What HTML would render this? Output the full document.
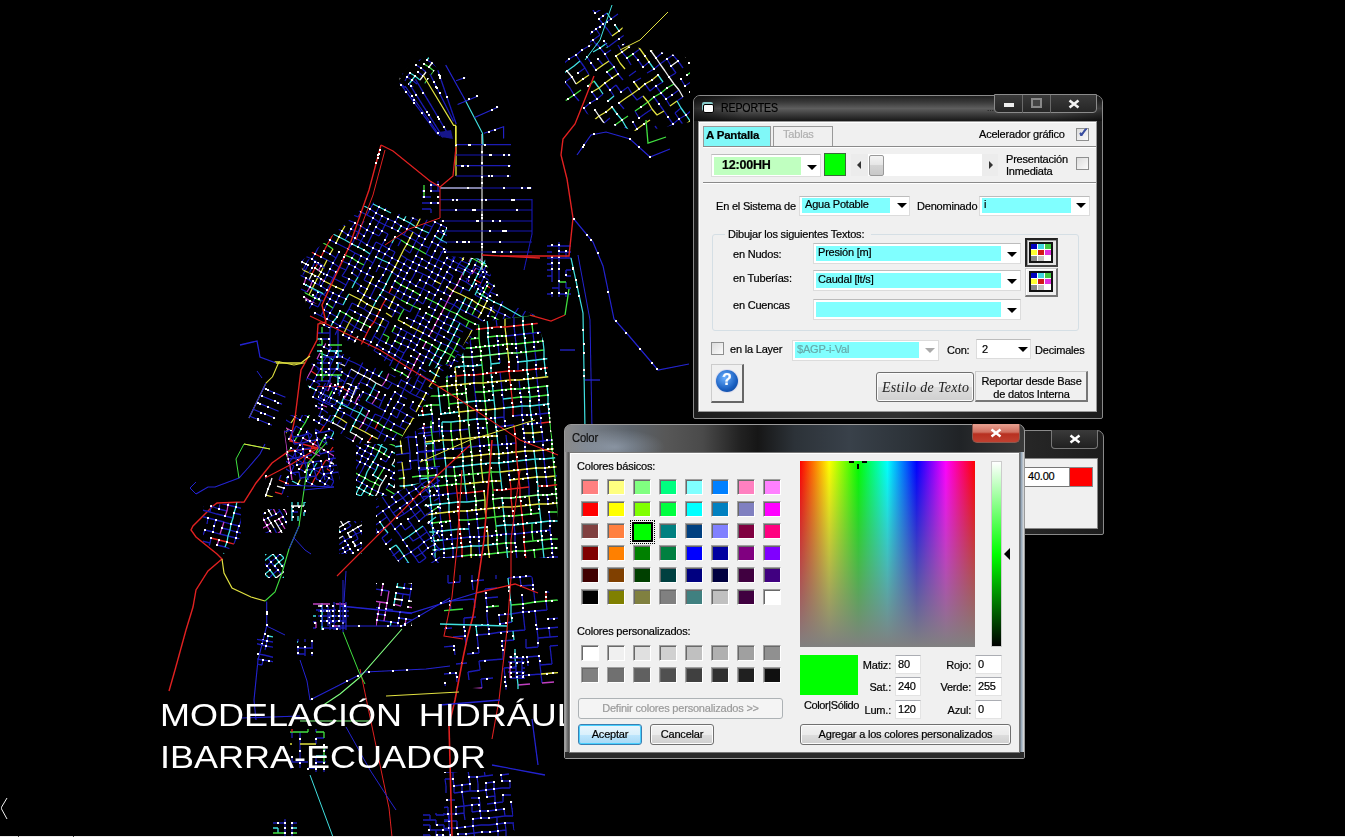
<!DOCTYPE html>
<html><head><meta charset="utf-8">
<style>
*{margin:0;padding:0;box-sizing:border-box}
html,body{width:1345px;height:837px;overflow:hidden;background:#000}
body{position:relative;font-family:"Liberation Sans",sans-serif;font-size:11px;color:#000}
.a{position:absolute}
.t{position:absolute;white-space:nowrap;line-height:1;letter-spacing:-0.2px;-webkit-text-stroke:0.2px currentColor}
#map{position:absolute;left:0;top:0}
.title{position:absolute;left:160px;color:#fff;font-size:32px;white-space:nowrap;line-height:1;transform-origin:0 0;transform:scaleX(1.125)}
/* windows */
.frame{position:absolute;border:1px solid #8a8a8a;border-radius:7px 7px 2px 2px;background:linear-gradient(#202020,#1a1a1a)}
.client{position:absolute;background:#f0f0f0;border:1px solid #999;box-shadow:inset 1px 1px 0 #fff}
.combo{position:absolute;background:#fff;border:1px solid #dcdcdc;border-top-color:#bcbcbc}
.cfill{position:absolute;left:2px;top:2px;bottom:2px;background:#80ffff}
.arr{position:absolute;width:0;height:0;border-left:5px solid transparent;border-right:5px solid transparent;border-top:5px solid #000}
.chk{position:absolute;width:13px;height:13px;border:1px solid #8e8f8f;background:linear-gradient(135deg,#dcdcdc,#fbfbfb)}
.btn{position:absolute;border:1px solid #707070;border-radius:2px;background:linear-gradient(#f2f2f2 0%,#ebebeb 50%,#dddddd 51%,#cfcfcf 100%);box-shadow:inset 0 0 0 1px #fcfcfc}
.sw{position:absolute;width:18px;height:16px;border:1px solid;border-color:#a0a0a0 #fff #fff #a0a0a0;box-shadow:inset 1px 1px 0 #696969}
.inp{position:absolute;background:#fff;border:1px solid #e3e3e3;border-top-color:#abadb3}
</style></head><body>
<svg id="map" width="1345" height="837" viewBox="0 0 1345 837" ><defs><filter id="bl" x="0" y="0" width="1" height="1"><feGaussianBlur stdDeviation="0.7"/></filter><clipPath id="c1"><polygon points="301.0,261.0 325.0,242.0 370.0,201.0 404.0,216.0 447.0,223.0 447.0,256.0 485.0,259.0 495.0,314.0 478.0,323.0 452.0,362.0 404.0,380.0 370.0,347.0 339.0,338.0 320.0,323.0 306.0,304.0"/></clipPath><clipPath id="c2"><polygon points="447.0,256.0 485.0,259.0 500.0,300.0 535.0,315.0 480.0,322.0 456.0,366.0 440.0,372.0 452.0,362.0 478.0,323.0 495.0,314.0"/></clipPath><clipPath id="c3"><polygon points="480.0,322.0 535.0,315.0 547.0,352.0 551.0,430.0 557.0,470.0 558.0,558.0 434.0,558.0 418.0,470.0 418.0,413.0 443.0,380.0 456.0,366.0"/></clipPath><clipPath id="c4"><polygon points="320.0,340.0 345.0,355.0 404.0,380.0 452.0,362.0 443.0,371.0 418.0,413.0 400.0,440.0 356.0,444.0 320.0,420.0 306.0,380.0"/></clipPath><clipPath id="c5"><polygon points="356.0,444.0 395.0,444.0 395.0,496.0 356.0,496.0"/></clipPath><clipPath id="c6"><polygon points="376.0,499.0 440.0,476.0 440.0,563.0 400.0,563.0 376.0,540.0"/></clipPath><clipPath id="c7"><polygon points="395.0,444.0 440.0,415.0 440.0,476.0 400.0,490.0"/></clipPath><clipPath id="c8"><polygon points="444.0,575.0 530.0,575.0 558.0,600.0 558.0,687.0 500.0,690.0 444.0,686.0"/></clipPath><clipPath id="c9"><polygon points="444.0,772.0 510.0,772.0 515.0,837.0 444.0,837.0"/></clipPath><clipPath id="c10"><polygon points="422.0,181.0 440.0,181.0 440.0,213.0 422.0,213.0"/></clipPath><clipPath id="c11"><polygon points="565.0,52.0 600.0,42.0 640.0,48.0 690.0,58.0 690.0,122.0 640.0,132.0 600.0,122.0 565.0,100.0"/></clipPath><clipPath id="c12"><polygon points="590.0,10.0 620.0,10.0 625.0,45.0 590.0,50.0"/></clipPath><clipPath id="c13"><polygon points="547.0,242.0 571.0,242.0 571.0,297.0 547.0,297.0"/></clipPath><clipPath id="c14"><polygon points="301.0,258.0 325.0,262.0 323.0,305.0 300.0,300.0"/></clipPath><clipPath id="c15"><polygon points="317.0,327.0 342.0,327.0 342.0,387.0 317.0,387.0"/></clipPath><clipPath id="c16"><polygon points="286.0,415.0 334.0,415.0 334.0,486.0 286.0,486.0"/></clipPath><clipPath id="c17"><polygon points="376.0,583.0 412.0,583.0 412.0,626.0 376.0,626.0"/></clipPath><clipPath id="c18"><polygon points="313.0,603.0 346.0,603.0 346.0,630.0 313.0,630.0"/></clipPath><clipPath id="c19"><polygon points="297.0,639.0 313.0,639.0 313.0,656.0 297.0,656.0"/></clipPath><clipPath id="c20"><polygon points="290.0,729.0 326.0,729.0 326.0,772.0 290.0,772.0"/></clipPath><clipPath id="c21"><polygon points="508.0,656.0 525.0,656.0 525.0,679.0 508.0,679.0"/></clipPath><clipPath id="c22"><polygon points="203.0,506.0 241.0,502.0 241.0,537.0 224.0,554.0 203.0,542.0"/></clipPath><clipPath id="c23"><polygon points="263.0,509.0 287.0,509.0 287.0,533.0 263.0,533.0"/></clipPath><clipPath id="c24"><polygon points="265.0,475.0 289.0,475.0 289.0,497.0 265.0,497.0"/></clipPath><clipPath id="c25"><polygon points="291.0,502.0 306.0,502.0 306.0,521.0 291.0,521.0"/></clipPath><clipPath id="c26"><polygon points="265.0,554.0 284.0,554.0 284.0,578.0 265.0,578.0"/></clipPath><clipPath id="c27"><polygon points="318.0,602.0 349.0,602.0 349.0,630.0 318.0,630.0"/></clipPath><clipPath id="c28"><polygon points="339.0,521.0 362.0,521.0 362.0,554.0 339.0,554.0"/></clipPath><clipPath id="c29"><polygon points="284.0,430.0 330.0,430.0 340.0,480.0 290.0,480.0"/></clipPath><clipPath id="c30"><polygon points="318.0,383.0 360.0,383.0 360.0,409.0 318.0,409.0"/></clipPath><clipPath id="c31"><polygon points="257.0,635.0 273.0,635.0 273.0,666.0 257.0,666.0"/></clipPath><clipPath id="c32"><polygon points="273.0,819.0 297.0,819.0 297.0,837.0 273.0,837.0"/></clipPath><clipPath id="c33"><polygon points="423.0,813.0 450.0,813.0 450.0,837.0 423.0,837.0"/></clipPath><clipPath id="c34"><polygon points="399.7,76.8 411.5,63.7 427.3,55.8 436.5,67.6 423.4,86.0 399.7,88.6"/></clipPath></defs><g filter="url(#bl)"><g clip-path="url(#c1)" stroke-width="1.3" fill="none"><path stroke="#1a1ab4" d="M338 89L345 93M345 93L351 96M351 96L357 99M357 99L363 103M363 103L369 106M375 109L382 112M382 112L388 116M388 116L394 119M400 122L406 126M406 126L413 129M413 129L419 132M419 132L425 135M425 135L431 139M431 139L437 142M437 142L443 145M443 145L450 149M450 149L456 152M579 218L586 221M586 221L592 224M592 224L598 228M342 99L348 102M348 102L354 105M354 105L360 108M360 108L366 112M366 112L372 115M490 177L496 181M496 181L502 184M502 184L508 187M515 191L521 194M521 194L527 197M539 204L545 207M545 207L552 210M552 210L558 214M558 214L564 217M576 223L583 227M583 227L589 230M589 230L595 233M345 108L351 111M555 219L561 223M561 223L567 226M342 113L348 117M348 117L354 120M354 120L360 123M360 123L366 126M373 130L379 133M385 136L391 140M397 143L403 146M403 146L410 149M410 149L416 153M416 153L422 156M422 156L428 159M428 159L434 163M434 163L440 166M440 166L447 169M453 172L459 176M459 176L465 179M471 182L478 186M478 186L484 189M484 189L490 192M490 192L496 195M496 195L502 199M502 199L508 202M508 202L515 205M515 205L521 209M527 212L533 215M533 215L539 218M539 218L546 222M546 222L552 225M552 225L558 228M558 228L564 232M564 232L570 235M570 235L576 238M576 238L583 241M583 241L589 245M339 119L345 122M345 122L351 126M369 135L376 139M376 139L382 142M382 142L388 145M394 149L400 152M400 152L407 155M407 155L413 158M413 158L419 162M419 162L425 165M425 165L431 168M431 168L437 172M437 172L444 175M444 175L450 178M450 178L456 181M456 181L462 185M462 185L468 188M468 188L475 191M475 191L481 195M481 195L487 198M499 204L505 208M512 211L518 214M524 218L530 221M530 221L536 224M543 227L549 231M549 231L555 234M555 234L561 237M561 237L567 241M567 241L573 244M573 244L580 247M348 131L354 135M354 135L360 138M360 138L366 141M366 141L373 144M379 148L385 151M385 151L391 154M391 154L397 158M397 158L403 161M410 164L416 167M416 167L422 171M422 171L428 174M428 174L434 177M434 177L441 181M441 181L447 184M453 187L459 190M459 190L465 194M465 194L471 197M478 200L484 204M484 204L490 207M490 207L496 210M496 210L502 213M509 217L515 220M515 220L521 223M345 137L351 140M351 140L357 144M357 144L363 147M370 150L376 153M376 153L382 157M382 157L388 160M388 160L394 163M394 163L400 167M400 167L407 170M407 170L413 173M413 173L419 177M425 180L431 183M431 183L438 186M444 190L450 193M450 193L456 196M456 196L462 200M468 203L475 206M487 213L493 216M493 216L499 219M536 239L543 242M549 246L555 249M555 249L561 252M561 252L567 255M573 259L580 262M317 130L323 133M323 133L329 136M397 172L404 176M422 186L428 189M428 189L434 192M434 192L441 195M441 195L447 199M447 199L453 202M453 202L459 205M459 205L465 209M465 209L472 212M472 212L478 215M484 218L490 222M490 222L496 225M496 225L502 228M509 232L515 235M515 235L521 238M527 241L533 245M533 245L540 248M540 248L546 251M546 251L552 255M552 255L558 258M558 258L564 261M564 261L570 264M570 264L577 268M314 135L320 139M320 139L326 142M326 142L333 145M333 145L339 149M339 149L345 152M345 152L351 155M351 155L357 158M376 168L382 172M388 175L394 178M394 178L401 181M401 181L407 185M407 185L413 188M413 188L419 191M512 241L518 244M518 244L524 247M524 247L530 250M530 250L536 254M536 254L543 257M543 257L549 260M549 260L555 264M555 264L561 267M567 270L574 273M373 174L379 177M385 181L391 184M391 184L397 187M397 187L404 190M404 190L410 194M410 194L416 197M416 197L422 200M428 204L435 207M435 207L441 210M441 210L447 213M447 213L453 217M453 217L459 220M459 220L465 223M465 223L472 227M472 227L478 230M478 230L484 233M484 233L490 236M490 236L496 240M496 240L503 243M503 243L509 246M509 246L515 250M515 250L521 253M521 253L527 256M527 256L533 259M533 259L540 263M540 263L546 266M518 259L524 262M524 262L530 265M537 268L543 272M543 272L549 275M549 275L555 278M555 278L561 282M561 282L567 285M305 153L311 156M311 156L317 159M317 159L323 162M323 162L330 166M336 169L342 172M342 172L348 176M348 176L354 179M354 179L360 182M360 182L367 185M367 185L373 189M373 189L379 192M379 192L385 195M385 195L391 199M391 199L398 202M398 202L404 205M410 208L416 212M416 212L422 215M422 215L428 218M428 218L435 222M435 222L441 225M441 225L447 228M447 228L453 231M453 231L459 235M459 235L466 238M466 238L472 241M472 241L478 245M478 245L484 248M484 248L490 251M490 251L496 254M496 254L503 258M503 258L509 261M509 261L515 264M515 264L521 268M527 271L534 274M534 274L540 277M540 277L546 281M546 281L552 284M552 284L558 287M558 287L564 291M370 195L376 198M376 198L382 201M382 201L388 204M388 204L394 208M394 208L401 211M401 211L407 214M407 214L413 218M413 218L419 221M425 224L432 227M438 231L444 234M444 234L450 237M456 241L462 244M462 244L469 247M469 247L475 250M475 250L481 254M481 254L487 257M500 264L506 267M506 267L512 270M512 270L518 273M518 273L524 277M524 277L530 280M530 280L537 283M537 283L543 287M543 287L549 290M555 293L561 296M552 299L558 302M370 209L376 213M376 213L382 216M382 216L388 219M388 219L395 222M395 222L401 226M401 226L407 229M407 229L413 232M413 232L419 236M419 236L425 239M432 242L438 245M438 245L444 249M444 249L450 252M456 255L463 259M475 265L481 268M481 268L487 272M487 272L493 275M500 278L506 282M512 285L518 288M518 288L524 291M524 291L531 295M531 295L537 298M537 298L543 301M543 301L549 305M549 305L555 308M293 176L299 179M299 179L305 182M305 182L311 185M311 185L317 189M317 189L324 192M324 192L330 195M330 195L336 199M336 199L342 202M342 202L348 205M354 208L361 212M361 212L367 215M367 215L373 218M373 218L379 222M379 222L385 225M385 225L392 228M392 228L398 231M398 231L404 235M404 235L410 238M410 238L416 241M416 241L422 245M422 245L429 248M447 258L453 261M453 261L459 264M459 264L466 268M466 268L472 271M472 271L478 274M478 274L484 277M484 277L490 281M290 181L296 185M296 185L302 188M302 188L308 191M308 191L314 194M320 198L327 201M327 201L333 204M339 208L345 211M345 211L351 214M351 214L358 217M376 227L382 231M382 231L388 234M395 237L401 240M426 254L432 257M432 257L438 260M438 260L444 263M444 263L450 267M450 267L456 270M456 270L463 273M500 293L506 296M506 296L512 300M524 306L531 309M287 187L293 190M293 190L299 194M299 194L305 197M305 197L311 200M317 203L324 207M324 207L330 210M330 210L336 213M342 217L348 220M348 220L355 223M355 223L361 226M361 226L367 230M367 230L373 233M373 233L379 236M404 249L410 253M416 256L422 259M422 259L429 263M429 263L435 266M435 266L441 269M447 272L453 276M460 279L466 282M466 282L472 286M478 289L484 292M484 292L490 296M490 296L497 299M497 299L503 302M503 302L509 305M509 305L515 309M515 309L521 312M521 312L528 315M534 319L540 322M540 322L546 325M283 193L290 196M290 196L296 199M296 199L302 203M302 203L308 206M308 206L314 209M321 213L327 216M327 216L333 219M333 219L339 222M339 222L345 226M351 229L358 232M358 232L364 236M376 242L382 245M382 245L389 249M389 249L395 252M401 255L407 259M407 259L413 262M413 262L419 265M419 265L426 268M426 268L432 272M432 272L438 275M438 275L444 278M444 278L450 282M450 282L457 285M457 285L463 288M463 288L469 291M475 295L481 298M481 298L487 301M494 305L500 308M500 308L506 311M506 311L512 314M512 314L518 318M518 318L525 321M525 321L531 324M280 199L287 202M287 202L293 205M293 205L299 208M305 212L311 215M311 215L317 218M324 222L330 225M330 225L336 228M336 228L342 231M342 231L348 235M348 235L355 238M355 238L361 241M361 241L367 245M367 245L373 248M373 248L379 251M379 251L385 254M385 254L392 258M392 258L398 261M398 261L404 264M404 264L410 268M410 268L416 271M416 271L423 274M423 274L429 277M429 277L435 281M389 263L395 267M395 267L401 270M401 270L407 273M420 280L426 283M426 283L432 286M432 286L438 290M438 290L444 293M444 293L450 296M457 300L463 303M463 303L469 306M469 306L475 309M475 309L481 313M488 316L494 319M494 319L500 323M500 323L506 326M274 210L280 213M287 217L293 220M293 220L299 223M299 223L305 226M311 230L318 233M318 233L324 236M324 236L330 240M330 240L336 243M336 243L342 246M342 246L348 249M348 249L355 253M355 253L361 256M361 256L367 259M367 259L373 263M379 266L386 269M386 269L392 272M392 272L398 276M398 276L404 279M404 279L410 282M410 282L416 286M416 286L423 289M423 289L429 292M429 292L435 295M441 299L447 302M447 302L454 305M454 305L460 309M460 309L466 312M466 312L472 315M472 315L478 318M478 318L484 322M497 328L503 332M503 332L509 335M515 338L522 341M522 341L528 345M528 345L534 348M302 232L308 235M488 331L494 334M494 334L500 337M500 337L506 341M506 341L512 344M512 344L518 347M518 347L525 350M525 350L531 354M268 221L274 225M274 225L281 228M281 228L287 231M299 238L305 241M305 241L311 244M311 244L318 248M324 251L330 254M330 254L336 258M342 261L349 264M349 264L355 267M355 267L361 271M361 271L367 274M367 274L373 277M379 281L386 284M392 287L398 290M398 290L404 294M404 294L410 297M410 297L417 300M417 300L423 304M429 307L435 310M441 314L447 317M447 317L454 320M454 320L460 323M460 323L466 327M466 327L472 330M472 330L478 333M478 333L485 337M497 343L503 346M509 350L515 353M515 353L522 356M321 257L327 260M327 260L333 263M333 263L339 267M339 267L346 270M352 273L358 277M364 280L370 283M370 283L376 286M376 286L383 290M383 290L389 293M389 293L395 296M395 296L401 300M438 319L444 323M444 323L451 326M451 326L457 329M457 329L463 332M469 336L475 339M475 339L481 342M481 342L488 346M494 349L500 352M500 352L506 355M506 355L512 359M512 359L519 362M519 362L525 365M262 233L268 236M268 236L274 240M274 240L281 243M281 243L287 246M287 246L293 249M293 249L299 253M305 256L312 259M312 259L318 263M318 263L324 266M330 269L336 272M342 276L349 279M349 279L355 282M355 282L361 286M361 286L367 289M380 295L386 299M386 299L392 302M392 302L398 305M398 305L404 309M404 309L410 312M417 315L423 318M423 318L429 322M435 325L441 328M441 328L448 332M448 332L454 335M454 335L460 338M472 345L478 348M478 348L485 351M485 351L491 355M491 355L497 358M503 361L509 364M509 364L516 368M516 368L522 371M321 272L327 275M327 275L333 278M333 278L339 281M339 281L346 285M358 291L364 295M364 295L370 298M370 298L376 301M383 304L389 308M389 308L395 311M395 311L401 314M407 318L414 321M414 321L420 324M420 324L426 327M426 327L432 331M432 331L438 334M438 334L444 337M444 337L451 341M451 341L457 344M457 344L463 347M463 347L469 350M475 354L482 357M482 357L488 360M494 364L500 367M506 370L512 373M512 373L519 377M423 333L429 336M429 336L435 340M435 340L441 343M441 343L448 346M448 346L454 350M454 350L460 353M460 353L466 356M253 250L259 253M259 253L265 257M265 257L271 260M284 267L290 270M290 270L296 273M296 273L302 276M309 280L315 283M315 283L321 286M321 286L327 290M327 290L333 293M333 293L339 296M339 296L346 299M352 303L358 306M358 306L364 309M364 309L370 313M370 313L377 316M377 316L383 319M383 319L389 322M395 326L401 329M401 329L407 332M407 332L414 336M414 336L420 339M250 256L256 259M256 259L262 262M262 262L268 266M275 269L281 272M281 272L287 276M287 276L293 279M293 279L299 282M299 282L306 285M306 285L312 289M312 289L318 292M318 292L324 295M324 295L330 299M330 299L336 302M336 302L343 305M349 309L355 312M355 312L361 315M361 315L367 318M367 318L374 322M374 322L380 325M380 325L386 328M392 332L398 335M398 335L404 338M404 338L411 341M411 341L417 345M423 348L429 351M429 351L435 355M435 355L441 358M448 361L454 364M460 368L466 371M472 374L479 378M479 378L485 381M485 381L491 384M491 384L497 387M497 387L503 391M401 344L408 347M408 347L414 350M414 350L420 354M420 354L426 357M426 357L432 360M432 360L438 364M438 364L445 367M244 267L250 271M256 274L262 277M269 281L275 284M281 287L287 290M287 290L293 294M299 297L306 300M306 300L312 304M312 304L318 307M324 310L330 313M330 313L337 317M343 320L349 323M349 323L355 327M355 327L361 330M361 330L367 333M374 336L380 340M380 340L386 343M386 343L392 346M392 346L398 350M398 350L404 353M411 356L417 359M417 359L423 363M435 369L442 373M442 373L448 376M448 376L454 379M454 379L460 382M460 382L466 386M472 389L479 392M479 392L485 396M485 396L491 399M491 399L497 402M497 402L503 405M253 280L259 283M259 283L265 286M265 286L272 290M278 293L284 296M284 296L290 299M290 299L296 303M296 303L303 306M303 306L309 309M315 313L321 316M321 316L327 319M327 319L333 322M333 322L340 326M340 326L346 329M346 329L352 332M364 339L371 342M377 345L383 349M383 349L389 352M389 352L395 355M395 355L401 359M401 359L408 362M408 362L414 365M420 368L426 372M426 372L432 375M439 378L445 382M445 382L451 385M451 385L457 388M457 388L463 391M324 325L330 328M343 335L349 338M349 338L355 341M367 348L374 351M374 351L380 354M380 354L386 358M386 358L392 361M405 368L411 371M423 377L429 381M247 291L253 294M253 294L259 298M266 301L272 304M272 304L278 308M278 308L284 311M284 311L290 314M290 314L296 317M346 344L352 347M352 347L358 350M414 380L420 383M420 383L426 386M426 386L432 390M432 390L439 393M439 393L445 396M238 294L244 297M250 300L256 304M262 307L269 310M275 313L281 317M281 317L287 320M287 320L293 323M300 327L306 330M312 333L318 336M324 340L330 343M337 346L343 350M343 350L349 353M349 353L355 356M355 356L361 359M368 363L374 366M374 366L380 369M380 369L386 373M386 373L392 376M398 379L405 382M405 382L411 386M411 386L417 389M417 389L423 392M423 392L429 396M436 399L442 402M442 402L448 405M448 405L454 409M454 409L460 412M460 412L466 415M473 419L479 422M479 422L485 425M485 425L491 428M278 322L284 326M284 326L290 329M290 329L297 332M297 332L303 336M303 336L309 339M315 342L321 345M321 345L327 349M334 352L340 355M340 355L346 359M346 359L352 362M358 365L365 368M365 368L371 372M371 372L377 375M383 378L389 382M389 382L395 385M395 385L402 388M402 388L408 391M408 391L414 395M420 398L426 401M432 405L439 408M445 411L451 414M451 414L457 418M457 418L463 421M463 421L470 424M476 428L482 431M232 305L238 308M238 308L244 312M244 312L250 315M250 315L256 318M256 318L263 322M269 325L275 328M275 328L281 331M281 331L287 335M293 338L300 341M300 341L306 345M306 345L312 348M312 348L318 351M318 351L324 354M324 354L331 358M331 358L337 361M337 361L343 364M355 371L361 374M368 377L374 381M374 381L380 384M222 308L229 311M229 311L235 314M235 314L241 317M241 317L247 321M247 321L253 324M253 324L260 327M260 327L266 331M272 334L278 337M284 340L290 344M290 344L297 347M309 354L315 357M315 357L321 360M321 360L328 363M328 363L334 367M334 367L340 370M340 370L346 373M346 373L352 377M352 377L358 380M358 380L365 383M365 383L371 386M371 386L377 390M377 390L383 393M389 396L395 400M395 400L402 403M402 403L408 406M408 406L414 409M420 413L426 416M426 416L433 419M433 419L439 423M439 423L445 426M445 426L451 429M451 429L457 432M457 432L463 436M463 436L470 439M470 439L476 442M476 442L482 446M275 343L281 346M281 346L287 349M287 349L294 353M294 353L300 356M312 363L318 366M318 366L324 369M337 376L343 379M368 392L374 395M380 399L386 402M386 402L392 405M392 405L399 409M399 409L405 412M411 415L417 418M417 418L423 422M423 422L430 425M436 428L442 432M442 432L448 435M454 438L460 441M460 441L467 445M467 445L473 448M216 319L223 322M235 329L241 332M241 332L247 335M247 335L253 339M253 339L260 342M260 342L266 345M266 345L272 349M278 352L284 355M284 355L290 358M297 362L303 365M309 368L315 372M321 375L328 378M328 378L334 381M340 385L346 388M346 388L352 391M352 391L358 395M358 395L365 398M365 398L371 401M371 401L377 404M377 404L383 408M389 411L396 414M396 414L402 418M402 418L408 421M408 421L414 424M414 424L420 428M426 431L433 434M433 434L439 437M439 437L445 441M445 441L451 444M451 444L457 447M464 451L470 454M470 454L476 457M216 334L223 337M229 340L235 344M235 344L241 347M247 350L253 354M253 354L260 357M260 357L266 360M266 360L272 363M284 370L291 373M291 373L297 377M297 377L303 380M303 380L309 383M309 383L315 386M315 386L321 390M321 390L328 393M328 393L334 396M334 396L340 400M346 403L352 406M352 406L359 409M359 409L365 413M371 416L377 419M383 423L389 426M389 426L396 429M396 429L402 432M402 432L408 436M408 436L414 439M414 439L420 442M427 446L433 449M433 449L439 452M439 452L445 455M445 455L451 459M451 459L457 462M457 462L464 465M464 465L470 469M207 336L213 340M226 346L232 349M232 349L238 353M244 356L250 359M250 359L257 363M257 363L263 366M281 376L288 379M288 379L294 382M294 382L300 386M300 386L306 389M306 389L312 392M318 395L325 399M325 399L331 402M331 402L337 405M343 409L349 412M349 412L356 415M356 415L362 418M362 418L368 422M368 422L374 425M374 425L380 428M380 428L386 432M405 441L411 445M411 445L417 448M417 448L423 451M423 451L430 455M204 342L210 345M210 345L216 349M216 349L223 352M223 352L229 355M229 355L235 358M235 358L241 362M247 365L254 368M260 372L266 375M272 378L278 381M284 385L291 388M291 388L297 391M303 395L309 398M309 398L315 401M315 401L322 404M322 404L328 408M328 408L334 411M334 411L340 414M340 414L346 418M346 418L352 421M352 421L359 424M359 424L365 427M371 431L377 434M377 434L383 437M383 437L390 441M390 441L396 444M402 447L408 450M408 450L414 454M414 454L420 457M427 460L433 464M433 464L439 467M439 467L445 470M445 470L451 473M458 477L464 480M312 407L319 410M319 410L325 413M325 413L331 417M331 417L337 420M337 420L343 423M343 423L349 427M349 427L356 430M356 430L362 433M362 433L368 436M368 436L374 440M374 440L380 443M386 446L393 450M393 450L399 453M399 453L405 456M405 456L411 459M411 459L417 463M417 463L424 466M424 466L430 469M436 473L442 476M442 476L448 479M454 482L461 486M198 353L204 357M204 357L210 360M217 363L223 367M223 367L229 370M235 373L241 376M241 376L247 380M247 380L254 383M254 383L260 386M260 386L266 390M266 390L272 393M272 393L278 396M278 396L285 399M285 399L291 403M297 406L303 409M303 409L309 413M309 413L315 416M328 423L334 426M340 429L346 432M353 436L359 439M359 439L365 442M365 442L371 446M371 446L377 449M377 449L383 452M383 452L390 455M390 455L396 459M396 459L402 462M402 462L408 465M408 465L414 469M414 469L421 472M421 472L427 475M427 475L433 478M433 478L439 482M439 482L445 485M445 485L451 488M338 89L335 95M335 95L332 101M332 101L329 107M329 107L326 112M326 112L323 118M320 124L317 130M314 135L311 141M305 153L302 158M302 158L299 164M299 164L296 170M296 170L293 176M293 176L290 181M290 181L287 187M287 187L283 193M271 216L268 221M268 221L265 227M265 227L262 233M262 233L259 239M256 244L253 250M253 250L250 256M250 256L247 262M247 262L244 267M244 267L241 273M241 273L238 279M238 279L235 285M235 285L232 290M232 290L229 296M229 296L225 302M225 302L222 308M222 308L219 313M219 313L216 319M216 319L213 325M213 325L210 331M207 336L204 342M204 342L201 348M345 93L342 99M342 99L338 104M338 104L335 110M335 110L332 116M332 116L329 121M329 121L326 127M326 127L323 133M323 133L320 139M320 139L317 144M317 144L314 150M314 150L311 156M311 156L308 162M308 162L305 167M305 167L302 173M302 173L299 179M299 179L296 185M296 185L293 190M293 190L290 196M290 196L287 202M280 213L277 219M277 219L274 225M274 225L271 231M271 231L268 236M268 236L265 242M262 248L259 253M259 253L256 259M256 259L253 265M253 265L250 271M250 271L247 276M235 299L232 305M226 317L223 322M219 328L216 334M216 334L213 340M213 340L210 345M207 351L204 357M351 96L348 102M348 102L345 108M345 108L342 113M342 113L339 119M339 119L335 125M335 125L332 130M332 130L329 136M329 136L326 142M326 142L323 148M320 153L317 159M317 159L314 165M314 165L311 171M311 171L308 176M308 176L305 182M305 182L302 188M299 194L296 199M296 199L293 205M293 205L290 211M290 211L287 217M284 222L281 228M281 228L278 234M278 234L274 240M271 245L268 251M268 251L265 257M265 257L262 262M262 262L259 268M259 268L256 274M256 274L253 280M253 280L250 285M250 285L247 291M247 291L244 297M244 297L241 303M241 303L238 308M238 308L235 314M235 314L232 320M232 320L229 326M229 326L226 331M226 331L223 337M220 343L216 349M213 354L210 360M281 243L278 249M278 249L275 254M275 254L271 260M271 260L268 266M268 266L265 272M265 272L262 277M262 277L259 283M259 283L256 289M256 289L253 294M253 294L250 300M250 300L247 306M247 306L244 312M244 312L241 317M241 317L238 323M235 329L232 335M229 340L226 346M363 103L360 108M360 108L357 114M357 114L354 120M354 120L351 126M351 126L348 131M336 154L333 160M333 160L330 166M235 344L232 349M232 349L229 355M229 355L226 361M284 267L281 272M281 272L278 278M278 278L275 284M275 284L272 290M272 290L269 295M269 295L266 301M266 301L262 307M262 307L259 313M253 339L250 345M250 345L247 350M247 350L244 356M244 356L241 362M241 362L238 367M238 367L235 373M382 112L379 118M379 118L376 124M376 124L373 130M373 130L369 135M369 135L366 141M366 141L363 147M363 147L360 153M360 153L357 158M357 158L354 164M354 164L351 170M345 181L342 187M339 193L336 199M333 204L330 210M330 210L327 216M327 216L324 222M324 222L321 227M321 227L318 233M318 233L315 239M308 250L305 256M305 256L302 262M302 262L299 267M299 267L296 273M293 279L290 285M290 285L287 290M287 290L284 296M284 296L281 302M281 302L278 308M278 308L275 313M275 313L272 319M272 319L269 325M266 331L263 336M263 336L260 342M260 342L257 348M257 348L253 354M253 354L250 359M250 359L247 365M247 365L244 371M244 371L241 376M348 190L345 196M345 196L342 202M342 202L339 208M339 208L336 213M336 213L333 219M333 219L330 225M330 225L327 231M327 231L324 236M324 236L321 242M321 242L318 248M318 248L315 254M315 254L312 259M308 265L305 271M305 271L302 276M302 276L299 282M299 282L296 288M296 288L293 294M293 294L290 299M290 299L287 305M287 305L284 311M284 311L281 317M281 317L278 322M278 322L275 328M275 328L272 334M272 334L269 340M269 340L266 345M266 345L263 351M263 351L260 357M260 357L257 363M257 363L254 368M254 368L251 374M251 374L247 380M394 119L391 125M388 131L385 136M385 136L382 142M382 142L379 148M379 148L376 153M376 153L373 159M370 165L367 171M367 171L364 176M354 194L351 199M348 205L345 211M339 222L336 228M281 331L278 337M278 337L275 343M272 349L269 354M269 354L266 360M266 360L263 366M263 366L260 372M260 372L257 377M400 122L397 128M397 128L394 134M394 134L391 140M391 140L388 145M388 145L385 151M385 151L382 157M382 157L379 163M379 163L376 168M299 312L296 317M296 317L293 323M290 329L287 335M287 335L284 340M284 340L281 346M281 346L278 352M278 352L275 358M275 358L272 363M272 363L269 369M269 369L266 375M263 381L260 386M406 126L403 131M403 131L400 137M400 137L397 143M397 143L394 149M394 149L391 154M391 154L388 160M388 160L385 166M385 166L382 172M382 172L379 177M376 183L373 189M373 189L370 195M367 200L364 206M361 212L358 217M355 223L351 229M351 229L348 235M348 235L345 240M339 252L336 258M336 258L333 263M333 263L330 269M330 269L327 275M327 275L324 281M324 281L321 286M318 292L315 298M315 298L312 304M312 304L309 309M309 309L306 315M306 315L303 321M303 321L300 327M297 332L293 338M293 338L290 344M290 344L287 349M287 349L284 355M284 355L281 361M281 361L278 367M278 367L275 372M272 378L269 384M269 384L266 390M410 135L406 140M406 140L403 146M403 146L400 152M400 152L397 158M397 158L394 163M391 169L388 175M388 175L385 181M382 186L379 192M376 198L373 204M373 204L370 209M370 209L367 215M364 221L361 226M361 226L358 232M358 232L355 238M355 238L352 244M352 244L348 249M345 255L342 261M342 261L339 267M339 267L336 272M336 272L333 278M333 278L330 284M330 284L327 290M327 290L324 295M321 301L318 307M315 313L312 318M309 324L306 330M306 330L303 336M300 341L297 347M297 347L294 353M294 353L290 358M410 149L407 155M407 155L403 161M403 161L400 167M400 167L397 172M397 172L394 178M394 178L391 184M391 184L388 190M382 201L379 207M379 207L376 213M376 213L373 218M373 218L370 224M370 224L367 230M367 230L364 236M364 236L361 241M361 241L358 247M355 253L352 258M352 258L349 264M349 264L346 270M346 270L342 276M333 293L330 299M330 299L327 304M327 304L324 310M324 310L321 316M318 322L315 327M425 135L422 141M410 164L407 170M407 170L404 176M404 176L401 181M401 181L397 187M397 187L394 193M394 193L391 199M391 199L388 204M388 204L385 210M382 216L379 222M379 222L376 227M376 227L373 233M373 233L370 239M370 239L367 245M361 256L358 262M358 262L355 267M355 267L352 273M349 279L346 285M346 285L343 290M343 290L339 296M339 296L336 302M336 302L333 308M333 308L330 313M330 313L327 319M324 325L321 331M321 331L318 336M318 336L315 342M315 342L312 348M309 354L306 359M306 359L303 365M294 382L291 388M291 388L288 394M288 394L285 399M431 139L428 145M428 145L425 150M422 156L419 162M419 162L416 167M416 167L413 173M413 173L410 179M410 179L407 185M407 185L404 190M401 196L398 202M398 202L394 208M388 219L385 225M385 225L382 231M382 231L379 236M376 242L373 248M373 248L370 254M370 254L367 259M367 259L364 265M364 265L361 271M361 271L358 277M297 391L294 397M294 397L291 403M428 159L425 165M419 177L416 182M416 182L413 188M407 199L404 205M404 205L401 211M401 211L398 217M398 217L395 222M395 222L392 228M388 234L385 240M385 240L382 245M382 245L379 251M379 251L376 257M376 257L373 263M373 263L370 268M370 268L367 274M367 274L364 280M361 286L358 291M352 303L349 309M349 309L346 314M346 314L343 320M343 320L340 326M340 326L337 331M337 331L334 337M327 349L324 354M324 354L321 360M321 360L318 366M318 366L315 372M315 372L312 377M312 377L309 383M309 383L306 389M306 389L303 395M303 395L300 400M300 400L297 406M443 145L440 151M440 151L437 157M437 157L434 163M434 163L431 168M431 168L428 174M392 243L389 249M389 249L385 254M385 254L382 260M382 260L379 266M379 266L376 272M321 375L318 381M318 381L315 386M315 386L312 392M312 392L309 398M309 398L306 404M306 404L303 409M450 149L447 154M444 160L440 166M440 166L437 172M437 172L434 177M434 177L431 183M422 200L419 206M419 206L416 212M416 212L413 218M413 218L410 223M410 223L407 229M407 229L404 235M401 240L398 246M395 252L392 258M392 258L389 263M389 263L386 269M386 269L383 275M383 275L379 281M379 281L376 286M376 286L373 292M373 292L370 298M367 304L364 309M361 315L358 321M358 321L355 327M355 327L352 332M352 332L349 338M349 338L346 344M343 350L340 355M340 355L337 361M334 367L331 372M331 372L328 378M325 384L321 390M321 390L318 395M318 395L315 401M315 401L312 407M312 407L309 413M444 175L441 181M441 181L438 186M438 186L434 192M434 192L431 198M431 198L428 204M325 399L322 404M322 404L319 410M456 167L453 172M453 172L450 178M450 178L447 184M444 190L441 195M441 195L438 201M438 201L435 207M435 207L431 213M431 213L428 218M428 218L425 224M425 224L422 230M422 230L419 236M419 236L416 241M416 241L413 247M413 247L410 253M407 259L404 264M404 264L401 270M401 270L398 276M398 276L395 281M395 281L392 287M468 158L465 164M462 170L459 176M459 176L456 181M456 181L453 187M441 210L438 216M435 222L432 227M432 227L429 233M429 233L425 239M425 239L422 245M422 245L419 250M419 250L416 256M416 256L413 262M413 262L410 268M410 268L407 273M407 273L404 279M404 279L401 285M401 285L398 290M398 290L395 296M377 331L374 336M374 336L371 342M371 342L367 348M364 354L361 359M358 365L355 371M355 371L352 377M352 377L349 382M349 382L346 388M346 388L343 394M337 405L334 411M459 190L456 196M453 202L450 208M450 208L447 213M447 213L444 219M441 225L438 231M438 231L435 236M435 236L432 242M432 242L429 248M429 248L426 254M422 259L419 265M419 265L416 271M416 271L413 277M413 277L410 282M410 282L407 288M407 288L404 294M404 294L401 300M398 305L395 311M395 311L392 317M389 322L386 328M386 328L383 334M383 334L380 340M380 340L377 345M377 345L374 351M374 351L371 357M371 357L368 363M368 363L365 368M365 368L361 374M358 380L355 386M355 386L352 391M352 391L349 397M349 397L346 403M346 403L343 409M343 409L340 414M441 240L438 245M438 245L435 251M435 251L432 257M432 257L429 263M429 263L426 268M423 274L420 280M420 280L416 286M413 291L410 297M410 297L407 303M355 400L352 406M352 406L349 412M346 418L343 423M343 423L340 429M487 168L484 174M481 180L478 186M478 186L475 191M462 214L459 220M459 220L456 226M456 226L453 231M453 231L450 237M450 237L447 243M444 249L441 254M441 254L438 260M438 260L435 266M435 266L432 272M432 272L429 277M429 277L426 283M426 283L423 289M423 289L420 295M420 295L417 300M417 300L413 306M413 306L410 312M401 329L398 335M398 335L395 341M395 341L392 346M392 346L389 352M389 352L386 358M386 358L383 363M383 363L380 369M374 381L371 386M371 386L368 392M368 392L365 398M362 404L359 409M359 409L356 415M356 415L352 421M352 421L349 427M349 427L346 432M490 177L487 183M487 183L484 189M484 189L481 195M481 195L478 200M478 200L475 206M475 206L472 212M468 218L465 223M462 229L459 235M459 235L456 241M456 241L453 246M453 246L450 252M450 252L447 258M447 258L444 263M444 263L441 269M441 269L438 275M438 275L435 281M435 281L432 286M429 292L426 298M426 298L423 304M420 309L417 315M417 315L414 321M414 321L411 327M407 332L404 338M404 338L401 344M401 344L398 350M398 350L395 355M395 355L392 361M392 361L389 367M389 367L386 373M386 373L383 378M383 378L380 384M380 384L377 390M377 390L374 395M374 395L371 401M371 401L368 407M368 407L365 413M365 413L362 418M362 418L359 424M359 424L356 430M499 175L496 181M496 181L493 186M493 186L490 192M490 192L487 198M487 198L484 204M484 204L481 209M481 209L478 215M478 215L475 221M475 221L472 227M469 232L466 238M466 238L462 244M462 244L459 250M459 250L456 255M456 255L453 261M453 261L450 267M450 267L447 272M447 272L444 278M444 278L441 284M441 284L438 290M438 290L435 295M435 295L432 301M432 301L429 307M426 313L423 318M423 318L420 324M420 324L417 330M417 330L414 336M414 336L411 341M411 341L408 347M408 347L404 353M404 353L401 359M401 359L398 364M398 364L395 370M395 370L392 376M392 376L389 382M389 382L386 387M386 387L383 393M380 399L377 404M377 404L374 410M374 410L371 416M502 184L499 190M499 190L496 195M496 195L493 201M493 201L490 207M490 207L487 213M487 213L484 218M484 218L481 224M481 224L478 230M478 230L475 236M469 247L466 253M466 253L463 259M463 259L459 264M459 264L456 270M453 276L450 282M450 282L447 287M447 287L444 293M441 299L438 304M438 304L435 310M435 310L432 316M432 316L429 322M429 322L426 327M426 327L423 333M423 333L420 339M420 339L417 345M417 345L414 350M408 362L405 368M402 373L398 379M398 379L395 385M392 391L389 396M389 396L386 402M383 408L380 414M377 419L374 425M374 425L371 431M371 431L368 436M368 436L365 442M405 382L402 388M402 388L399 394M399 394L395 400M395 400L392 405M392 405L389 411M386 417L383 423M380 428L377 434M374 440L371 446M484 248L481 254M481 254L478 259M478 259L475 265M475 265L472 271M472 271L469 277M469 277L466 282M463 288L460 294M457 300L454 305M454 305L450 311M450 311L447 317M447 317L444 323M444 323L441 328M441 328L438 334M438 334L435 340M432 345L429 351M429 351L426 357M426 357L423 363M423 363L420 368M420 368L417 374M417 374L414 380M414 380L411 386M530 191L527 197M527 197L524 203M521 209L518 214M518 214L515 220M512 226L509 232M506 237L503 243M503 243L499 249M496 254L493 260M493 260L490 266M487 272L484 277M484 277L481 283M481 283L478 289M536 195L533 200M533 200L530 206M527 212L524 218M524 218L521 223M518 229L515 235M536 209L533 215M530 221L527 227M527 227L524 232M524 232L521 238M518 244L515 250M515 250L512 255M512 255L509 261M509 261L506 267M506 267L503 273M497 284L494 290M429 410L426 416M426 416L423 422M423 422L420 428M420 428L417 433M417 433L414 439M414 439L411 445M408 450L405 456M405 456L402 462M545 207L542 213M542 213L539 218M539 218L536 224M536 224L533 230M533 230L530 236M527 241L524 247M524 247L521 253M521 253L518 259M518 259L515 264M515 264L512 270M512 270L509 276M509 276L506 282M503 287L500 293M494 305L491 310M491 310L488 316M484 322L481 327M481 327L478 333M478 333L475 339M475 339L472 345M472 345L469 350M469 350L466 356M466 356L463 362M451 385L448 391M448 391L445 396M442 402L439 408M439 408L436 414M436 414L433 419M433 419L430 425M430 425L426 431M423 437L420 442M420 442L417 448M417 448L414 454M414 454L411 459M411 459L408 465M555 205L552 210M552 210L549 216M549 216L546 222M546 222L543 227M543 227L539 233M536 239L533 245M533 245L530 250M530 250L527 256M527 256L524 262M524 262L521 268M518 273L515 279M512 285L509 291M509 291L506 296M506 296L503 302M503 302L500 308M482 357L479 363M479 363L475 368M472 374L469 380M469 380L466 386M463 391L460 397M460 397L457 403M457 403L454 409M454 409L451 414M451 414L448 420M445 426L442 432M442 432L439 437M439 437L436 443M436 443L433 449M433 449L430 455M427 460L424 466M424 466L421 472M512 314L509 320M509 320L506 326M506 326L503 332M503 332L500 337M500 337L497 343M494 349L491 355M491 355L488 360M488 360L485 366M485 366L482 372M482 372L479 378M479 378L476 383M476 383L472 389M472 389L469 395M469 395L466 400M466 400L463 406M463 406L460 412M460 412L457 418M451 429L448 435M448 435L445 441M442 446L439 452M439 452L436 458M430 469L427 475M570 220L567 226M567 226L564 232M512 329L509 335M509 335L506 341M485 381L482 387M482 387L479 392M479 392L476 398M476 398L473 404M470 409L466 415M466 415L463 421M463 421L460 427M460 427L457 432M457 432L454 438M454 438L451 444M451 444L448 450M445 455L442 461M442 461L439 467M436 473L433 478M491 384L488 390M488 390L485 396M485 396L482 401M482 401L479 407M479 407L476 413M476 413L473 419M473 419L470 424M470 424L467 430M463 436L460 441M457 447L454 453M451 459L448 464M448 464L445 470M586 221L583 227M583 227L580 232M576 238L573 244M573 244L570 250M564 261L561 267M561 267L558 273M555 278L552 284M552 284L549 290M549 290L546 296M546 296L543 301M543 301L540 307M537 313L534 319M534 319L531 324M531 324L528 330M528 330L525 336M515 353L512 359M512 359L509 364M509 364L506 370M506 370L503 376M503 376L500 382M497 387L494 393M491 399L488 405M488 405L485 410M485 410L482 416M482 416L479 422M479 422L476 428M476 428L473 433M473 433L470 439M470 439L467 445M467 445L464 451M464 451L461 456M461 456L457 462M457 462L454 468M454 468L451 473M451 473L448 479M448 479L445 485M592 224L589 230M589 230L586 236M586 236L583 241M583 241L580 247M580 247L577 253M577 253L573 259M573 259L570 264M570 264L567 270M567 270L564 276M564 276L561 282M561 282L558 287M558 287L555 293M555 293L552 299M552 299L549 305M549 305L546 310M546 310L543 316M540 322L537 328M534 333L531 339M531 339L528 345M528 345L525 350M525 350L522 356M522 356L519 362M519 362L516 368M516 368L512 373M512 373L509 379M509 379L506 385M506 385L503 391M503 391L500 396M500 396L497 402M494 408L491 414M491 414L488 419M488 419L485 425M482 431L479 437M479 437L476 442M470 454L467 460M467 460L464 465M461 471L458 477M454 482L451 488M467 474L464 480M464 480L461 486M461 486L458 492"/><path stroke="#40e0e0" d="M456 152L462 155M462 155L468 158M468 158L474 162M474 162L481 165M481 165L487 168M487 168L493 172M499 175L505 178M505 178L511 182M329 121L335 125M342 128L348 131M533 230L539 233M539 233L546 236M546 236L552 240M564 246L570 250M570 250L577 253M577 253L583 256M499 219L506 223M506 223L512 226M512 226L518 229M524 232L530 236M530 236L536 239M329 136L336 140M336 140L342 143M342 143L348 146M354 149L360 153M360 153L366 156M373 159L379 163M379 163L385 166M385 166L391 169M391 169L397 172M317 144L323 148M336 154L342 158M342 158L348 161M348 161L354 164M360 167L367 171M367 171L373 174M308 162L314 165M314 165L320 168M320 168L326 172M326 172L333 175M333 175L339 178M339 178L345 181M351 185L357 188M357 188L364 191M364 191L370 195M299 164L305 167M311 171L317 174M317 174L323 177M323 177L330 181M330 181L336 184M336 184L342 187M342 187L348 190M348 190L354 194M354 194L361 197M361 197L367 200M373 204L379 207M379 207L385 210M385 210L391 213M398 217L404 220M404 220L410 223M410 223L416 227M416 227L422 230M422 230L429 233M435 236L441 240M441 240L447 243M447 243L453 246M453 246L459 250M459 250L466 253M466 253L472 256M472 256L478 259M478 259L484 263M484 263L490 266M490 266L497 269M497 269L503 273M503 273L509 276M509 276L515 279M515 279L521 282M521 282L527 286M527 286L534 289M534 289L540 292M540 292L546 296M314 180L320 183M327 186L333 190M333 190L339 193M339 193L345 196M345 196L351 199M351 199L357 203M357 203L364 206M364 206L370 209M490 281L497 284M497 284L503 287M521 297L527 300M540 307L546 310M277 204L284 208M284 208L290 211M296 214L302 217M302 217L308 221M314 224L321 227M321 227L327 231M333 234L339 237M339 237L345 240M345 240L352 244M352 244L358 247M358 247L364 250M364 250L370 254M376 257L382 260M382 260L389 263M485 366L491 369M491 369L497 373M503 376L509 379M509 379L516 382M235 285L241 288M241 288L247 291M296 317L303 321M309 324L315 327M315 327L321 331M321 331L327 334M327 334L334 337M340 340L346 344M445 396L451 400M451 400L457 403M463 406L470 409M470 409L476 413M476 413L482 416M482 416L488 419M229 296L235 299M235 299L241 303M241 303L247 306M247 306L253 309M253 309L259 313M259 313L266 316M272 319L278 322M417 404L423 407M423 407L429 410M429 410L436 414M436 414L442 417M448 420L454 423M460 427L467 430M473 433L479 437M479 437L485 440M343 379L349 382M349 382L355 386M355 386L362 389M362 389L368 392M448 450L454 453M454 453L461 456M461 456L467 460M467 460L473 463M283 193L280 199M280 199L277 204M274 210L271 216M226 346L223 352M223 352L220 358M220 358L217 363M372 115L369 121M369 121L366 126M366 126L363 132M363 132L360 138M360 138L357 144M357 144L354 149M354 149L351 155M351 155L348 161M345 167L342 172M342 172L339 178M339 178L336 184M336 184L333 190M330 195L327 201M327 201L324 207M324 207L321 213M321 213L317 218M317 218L314 224M314 224L311 230M311 230L308 235M263 322L260 327M260 327L256 333M256 333L253 339M388 116L385 122M385 122L382 127M382 127L379 133M379 133L376 139M376 139L373 144M373 144L370 150M370 150L366 156M366 156L363 162M360 167L357 173M357 173L354 179M354 179L351 185M302 291L299 297M299 297L296 303M293 308L290 314M290 314L287 320M287 320L284 326M284 326L281 331M373 174L370 180M370 180L367 185M413 158L410 164M358 277L355 282M355 282L352 288M349 294L346 299M346 299L343 305M340 311L337 317M337 317L333 322M333 322L330 328M327 334L324 340M324 340L321 345M318 351L315 357M315 357L312 363M312 363L309 368M309 368L306 374M306 374L303 380M303 380L300 386M428 174L425 180M425 180L422 186M422 186L419 191M419 191L416 197M413 203L410 208M410 208L407 214M407 214L404 220M401 226L398 231M395 237L392 243M392 272L389 278M389 278L386 284M386 284L383 290M383 290L380 295M380 295L376 301M376 301L373 307M380 325L377 331M481 165L477 171M477 171L474 177M474 177L471 182M468 188L465 194M465 194L462 200M462 200L459 205M459 205L456 211M456 211L453 217M450 222L447 228M447 228L444 234M444 234L441 240M411 386L408 391M408 391L405 397M405 397L402 403M396 414L393 420M393 420L389 426M389 426L386 432M383 437L380 443M524 188L521 194M518 200L515 205M515 205L512 211M509 217L506 223M506 223L502 228M502 228L499 234M496 240L493 245M490 251L487 257M487 257L484 263M484 263L481 268M481 268L478 274M478 274L475 280M475 280L472 286M472 286L469 291M466 297L463 303M463 303L460 309M460 309L457 314M457 314L454 320M454 320L451 326M451 326L448 332M441 343L438 349M438 349L435 355M435 355L432 360M432 360L429 366M478 289L475 295M472 300L469 306M469 306L466 312M460 323L457 329M457 329L454 335M454 335L451 341M451 341L448 346M448 346L445 352M445 352L441 358M441 358L438 364M438 364L435 369M435 369L432 375M432 375L429 381M429 381L426 386M423 392L420 398M420 398L417 404M417 404L414 409M411 415L408 421M408 421L405 427M405 427L402 432M402 432L399 438M396 444L393 450M393 450L390 455M417 418L414 424M414 424L411 430M411 430L408 436M408 436L405 441M405 441L402 447M402 447L399 453M399 453L396 459M558 214L555 219M552 225L549 231M549 231L546 236M543 242L540 248M540 248L536 254M533 259L530 265M530 265L527 271M527 271L524 277M524 277L521 282M521 282L518 288M515 294L512 300M509 305L506 311M567 211L564 217M564 217L561 223M561 223L558 228M555 234L552 240M552 240L549 246M549 246L546 251M543 257L540 263M540 263L537 268M537 268L534 274M534 274L530 280M530 280L527 286M527 286L524 291M524 291L521 297M521 297L518 303"/><path stroke="#40e040" d="M511 182L518 185M518 185L524 188M524 188L530 191M549 201L555 205M567 211L573 214M573 214L579 218M320 124L326 127M332 130L339 134M339 134L345 137M546 266L552 269M552 269L558 273M558 273L564 276M564 276L571 279M314 150L320 153M320 153L326 157M326 157L333 160M333 160L339 163M339 163L345 167M345 167L351 170M351 170L357 173M357 173L364 176M370 180L376 183M376 183L382 186M382 186L388 190M388 190L394 193M394 193L401 196M401 196L407 199M413 203L419 206M419 206L425 209M425 209L431 213M431 213L438 216M438 216L444 219M444 219L450 222M450 222L456 226M456 226L462 229M475 236L481 239M487 242L493 245M493 245L499 249M499 249L506 252M506 252L512 255M512 255L518 259M401 240L407 244M407 244L413 247M413 247L419 250M419 250L426 254M271 216L277 219M277 219L284 222M284 222L290 226M290 226L296 229M308 235L315 239M315 239L321 242M321 242L327 245M327 245L333 249M345 255L352 258M352 258L358 262M358 262L364 265M395 281L401 285M401 285L407 288M407 288L413 291M413 291L420 295M426 298L432 301M432 301L438 304M438 304L444 308M444 308L450 311M450 311L457 314M457 314L463 318M463 318L469 321M469 321L475 324M475 324L481 327M481 327L488 331M401 300L407 303M407 303L413 306M413 306L420 309M426 313L432 316M432 316L438 319M466 356L472 359M472 359L479 363M479 363L485 366M420 339L426 342M426 342L432 345M432 345L438 349M438 349L445 352M445 352L451 355M451 355L457 359M457 359L463 362M463 362L469 365M469 365L475 368M475 368L482 372M488 375L494 378M494 378L500 382M500 382L506 385M506 385L513 388M247 262L253 265M259 268L265 272M265 272L272 275M272 275L278 278M278 278L284 281M284 281L290 285M302 291L309 295M309 295L315 298M315 298L321 301M327 304L333 308M340 311L346 314M346 314L352 318M352 318L358 321M358 321L364 324M364 324L370 327M383 334L389 337M395 341L401 344M445 367L451 370M451 370L457 373M457 373L463 377M469 380L476 383M476 383L482 387M488 390L494 393M494 393L500 396M241 273L247 276M247 276L253 280M469 395L476 398M476 398L482 401M482 401L488 405M488 405L494 408M494 408L500 411M244 282L250 285M250 285L256 289M256 289L262 292M262 292L269 295M269 295L275 299M275 299L281 302M281 302L287 305M287 305L293 308M293 308L299 312M299 312L306 315M429 381L435 384M358 350L364 354M364 354L371 357M371 357L377 360M383 363L389 367M389 367L395 370M395 370L402 373M402 373L408 377M219 313L226 317M226 317L232 320M232 320L238 323M238 323L244 326M256 333L263 336M263 336L269 340M269 340L275 343M380 414L386 417M386 417L393 420M399 423L405 427M405 427L411 430M411 430L417 433M417 433L423 437M423 437L430 440M430 440L436 443M436 443L442 446M442 446L448 450M340 400L346 403M201 348L207 351M213 354L220 358M220 358L226 361M238 367L244 371M244 371L251 374M269 384L275 387M275 387L281 390M288 394L294 397M294 397L300 400M300 400L306 404M306 404L312 407M354 105L351 111M348 117L345 122M345 122L342 128M342 128L339 134M339 134L336 140M336 140L333 145M329 151L326 157M326 157L323 162M323 162L320 168M320 168L317 174M317 174L314 180M314 180L311 185M311 185L308 191M308 191L305 197M302 203L299 208M299 208L296 214M296 214L293 220M293 220L290 226M290 226L287 231M287 231L284 237M284 237L281 243M351 185L348 190M300 386L297 391M447 184L444 190M337 420L334 426M404 309L401 314M401 314L398 320M395 326L392 332M389 337L386 343M377 360L374 366M374 366L371 372M371 372L368 377M365 383L362 389M362 389L358 395M358 395L355 400M475 191L471 197M471 197L468 203M468 203L465 209M465 209L462 214M518 185L515 191M515 191L512 196M512 196L508 202M505 208L502 213M499 219L496 225M496 225L493 231M493 231L490 236M490 236L487 242M487 242L484 248M515 235L512 241M512 241L509 246M509 246L506 252M503 258L500 264M500 264L497 269M497 269L493 275M493 275L490 281M490 281L487 286M487 286L484 292M484 292L481 298M481 298L478 304M478 304L475 309M475 309L472 315M469 321L466 327M460 338L457 344M457 344L454 350M454 350L451 355M451 355L448 361M448 361L445 367M445 367L442 373M442 373L439 378M439 378L435 384M435 384L432 390M429 396L426 401M420 413L417 418M500 308L497 314M497 314L494 319M494 319L491 325M491 325L488 331M488 331L485 337M485 337L481 342M478 348L475 354M475 354L472 359M472 359L469 365M469 365L466 371M466 371L463 377M463 377L460 382M460 382L457 388M457 388L454 394M454 394L451 400M451 400L448 405M448 405L445 411M445 411L442 417M442 417L439 423M439 423L436 428M436 428L433 434M433 434L430 440M430 440L427 446M427 446L423 451M423 451L420 457M420 457L417 463M417 463L414 469M564 232L561 237M561 237L558 243M558 243L555 249M555 249L552 255M552 255L549 260M549 260L546 266M546 266L543 272M543 272L540 277M537 283L534 289M534 289L531 295M531 295L527 300M521 312L518 318M518 318L515 323M515 323L512 329"/><path stroke="#e0e040" d="M372 115L379 118M379 118L385 122M385 122L391 125M397 128L403 131M403 131L410 135M357 158L363 162M370 165L376 168M308 147L314 150M531 309L537 313M537 313L543 316M435 281L441 284M447 287L453 291M453 291L460 294M460 294L466 297M466 297L472 300M472 300L478 304M478 304L484 307M484 307L491 310M491 310L497 314M497 314L503 317M503 317L509 320M509 320L515 323M515 323L521 327M521 327L528 330M528 330L534 333M534 333L540 337M506 326L512 329M512 329L518 332M518 332L525 336M525 336L531 339M531 339L537 342M262 248L268 251M275 254L281 258M281 258L287 261M287 261L293 264M293 264L299 267M299 267L305 271M305 271L312 274M312 274L318 277M318 277L324 281M324 281L330 284M330 284L336 287M336 287L343 290M349 294L355 297M355 297L361 300M361 300L367 304M367 304L373 307M373 307L380 310M386 313L392 317M398 320L404 323M404 323L411 327M411 327L417 330M417 330L423 333M306 315L312 318M312 318L318 322M318 322L324 325M435 384L442 387M442 387L448 391M454 394L460 397M460 397L466 400M466 400L473 404M473 404L479 407M479 407L485 410M485 410L491 414M491 414L497 417M399 394L405 397M405 397L411 400M411 400L417 404M219 328L226 331M232 335L238 338M238 338L244 341M244 341L250 345M263 351L269 354M275 358L281 361M281 361L287 364M287 364L294 368M306 374L312 377M312 377L318 381M318 381L325 384M325 384L331 387M331 387L337 391M337 391L343 394M343 394L349 397M349 397L355 400M355 400L362 404M362 404L368 407M368 407L374 410M374 410L380 414M326 172L323 177M323 177L320 183M320 183L317 189M317 189L314 194M314 194L311 200M311 200L308 206M308 206L305 212M305 212L302 217M302 217L299 223M293 235L290 240M287 246L284 252M275 269L272 275M272 275L269 281M262 292L259 298M259 298L256 304M256 304L253 309M253 309L250 315M247 321L244 326M244 326L241 332M241 332L238 338M238 338L235 344M369 106L366 112M366 112L363 117M363 117L360 123M360 123L357 129M357 129L354 135M354 135L351 140M345 152L342 158M342 158L339 163M339 163L336 169M336 169L333 175M333 175L330 181M330 181L327 186M324 192L320 198M320 198L317 203M317 203L314 209M314 209L311 215M311 215L308 221M308 221L305 226M305 226L302 232M302 232L299 238M299 238L296 244M296 244L293 249M293 249L290 255M287 261L284 267M256 318L253 324M253 324L250 330M247 335L244 341M244 341L241 347M241 347L238 353M238 353L235 358M232 364L229 370M308 235L305 241M305 241L302 247M302 247L299 253M299 253L296 258M296 258L293 264M290 270L287 276M287 276L284 281M281 287L278 293M278 293L275 299M275 299L272 304M272 304L269 310M269 310L266 316M367 185L364 191M364 191L361 197M361 197L357 203M357 203L354 208M354 208L351 214M351 214L348 220M345 226L342 231M342 231L339 237M339 237L336 243M333 249L330 254M327 260L324 266M324 266L321 272M321 272L318 277M318 277L315 283M315 283L312 289M312 289L309 295M306 300L303 306M303 306L299 312M437 142L434 148M434 148L431 154M431 154L428 159M373 277L370 283M370 283L367 289M367 289L364 295M364 295L361 300M361 300L358 306M352 318L349 323M349 323L346 329M346 329L343 335M340 340L337 346M337 346L334 352M334 352L331 358M331 358L328 363M328 363L324 369M428 204L425 209M422 215L419 221M419 221L416 227M413 232L410 238M410 238L407 244M407 244L404 249M404 249L401 255M401 255L398 261M398 261L395 267M395 267L392 272M395 296L392 302M392 302L389 308M383 319L380 325M371 416L368 422M362 433L359 439M426 372L423 377M423 377L420 383M420 383L417 389M417 389L414 395M414 395L411 400M411 400L408 406M405 412L402 418M402 418L399 423M399 423L396 429M396 429L393 435M393 435L390 441M390 441L386 446M386 446L383 452M487 301L484 307M484 307L481 313M481 313L478 318M472 330L469 336M469 336L466 341M466 341L463 347M463 347L460 353M460 353L457 359M457 359L454 364M451 370L448 376M448 376L445 382M445 382L442 387M439 393L436 399M432 405L429 410M506 311L503 317M503 317L500 323M500 323L497 328M494 334L491 340M491 340L488 346M485 351L482 357M506 341L503 346M503 346L500 352M500 352L497 358M592 239L589 245M589 245L586 250M580 262L577 268M577 268L574 273M574 273L571 279M571 279L567 285M567 285L564 291M561 296L558 302M558 302L555 308M555 308L552 314M552 314L549 319M546 325L543 331M543 331L540 337M537 342L534 348M534 348L531 354M531 354L528 360M528 360L525 365M525 365L522 371M522 371L519 377M513 388L509 394M509 394L506 400M506 400L503 405M503 405L500 411M497 417L494 423M494 423L491 428M491 428L488 434M488 434L485 440M485 440L482 446M482 446L479 451M479 451L476 457M476 457L473 463M473 463L470 469M470 469L467 474"/><path stroke="#c040c0" d="M416 138L422 141M422 141L428 145M428 145L434 148M434 148L440 151M440 151L447 154M447 154L453 158M484 174L490 177M351 111L357 114M357 114L363 117M376 124L382 127M382 127L388 131M388 131L394 134M394 134L400 137M406 140L413 144M413 144L419 147M419 147L425 150M425 150L431 154M431 154L437 157M437 157L444 160M444 160L450 163M450 163L456 167M456 167L462 170M462 170L468 173M468 173L474 177M474 177L481 180M481 180L487 183M487 183L493 186M499 190L505 193M505 193L512 196M512 196L518 200M518 200L524 203M524 203L530 206M530 206L536 209M536 209L542 213M542 213L549 216M549 216L555 219M543 316L549 319M431 183L428 189M428 189L425 195M425 195L422 200M474 162L471 168M465 179L462 185M462 185L459 190M380 369L377 375M508 187L505 193M505 193L502 199M502 199L499 204M499 204L496 210M496 210L493 216M493 216L490 222M490 222L487 227M487 227L484 233M484 233L481 239M481 239L478 245M478 245L475 250M472 256L469 262M466 268L463 273M463 273L460 279M460 279L457 285M457 285L453 291M453 291L450 296M450 296L447 302M447 302L444 308M444 308L441 314M441 314L438 319M438 319L435 325M435 325L432 331M432 331L429 336M426 342L423 348M420 354L417 359M417 359L414 365M414 365L411 371M411 371L408 377M408 377L405 382"/><path stroke="#f0f0f0" d="M567 226L573 229M580 232L586 236M586 236L592 239M259 239L265 242M271 245L278 249M278 249L284 252M284 252L290 255M290 255L296 258M302 262L308 265M315 268L321 272M232 290L238 294M430 455L436 458M436 458L442 461M442 461L448 464M448 464L454 468M312 274L309 280M315 327L312 333M312 333L309 339M306 345L303 350M300 356L297 362M297 362L294 368M294 368L291 373M291 373L288 379M284 385L281 390M281 390L278 396M373 307L370 313M370 313L367 318M367 318L364 324M364 324L361 330M358 336L355 341M355 341L352 347M352 347L349 353M349 353L346 359M346 359L343 364M343 364L340 370M340 370L337 376M328 393L325 399"/><path stroke="#e02020" d="M425 195L431 198M438 201L444 204M444 204L450 208M462 214L468 218M468 218L475 221M475 221L481 224M481 224L487 227M487 227L493 231M493 231L499 234M499 234L506 237M506 237L512 241M302 173L308 176M308 176L314 180M475 280L481 283M487 286L494 290M494 290L500 293M265 227L271 231M271 231L278 234M278 234L284 237M284 237L290 240M296 244L302 247M302 247L308 250M308 250L315 254M315 254L321 257M364 176L360 182M357 188L354 194M336 228L333 234M333 234L330 240M330 240L327 245M327 245L324 251M324 251L321 257M318 263L315 268M315 268L312 274M290 358L287 364M287 364L284 370M284 370L281 376M278 381L275 387M275 387L272 393M453 158L450 163M450 163L447 169M447 169L444 175M392 287L389 293M386 299L383 304M383 304L380 310M380 310L377 316M377 316L374 322M374 322L370 327M370 327L367 333M367 333L364 339M364 339L361 345M361 345L358 350M358 350L355 356M355 356L352 362M352 362L349 368M349 368L346 373M346 373L343 379M340 385L337 391M337 391L334 396M334 396L331 402M331 402L328 408M328 408L325 413M579 218L576 223M576 223L573 229M573 229L570 235M570 235L567 241M567 241L564 246M564 246L561 252M561 252L558 258M558 258L555 264M552 269L549 275M549 275L546 281M546 281L543 287M543 287L540 292M540 292L537 298M534 304L531 309M525 321L521 327M521 327L518 332M518 332L515 338M515 338L512 344M512 344L509 350M509 350L506 355M506 355L503 361M503 361L500 367M500 367L497 373M497 373L494 378M494 378L491 384"/><path fill="#ffffff" d="M434 221h2v2h-2zM440 224h2v2h-2zM446 227h2v2h-2zM412 217h2v2h-2zM443 233h2v2h-2zM378 206h2v2h-2zM384 209h2v2h-2zM403 219h2v2h-2zM415 226h2v2h-2zM434 235h2v2h-2zM381 215h2v2h-2zM394 221h2v2h-2zM406 228h2v2h-2zM418 235h2v2h-2zM431 241h2v2h-2zM443 248h2v2h-2zM474 264h2v2h-2zM372 217h2v2h-2zM391 227h2v2h-2zM397 230h2v2h-2zM409 237h2v2h-2zM421 244h2v2h-2zM452 260h2v2h-2zM471 270h2v2h-2zM477 273h2v2h-2zM483 276h2v2h-2zM381 230h2v2h-2zM394 236h2v2h-2zM412 246h2v2h-2zM431 256h2v2h-2zM443 262h2v2h-2zM455 269h2v2h-2zM474 279h2v2h-2zM366 229h2v2h-2zM421 258h2v2h-2zM428 262h2v2h-2zM459 278h2v2h-2zM483 291h2v2h-2zM489 295h2v2h-2zM350 228h2v2h-2zM388 248h2v2h-2zM418 264h2v2h-2zM425 267h2v2h-2zM431 271h2v2h-2zM443 277h2v2h-2zM480 297h2v2h-2zM354 237h2v2h-2zM366 244h2v2h-2zM384 253h2v2h-2zM391 257h2v2h-2zM403 263h2v2h-2zM409 267h2v2h-2zM415 270h2v2h-2zM428 276h2v2h-2zM446 286h2v2h-2zM471 299h2v2h-2zM477 303h2v2h-2zM483 306h2v2h-2zM490 309h2v2h-2zM351 243h2v2h-2zM357 246h2v2h-2zM363 249h2v2h-2zM375 256h2v2h-2zM388 262h2v2h-2zM394 266h2v2h-2zM419 279h2v2h-2zM425 282h2v2h-2zM437 289h2v2h-2zM443 292h2v2h-2zM456 299h2v2h-2zM462 302h2v2h-2zM468 305h2v2h-2zM474 308h2v2h-2zM487 315h2v2h-2zM329 239h2v2h-2zM335 242h2v2h-2zM347 248h2v2h-2zM366 258h2v2h-2zM378 265h2v2h-2zM385 268h2v2h-2zM391 271h2v2h-2zM397 275h2v2h-2zM403 278h2v2h-2zM409 281h2v2h-2zM415 285h2v2h-2zM440 298h2v2h-2zM465 311h2v2h-2zM344 254h2v2h-2zM351 257h2v2h-2zM357 261h2v2h-2zM394 280h2v2h-2zM400 284h2v2h-2zM406 287h2v2h-2zM412 290h2v2h-2zM437 303h2v2h-2zM443 307h2v2h-2zM474 323h2v2h-2zM323 250h2v2h-2zM329 253h2v2h-2zM341 260h2v2h-2zM360 270h2v2h-2zM366 273h2v2h-2zM391 286h2v2h-2zM409 296h2v2h-2zM416 299h2v2h-2zM428 306h2v2h-2zM440 313h2v2h-2zM446 316h2v2h-2zM453 319h2v2h-2zM314 253h2v2h-2zM320 256h2v2h-2zM351 272h2v2h-2zM369 282h2v2h-2zM382 289h2v2h-2zM406 302h2v2h-2zM437 318h2v2h-2zM443 322h2v2h-2zM450 325h2v2h-2zM311 258h2v2h-2zM317 262h2v2h-2zM329 268h2v2h-2zM348 278h2v2h-2zM360 285h2v2h-2zM379 294h2v2h-2zM385 298h2v2h-2zM397 304h2v2h-2zM422 317h2v2h-2zM447 331h2v2h-2zM453 334h2v2h-2zM314 267h2v2h-2zM326 274h2v2h-2zM357 290h2v2h-2zM363 294h2v2h-2zM369 297h2v2h-2zM388 307h2v2h-2zM394 310h2v2h-2zM406 317h2v2h-2zM443 336h2v2h-2zM311 273h2v2h-2zM317 276h2v2h-2zM335 286h2v2h-2zM360 299h2v2h-2zM403 322h2v2h-2zM410 326h2v2h-2zM422 332h2v2h-2zM428 335h2v2h-2zM434 339h2v2h-2zM447 345h2v2h-2zM320 285h2v2h-2zM326 289h2v2h-2zM338 295h2v2h-2zM357 305h2v2h-2zM369 312h2v2h-2zM376 315h2v2h-2zM382 318h2v2h-2zM394 325h2v2h-2zM400 328h2v2h-2zM413 335h2v2h-2zM419 338h2v2h-2zM425 341h2v2h-2zM437 348h2v2h-2zM444 351h2v2h-2zM305 284h2v2h-2zM335 301h2v2h-2zM354 311h2v2h-2zM360 314h2v2h-2zM366 317h2v2h-2zM379 324h2v2h-2zM403 337h2v2h-2zM410 340h2v2h-2zM422 347h2v2h-2zM314 297h2v2h-2zM326 303h2v2h-2zM345 313h2v2h-2zM357 320h2v2h-2zM400 343h2v2h-2zM407 346h2v2h-2zM413 349h2v2h-2zM425 356h2v2h-2zM431 359h2v2h-2zM437 363h2v2h-2zM323 309h2v2h-2zM360 329h2v2h-2zM385 342h2v2h-2zM410 355h2v2h-2zM416 358h2v2h-2zM314 312h2v2h-2zM326 318h2v2h-2zM339 325h2v2h-2zM382 348h2v2h-2zM388 351h2v2h-2zM394 354h2v2h-2zM407 361h2v2h-2zM419 367h2v2h-2zM323 324h2v2h-2zM342 334h2v2h-2zM348 337h2v2h-2zM379 353h2v2h-2zM404 367h2v2h-2zM394 369h2v2h-2zM301 261h2v2h-2zM307 264h2v2h-2zM329 239h2v2h-2zM323 250h2v2h-2zM317 262h2v2h-2zM314 267h2v2h-2zM311 273h2v2h-2zM341 230h2v2h-2zM338 236h2v2h-2zM320 271h2v2h-2zM317 276h2v2h-2zM314 282h2v2h-2zM305 299h2v2h-2zM360 211h2v2h-2zM354 222h2v2h-2zM347 234h2v2h-2zM338 251h2v2h-2zM332 262h2v2h-2zM323 280h2v2h-2zM317 291h2v2h-2zM311 303h2v2h-2zM369 208h2v2h-2zM360 225h2v2h-2zM335 271h2v2h-2zM326 289h2v2h-2zM314 312h2v2h-2zM378 206h2v2h-2zM375 212h2v2h-2zM369 223h2v2h-2zM363 235h2v2h-2zM351 257h2v2h-2zM348 263h2v2h-2zM332 292h2v2h-2zM329 298h2v2h-2zM326 303h2v2h-2zM323 309h2v2h-2zM375 226h2v2h-2zM372 232h2v2h-2zM360 255h2v2h-2zM357 261h2v2h-2zM354 266h2v2h-2zM342 289h2v2h-2zM335 301h2v2h-2zM329 312h2v2h-2zM387 218h2v2h-2zM381 230h2v2h-2zM372 247h2v2h-2zM360 270h2v2h-2zM345 298h2v2h-2zM339 310h2v2h-2zM336 316h2v2h-2zM332 321h2v2h-2zM397 216h2v2h-2zM384 239h2v2h-2zM378 250h2v2h-2zM375 256h2v2h-2zM369 267h2v2h-2zM366 273h2v2h-2zM339 325h2v2h-2zM400 225h2v2h-2zM394 236h2v2h-2zM388 248h2v2h-2zM384 253h2v2h-2zM372 276h2v2h-2zM366 288h2v2h-2zM351 317h2v2h-2zM388 262h2v2h-2zM385 268h2v2h-2zM382 274h2v2h-2zM378 280h2v2h-2zM375 285h2v2h-2zM366 303h2v2h-2zM360 314h2v2h-2zM357 320h2v2h-2zM351 331h2v2h-2zM409 237h2v2h-2zM406 243h2v2h-2zM397 260h2v2h-2zM385 283h2v2h-2zM379 294h2v2h-2zM375 300h2v2h-2zM363 323h2v2h-2zM354 340h2v2h-2zM421 229h2v2h-2zM412 246h2v2h-2zM403 263h2v2h-2zM400 269h2v2h-2zM397 275h2v2h-2zM391 286h2v2h-2zM385 298h2v2h-2zM379 309h2v2h-2zM369 326h2v2h-2zM363 338h2v2h-2zM434 221h2v2h-2zM424 238h2v2h-2zM415 255h2v2h-2zM412 261h2v2h-2zM406 272h2v2h-2zM403 278h2v2h-2zM397 290h2v2h-2zM391 301h2v2h-2zM379 324h2v2h-2zM376 330h2v2h-2zM370 341h2v2h-2zM440 224h2v2h-2zM437 230h2v2h-2zM431 241h2v2h-2zM418 264h2v2h-2zM409 281h2v2h-2zM406 287h2v2h-2zM403 293h2v2h-2zM394 310h2v2h-2zM376 344h2v2h-2zM443 233h2v2h-2zM437 244h2v2h-2zM434 250h2v2h-2zM428 262h2v2h-2zM419 279h2v2h-2zM409 296h2v2h-2zM394 325h2v2h-2zM443 248h2v2h-2zM434 265h2v2h-2zM428 276h2v2h-2zM425 282h2v2h-2zM419 294h2v2h-2zM397 334h2v2h-2zM394 340h2v2h-2zM391 345h2v2h-2zM446 257h2v2h-2zM443 262h2v2h-2zM440 268h2v2h-2zM437 274h2v2h-2zM434 280h2v2h-2zM428 291h2v2h-2zM425 297h2v2h-2zM419 308h2v2h-2zM413 320h2v2h-2zM403 337h2v2h-2zM400 343h2v2h-2zM394 354h2v2h-2zM449 266h2v2h-2zM446 271h2v2h-2zM434 294h2v2h-2zM425 312h2v2h-2zM422 317h2v2h-2zM419 323h2v2h-2zM410 340h2v2h-2zM407 346h2v2h-2zM394 369h2v2h-2zM462 258h2v2h-2zM449 281h2v2h-2zM437 303h2v2h-2zM434 309h2v2h-2zM431 315h2v2h-2zM428 321h2v2h-2zM425 326h2v2h-2zM422 332h2v2h-2zM416 344h2v2h-2zM407 361h2v2h-2zM401 372h2v2h-2zM456 284h2v2h-2zM452 290h2v2h-2zM449 295h2v2h-2zM443 307h2v2h-2zM440 313h2v2h-2zM437 318h2v2h-2zM434 324h2v2h-2zM431 330h2v2h-2zM419 353h2v2h-2zM413 364h2v2h-2zM407 376h2v2h-2zM471 270h2v2h-2zM468 276h2v2h-2zM462 287h2v2h-2zM456 299h2v2h-2zM440 327h2v2h-2zM431 344h2v2h-2zM428 350h2v2h-2zM422 362h2v2h-2zM477 273h2v2h-2zM474 279h2v2h-2zM471 285h2v2h-2zM462 302h2v2h-2zM456 313h2v2h-2zM453 319h2v2h-2zM440 342h2v2h-2zM434 354h2v2h-2zM486 271h2v2h-2zM477 288h2v2h-2zM471 299h2v2h-2zM468 305h2v2h-2zM456 328h2v2h-2zM453 334h2v2h-2zM447 345h2v2h-2zM440 357h2v2h-2zM437 363h2v2h-2zM486 285h2v2h-2zM483 291h2v2h-2zM480 297h2v2h-2zM477 303h2v2h-2zM474 308h2v2h-2zM456 343h2v2h-2zM447 360h2v2h-2zM486 300h2v2h-2zM483 306h2v2h-2zM480 312h2v2h-2zM490 309h2v2h-2z"/></g><g clip-path="url(#c2)" stroke-width="1.3" fill="none"><path stroke="#1a1ab4" d="M453 192L460 196M460 196L467 200M467 200L474 204M474 204L481 207M488 211L495 215M502 219L509 222M509 222L516 226M516 226L523 230M523 230L530 234M530 234L537 237M537 237L544 241M544 241L551 245M551 245L558 249M558 249L566 252M573 256L580 260M580 260L587 264M587 264L594 267M594 267L601 271M601 271L608 275M449 199L456 202M456 202L463 206M463 206L470 210M470 210L477 214M485 217L492 221M492 221L499 225M499 225L506 229M506 229L513 232M513 232L520 236M541 247L548 251M548 251L555 255M555 255L562 259M562 259L569 262M576 266L583 270M583 270L591 274M591 274L598 277M446 205L453 208M453 208L460 212M467 216L474 220M474 220L481 223M481 223L488 227M502 235L510 239M517 242L524 246M524 246L531 250M531 250L538 254M538 254L545 257M545 257L552 261M566 269L573 272M573 272L580 276M443 211L450 215M450 215L457 218M464 222L471 226M471 226L478 230M499 241L506 245M506 245L513 248M513 248L520 252M520 252L527 256M527 256L534 260M534 260L542 263M542 263L549 267M549 267L556 271M563 275L570 278M570 278L577 282M584 286L591 290M591 290L598 294M439 217L446 221M446 221L454 225M454 225L461 228M468 232L475 236M475 236L482 240M482 240L489 243M489 243L496 247M496 247L503 251M503 251L510 255M524 262L531 266M538 270L545 273M545 273L552 277M552 277L559 281M559 281L567 285M567 285L574 288M581 292L588 296M489 259L496 263M496 263L503 267M503 267L511 271M511 271L518 274M525 278L532 282M532 282L539 286M539 286L546 290M546 290L553 293M553 293L560 297M560 297L567 301M567 301L574 305M574 305L581 308M430 236L437 239M437 239L444 243M444 243L451 247M433 246L440 249M447 253L454 257M462 261L469 264M476 268L483 272M483 272L490 276M504 283L511 287M518 291L525 294M525 294L532 298M532 298L539 302M539 302L546 306M553 309L560 313M568 317L575 321M575 321L582 324M430 252L437 255M437 255L444 259M444 259L451 263M458 267L465 270M465 270L472 274M487 282L494 286M494 286L501 289M501 289L508 293M557 319L564 323M564 323L571 327M571 327L578 331M441 265L448 269M448 269L455 273M455 273L462 277M462 277L469 280M476 284L483 288M490 292L497 295M497 295L504 299M504 299L511 303M519 307L526 310M526 310L533 314M533 314L540 318M547 322L554 326M568 333L575 337M416 260L423 264M423 264L431 268M431 268L438 272M438 272L445 275M445 275L452 279M452 279L459 283M413 267L420 270M420 270L427 274M434 278L441 282M448 285L455 289M470 297L477 300M477 300L484 304M484 304L491 308M491 308L498 312M498 312L505 315M505 315L512 319M512 319L519 323M519 323L526 327M526 327L533 330M533 330L540 334M540 334L547 338M547 338L554 342M554 342L561 345M561 345L568 349M428 290L435 294M435 294L442 298M442 298L449 301M449 301L456 305M463 309L470 313M470 313L477 316M477 316L484 320M491 324L498 328M498 328L505 331M505 331L512 335M512 335L520 339M520 339L527 343M527 343L534 346M541 350L548 354M548 354L555 358M555 358L562 361M460 315L467 319M467 319L474 323M474 323L481 326M481 326L488 330M488 330L495 334M495 334L502 338M502 338L509 341M509 341L516 345M516 345L523 349M523 349L530 353M530 353L537 356M537 356L544 360M544 360L552 364M552 364L559 368M411 305L418 309M418 309L425 312M425 312L432 316M432 316L439 320M439 320L446 324M446 324L453 327M453 327L460 331M467 335L474 339M474 339L481 342M488 346L496 350M496 350L503 354M503 354L510 358M517 361L524 365M524 365L531 369M531 369L538 373M538 373L545 376M545 376L552 380M393 304L400 307M400 307L407 311M407 311L415 315M422 319L429 322M429 322L436 326M436 326L443 330M457 337L464 341M464 341L471 345M478 349L485 352M485 352L492 356M492 356L499 360M506 364L513 367M513 367L521 371M521 371L528 375M528 375L535 379M390 310L397 314M397 314L404 317M404 317L411 321M411 321L418 325M425 329L432 332M432 332L440 336M440 336L447 340M447 340L454 344M454 344L461 347M461 347L468 351M468 351L475 355M475 355L482 359M482 359L489 362M503 370L510 374M510 374L517 377M524 381L531 385M531 385L538 389M387 316L394 320M394 320L401 323M408 327L415 331M415 331L422 335M422 335L429 338M429 338L436 342M436 342L443 346M443 346L450 350M457 354L464 357M464 357L472 361M472 361L479 365M479 365L486 369M486 369L493 372M493 372L500 376M500 376L507 380M507 380L514 384M514 384L521 387M521 387L528 391M535 395L542 399M384 322L391 326M391 326L398 330M405 333L412 337M412 337L419 341M419 341L426 345M426 345L433 348M433 348L440 352M447 356L454 360M454 360L461 363M475 371L482 375M482 375L489 378M489 378L497 382M497 382L504 386M504 386L511 390M511 390L518 393M518 393L525 397M525 397L532 401M532 401L539 405M380 328L387 332M387 332L394 336M394 336L401 340M401 340L408 343M408 343L416 347M416 347L423 351M374 341L381 344M381 344L388 348M388 348L395 352M395 352L402 356M402 356L409 359M416 363L423 367M423 367L430 371M430 371L437 374M444 378L451 382M451 382L458 386M465 389L473 393M473 393L480 397M480 397L487 401M501 408L508 412M508 412L515 416M515 416L522 420M522 420L529 423M370 347L377 351M399 362L406 366M413 369L420 373M420 373L427 377M427 377L434 381M434 381L441 384M448 388L455 392M455 392L462 396M469 399L476 403M476 403L483 407M483 407L490 411M490 411L498 414M505 418L512 422M512 422L519 426M519 426L526 429M388 364L395 368M395 368L402 372M402 372L409 376M409 376L417 379M417 379L424 383M424 383L431 387M431 387L438 391M438 391L445 394M445 394L452 398M452 398L459 402M459 402L466 406M466 406L473 409M473 409L480 413M480 413L487 417M494 421L501 424M501 424L508 428M508 428L515 432M515 432L522 436M453 192L449 199M446 205L443 211M443 211L439 217M439 217L436 223M436 223L433 229M433 229L430 236M430 236L426 242M426 242L423 248M416 260L413 267M410 273L407 279M407 279L403 285M403 285L400 291M397 297L393 304M393 304L390 310M390 310L387 316M384 322L380 328M380 328L377 334M377 334L374 341M374 341L370 347M370 347L367 353M404 301L400 307M400 307L397 314M397 314L394 320M391 326L387 332M387 332L384 338M384 338L381 344M377 351L374 357M467 200L463 206M463 206L460 212M460 212L457 218M450 231L447 237M447 237L444 243M440 249L437 255M434 262L431 268M431 268L427 274M421 286L417 293M417 293L414 299M404 317L401 323M401 323L398 330M398 330L394 336M391 342L388 348M388 348L384 354M384 354L381 361M470 210L467 216M467 216L464 222M464 222L461 228M481 207L477 214M477 214L474 220M474 220L471 226M468 232L464 238M464 238L461 244M461 244L458 251M458 251L454 257M454 257L451 263M451 263L448 269M445 275L441 282M438 288L435 294M435 294L431 300M431 300L428 306M428 306L425 312M425 312L422 319M418 325L415 331M415 331L412 337M412 337L408 343M408 343L405 350M405 350L402 356M402 356L399 362M399 362L395 368M455 273L452 279M452 279L448 285M448 285L445 291M445 291L442 298M442 298L439 304M439 304L435 310M435 310L432 316M432 316L429 322M416 347L412 353M409 359L406 366M406 366L402 372M492 221L488 227M488 227L485 233M482 240L478 246M455 289L452 295M452 295L449 301M449 301L446 308M446 308L442 314M439 320L436 326M436 326L432 332M429 338L426 345M426 345L423 351M419 357L416 363M413 369L409 376M502 219L499 225M499 225L495 231M489 243L486 250M453 311L449 318M449 318L446 324M446 324L443 330M443 330L440 336M440 336L436 342M436 342L433 348M433 348L430 355M430 355L426 361M426 361L423 367M423 367L420 373M420 373L417 379M509 222L506 229M506 229L502 235M502 235L499 241M499 241L496 247M496 247L493 253M493 253L489 259M486 266L483 272M483 272L479 278M476 284L473 290M500 257L496 263M496 263L493 269M493 269L490 276M487 282L483 288M483 288L480 294M480 294L477 300M477 300L473 306M473 306L470 313M470 313L467 319M467 319L464 325M464 325L460 331M457 337L454 344M450 350L447 356M447 356L444 362M444 362L441 368M434 381L431 387M494 286L490 292M490 292L487 298M484 304L480 310M480 310L477 316M477 316L474 323M474 323L471 329M471 329L467 335M467 335L464 341M464 341L461 347M457 354L454 360M454 360L451 366M451 366L448 372M448 372L444 378M444 378L441 384M530 234L527 240M527 240L524 246M524 246L520 252M520 252L517 258M511 271L507 277M488 314L484 320M484 320L481 326M481 326L478 333M478 333L474 339M474 339L471 345M471 345L468 351M468 351L464 357M464 357L461 363M461 363L458 370M458 370L455 376M455 376L451 382M451 382L448 388M448 388L445 394M537 237L534 244M534 244L531 250M531 250L527 256M527 256L524 262M524 262L521 268M514 281L511 287M511 287L508 293M508 293L504 299M504 299L501 305M501 305L498 312M498 312L495 318M495 318L491 324M491 324L488 330M488 330L485 336M485 336L481 342M481 342L478 349M478 349L475 355M472 361L468 367M465 373L462 380M462 380L458 386M455 392L452 398M544 241L541 247M541 247L538 254M538 254L534 260M534 260L531 266M531 266L528 272M528 272L525 278M525 278L521 284M521 284L518 291M518 291L515 297M515 297L511 303M505 315L502 322M502 322L498 328M498 328L495 334M495 334L492 340M492 340L488 346M488 346L485 352M485 352L482 359M482 359L479 365M479 365L475 371M475 371L472 377M472 377L469 383M469 383L465 389M465 389L462 396M462 396L459 402M548 251L545 257M542 263L538 270M535 276L532 282M532 282L528 288M528 288L525 294M525 294L522 301M519 307L515 313M515 313L512 319M512 319L509 325M509 325L505 331M502 338L499 344M499 344L496 350M496 350L492 356M489 362L486 369M486 369L482 375M482 375L479 381M479 381L476 387M476 387L473 393M473 393L469 399M469 399L466 406M558 249L555 255M555 255L552 261M549 267L545 273M542 280L539 286M535 292L532 298M532 298L529 304M529 304L526 310M526 310L522 317M522 317L519 323M512 335L509 341M509 341L506 348M506 348L503 354M503 354L499 360M499 360L496 366M496 366L493 372M493 372L489 378M489 378L486 385M486 385L483 391M483 391L480 397M566 252L562 259M556 271L552 277M549 283L546 290M546 290L543 296M543 296L539 302M539 302L536 308M536 308L533 314M533 314L529 320M526 327L523 333M520 339L516 345M516 345L513 351M513 351L510 358M510 358L506 364M506 364L503 370M503 370L500 376M500 376L497 382M497 382L493 388M493 388L490 395M487 401L483 407M483 407L480 413M573 256L569 262M569 262L566 269M566 269L563 275M559 281L556 287M497 398L494 405M494 405L490 411M490 411L487 417M527 359L524 365M524 365L521 371M517 377L514 384M514 384L511 390M504 402L501 408M501 408L498 414M498 414L494 421M587 264L583 270M583 270L580 276M580 276L577 282M574 288L570 295M570 295L567 301M567 301L564 307M564 307L560 313M560 313L557 319M557 319L554 326M554 326L551 332M551 332L547 338M547 338L544 344M541 350L537 356M537 356L534 363M534 363L531 369M531 369L528 375M524 381L521 387M521 387L518 393M518 393L514 400M514 400L511 406M511 406L508 412M508 412L505 418M505 418L501 424M594 267L591 274M591 274L587 280M587 280L584 286M584 286L581 292M581 292L577 298M577 298L574 305M574 305L571 311M571 311L568 317M568 317L564 323M561 329L558 335M558 335L554 342M551 348L548 354M544 360L541 366M535 379L531 385M531 385L528 391M528 391L525 397M525 397L521 403M521 403L518 410M515 416L512 422M601 271L598 277M598 277L594 284M591 290L588 296M584 302L581 308M581 308L578 314M575 321L571 327M571 327L568 333M568 333L565 339M565 339L561 345M558 352L555 358M555 358L552 364M552 364L548 370M545 376L542 382M538 389L535 395M535 395L532 401M532 401L529 407M522 420L519 426M519 426L515 432M608 275L605 281M601 287L598 294M591 306L588 312M585 318L582 324M582 324L578 331M578 331L575 337M575 337L572 343M568 349L565 355M565 355L562 361M562 361L559 368M559 368L555 374M555 374L552 380M552 380L549 386M542 399L539 405M539 405L536 411M532 417L529 423M529 423L526 429"/><path stroke="#40e0e0" d="M580 276L587 280M587 280L594 284M594 284L601 287M466 287L473 290M473 290L480 294M480 294L487 298M487 298L494 302M494 302L501 305M501 305L508 309M508 309L515 313M515 313L522 317M522 317L529 320M544 328L551 332M558 335L565 339M407 295L414 299M414 299L421 302M435 310L442 314M442 314L449 318M456 321L464 325M478 333L485 336M492 340L499 344M499 344L506 348M520 355L527 359M527 359L534 363M548 370L555 374M397 297L404 301M461 228L457 235M454 241L451 247M444 259L441 265M441 265L438 272M438 272L434 278M431 284L428 290M428 290L424 296M424 296L421 302M421 302L418 309M415 315L411 321M411 321L408 327M405 333L401 340M398 346L395 352M392 358L388 364M472 258L469 264M469 264L465 270M465 270L462 277M462 277L459 283M459 283L455 289M473 290L470 297M470 297L466 303M466 303L463 309M456 321L453 327M453 327L450 334M447 340L443 346M443 346L440 352M437 358L433 365M433 365L430 371M430 371L427 377M427 377L424 383M516 226L513 232M513 232L510 239M510 239L506 245M506 245L503 251M503 251L500 257M507 277L504 283M504 283L501 289M556 287L553 293M553 293L550 299M546 306L543 312M540 318L536 324M536 324L533 330M530 337L527 343M527 343L523 349M523 349L520 355M520 355L517 361M517 361L513 367M510 374L507 380M504 386L500 392"/><path stroke="#c040c0" d="M436 223L443 227M443 227L450 231M464 238L471 242M471 242L478 246M486 250L493 253M493 253L500 257M507 261L514 265M521 268L528 272M535 276L542 280M542 280L549 283M549 283L556 287M563 291L570 295M570 295L577 298M584 302L591 306M433 229L440 233M440 233L447 237M447 237L454 241M454 241L461 244M461 244L468 248M468 248L475 252M475 252L482 256M482 256L489 259M535 379L542 382M542 382L549 386M367 353L374 357M374 357L381 361M381 361L388 364M486 250L482 256M482 256L479 262M476 268L472 274M469 280L466 287M463 293L459 299M459 299L456 305M456 305L453 311"/><path stroke="#40e040" d="M451 247L458 251M465 254L472 258M472 258L479 262M479 262L486 266M486 266L493 269M507 277L514 281M514 281L521 284M521 284L528 288M528 288L535 292M535 292L543 296M543 296L550 299M550 299L557 303M564 307L571 311M571 311L578 314M578 314L585 318M522 301L529 304M536 308L543 312M543 312L550 316M550 316L557 319M410 273L417 276M417 276L424 280M424 280L431 284M431 284L438 288M438 288L445 291M445 291L452 295M452 295L459 299M459 299L466 303M466 303L473 306M473 306L480 310M488 314L495 318M495 318L502 322M502 322L509 325M509 325L516 329M523 333L530 337M530 337L537 340M537 340L544 344M551 348L558 352M407 279L414 283M414 283L421 286M421 286L428 290M403 285L410 289M410 289L417 293M424 296L431 300M431 300L439 304M439 304L446 308M446 308L453 311M453 311L460 315M507 261L503 267M503 267L500 273M497 279L494 286M580 260L576 266M576 266L573 272M573 272L570 278M570 278L567 285M567 285L563 291M563 291L560 297M560 297L557 303M557 303L553 309M553 309L550 316M550 316L547 322M547 322L544 328M544 328L540 334M540 334L537 340M537 340L534 346M530 353L527 359M548 354L544 360"/><path stroke="#e02020" d="M423 351L430 355M430 355L437 358M437 358L444 362M444 362L451 366M458 370L465 373M479 381L486 385M486 385L493 388M493 388L500 392M500 392L507 396M507 396L514 400M514 400L521 403M521 403L529 407M529 407L536 411M460 196L456 202M456 202L453 208M453 208L450 215M450 215L446 221M446 221L443 227M443 227L440 233M437 239L433 246M433 246L430 252M430 252L427 258M420 270L417 276M417 276L414 283M407 295L404 301"/><path stroke="#e0e040" d="M377 334L384 338M384 338L391 342M391 342L398 346M398 346L405 350M405 350L412 353M412 353L419 357M419 357L426 361M426 361L433 365M433 365L441 368M455 376L462 380M462 380L469 383M469 383L476 387M483 391L490 395M490 395L497 398M497 398L504 402M511 406L518 410M485 217L481 223M481 223L478 230M478 230L475 236M475 236L471 242M471 242L468 248M468 248L465 254M465 254L462 261M478 246L475 252M475 252L472 258"/><path fill="#ffffff" d="M471 257h2v2h-2zM485 265h2v2h-2zM464 269h2v2h-2zM486 281h2v2h-2zM493 285h2v2h-2zM475 283h2v2h-2zM496 294h2v2h-2zM479 293h2v2h-2zM486 297h2v2h-2zM493 301h2v2h-2zM500 304h2v2h-2zM490 307h2v2h-2zM504 314h2v2h-2zM494 317h2v2h-2zM468 263h2v2h-2zM485 265h2v2h-2zM482 271h2v2h-2zM475 283h2v2h-2zM482 287h2v2h-2zM479 293h2v2h-2zM493 285h2v2h-2zM453 359h2v2h-2zM450 365h2v2h-2zM483 319h2v2h-2zM504 314h2v2h-2z"/></g><g clip-path="url(#c3)" stroke-width="1.3" fill="none"><path stroke="#1a1ab4" d="M510 272L519 271M519 271L528 270M528 270L537 270M537 270L546 269M546 269L555 268M555 268L564 267M564 267L573 266M573 266L581 266M581 266L590 265M590 265L599 264M599 264L608 263M608 263L617 263M617 263L626 262M626 262L635 261M313 298L322 297M322 297L331 297M331 297L340 296M340 296L349 295M349 295L358 294M358 294L367 293M367 293L376 293M376 293L385 292M394 291L403 290M412 290L421 289M430 288L439 287M439 287L448 286M448 286L457 286M457 286L466 285M466 285L475 284M475 284L484 283M484 283L493 283M493 283L502 282M502 282L511 281M511 281L519 280M519 280L528 279M528 279L537 279M537 279L546 278M546 278L555 277M555 277L564 276M564 276L573 275M573 275L582 275M582 275L591 274M591 274L600 273M600 273L609 272M609 272L618 272M627 271L636 270M314 307L323 306M315 316L324 315M324 315L333 315M333 315L342 314M342 314L351 313M360 312L369 311M369 311L378 311M378 311L387 310M405 308L413 308M413 308L422 307M422 307L431 306M431 306L440 305M440 305L449 304M449 304L458 304M593 292L602 291M602 291L611 290M611 290L620 289M567 303L576 302M585 302L594 301M594 301L603 300M603 300L612 299M316 334L325 333M325 333L334 332M334 332L343 332M343 332L352 331M352 331L361 330M361 330L370 329M370 329L379 329M379 329L388 328M388 328L397 327M433 324L442 323M442 323L451 322M451 322L460 322M506 336L515 335M515 335L524 334M524 334L533 333M533 333L542 332M614 326L623 325M623 325L632 325M364 357L373 356M373 356L382 355M382 355L390 355M321 388L330 387M330 387L339 386M348 386L357 385M357 385L366 384M366 384L375 383M375 383L384 382M384 382L393 382M393 382L402 381M402 381L411 380M411 380L420 379M420 379L429 378M429 378L438 378M438 378L447 377M447 377L456 376M486 419L495 418M495 418L504 417M513 416L522 415M522 415L531 415M531 415L540 414M540 414L549 413M549 413L558 412M558 412L567 412M567 412L576 411M576 411L585 410M585 410L594 409M603 408L612 408M612 408L621 407M621 407L630 406M630 406L639 405M639 405L648 404M326 442L335 441M335 441L344 440M353 439L362 439M362 439L371 438M371 438L380 437M380 437L389 436M389 436L398 435M398 435L407 435M407 435L415 434M415 434L424 433M424 433L433 432M433 432L442 431M442 431L451 431M451 431L460 430M460 430L469 429M478 428L487 428M496 427L505 426M505 426L514 425M523 424L532 424M532 424L541 423M327 460L336 459M336 459L345 458M345 458L354 457M354 457L363 456M363 456L372 456M372 456L381 455M381 455L390 454M390 454L399 453M399 453L408 453M408 453L417 452M417 452L426 451M426 451L435 450M435 450L444 449M444 449L453 449M453 449L462 448M462 448L471 447M471 447L480 446M480 446L489 445M489 445L498 445M498 445L507 444M507 444L516 443M525 442L534 442M534 442L543 441M543 441L552 440M552 440L561 439M561 439L569 438M569 438L578 438M578 438L587 437M587 437L596 436M596 436L605 435M614 434L623 434M623 434L632 433M632 433L641 432M641 432L650 431M400 462L409 461M409 461L418 461M418 461L427 460M427 460L436 459M436 459L445 458M419 470L428 469M428 469L437 468M446 467L454 467M428 478L437 477M555 476L564 475M564 475L573 474M573 474L582 473M582 473L591 473M591 473L600 472M600 472L608 471M608 471L617 470M626 470L635 469M340 504L349 503M349 503L358 502M358 502L367 501M367 501L376 500M376 500L385 500M385 500L394 499M403 498L412 497M412 497L421 497M421 497L430 496M430 496L439 495M439 495L448 494M448 494L457 493M583 491L592 491M592 491L601 490M601 490L610 489M610 489L619 488M619 488L628 487M628 487L637 487M637 487L646 486M333 522L342 522M334 531L343 531M343 531L352 530M352 530L361 529M361 529L370 528M370 528L379 527M379 527L387 527M387 527L396 526M396 526L405 525M405 525L414 524M414 524L423 523M423 523L432 523M443 540L452 539M452 539L461 538M461 538L470 537M470 537L479 537M479 537L488 536M488 536L497 535M497 535L506 534M506 534L515 534M515 534L524 533M524 533L532 532M532 532L541 531M541 531L550 530M559 530L568 529M568 529L577 528M577 528L586 527M336 558L345 557M354 557L363 556M363 556L372 555M337 567L346 566M346 566L355 566M382 563L391 562M391 562L400 562M400 562L409 561M409 561L418 560M426 559L435 559M435 559L444 558M444 558L453 557M453 557L462 556M356 575L364 574M364 574L373 573M373 573L382 572M391 571L400 571M400 571L409 570M409 570L418 569M418 569L427 568M427 568L436 568M436 568L445 567M445 567L454 566M454 566L463 565M463 565L472 564M481 564L490 563M490 563L499 562M499 562L508 561M508 561L517 560M517 560L526 560M526 560L535 559M535 559L544 558M544 558L553 557M553 557L562 557M562 557L571 556M571 556L580 555M580 555L589 554M589 554L598 553M598 553L607 553M607 553L616 552M616 552L625 551M625 551L633 550M633 550L642 549M642 549L651 549M651 549L660 548M527 569L536 568M536 568L545 567M545 567L554 566M554 566L563 565M563 565L571 565M571 565L580 564M580 564L589 563M589 563L598 562M598 562L607 562M607 562L616 561M616 561L625 560M625 560L634 559M634 559L643 558M643 558L652 558M652 558L661 557M510 579L518 578M518 578L527 578M527 578L536 577M536 577L545 576M545 576L554 575M554 575L563 574M563 574L572 574M572 574L581 573M581 573L590 572M340 603L349 602M358 601L367 601M367 601L376 600M430 595L439 594M439 594L448 594M448 594L457 593M457 593L465 592M465 592L474 591M483 590L492 590M492 590L501 589M501 589L510 588M510 588L519 587M519 587L528 587M528 587L537 586M537 586L546 585M546 585L555 584M565 592L574 592M583 591L592 590M592 590L601 589M601 589L610 588M610 588L619 588M619 588L628 587M628 587L637 586M637 586L646 585M646 585L655 585M655 585L664 584M331 396L332 405M332 405L332 414M330 288L331 297M331 297L332 306M332 306L333 315M333 315L334 324M334 324L334 332M334 332L335 341M348 494L349 503M349 503L350 512M350 512L351 521M351 521L352 530M352 530L352 539M352 539L353 548M354 557L355 566M356 575L356 584M356 584L357 593M357 593L358 601M358 601L359 610M352 430L353 439M353 439L354 448M354 448L354 457M354 457L355 466M355 466L356 475M356 475L357 484M376 500L377 509M377 509L378 518M380 338L381 347M381 347L382 355M397 426L398 435M398 435L398 444M398 444L399 453M399 453L400 462M400 462L401 471M401 471L401 480M401 480L402 489M402 489L403 498M397 327L398 336M398 336L399 345M399 345L399 354M399 354L400 363M400 363L401 372M401 372L402 381M402 381L403 390M403 390L403 399M403 399L404 408M404 408L405 417M405 417L406 426M406 426L407 435M407 435L407 444M407 444L408 453M414 515L414 524M414 524L415 533M415 533L416 542M416 542L417 551M417 551L418 560M418 560L418 569M418 569L419 578M419 578L420 587M420 587L421 596M421 596L421 605M402 281L403 290M403 290L404 299M404 299L405 308M405 308L405 317M405 317L406 326M406 326L407 335M408 344L408 353M408 353L409 362M420 280L421 289M421 289L422 298M422 298L422 307M422 307L423 316M432 414L433 423M433 423L433 432M434 441L435 450M435 450L436 459M437 468L437 477M437 477L438 486M438 486L439 495M439 495L440 504M440 504L440 513M440 513L441 522M441 522L442 531M442 531L443 540M443 540L444 549M444 549L444 558M444 558L445 567M445 567L446 576M446 576L447 585M447 585L448 594M448 594L448 603M436 360L437 369M450 521L451 530M451 530L452 539M452 539L453 548M453 548L453 557M453 557L454 566M454 566L455 575M455 575L456 584M456 584L457 593M465 583L465 592M465 592L466 601M466 493L467 502M467 511L468 520M468 520L469 529M469 529L470 537M470 537L471 546M476 510L477 519M477 519L478 528M478 528L479 537M479 537L479 546M479 546L480 555M480 555L481 564M481 564L482 573M482 573L483 582M483 582L483 590M483 590L484 599M465 276L466 285M466 294L467 303M467 303L468 312M468 312L469 321M470 330L470 339M470 339L471 348M471 348L472 357M472 357L473 366M473 366L474 375M474 375L474 383M474 383L475 392M475 392L476 401M476 401L477 410M477 410L477 419M477 419L478 428M478 428L479 437M479 437L480 446M480 446L481 455M483 274L484 283M484 283L484 292M484 292L485 301M485 301L486 310M492 274L493 283M493 283L493 291M493 291L494 300M494 300L495 309M495 309L496 318M496 318L497 327M497 336L498 345M498 345L499 354M499 354L500 363M500 372L501 381M501 381L502 390M502 390L503 399M503 399L504 408M504 408L504 417M504 417L505 426M506 435L507 444M507 444L508 453M508 453L508 462M508 462L509 471M509 471L510 480M513 516L514 525M514 525L515 534M515 534L515 543M515 543L516 551M516 551L517 560M517 560L518 569M518 569L518 578M512 299L513 308M513 308L514 317M514 317L514 326M514 326L515 335M515 335L516 344M516 344L517 353M517 353L518 362M518 362L518 371M519 380L520 389M520 389L521 397M521 397L522 406M522 406L522 415M522 415L523 424M523 424L524 433M524 433L525 442M525 442L525 451M525 451L526 460M526 460L527 469M527 469L528 478M528 478L529 487M529 487L529 496M533 333L534 342M534 342L535 351M535 351L536 360M536 360L536 369M536 369L537 378M537 378L538 387M538 387L539 396M539 396L539 405M539 405L540 414M540 414L541 423M541 423L542 432M542 432L543 441M543 441L543 450M543 450L544 459M544 459L545 468M545 468L546 477M546 477L547 486M547 495L548 504M549 512L550 521M550 521L550 530M550 530L551 539M551 539L552 548M552 548L553 557M553 557L554 566M554 566L554 575M554 575L555 584M555 584L556 593M546 278L547 287M547 287L548 296M548 296L549 305M549 305L550 314M564 484L565 493M565 493L566 502M566 502L567 511M567 511L568 520M568 520L568 529M568 529L569 538M555 268L555 277M555 277L556 286M556 286L557 295M558 304L558 313M572 465L573 474M573 474L573 483M573 483L574 492M574 492L575 501M575 501L576 510M576 510L577 519M577 519L577 528M577 528L578 537M578 537L579 546M579 546L580 555M580 555L580 564M580 564L581 573M581 573L582 582M582 582L583 591M564 267L564 276M564 276L565 285M565 285L566 294M568 321L569 330M569 330L570 339M570 339L571 348M571 357L572 366M572 366L573 375M573 375L574 384M574 384L575 393M575 393L575 402M575 402L576 411M576 411L577 420M577 420L578 429M578 438L579 447M579 447L580 456M580 456L581 465M581 465L582 473M582 473L582 482M582 482L583 491M583 491L584 500M584 500L585 509M585 509L586 518M586 518L586 527M586 527L587 536M587 536L588 545M588 545L589 554M589 563L590 572M590 572L591 581M591 581L592 590M581 266L582 275M583 284L584 293M599 264L600 273M601 282L602 291M607 354L608 363M608 363L609 372M609 372L610 381M610 381L610 390M610 390L611 399M612 408L613 417M613 417L614 426M614 426L614 434M616 452L617 461M617 461L617 470M617 470L618 479M618 479L619 488M619 488L620 497M620 497L621 506M621 506L621 515M621 515L622 524M622 524L623 533M623 533L624 542M635 460L635 469M635 469L636 478M636 478L637 487M637 487L638 496M638 496L639 505M639 505L639 514M639 514L640 523M640 523L641 532M641 532L642 541M642 541L642 549M642 549L643 558M643 558L644 567M644 567L645 576M645 576L646 585M626 262L627 271M627 271L628 280M628 280L629 289M629 289L629 298M629 298L630 307M630 307L631 316M631 316L632 325M632 325L633 334M633 334L633 342M633 342L634 351M634 351L635 360M635 360L636 369M636 369L636 378M636 378L637 387M637 387L638 396M638 396L639 405M639 405L640 414M640 414L640 423M640 423L641 432M641 432L642 441M642 441L643 450M643 450L644 459M644 459L644 468M644 468L645 477M645 477L646 486M646 486L647 495M647 495L647 504M647 504L648 513M656 494L656 503M656 503L657 512"/><path stroke="#40e040" d="M312 289L321 288M321 288L330 288M330 288L339 287M348 286L357 285M357 285L366 285M366 285L375 284M375 284L384 283M384 283L393 282M393 282L402 281M411 281L420 280M420 280L429 279M429 279L438 278M438 278L447 277M447 277L456 277M456 277L465 276M465 276L474 275M474 275L483 274M483 274L492 274M492 274L501 273M501 273L510 272M387 310L396 309M316 325L325 324M325 324L334 324M334 324L343 323M343 323L351 322M351 322L360 321M360 321L369 320M369 320L378 320M378 320L387 319M387 319L396 318M396 318L405 317M405 317L414 316M414 316L423 316M432 315L441 314M397 327L406 326M406 326L415 325M415 325L424 325M424 325L433 324M460 322L469 321M469 321L478 320M487 319L496 318M496 318L505 318M505 318L514 317M514 317L523 316M523 316L532 315M532 315L541 314M541 314L550 314M550 314L558 313M558 313L567 312M567 312L576 311M372 347L381 347M381 347L390 346M390 346L399 345M399 345L408 344M417 343L426 343M426 343L435 342M435 342L444 341M444 341L452 340M452 340L461 339M461 339L470 339M470 339L479 338M488 337L497 336M497 336L506 336M408 353L417 352M417 352L426 352M426 352L435 351M435 351L444 350M444 350L453 349M453 349L462 348M462 348L471 348M471 348L480 347M480 347L489 346M489 346L498 345M498 345L507 344M507 344L516 344M516 344L525 343M525 343L534 342M534 342L543 341M543 341L552 341M552 341L561 340M561 340L570 339M570 339L579 338M579 338L588 337M588 337L597 337M597 337L606 336M606 336L615 335M615 335L624 334M624 334L633 334M633 334L642 333M517 353L526 352M526 352L535 351M535 351L544 350M553 350L562 349M562 349L571 348M571 348L580 347M580 347L589 346M589 346L597 346M597 346L606 345M606 345L615 344M615 344L624 343M624 343L633 342M589 355L598 355M598 355L607 354M607 354L616 353M616 353L625 352M625 352L634 351M634 351L643 351M323 406L332 405M332 405L341 404M341 404L350 403M350 403L359 403M368 402L376 401M376 401L385 400M385 400L394 400M394 400L403 399M403 399L412 398M412 398L421 397M421 397L430 396M430 396L439 396M439 396L448 395M448 395L457 394M457 394L466 393M475 392L484 392M484 392L493 391M493 391L502 390M502 390L511 389M511 389L520 389M520 389L529 388M529 388L538 387M538 387L547 386M547 386L556 385M556 385L565 385M574 384L583 383M592 382L601 381M601 381L610 381M610 381L619 380M619 380L628 379M628 379L636 378M422 406L431 405M431 405L440 405M449 404L458 403M512 398L521 397M521 397L530 397M530 397L539 396M539 396L548 395M557 394L566 394M566 394L575 393M575 393L583 392M583 392L592 391M592 391L601 390M601 390L610 390M610 390L619 389M628 388L637 387M637 387L646 387M329 478L338 477M338 477L347 476M347 476L356 475M356 475L365 474M365 474L374 474M374 474L383 473M383 473L392 472M392 472L401 471M401 471L410 470M410 470L419 470M437 477L446 476M446 476L455 476M455 476L464 475M464 475L473 474M473 474L482 473M482 473L491 472M491 472L500 472M331 495L340 495M340 495L348 494M348 494L357 493M357 493L366 492M366 492L375 492M375 492L384 491M393 490L402 489M402 489L411 488M411 488L420 488M420 488L429 487M429 487L438 486M438 486L447 485M447 485L456 484M456 484L465 484M564 484L573 483M573 483L582 482M582 482L591 482M591 482L600 481M600 481L609 480M609 480L618 479M618 479L627 479M627 479L636 478M636 478L645 477M645 477L654 476M332 513L341 513M341 513L350 512M359 511L368 510M368 510L377 509M377 509L386 509M386 509L395 508M574 492L583 491M602 499L611 498M611 498L620 497M629 496L638 496M638 496L647 495M647 495L656 494M432 523L441 522M441 522L450 521M459 520L468 520M468 520L477 519M477 519L486 518M486 518L495 517M495 517L504 516M504 516L513 516M513 516L522 515M522 515L531 514M531 514L540 513M549 512L558 512M558 512L567 511M567 511L576 510M576 510L585 509M497 544L506 543M506 543L515 543M524 542L533 541M533 541L542 540M542 540L551 539M551 539L560 539M569 538L578 537M578 537L587 536M587 536L596 535M596 535L605 535M605 535L614 534M614 534L623 533M623 533L632 532M632 532L641 532M641 532L650 531M650 531L659 530M462 556L471 555M471 555L480 555M480 555L489 554M489 554L498 553M498 553L507 552M507 552L516 551M516 551L525 551M525 551L534 550M534 550L543 549M543 549L552 548M552 548L561 548M561 548L570 547M570 547L579 546M588 545L597 544M597 544L606 544M606 544L615 543M615 543L624 542M624 542L633 541M633 541L642 541M642 541L651 540M651 540L660 539M338 576L347 575M347 575L356 575M347 584L356 584M356 584L365 583M365 583L374 582M383 581L392 580M392 580L401 580M376 600L385 599M385 599L394 598M412 597L421 596M421 596L430 595M511 597L520 596M520 596L529 596M538 595L547 594M547 594L556 593M556 593L565 592M312 289L313 298M313 298L314 307M314 307L315 316M335 341L336 350M336 350L337 359M337 359L337 368M337 368L338 377M338 377L339 386M348 286L349 295M349 295L350 304M350 304L351 313M351 313L351 322M351 322L352 331M352 331L353 340M353 340L354 349M355 358L355 367M356 376L357 385M357 385L358 394M358 394L359 403M359 412L360 421M360 421L361 430M361 430L362 439M362 447L363 456M363 456L364 465M364 465L365 474M365 474L366 483M366 483L366 492M366 492L367 501M367 501L368 510M368 510L369 519M369 519L370 528M370 528L370 537M370 537L371 546M371 546L372 555M372 555L373 564M373 564L373 573M364 366L365 375M365 375L366 384M366 384L367 393M367 293L368 302M368 302L369 311M369 311L369 320M369 320L370 329M370 329L371 338M403 498L404 507M404 507L405 516M405 525L406 534M406 534L407 543M407 543L408 552M409 561L409 570M409 570L410 579M393 282L394 291M394 291L395 300M395 300L396 309M396 309L396 318M396 318L397 327M408 453L409 461M409 461L410 470M410 470L410 479M411 488L412 497M412 497L413 506M413 506L414 515M409 362L410 371M410 371L411 380M412 389L412 398M412 398L413 407M414 416L415 425M415 425L415 434M415 434L416 443M416 443L417 452M417 452L418 461M418 461L419 470M419 479L420 488M420 488L421 497M421 497L422 506M422 506L423 515M423 515L423 523M424 532L425 541M425 541L426 550M426 550L426 559M426 559L427 568M427 568L428 577M428 577L429 586M429 586L430 595M430 595L430 604M429 279L430 288M430 288L431 297M431 297L431 306M431 306L432 315M432 315L433 324M433 324L434 333M434 333L435 342M435 342L435 351M439 287L440 296M440 296L440 305M440 305L441 314M442 323L443 332M443 332L444 341M444 341L444 350M444 350L445 359M445 359L446 368M446 368L447 377M447 377L447 386M447 386L448 395M448 395L449 404M449 404L450 413M451 422L451 431M451 431L452 440M452 440L453 449M454 467L455 476M455 476L456 484M474 275L475 284M475 284L475 293M475 293L476 302M476 302L477 311M477 311L478 320M478 320L479 329M479 329L479 338M479 338L480 347M480 347L481 356M481 356L482 365M482 365L483 374M483 374L483 383M483 383L484 392M484 392L485 401M485 401L486 410M486 410L486 419M486 419L487 428M487 428L488 436M488 436L489 445M489 445L490 454M490 454L490 463M490 463L491 472M491 472L492 481M492 481L493 490M493 490L493 499M493 499L494 508M494 508L495 517M495 517L496 526M496 526L497 535M497 535L497 544M497 544L498 553M499 562L500 571M500 571L501 580M501 580L501 589M501 589L502 598M530 505L531 514M532 523L532 532M532 532L533 541M534 550L535 559M535 559L536 568M536 568L536 577M536 577L537 586M537 586L538 595M532 324L533 333M549 413L550 422M550 422L551 431M551 431L552 440M552 440L552 449M552 449L553 458M553 458L554 467M554 467L555 476M555 476L555 485M555 485L556 494M556 494L557 503M557 503L558 512M558 512L559 521M559 521L559 530M559 530L560 539M560 539L561 548M561 548L562 557M562 557L563 565M563 565L563 574M563 574L564 583M564 583L565 592M550 314L550 323M551 332L552 341M552 341L553 350M553 350L553 358M555 376L556 385M556 385L557 394M557 403L558 412M558 412L559 421M559 421L560 430M560 430L561 439M561 439L561 448M561 448L562 457M562 457L563 466M563 466L564 475M564 475L564 484M586 419L587 428M587 428L587 437M587 437L588 446M589 455L590 464M590 464L591 473M591 473L591 482M591 482L592 491M593 500L594 509M594 509L594 518M594 518L595 526M595 526L596 535M596 535L597 544M597 544L598 553M598 553L598 562M598 562L599 571M628 379L628 388M628 388L629 397M629 397L630 406M630 406L631 415M631 415L631 424M631 424L632 433M632 433L633 442M634 451L635 460M648 513L649 522M649 522L650 531M650 531L651 540M651 540L651 549M651 549L652 558M652 558L653 567M653 567L654 576M654 576L655 585"/><path stroke="#40e0e0" d="M323 306L332 306M332 306L341 305M341 305L350 304M350 304L359 303M359 303L368 302M377 302L386 301M386 301L395 300M395 300L404 299M404 299L413 299M413 299L422 298M422 298L431 297M440 296L449 295M449 295L458 295M458 295L466 294M466 294L475 293M475 293L484 292M484 292L493 291M493 291L502 291M502 291L511 290M511 290L520 289M520 289L529 288M538 288L547 287M547 287L556 286M556 286L565 285M565 285L574 284M574 284L583 284M583 284L592 283M592 283L601 282M601 282L610 281M610 281L619 280M619 280L628 280M628 280L637 279M629 289L638 288M441 314L450 313M450 313L459 313M459 313L468 312M468 312L477 311M477 311L486 310M486 310L495 309M504 309L513 308M513 308L522 307M522 307L531 306M531 306L540 305M540 305L549 305M549 305L558 304M558 304L567 303M612 299L620 298M620 298L629 298M317 343L326 342M326 342L335 341M344 341L353 340M353 340L362 339M362 339L371 338M371 338L380 338M380 338L389 337M389 337L398 336M398 336L407 335M407 335L416 334M416 334L425 334M425 334L434 333M434 333L443 332M443 332L452 331M452 331L461 330M318 352L327 351M327 351L336 350M336 350L345 350M345 350L354 349M354 349L363 348M319 361L328 360M328 360L337 359M337 359L346 359M346 359L355 358M355 358L364 357M329 378L338 377M338 377L347 377M347 377L356 376M356 376L365 375M365 375L374 374M374 374L383 373M383 373L392 373M392 373L401 372M401 372L410 371M410 371L419 370M419 370L428 369M428 369L437 369M437 369L446 368M446 368L455 367M455 367L464 366M464 366L473 366M473 366L482 365M491 364L500 363M518 362L527 361M527 361L536 360M536 360L544 359M544 359L553 358M553 358L562 358M323 415L332 414M341 413L350 412M350 412L359 412M359 412L368 411M368 411L377 410M377 410L386 409M386 409L395 408M458 403L467 402M467 402L476 401M476 401L485 401M485 401L494 400M503 399L512 398M324 424L333 423M333 423L342 422M342 422L351 421M351 421L360 421M360 421L369 420M369 420L378 419M378 419L387 418M396 417L405 417M405 417L414 416M414 416L423 415M423 415L432 414M441 414L450 413M450 413L459 412M504 408L513 407M513 407L522 406M522 406L530 406M530 406L539 405M539 405L548 404M548 404L557 403M557 403L566 403M575 402L584 401M584 401L593 400M593 400L602 399M611 399L620 398M620 398L629 397M629 397L638 396M638 396L647 395M325 433L334 432M334 432L343 431M343 431L352 430M352 430L361 430M361 430L370 429M370 429L379 428M379 428L388 427M388 427L397 426M397 426L406 426M406 426L415 425M442 422L451 422M451 422L460 421M460 421L468 420M468 420L477 419M477 419L486 419M577 420L586 419M586 419L595 418M595 418L604 417M604 417L613 417M337 468L346 467M346 467L355 466M355 466L364 465M364 465L373 465M373 465L382 464M382 464L391 463M391 463L400 462M642 441L651 440M454 467L463 466M463 466L472 465M472 465L481 464M481 464L490 463M490 463L499 463M499 463L508 462M508 462L517 461M517 461L526 460M526 460L535 459M535 459L544 459M544 459L553 458M553 458L562 457M562 457L571 456M571 456L580 456M580 456L589 455M589 455L598 454M607 453L616 452M616 452L625 452M625 452L634 451M634 451L643 450M643 450L652 449M330 486L339 486M339 486L348 485M348 485L357 484M366 483L375 483M375 483L384 482M384 482L393 481M393 481L401 480M401 480L410 479M410 479L419 479M419 479L428 478M404 507L413 506M413 506L422 506M422 506L431 505M431 505L440 504M440 504L449 503M449 503L458 502M458 502L467 502M467 502L476 501M585 509L594 509M594 509L603 508M603 508L612 507M612 507L621 506M621 506L630 505M630 505L639 505M647 504L656 503M334 540L343 539M343 539L352 539M352 539L361 538M361 538L370 537M370 537L379 536M379 536L388 536M406 534L415 533M415 533L424 532M424 532L433 532M433 532L442 531M442 531L451 530M451 530L460 529M460 529L469 529M478 528L487 527M496 526L505 525M505 525L514 525M514 525L523 524M523 524L532 523M532 523L541 522M541 522L550 521M550 521L559 521M559 521L568 520M568 520L577 519M577 519L586 518M594 518L603 517M603 517L612 516M612 516L621 515M621 515L630 514M630 514L639 514M639 514L648 513M648 513L657 512M353 548L362 547M371 546L380 545M380 545L389 545M389 545L398 544M398 544L407 543M407 543L416 542M416 542L425 541M425 541L434 541M434 541L443 540M586 527L595 526M595 526L604 526M604 526L613 525M613 525L622 524M622 524L631 523M631 523L640 523M640 523L649 522M649 522L658 521M381 554L390 554M390 554L399 553M399 553L408 552M408 552L417 551M417 551L426 550M426 550L435 550M435 550L444 549M444 549L453 548M453 548L462 547M462 547L471 546M471 546L479 546M479 546L488 545M488 545L497 544M555 584L564 583M564 583L573 583M573 583L582 582M582 582L591 581M591 581L600 580M600 580L609 580M609 580L618 579M618 579L627 578M627 578L636 577M636 577L645 576M645 576L654 576M654 576L663 575M350 611L359 610M377 609L386 608M386 608L395 607M395 607L403 607M403 607L412 606M412 606L421 605M421 605L430 604M430 604L439 603M439 603L448 603M448 603L457 602M457 602L466 601M466 601L475 600M475 600L484 599M484 599L493 599M493 599L502 598M502 598L511 597M315 316L316 325M316 325L316 334M316 334L317 343M318 352L319 361M319 361L320 370M320 370L320 379M320 379L321 388M321 388L322 397M322 397L323 406M323 406L323 415M323 415L324 424M324 424L325 433M325 433L326 442M326 442L327 451M327 451L327 460M327 460L328 469M328 469L329 478M329 478L330 486M330 486L331 495M331 495L331 504M331 504L332 513M332 513L333 522M333 522L334 531M334 531L334 540M334 540L335 549M335 549L336 558M336 558L337 567M337 567L338 576M338 576L338 585M338 585L339 594M339 594L340 603M340 603L341 612M321 288L322 297M322 297L323 306M323 306L324 315M324 315L325 324M325 333L326 342M326 342L327 351M328 360L329 369M329 369L329 378M329 378L330 387M330 387L331 396M339 386L340 395M340 395L341 404M341 404L341 413M341 413L342 422M342 422L343 431M343 431L344 440M344 440L345 449M345 449L345 458M345 458L346 467M346 467L347 476M347 476L348 485M357 484L357 493M373 573L374 582M374 582L375 591M375 591L376 600M376 600L377 609M378 518L379 527M379 527L379 536M379 536L380 545M380 545L381 554M381 554L382 563M382 563L382 572M382 572L383 581M383 581L384 590M384 590L385 599M385 599L386 608M372 347L373 356M373 356L373 365M373 365L374 374M374 374L375 383M375 383L376 392M376 392L376 401M376 401L377 410M377 410L378 419M378 419L379 428M379 428L380 437M380 437L380 446M380 446L381 455M381 455L382 464M382 464L383 473M383 473L384 482M384 482L384 491M384 491L385 500M385 500L386 509M386 509L387 518M387 518L387 527M387 527L388 536M390 554L391 562M391 562L391 571M391 571L392 580M392 580L393 589M393 589L394 598M394 598L395 607M382 355L382 364M382 364L383 373M383 373L384 382M384 382L385 391M385 391L385 400M385 400L386 409M386 409L387 418M387 418L388 427M388 427L389 436M389 436L389 445M389 445L390 454M390 454L391 463M392 472L393 481M393 490L394 499M394 499L395 508M395 508L396 517M396 517L396 526M396 526L397 535M397 535L398 544M398 544L399 553M399 553L400 562M400 562L400 571M400 571L401 580M401 580L402 589M402 589L403 598M403 598L403 607M384 283L385 292M385 292L386 301M386 301L387 310M387 310L387 319M387 319L388 328M388 328L389 337M389 337L390 346M390 346L390 355M390 355L391 364M391 364L392 373M392 373L393 382M393 382L394 391M394 391L394 400M394 400L395 408M395 408L396 417M396 417L397 426M410 579L411 588M411 588L412 597M412 597L412 606M411 281L412 290M412 290L413 299M413 299L413 308M413 308L414 316M414 316L415 325M415 325L416 334M416 334L417 343M417 343L417 352M417 352L418 361M418 361L419 370M419 370L420 379M420 379L421 388M428 478L429 487M429 487L430 496M430 496L431 505M431 505L432 514M432 514L432 523M432 523L433 532M433 532L434 541M434 541L435 550M435 550L435 559M435 559L436 568M436 568L437 576M437 576L438 585M438 585L439 594M439 594L439 603M437 369L438 378M438 378L438 387M438 387L439 396M439 396L440 405M440 405L441 414M442 422L442 431M442 431L443 440M443 440L444 449M444 449L445 458M445 458L446 467M446 467L446 476M446 476L447 485M448 494L449 503M449 503L449 512M462 448L463 457M463 457L463 466M463 466L464 475M464 475L465 484M465 484L466 493M458 304L459 313M459 313L460 322M460 322L461 330M461 330L461 339M461 339L462 348M462 348L463 357M463 357L464 366M464 366L465 375M465 375L465 384M486 310L487 319M487 319L488 328M488 328L488 337M488 337L489 346M489 346L490 355M490 355L491 364M491 364L491 373M491 373L492 382M492 382L493 391M493 391L494 400M494 400L495 409M495 409L495 418M495 418L496 427M496 427L497 436M497 436L498 445M498 445L499 454M499 454L499 463M499 463L500 472M500 472L501 481M501 481L502 490M502 498L503 507M503 507L504 516M504 516L505 525M505 525L506 534M506 534L506 543M506 543L507 552M507 552L508 561M508 561L509 570M509 570L510 579M510 588L511 597M518 578L519 587M519 587L520 596M528 587L529 596M519 271L519 280M519 280L520 289M520 289L521 298M522 307L523 316M523 316L523 325M523 325L524 334M524 334L525 343M525 343L526 352M526 352L527 361M527 361L527 370M527 370L528 379M528 379L529 388M529 388L530 397M530 397L530 406M530 406L531 415M531 415L532 424M532 424L533 433M533 433L534 442M534 451L535 459M535 459L536 468M536 468L537 477M537 477L538 486M538 486L538 495M538 495L539 504M539 504L540 513M540 513L541 522M541 522L541 531M541 531L542 540M542 540L543 549M543 549L544 558M544 558L545 567M545 567L545 576M545 576L546 585M546 585L547 594M537 279L538 288M538 288L539 297M539 297L540 305M540 305L541 314M541 314L541 323M541 323L542 332M542 332L543 341M543 341L544 350M544 350L544 359M544 359L545 368M545 368L546 377M547 386L548 395M548 395L548 404M548 404L549 413M569 538L570 547M570 547L571 556M571 556L571 565M571 565L572 574M572 574L573 583M573 583L574 592M558 313L559 322M559 322L560 331M560 331L561 340M624 542L625 551M625 551L625 560M625 560L626 569M626 569L627 578M627 578L628 587M617 263L618 272M618 272L619 280M619 280L620 289M620 289L620 298M620 298L621 307M621 307L622 316M622 316L623 325M623 325L624 334M624 334L624 343M624 343L625 352M625 352L626 361M626 361L627 370"/><path stroke="#80ff80" d="M458 304L467 303M467 303L476 302M476 302L485 301M485 301L494 300M494 300L503 300M503 300L512 299M521 298L530 297M530 297L539 297M539 297L548 296M548 296L557 295M557 295L566 294M566 294L575 293M575 293L584 293M584 293L593 292M390 355L399 354M399 354L408 353M320 370L329 369M329 369L337 368M337 368L346 368M346 368L355 367M355 367L364 366M364 366L373 365M373 365L382 364M382 364L391 364M400 363L409 362M418 361L427 361M427 361L436 360M436 360L445 359M445 359L454 358M454 358L463 357M463 357L472 357M472 357L481 356M481 356L490 355M490 355L499 354M499 354L508 353M508 353L517 353M635 469L644 468M644 468L653 467M331 504L340 504M476 501L485 500M493 499L502 498M502 498L511 498M511 498L520 497M520 497L529 496M529 496L538 495M538 495L547 495M547 495L556 494M556 494L565 493M565 493L574 492M401 580L410 579M419 578L428 577M428 577L437 576M437 576L446 576M446 576L455 575M455 575L464 574M464 574L473 573M473 573L482 573M482 573L491 572M491 572L500 571M500 571L509 570M509 570L518 569M518 569L527 569M447 585L456 584M456 584L465 583M465 583L474 582M474 582L483 582M483 582L492 581M492 581L501 580M501 580L510 579M332 414L333 423M333 423L334 432M334 432L335 441M335 441L336 450M336 450L336 459M336 459L337 468M337 468L338 477M338 477L339 486M339 486L340 495M340 495L340 504M340 504L341 513M341 513L342 522M357 285L358 294M358 294L359 303M360 312L360 321M361 330L362 339M362 339L363 348M363 348L364 357M423 316L424 325M424 325L425 334M425 334L426 343M426 343L426 352M426 352L427 361M427 361L428 369M428 369L429 378M429 378L429 387M429 387L430 396M431 405L432 414M447 277L448 286M448 286L449 295M456 277L457 286M457 286L458 295M458 295L458 304M465 384L466 393M466 393L467 402M467 402L468 411M468 411L468 420M468 420L469 429M469 429L470 438M470 438L471 447M471 447L472 456M472 456L472 465M472 465L473 474M473 474L474 483M474 483L475 492M475 492L476 501M476 501L476 510M528 270L528 279M528 279L529 288M529 288L530 297M530 297L531 306M531 306L532 315M537 270L537 279M591 373L592 382M592 382L592 391M594 409L595 418M595 418L596 427M596 427L596 436M597 445L598 454M598 454L599 463M599 463L600 472M600 472L600 481M600 481L601 490M601 490L602 499M602 499L603 508M603 508L603 517M603 517L604 526M604 526L605 535M605 535L606 544M606 544L607 553M607 553L607 562M607 562L608 571M608 571L609 580M609 580L610 588M609 272L610 281M610 281L611 290M611 290L612 299M612 299L612 308M612 308L613 317M613 317L614 326M614 326L615 335M615 335L615 344M615 344L616 353M616 353L617 362M617 362L618 371M618 371L619 380M619 380L619 389M619 389L620 398M620 398L621 407M621 407L622 416M622 416L622 425"/><path stroke="#e0e040" d="M629 298L638 297M576 311L585 311M594 310L603 309M603 309L612 308M612 308L621 307M621 307L630 307M630 307L639 306M363 348L372 347M562 358L571 357M571 357L580 356M580 356L589 355M322 397L331 396M331 396L340 395M340 395L349 394M349 394L358 394M358 394L367 393M376 392L385 391M385 391L394 391M394 391L403 390M403 390L412 389M412 389L421 388M438 387L447 386M447 386L456 385M456 385L465 384M465 384L474 383M474 383L483 383M483 383L492 382M492 382L501 381M501 381L510 380M510 380L519 380M519 380L528 379M528 379L537 378M537 378L546 377M546 377L555 376M555 376L564 376M564 376L573 375M573 375L582 374M582 374L591 373M591 373L600 373M600 373L609 372M609 372L618 371M618 371L627 370M627 370L636 369M636 369L645 369M395 408L404 408M404 408L413 407M413 407L422 406M459 412L468 411M468 411L477 410M477 410L486 410M486 410L495 409M495 409L504 408M613 417L622 416M622 416L631 415M640 414L649 413M327 451L336 450M336 450L345 449M345 449L354 448M354 448L362 447M362 447L371 447M371 447L380 446M380 446L389 445M389 445L398 444M398 444L407 444M407 444L416 443M425 442L434 441M434 441L443 440M443 440L452 440M452 440L461 439M461 439L470 438M470 438L479 437M479 437L488 436M488 436L497 436M524 433L533 433M533 433L542 432M551 431L560 430M560 430L569 429M569 429L578 429M578 429L587 428M587 428L596 427M596 427L605 426M605 426L614 426M614 426L622 425M622 425L631 424M631 424L640 423M640 423L649 422M445 458L454 458M454 458L463 457M463 457L472 456M472 456L481 455M481 455L490 454M490 454L499 454M499 454L508 453M508 453L516 452M516 452L525 451M525 451L534 451M534 451L543 450M543 450L552 449M552 449L561 448M561 448L570 447M570 447L579 447M579 447L588 446M588 446L597 445M597 445L606 444M606 444L615 443M615 443L624 443M624 443L633 442M633 442L642 441M500 472L509 471M509 471L518 470M518 470L527 469M527 469L536 468M536 468L545 468M545 468L554 467M554 467L563 466M572 465L581 465M581 465L590 464M590 464L599 463M599 463L608 462M608 462L617 461M617 461L626 461M626 461L635 460M635 460L644 459M644 459L653 458M465 484L474 483M474 483L483 482M483 482L492 481M492 481L501 481M510 480L519 479M519 479L528 478M528 478L537 477M537 477L546 477M546 477L555 476M351 521L360 520M369 519L378 518M378 518L387 518M387 518L396 517M405 516L414 515M414 515L423 515M423 515L432 514M432 514L440 513M440 513L449 512M449 512L458 511M458 511L467 511M467 511L476 510M476 510L485 509M485 509L494 508M494 508L503 507M503 507L512 507M512 507L521 506M521 506L530 505M530 505L539 504M539 504L548 504M548 504L557 503M557 503L566 502M566 502L575 501M575 501L584 500M584 500L593 500M593 500L602 499M339 594L348 593M348 593L357 593M357 593L366 592M375 591L384 590M384 590L393 589M393 589L402 589M402 589L411 588M411 588L420 587M429 586L438 585M438 585L447 585M339 287L340 296M340 296L341 305M341 305L342 314M342 314L343 323M343 323L343 332M343 332L344 341M344 341L345 350M345 350L346 359M346 368L347 377M347 377L348 386M348 386L349 394M349 394L350 403M350 403L350 412M350 412L351 421M351 421L352 430M367 393L368 402M368 402L368 411M368 411L369 420M369 420L370 429M370 429L371 438M371 438L371 447M371 447L372 456M372 456L373 465M374 474L375 483M375 483L375 492M375 492L376 500M375 284L376 293M376 293L377 302M377 302L378 311M378 311L378 320M378 320L379 329M379 329L380 338M424 433L425 442M425 442L426 451M426 451L427 460M427 460L428 469M428 469L428 478M449 295L449 304M449 304L450 313M450 313L451 322M451 322L452 331M452 331L452 340M452 340L453 349M453 349L454 358M454 358L455 367M455 367L456 376M456 376L456 385M456 385L457 394M457 394L458 403M458 403L459 412M459 412L460 421M460 421L460 430M460 430L461 439M461 439L462 448M471 546L471 555M471 555L472 564M472 564L473 573M473 573L474 582M474 582L474 591M474 591L475 600M481 455L481 464M481 464L482 473M482 473L483 482M484 491L485 500M485 500L485 509M485 509L486 518M487 527L488 536M488 536L488 545M488 545L489 554M489 554L490 563M501 273L502 282M502 282L502 291M502 291L503 300M503 300L504 309M504 309L505 318M505 318L505 327M505 327L506 336M506 336L507 344M507 344L508 353M508 353L509 362M510 272L511 281M511 281L511 290M529 496L530 505M561 340L562 349M562 349L562 358M562 358L563 367M563 367L564 376M564 376L565 385M565 385L566 394M566 394L566 403M566 403L567 412M567 412L568 420M569 429L569 438M569 438L570 447M570 447L571 456M571 456L572 465M575 293L576 302M576 302L576 311M576 311L577 320M577 320L578 329M578 329L579 338M579 338L580 347M580 347L580 356M580 356L581 365M581 365L582 374M582 374L583 383M583 383L583 392M583 392L584 401M584 401L585 410M585 410L586 419M599 571L600 580M600 580L601 589M584 293L585 302M585 302L585 311M585 311L586 319M586 319L587 328M587 328L588 337M588 337L589 346M589 346L589 355M589 355L590 364M590 265L591 274M591 274L592 283M592 283L593 292M593 292L594 301M594 301L594 310M594 310L595 319M596 328L597 337M597 346L598 355M598 355L599 364M599 364L600 373M600 373L601 381M601 390L602 399M603 408L604 417M604 417L605 426M605 426L605 435M606 444L607 453M607 453L608 462M608 462L608 471M608 471L609 480M609 480L610 489M610 489L611 498M611 498L612 507M612 507L612 516M612 516L613 525M613 525L614 534M614 534L615 543M615 543L616 552M616 552L616 561M616 561L617 570M617 570L618 579M618 579L619 588M622 425L623 434M623 434L624 443M625 452L626 461M626 461L626 470M626 470L627 479M627 479L628 487M629 496L630 505M630 505L630 514M630 514L631 523M631 523L632 532M632 532L633 541M633 541L633 550M633 550L634 559M635 568L636 577M627 370L628 379M657 512L658 521M658 521L659 530M659 530L660 539M660 539L660 548M660 548L661 557M661 557L662 566M662 566L663 575M663 575L664 584"/><path stroke="#e02020" d="M461 330L470 330M470 330L479 329M479 329L488 328M488 328L497 327M497 327L505 327M505 327L514 326M514 326L523 325M523 325L532 324M532 324L541 323M541 323L550 323M550 323L559 322M559 322L568 321M568 321L577 320M577 320L586 319M586 319L595 319M595 319L604 318M604 318L613 317M613 317L622 316M622 316L631 316M542 332L551 332M551 332L560 331M560 331L569 330M569 330L578 329M578 329L587 328M596 328L605 327M605 327L614 326M456 376L465 375M465 375L474 375M474 375L483 374M483 374L491 373M491 373L500 372M500 372L509 371M509 371L518 371M518 371L527 370M527 370L536 369M536 369L545 368M545 368L554 367M563 367L572 366M572 366L581 365M581 365L590 364M599 364L608 363M608 363L617 362M626 361L635 360M635 360L644 360M541 423L550 422M550 422L559 421M559 421L568 420M328 469L337 468M457 493L466 493M466 493L475 492M475 492L484 491M493 490L502 490M502 490L511 489M511 489L520 488M520 488L529 487M538 486L547 486M547 486L555 485M555 485L564 484M355 566L364 565M364 565L373 564M373 564L382 563M590 572L599 571M599 571L608 571M608 571L617 570M617 570L626 569M626 569L635 568M635 568L644 567M644 567L653 567M653 567L662 566M342 522L343 531M343 531L343 539M344 548L345 557M345 557L346 566M346 566L347 575M347 575L347 584M347 584L348 593M348 593L349 602M349 602L350 611M357 493L358 502M358 502L359 511M359 511L360 520M360 520L361 529M361 529L361 538M361 538L362 547M362 547L363 556M363 556L364 565M364 565L364 574M364 574L365 583M365 583L366 592M366 592L367 601M367 601L368 610M421 388L421 397M421 397L422 406M422 406L423 415M424 424L424 433M447 485L448 494M449 512L450 521M456 484L457 493M457 493L458 502M458 502L458 511M458 511L459 520M459 520L460 529M460 529L461 538M461 538L462 547M462 547L462 556M462 556L463 565M464 574L465 583M490 563L491 572M491 572L492 581M492 581L492 590M492 590L493 599M510 480L511 489M511 489L511 498M511 498L512 507M512 507L513 516M509 362L509 371M509 371L510 380M510 380L511 389M511 389L512 398M512 398L513 407M513 407L513 416M514 425L515 434M515 434L516 443M516 443L516 452M516 452L517 461M517 461L518 470M518 470L519 479M519 479L520 488M520 488L520 497M520 497L521 506M521 506L522 515M522 515L523 524M523 524L524 533M524 533L524 542M524 542L525 551M525 551L526 560M526 560L527 569M527 569L527 578M527 578L528 587M573 266L573 275M573 275L574 284M574 284L575 293M602 291L603 300M603 300L603 309M603 309L604 318M604 318L605 327M605 327L606 336M606 336L606 345M606 345L607 354M636 270L637 279M637 279L638 288M638 288L638 297M639 306L640 315M640 315L641 324M641 324L642 333M642 333L642 342M642 342L643 351M643 351L644 360M644 360L645 369M645 369L645 378M645 378L646 387M646 387L647 395M648 404L649 413M649 413L649 422M649 422L650 431M650 431L651 440M651 440L652 449M652 449L653 458M653 458L653 467M653 467L654 476M654 476L655 485M655 485L656 494"/><path fill="#ffffff" d="M487 327h2v2h-2zM491 327h2v2h-2zM500 326h2v2h-2zM513 325h2v2h-2zM531 323h2v2h-2zM474 337h2v2h-2zM487 336h2v2h-2zM501 335h2v2h-2zM514 334h2v2h-2zM537 332h2v2h-2zM470 347h2v2h-2zM475 346h2v2h-2zM484 345h2v2h-2zM493 345h2v2h-2zM497 344h2v2h-2zM502 344h2v2h-2zM506 343h2v2h-2zM511 343h2v2h-2zM524 342h2v2h-2zM537 341h2v2h-2zM462 356h2v2h-2zM471 356h2v2h-2zM498 353h2v2h-2zM511 352h2v2h-2zM520 351h2v2h-2zM525 351h2v2h-2zM458 366h2v2h-2zM467 365h2v2h-2zM476 364h2v2h-2zM450 375h2v2h-2zM464 374h2v2h-2zM468 374h2v2h-2zM473 374h2v2h-2zM482 373h2v2h-2zM486 372h2v2h-2zM495 372h2v2h-2zM513 370h2v2h-2zM522 369h2v2h-2zM526 369h2v2h-2zM535 368h2v2h-2zM540 368h2v2h-2zM544 367h2v2h-2zM446 385h2v2h-2zM451 384h2v2h-2zM460 384h2v2h-2zM469 383h2v2h-2zM473 382h2v2h-2zM487 381h2v2h-2zM491 381h2v2h-2zM496 381h2v2h-2zM505 380h2v2h-2zM514 379h2v2h-2zM523 378h2v2h-2zM532 377h2v2h-2zM438 395h2v2h-2zM443 394h2v2h-2zM447 394h2v2h-2zM456 393h2v2h-2zM461 393h2v2h-2zM483 391h2v2h-2zM488 390h2v2h-2zM505 389h2v2h-2zM510 388h2v2h-2zM514 388h2v2h-2zM523 387h2v2h-2zM537 386h2v2h-2zM546 385h2v2h-2zM426 405h2v2h-2zM430 404h2v2h-2zM457 402h2v2h-2zM466 401h2v2h-2zM475 400h2v2h-2zM479 400h2v2h-2zM484 400h2v2h-2zM488 399h2v2h-2zM520 396h2v2h-2zM538 395h2v2h-2zM417 414h2v2h-2zM422 414h2v2h-2zM440 413h2v2h-2zM444 412h2v2h-2zM449 412h2v2h-2zM453 411h2v2h-2zM480 409h2v2h-2zM485 409h2v2h-2zM494 408h2v2h-2zM529 405h2v2h-2zM543 404h2v2h-2zM459 420h2v2h-2zM463 420h2v2h-2zM490 417h2v2h-2zM494 417h2v2h-2zM512 415h2v2h-2zM526 414h2v2h-2zM535 413h2v2h-2zM441 430h2v2h-2zM450 430h2v2h-2zM482 427h2v2h-2zM495 426h2v2h-2zM504 425h2v2h-2zM527 423h2v2h-2zM531 423h2v2h-2zM536 422h2v2h-2zM549 421h2v2h-2zM438 440h2v2h-2zM451 439h2v2h-2zM456 438h2v2h-2zM474 437h2v2h-2zM478 436h2v2h-2zM483 436h2v2h-2zM487 436h2v2h-2zM491 435h2v2h-2zM523 432h2v2h-2zM532 432h2v2h-2zM550 430h2v2h-2zM425 450h2v2h-2zM443 448h2v2h-2zM447 448h2v2h-2zM452 448h2v2h-2zM479 445h2v2h-2zM483 445h2v2h-2zM488 444h2v2h-2zM501 443h2v2h-2zM506 443h2v2h-2zM510 443h2v2h-2zM528 441h2v2h-2zM533 441h2v2h-2zM546 439h2v2h-2zM551 439h2v2h-2zM421 459h2v2h-2zM444 457h2v2h-2zM453 457h2v2h-2zM462 456h2v2h-2zM471 455h2v2h-2zM480 454h2v2h-2zM489 453h2v2h-2zM493 453h2v2h-2zM498 453h2v2h-2zM502 452h2v2h-2zM511 451h2v2h-2zM524 450h2v2h-2zM547 448h2v2h-2zM551 448h2v2h-2zM431 467h2v2h-2zM462 465h2v2h-2zM480 463h2v2h-2zM485 463h2v2h-2zM489 462h2v2h-2zM498 462h2v2h-2zM503 461h2v2h-2zM507 461h2v2h-2zM512 460h2v2h-2zM525 459h2v2h-2zM539 458h2v2h-2zM543 458h2v2h-2zM441 476h2v2h-2zM445 475h2v2h-2zM454 475h2v2h-2zM459 474h2v2h-2zM468 473h2v2h-2zM477 473h2v2h-2zM513 469h2v2h-2zM526 468h2v2h-2zM548 466h2v2h-2zM553 466h2v2h-2zM424 486h2v2h-2zM428 486h2v2h-2zM433 485h2v2h-2zM437 485h2v2h-2zM446 484h2v2h-2zM451 484h2v2h-2zM469 482h2v2h-2zM482 481h2v2h-2zM486 481h2v2h-2zM491 480h2v2h-2zM495 480h2v2h-2zM513 478h2v2h-2zM522 478h2v2h-2zM527 477h2v2h-2zM536 476h2v2h-2zM545 476h2v2h-2zM429 495h2v2h-2zM433 494h2v2h-2zM442 494h2v2h-2zM447 493h2v2h-2zM460 492h2v2h-2zM465 492h2v2h-2zM496 489h2v2h-2zM501 489h2v2h-2zM505 488h2v2h-2zM541 485h2v2h-2zM546 485h2v2h-2zM425 504h2v2h-2zM430 504h2v2h-2zM439 503h2v2h-2zM457 501h2v2h-2zM475 500h2v2h-2zM492 498h2v2h-2zM515 496h2v2h-2zM524 496h2v2h-2zM537 494h2v2h-2zM542 494h2v2h-2zM546 494h2v2h-2zM551 493h2v2h-2zM431 513h2v2h-2zM435 512h2v2h-2zM448 511h2v2h-2zM453 511h2v2h-2zM457 510h2v2h-2zM466 510h2v2h-2zM471 509h2v2h-2zM475 509h2v2h-2zM480 508h2v2h-2zM484 508h2v2h-2zM493 507h2v2h-2zM498 507h2v2h-2zM525 504h2v2h-2zM529 504h2v2h-2zM547 503h2v2h-2zM552 502h2v2h-2zM556 502h2v2h-2zM427 522h2v2h-2zM431 522h2v2h-2zM440 521h2v2h-2zM445 521h2v2h-2zM458 519h2v2h-2zM476 518h2v2h-2zM503 515h2v2h-2zM508 515h2v2h-2zM521 514h2v2h-2zM530 513h2v2h-2zM548 511h2v2h-2zM437 530h2v2h-2zM441 530h2v2h-2zM459 528h2v2h-2zM463 528h2v2h-2zM504 524h2v2h-2zM513 524h2v2h-2zM517 523h2v2h-2zM526 522h2v2h-2zM535 522h2v2h-2zM549 520h2v2h-2zM553 520h2v2h-2zM433 540h2v2h-2zM437 539h2v2h-2zM446 538h2v2h-2zM460 537h2v2h-2zM469 536h2v2h-2zM473 536h2v2h-2zM491 535h2v2h-2zM496 534h2v2h-2zM500 534h2v2h-2zM505 533h2v2h-2zM523 532h2v2h-2zM536 531h2v2h-2zM540 530h2v2h-2zM545 530h2v2h-2zM443 548h2v2h-2zM461 546h2v2h-2zM470 545h2v2h-2zM492 543h2v2h-2zM496 543h2v2h-2zM505 542h2v2h-2zM510 542h2v2h-2zM537 540h2v2h-2zM541 539h2v2h-2zM550 538h2v2h-2zM443 557h2v2h-2zM452 556h2v2h-2zM461 555h2v2h-2zM470 554h2v2h-2zM475 554h2v2h-2zM484 553h2v2h-2zM497 552h2v2h-2zM511 551h2v2h-2zM515 550h2v2h-2zM524 550h2v2h-2zM533 549h2v2h-2zM551 547h2v2h-2zM555 547h2v2h-2zM547 557h2v2h-2zM421 410h2v2h-2zM423 423h2v2h-2zM423 432h2v2h-2zM424 437h2v2h-2zM424 441h2v2h-2zM425 445h2v2h-2zM426 463h2v2h-2zM427 468h2v2h-2zM427 472h2v2h-2zM428 481h2v2h-2zM429 490h2v2h-2zM429 495h2v2h-2zM430 504h2v2h-2zM431 513h2v2h-2zM431 522h2v2h-2zM432 535h2v2h-2zM433 544h2v2h-2zM434 549h2v2h-2zM430 404h2v2h-2zM430 409h2v2h-2zM431 413h2v2h-2zM432 422h2v2h-2zM433 440h2v2h-2zM438 494h2v2h-2zM439 507h2v2h-2zM440 521h2v2h-2zM441 525h2v2h-2zM441 530h2v2h-2zM441 534h2v2h-2zM443 552h2v2h-2zM443 557h2v2h-2zM441 426h2v2h-2zM442 435h2v2h-2zM443 448h2v2h-2zM444 457h2v2h-2zM445 475h2v2h-2zM446 480h2v2h-2zM447 493h2v2h-2zM447 498h2v2h-2zM448 502h2v2h-2zM448 511h2v2h-2zM449 520h2v2h-2zM450 534h2v2h-2zM451 543h2v2h-2zM452 547h2v2h-2zM452 556h2v2h-2zM446 380h2v2h-2zM446 385h2v2h-2zM448 407h2v2h-2zM450 430h2v2h-2zM451 439h2v2h-2zM453 466h2v2h-2zM455 479h2v2h-2zM455 483h2v2h-2zM457 501h2v2h-2zM457 506h2v2h-2zM459 528h2v2h-2zM459 533h2v2h-2zM460 542h2v2h-2zM454 371h2v2h-2zM455 380h2v2h-2zM455 384h2v2h-2zM456 389h2v2h-2zM456 393h2v2h-2zM457 398h2v2h-2zM457 406h2v2h-2zM458 415h2v2h-2zM459 429h2v2h-2zM461 451h2v2h-2zM462 456h2v2h-2zM462 460h2v2h-2zM465 492h2v2h-2zM466 510h2v2h-2zM468 523h2v2h-2zM469 536h2v2h-2zM469 541h2v2h-2zM470 545h2v2h-2zM470 554h2v2h-2zM462 361h2v2h-2zM463 370h2v2h-2zM464 374h2v2h-2zM465 388h2v2h-2zM465 392h2v2h-2zM467 410h2v2h-2zM468 424h2v2h-2zM470 451h2v2h-2zM471 455h2v2h-2zM471 459h2v2h-2zM471 464h2v2h-2zM473 486h2v2h-2zM474 491h2v2h-2zM474 495h2v2h-2zM475 504h2v2h-2zM476 513h2v2h-2zM476 518h2v2h-2zM477 527h2v2h-2zM478 536h2v2h-2zM478 540h2v2h-2zM479 554h2v2h-2zM471 351h2v2h-2zM471 356h2v2h-2zM472 365h2v2h-2zM472 369h2v2h-2zM475 405h2v2h-2zM476 409h2v2h-2zM476 418h2v2h-2zM477 423h2v2h-2zM477 427h2v2h-2zM478 432h2v2h-2zM479 445h2v2h-2zM479 450h2v2h-2zM480 454h2v2h-2zM480 459h2v2h-2zM483 490h2v2h-2zM484 508h2v2h-2zM486 526h2v2h-2zM486 530h2v2h-2zM488 553h2v2h-2zM478 328h2v2h-2zM479 346h2v2h-2zM480 350h2v2h-2zM480 355h2v2h-2zM480 359h2v2h-2zM483 386h2v2h-2zM483 391h2v2h-2zM485 409h2v2h-2zM485 413h2v2h-2zM485 418h2v2h-2zM486 422h2v2h-2zM487 436h2v2h-2zM488 449h2v2h-2zM489 453h2v2h-2zM489 462h2v2h-2zM490 467h2v2h-2zM492 494h2v2h-2zM492 498h2v2h-2zM495 530h2v2h-2zM496 539h2v2h-2zM496 543h2v2h-2zM487 332h2v2h-2zM488 345h2v2h-2zM490 367h2v2h-2zM491 376h2v2h-2zM492 385h2v2h-2zM492 394h2v2h-2zM494 408h2v2h-2zM496 430h2v2h-2zM496 435h2v2h-2zM498 453h2v2h-2zM498 457h2v2h-2zM498 462h2v2h-2zM501 497h2v2h-2zM502 502h2v2h-2zM503 520h2v2h-2zM505 533h2v2h-2zM505 542h2v2h-2zM506 547h2v2h-2zM496 335h2v2h-2zM497 340h2v2h-2zM498 358h2v2h-2zM501 389h2v2h-2zM501 394h2v2h-2zM503 407h2v2h-2zM504 420h2v2h-2zM506 447h2v2h-2zM507 452h2v2h-2zM508 474h2v2h-2zM509 479h2v2h-2zM510 497h2v2h-2zM512 510h2v2h-2zM512 515h2v2h-2zM513 524h2v2h-2zM514 533h2v2h-2zM514 542h2v2h-2zM515 546h2v2h-2zM515 550h2v2h-2zM505 335h2v2h-2zM506 348h2v2h-2zM508 361h2v2h-2zM508 366h2v2h-2zM508 370h2v2h-2zM510 384h2v2h-2zM510 388h2v2h-2zM511 402h2v2h-2zM512 406h2v2h-2zM514 433h2v2h-2zM516 456h2v2h-2zM517 469h2v2h-2zM519 496h2v2h-2zM520 500h2v2h-2zM522 523h2v2h-2zM523 532h2v2h-2zM523 536h2v2h-2zM523 541h2v2h-2zM524 554h2v2h-2zM513 325h2v2h-2zM514 334h2v2h-2zM515 343h2v2h-2zM515 347h2v2h-2zM516 356h2v2h-2zM517 361h2v2h-2zM519 392h2v2h-2zM520 401h2v2h-2zM521 414h2v2h-2zM522 419h2v2h-2zM522 428h2v2h-2zM523 432h2v2h-2zM523 437h2v2h-2zM524 441h2v2h-2zM524 446h2v2h-2zM525 455h2v2h-2zM526 468h2v2h-2zM526 473h2v2h-2zM529 504h2v2h-2zM530 509h2v2h-2zM531 531h2v2h-2zM522 320h2v2h-2zM522 324h2v2h-2zM523 333h2v2h-2zM524 337h2v2h-2zM527 373h2v2h-2zM527 378h2v2h-2zM528 387h2v2h-2zM528 391h2v2h-2zM529 400h2v2h-2zM530 414h2v2h-2zM531 418h2v2h-2zM531 423h2v2h-2zM532 432h2v2h-2zM532 436h2v2h-2zM533 450h2v2h-2zM535 467h2v2h-2zM536 481h2v2h-2zM537 490h2v2h-2zM538 499h2v2h-2zM538 508h2v2h-2zM540 521h2v2h-2zM540 530h2v2h-2zM541 535h2v2h-2zM541 539h2v2h-2zM533 341h2v2h-2zM533 346h2v2h-2zM535 364h2v2h-2zM535 368h2v2h-2zM537 390h2v2h-2zM538 395h2v2h-2zM538 399h2v2h-2zM540 417h2v2h-2zM540 426h2v2h-2zM541 431h2v2h-2zM542 444h2v2h-2zM542 449h2v2h-2zM543 458h2v2h-2zM544 467h2v2h-2zM544 471h2v2h-2zM547 498h2v2h-2zM549 520h2v2h-2zM549 525h2v2h-2zM550 534h2v2h-2zM550 538h2v2h-2zM551 543h2v2h-2zM551 552h2v2h-2zM552 556h2v2h-2zM542 340h2v2h-2zM543 358h2v2h-2zM545 372h2v2h-2zM547 394h2v2h-2zM547 403h2v2h-2zM548 408h2v2h-2zM548 412h2v2h-2zM549 417h2v2h-2zM551 439h2v2h-2zM551 443h2v2h-2zM551 448h2v2h-2zM552 452h2v2h-2zM553 461h2v2h-2zM553 466h2v2h-2zM554 479h2v2h-2zM555 488h2v2h-2zM555 493h2v2h-2zM556 497h2v2h-2zM556 502h2v2h-2z"/></g><g clip-path="url(#c4)" stroke-width="1.3" fill="none"><path stroke="#1a1ab4" d="M336 250L342 253M342 253L348 257M354 260L360 263M360 263L366 266M366 266L373 270M373 270L379 273M379 273L385 276M385 276L391 280M391 280L397 283M397 283L404 286M404 286L410 289M410 289L416 293M422 296L428 299M428 299L434 303M434 303L441 306M465 319L472 322M338 259L345 263M345 263L351 266M351 266L357 269M357 269L363 273M363 273L369 276M369 276L376 279M376 279L382 282M388 286L394 289M394 289L400 292M400 292L406 296M406 296L413 299M413 299L419 302M419 302L425 305M425 305L431 309M431 309L437 312M444 315L450 319M456 322L462 325M462 325L468 328M468 328L474 332M474 332L481 335M481 335L487 338M487 338L493 342M493 342L499 345M505 348L512 351M512 351L518 355M329 262L335 266M335 266L341 269M341 269L348 272M348 272L354 276M360 279L366 282M366 282L372 285M372 285L378 289M385 292L391 295M326 269L332 272M332 272L338 275M338 275L344 278M350 282L357 285M357 285L363 288M363 288L369 292M375 295L381 298M394 305L400 308M400 308L406 311M412 315L418 318M425 321L431 324M437 328L443 331M443 331L449 334M449 334L456 338M456 338L462 341M462 341L468 344M474 347L480 351M480 351L486 354M493 357L499 361M499 361L505 364M329 278L335 281M335 281L341 285M341 285L347 288M347 288L353 291M353 291L360 294M366 298L372 301M372 301L378 304M384 308L390 311M390 311L397 314M397 314L403 317M403 317L409 321M409 321L415 324M415 324L421 327M421 327L428 331M428 331L434 334M434 334L440 337M440 337L446 340M452 344L458 347M458 347L465 350M465 350L471 354M471 354L477 357M477 357L483 360M483 360L489 363M489 363L495 367M495 367L502 370M319 281L325 284M325 284L332 287M332 287L338 291M338 291L344 294M344 294L350 297M350 297L356 301M356 301L362 304M362 304L369 307M369 307L375 310M375 310L381 314M381 314L387 317M393 320L400 324M412 330L418 333M418 333L424 337M430 340L437 343M437 343L443 347M443 347L449 350M449 350L455 353M316 287L322 290M322 290L328 294M328 294L334 297M334 297L341 300M341 300L347 304M347 304L353 307M353 307L359 310M359 310L365 313M365 313L371 317M371 317L378 320M378 320L384 323M384 323L390 327M390 327L396 330M396 330L402 333M402 333L409 336M415 340L421 343M421 343L427 346M427 346L433 350M433 350L439 353M439 353L446 356M446 356L452 359M452 359L458 363M458 363L464 366M477 373L483 376M483 376L489 379M489 379L495 382M495 382L501 386M313 293L319 297M368 323L374 326M374 326L381 329M381 329L387 333M387 333L393 336M393 336L399 339M399 339L405 343M405 343L411 346M411 346L418 349M418 349L424 352M430 356L436 359M442 362L449 366M449 366L455 369M455 369L461 372M461 372L467 375M467 375L473 379M473 379L479 382M479 382L486 385M486 385L492 389M315 303L322 306M328 309L334 313M334 313L340 316M340 316L346 319M346 319L353 322M353 322L359 326M359 326L365 329M365 329L371 332M371 332L377 336M377 336L383 339M390 342L396 345M414 355L421 359M427 362L433 365M433 365L439 368M439 368L445 372M458 378L464 382M476 388L482 391M482 391L489 395M306 306L312 309M312 309L318 312M343 325L349 329M473 394L479 398M479 398L485 401M485 401L491 404M303 312L309 315M309 315L315 318M315 318L321 322M321 322L327 325M334 328L340 332M340 332L346 335M352 338L358 341M358 341L365 345M365 345L371 348M371 348L377 351M377 351L383 355M383 355L389 358M389 358L395 361M395 361L402 364M402 364L408 368M414 371L420 374M420 374L426 378M426 378L433 381M299 318L306 321M312 325L318 328M318 328L324 331M324 331L330 334M337 338L343 341M386 364L392 367M392 367L398 371M398 371L405 374M417 380L423 384M429 387L435 390M435 390L442 394M442 394L448 397M448 397L454 400M460 403L466 407M309 331L315 334M315 334L321 337M321 337L327 341M339 347L346 350M346 350L352 354M352 354L358 357M358 357L364 360M364 360L370 364M370 364L376 367M389 373L395 377M401 380L407 383M407 383L414 387M414 387L420 390M420 390L426 393M426 393L432 396M432 396L438 400M438 400L444 403M451 406L457 410M463 413L469 416M469 416L475 419M475 419L482 423M299 334L305 337M305 337L311 340M311 340L318 343M318 343L324 347M324 347L330 350M330 350L336 353M336 353L342 357M342 357L348 360M348 360L355 363M355 363L361 366M361 366L367 370M367 370L373 373M373 373L379 376M379 376L386 380M386 380L392 383M392 383L398 386M398 386L404 389M404 389L410 393M410 393L416 396M416 396L423 399M423 399L429 403M429 403L435 406M435 406L441 409M441 409L447 413M447 413L454 416M454 416L460 419M460 419L466 422M466 422L472 426M472 426L478 429M290 337L296 340M296 340L302 343M308 346L314 350M382 386L388 389M395 392L401 396M401 396L407 399M419 406L426 409M426 409L432 412M432 412L438 415M438 415L444 419M444 419L450 422M450 422L456 425M456 425L463 429M463 429L469 432M286 343L292 346M292 346L299 349M299 349L305 353M317 359L323 362M336 369L342 372M342 372L348 376M348 376L354 379M360 382L367 385M367 385L373 389M373 389L379 392M398 402L404 405M410 408L416 412M422 415L428 418M428 418L435 422M441 425L447 428M447 428L453 431M453 431L459 435M459 435L466 438M466 438L472 441M283 349L289 352M289 352L295 355M295 355L302 359M302 359L308 362M308 362L314 365M314 365L320 369M320 369L326 372M326 372L332 375M332 375L339 378M339 378L345 382M351 385L357 388M363 392L370 395M370 395L376 398M376 398L382 401M394 408L400 411M400 411L407 415M407 415L413 418M425 424L431 428M438 431L444 434M444 434L450 438M450 438L456 441M456 441L462 444M462 444L468 447M286 358L292 362M292 362L298 365M348 391L354 395M366 401L372 404M372 404L379 408M379 408L385 411M391 414L397 418M403 421L410 424M416 427L422 431M434 437L440 441M440 441L447 444M453 447L459 450M459 450L465 454M276 361L283 365M283 365L289 368M295 371L301 374M301 374L307 378M307 378L314 381M314 381L320 384M351 401L357 404M357 404L363 407M363 407L369 411M375 414L382 417M382 417L388 420M388 420L394 424M394 424L400 427M400 427L406 430M412 434L419 437M419 437L425 440M431 443L437 447M437 447L443 450M443 450L449 453M449 453L456 457M456 457L462 460M270 374L276 377M288 383L295 387M295 387L301 390M301 390L307 393M313 397L319 400M319 400L325 403M325 403L332 406M332 406L338 410M338 410L344 413M344 413L350 416M350 416L356 420M356 420L363 423M363 423L369 426M369 426L375 429M375 429L381 433M381 433L387 436M387 436L393 439M393 439L400 443M400 443L406 446M412 449L418 452M424 456L431 459M431 459L437 462M437 462L443 466M443 466L449 469M449 469L455 472M267 380L273 383M279 386L285 390M285 390L291 393M304 400L310 403M310 403L316 406M316 406L322 409M322 409L328 413M263 386L269 389M260 392L266 395M266 395L272 399M272 399L279 402M285 405L291 409M291 409L297 412M297 412L303 415M303 415L309 418M309 418L316 422M316 422L322 425M322 425L328 428M328 428L334 432M334 432L340 435M340 435L347 438M347 438L353 441M359 445L365 448M384 458L390 461M390 461L396 464M408 471L415 474M294 418L300 421M300 421L306 425M306 425L312 428M312 428L319 431M319 431L325 434M337 441L343 444M343 444L349 448M349 448L356 451M356 451L362 454M362 454L368 457M260 408L266 411M266 411L272 414M278 418L284 421M284 421L291 424M297 428L303 431M303 431L309 434M315 437L321 441M321 441L328 444M328 444L334 447M334 447L340 451M340 451L346 454M358 460L365 464M365 464L371 467M371 467L377 470M377 470L383 474M383 474L389 477M389 477L396 480M396 480L402 483M402 483L408 487M408 487L414 490M414 490L420 493M420 493L426 497M426 497L433 500M433 500L439 503M250 411L256 414M256 414L263 417M263 417L269 421M269 421L275 424M281 427L287 430M287 430L293 434M300 437L306 440M306 440L312 444M312 444L318 447M318 447L324 450M324 450L330 453M337 457L343 460M405 493L411 496M417 499L423 503M423 503L429 506M429 506L436 509M315 453L321 456M321 456L327 460M244 423L250 426M250 426L256 430M256 430L262 433M262 433L268 436M268 436L274 439M274 439L281 443M281 443L287 446M287 446L293 449M293 449L299 453M299 453L305 456M305 456L312 459M312 459L318 462M318 462L324 466M324 466L330 469M330 469L336 472M336 472L342 476M361 485L367 489M367 489L373 492M373 492L380 495M380 495L386 499M392 502L398 505M404 508L410 512M417 515L423 518M423 518L429 522M345 485L352 488M352 488L358 492M370 498L376 502M382 505L389 508M389 508L395 511M401 515L407 518M407 518L413 521M420 525L426 528M237 435L243 439M243 439L249 442M249 442L256 445M256 445L262 449M268 452L274 455M274 455L280 458M280 458L286 462M286 462L293 465M336 250L332 256M326 269L322 275M322 275L319 281M319 281L316 287M316 287L313 293M306 306L303 312M303 312L299 318M299 318L296 324M296 324L293 330M293 330L290 337M283 349L280 355M280 355L276 361M276 361L273 367M273 367L270 374M270 374L267 380M267 380L263 386M260 392L257 398M257 398L253 405M253 405L250 411M250 411L247 417M240 429L237 435M342 253L338 259M338 259L335 266M332 272L329 278M306 321L302 327M302 327L299 334M299 334L296 340M296 340L292 346M292 346L289 352M289 352L286 358M286 358L283 365M283 365L279 371M279 371L276 377M276 377L273 383M253 420L250 426M250 426L246 433M246 433L243 439M348 257L345 263M341 269L338 275M338 275L335 281M335 281L332 287M332 287L328 294M328 294L325 300M325 300L322 306M322 306L318 312M318 312L315 318M315 318L312 325M312 325L309 331M309 331L305 337M305 337L302 343M299 349L295 355M295 355L292 362M292 362L289 368M289 368L286 374M286 374L282 380M282 380L279 386M279 386L276 393M276 393L272 399M272 399L269 405M266 411L263 417M263 417L259 423M259 423L256 430M256 430L253 436M253 436L249 442M341 285L338 291M338 291L334 297M331 303L328 309M328 309L325 315M321 322L318 328M318 328L315 334M308 346L305 353M305 353L302 359M302 359L298 365M295 371L292 377M292 377L288 383M288 383L285 390M282 396L279 402M279 402L275 408M363 273L360 279M360 279L357 285M357 285L353 291M350 297L347 304M347 304L343 310M343 310L340 316M337 322L334 328M334 328L330 334M307 378L304 384M304 384L301 390M301 390L297 396M297 396L294 402M373 270L369 276M369 276L366 282M366 282L363 288M360 294L356 301M356 301L353 307M353 307L350 313M350 313L346 319M346 319L343 325M340 332L337 338M333 344L330 350M330 350L327 356M327 356L323 362M323 362L320 369M320 369L317 375M317 375L314 381M314 381L310 387M310 387L307 393M307 393L304 400M304 400L300 406M300 406L297 412M297 412L294 418M294 418L291 424M291 424L287 430M284 437L281 443M281 443L277 449M277 449L274 455M379 273L376 279M372 285L369 292M369 292L366 298M366 298L362 304M362 304L359 310M356 316L353 322M353 322L349 329M349 329L346 335M346 335L343 341M343 341L339 347M339 347L336 353M336 353L333 360M333 360L330 366M326 372L323 378M320 384L316 390M316 390L313 397M310 403L307 409M307 409L303 415M303 415L300 421M300 421L297 428M297 428L293 434M293 434L290 440M290 440L287 446M287 446L284 452M284 452L280 458M385 276L382 282M382 282L378 289M378 289L375 295M375 295L372 301M372 301L369 307M369 307L365 313M365 313L362 320M362 320L359 326M359 326L355 332M352 338L349 344M349 344L346 350M346 350L342 357M339 363L336 369M336 369L332 375M332 375L329 381M329 381L326 388M326 388L323 394M323 394L319 400M316 406L313 412M313 412L309 418M309 418L306 425M381 298L378 304M378 304L375 310M375 310L371 317M368 323L365 329M355 348L352 354M352 354L348 360M348 360L345 366M342 372L339 378M335 385L332 391M329 397L325 403M322 409L319 416M319 416L316 422M316 422L312 428M309 434L306 440M306 440L302 446M394 289L391 295M391 295L388 301M388 301L384 308M384 308L381 314M381 314L378 320M374 326L371 332M368 338L365 345M365 345L361 351M361 351L358 357M351 369L348 376M348 376L345 382M345 382L342 388M342 388L338 394M315 437L312 444M312 444L309 450M305 456L302 462M302 462L299 468M404 286L400 292M394 305L390 311M390 311L387 317M384 323L381 329M381 329L377 336M377 336L374 342M374 342L371 348M371 348L367 354M367 354L364 360M364 360L361 366M361 366L358 373M358 373L354 379M354 379L351 385M351 385L348 391M348 391L344 397M410 289L406 296M406 296L403 302M403 302L400 308M400 308L397 314M397 314L393 320M393 320L390 327M390 327L387 333M387 333L383 339M383 339L380 345M380 345L377 351M377 351L374 357M374 357L370 364M367 370L364 376M364 376L360 382M360 382L357 388M357 388L354 395M351 401L347 407M344 413L341 419M341 419L337 425M334 432L331 438M331 438L328 444M328 444L324 450M321 456L318 462M318 462L314 469M386 348L383 355M383 355L380 361M380 361L376 367M376 367L373 373M373 373L370 379M370 379L367 385M363 392L360 398M357 404L353 410M353 410L350 416M347 423L344 429M344 429L340 435M337 441L334 447M330 453L327 460M327 460L324 466M324 466L321 472M416 308L412 315M412 315L409 321M409 321L406 327M406 327L402 333M402 333L399 339M330 469L327 475M327 475L324 481M434 303L431 309M431 309L428 315M428 315L425 321M425 321L421 327M421 327L418 333M418 333L415 340M415 340L411 346M411 346L408 352M408 352L405 358M405 358L402 364M402 364L398 371M398 371L395 377M392 383L388 389M385 395L382 401M382 401L379 408M375 414L372 420M372 420L369 426M369 426L365 432M362 439L359 445M356 451L352 457M352 457L349 463M349 463L346 469M342 476L339 482M339 482L336 488M441 306L437 312M434 318L431 324M431 324L428 331M421 343L418 349M418 349L414 355M414 355L411 361M411 361L408 368M408 368L405 374M405 374L401 380M401 380L398 386M395 392L391 399M391 399L388 405M388 405L385 411M385 411L382 417M382 417L378 423M447 309L444 315M444 315L440 322M440 322L437 328M437 328L434 334M434 334L430 340M430 340L427 346M427 346L424 352M421 359L417 365M417 365L414 371M414 371L411 377M411 377L407 383M407 383L404 389M404 389L401 396M401 396L398 402M398 402L394 408M394 408L391 414M391 414L388 420M388 420L384 427M384 427L381 433M381 433L378 439M368 457L365 464M365 464L361 470M358 476L355 482M355 482L352 488M453 312L450 319M450 319L446 325M440 337L437 343M437 343L433 350M427 362L423 368M420 374L417 380M417 380L414 387M414 387L410 393M404 405L400 411M400 411L397 418M394 424L391 430M387 436L384 442M384 442L381 448M381 448L377 455M377 455L374 461M374 461L371 467M368 473L364 479M361 485L358 492M358 492L354 498M453 328L449 334M446 340L443 347M436 359L433 365M433 365L430 371M426 378L423 384M423 384L420 390M420 390L416 396M413 402L410 408M407 415L403 421M403 421L400 427M397 433L393 439M393 439L390 446M390 446L387 452M387 452L384 458M384 458L380 464M380 464L377 470M377 470L374 476M374 476L370 483M370 483L367 489M367 489L364 495M364 495L361 501M370 498L367 504M472 322L468 328M468 328L465 335M455 353L452 359M452 359L449 366M449 366L445 372M445 372L442 378M435 390L432 396M429 403L426 409M422 415L419 421M419 421L416 427M416 427L412 434M409 440L406 446M406 446L403 452M403 452L399 458M396 464L393 471M389 477L386 483M383 489L380 495M380 495L376 502M376 502L373 508M478 326L474 332M471 338L468 344M468 344L465 350M461 356L458 363M455 369L451 375M451 375L448 381M448 381L445 387M442 394L438 400M438 400L435 406M435 406L432 412M432 412L428 418M425 424L422 431M419 437L415 443M415 443L412 449M412 449L409 455M409 455L405 462M405 462L402 468M402 468L399 474M399 474L396 480M396 480L392 486M392 486L389 492M389 492L386 499M386 499L382 505M481 335L477 341M474 347L471 354M471 354L467 360M467 360L464 366M458 378L454 384M454 384L451 391M451 391L448 397M438 415L435 422M435 422L431 428M431 428L428 434M428 434L425 440M425 440L421 446M418 452L415 459M415 459L412 465M408 471L405 477M405 477L402 483M398 490L395 496M395 496L392 502M389 508L385 514M487 338L484 345M484 345L480 351M480 351L477 357M474 363L470 369M470 369L467 375M464 382L461 388M461 388L457 394M457 394L454 400M454 400L451 406M447 413L444 419M444 419L441 425M441 425L438 431M438 431L434 437M434 437L431 443M483 360L480 366M477 373L473 379M470 385L467 391M463 397L460 403M460 403L457 410M457 410L454 416M454 416L450 422M450 422L447 428M447 428L444 434M444 434L440 441M440 441L437 447M437 447L434 453M434 453L431 459M431 459L427 465M424 471L421 478M421 478L417 484M417 484L414 490M414 490L411 496M411 496L408 502M408 502L404 508M401 515L398 521M502 339L499 345M489 363L486 370M486 370L483 376M483 376L479 382M479 382L476 388M476 388L473 394M473 394L470 401M470 401L466 407M466 407L463 413M456 425L453 431M453 431L450 438M450 438L447 444M447 444L443 450M440 456L437 462M437 462L433 469M509 342L505 348M505 348L502 354M502 354L499 361M499 361L495 367M495 367L492 373M492 373L489 379M489 379L486 385M486 385L482 391M482 391L479 398M479 398L476 404M476 404L472 410M472 410L469 416M466 422L463 429M463 429L459 435M456 441L453 447M453 447L449 453M449 453L446 459M440 472L436 478M436 478L433 484M433 484L430 490M430 490L426 497M508 358L505 364M505 364L502 370M498 376L495 382M426 512L423 518M423 518L420 525M420 525L416 531M521 349L518 355M518 355L514 361M514 361L511 367M498 392L495 398M491 404L488 410M488 410L485 417M485 417L482 423M482 423L478 429M478 429L475 435M475 435L472 441M472 441L468 447M468 447L465 454M465 454L462 460M462 460L459 466M459 466L455 472M455 472L452 478M452 478L449 485M449 485L445 491M442 497L439 503M439 503L436 509M432 515L429 522M429 522L426 528"/><path stroke="#40e040" d="M472 322L478 326M478 326L484 329M484 329L490 332M490 332L496 335M502 339L509 342M515 345L521 349M355 332L362 335M362 335L368 338M433 381L439 384M439 384L445 387M445 387L451 391M457 394L463 397M463 397L470 401M482 407L488 410M293 330L299 334M372 420L378 423M378 423L384 427M384 427L391 430M391 430L397 433M397 433L403 436M403 436L409 440M409 440L415 443M415 443L421 446M421 446L428 450M428 450L434 453M434 453L440 456M440 456L446 459M418 468L424 471M430 475L436 478M436 478L443 481M443 481L449 485M257 398L263 402M263 402L269 405M269 405L275 408M275 408L281 411M281 411L288 415M288 415L294 418M309 450L315 453M246 433L253 436M259 439L265 442M265 442L271 446M271 446L277 449M277 449L284 452M284 452L290 456M296 459L302 462M308 465L314 469M314 469L321 472M321 472L327 475M327 475L333 479M333 479L339 482M339 482L345 485M329 278L325 284M319 297L315 303M315 303L312 309M312 309L309 315M309 315L306 321M332 391L329 397M416 293L413 299M413 299L409 305M406 311L403 317M403 317L400 324M400 324L396 330M390 342L386 348M431 443L428 450M424 456L421 462M421 462L418 468M415 474L411 480M408 487L405 493M401 499L398 505M398 505L395 511M395 511L392 518M436 494L433 500M433 500L429 506M429 506L426 512"/><path stroke="#e0e040" d="M391 295L397 299M397 299L403 302M403 302L409 305M416 308L422 312M428 315L434 318M440 322L446 325M446 325L453 328M453 328L459 331M459 331L465 335M465 335L471 338M471 338L477 341M477 341L484 345M319 297L325 300M325 300L331 303M331 303L337 306M337 306L343 310M343 310L350 313M350 313L356 316M362 320L368 323M413 418L419 421M419 421L425 424M335 416L341 419M341 419L347 423M353 426L359 429M359 429L365 432M365 432L372 436M372 436L378 439M384 442L390 446M390 446L396 449M396 449L403 452M403 452L409 455M415 459L421 462M421 462L427 465M427 465L433 469M446 475L452 478M415 474L421 478M427 481L433 484M433 484L439 487M439 487L445 491M291 424L297 428M355 467L361 470M368 473L374 476M386 483L392 486M398 490L405 493M272 414L269 421M269 421L265 427M265 427L262 433M262 433L259 439M259 439L256 445M306 425L303 431M300 437L296 443M296 443L293 449M293 449L290 456M428 299L425 305M425 305L422 312M422 312L418 318M418 318L415 324M415 324L412 330M412 330L409 336M465 319L462 325M462 325L459 331M452 344L449 350M449 350L446 356M442 362L439 368M439 368L436 375M436 375L433 381M433 381L429 387M426 393L423 399M423 399L419 406M419 406L416 412M413 418L410 424M410 424L406 430M406 430L403 436M403 436L400 443M400 443L396 449M396 449L393 455M393 455L390 461M387 467L383 474M383 474L380 480M373 492L370 498"/><path stroke="#40e0e0" d="M484 345L490 348M496 351L502 354M502 354L508 358M368 338L374 342M380 345L386 348M386 348L393 352M393 352L399 355M399 355L405 358M405 358L411 361M411 361L417 365M417 365L423 368M430 371L436 375M436 375L442 378M442 378L448 381M448 381L454 384M454 384L461 388M461 388L467 391M343 341L349 344M349 344L355 348M355 348L361 351M361 351L367 354M367 354L374 357M374 357L380 361M320 353L327 356M327 356L333 360M273 367L279 371M279 371L286 374M286 374L292 377M292 377L298 381M298 381L304 384M304 384L310 387M310 387L316 390M323 394L329 397M329 397L335 400M335 400L341 404M341 404L347 407M347 407L353 410M353 410L360 413M360 413L366 417M366 417L372 420M446 459L452 463M452 463L459 466M368 457L374 461M374 461L380 464M399 474L405 477M405 477L411 480M417 484L424 487M424 487L430 490M430 490L436 494M436 494L442 497M273 383L269 389M266 395L263 402M263 402L260 408M260 408L256 414M256 414L253 420M360 263L357 269M357 269L354 276M347 288L344 294M344 294L341 300M341 300L337 306M337 306L334 313M331 319L327 325M327 325L324 331M324 331L321 337M321 337L318 343M314 350L311 356M311 356L308 362M308 362L304 368M301 374L298 381M298 381L295 387M291 393L288 399M288 399L285 405M285 405L281 411M281 411L278 418M278 418L275 424M275 424L272 430M268 436L265 442M265 442L262 449M294 402L291 409M291 409L288 415M288 415L284 421M284 421L281 427M281 427L278 433M278 433L274 439M271 446L268 452M388 286L385 292M344 397L341 404M341 404L338 410M338 410L335 416M335 416L331 422M325 434L321 441M318 447L315 453M315 453L312 459M312 459L308 465M308 465L305 472M399 339L396 345M396 345L393 352M389 358L386 364M386 364L383 370M383 370L379 376M376 383L373 389M373 389L370 395M370 395L366 401M363 407L360 413M360 413L356 420M356 420L353 426M353 426L350 432M347 438L343 444M343 444L340 451M340 451L337 457M337 457L333 463M333 463L330 469M496 335L493 342M493 342L490 348M433 469L430 475M430 475L427 481M427 481L424 487M424 487L420 493M420 493L417 499M410 512L407 518M407 518L404 524M495 382L492 389M492 389L489 395M489 395L485 401M485 401L482 407M482 407L479 413M479 413L475 419M472 426L469 432M466 438L462 444M459 450L456 457M456 457L452 463M452 463L449 469M449 469L446 475M446 475L443 481M443 481L439 487"/><path stroke="#e02020" d="M461 356L467 360M467 360L474 363M474 363L480 366M480 366L486 370M498 376L505 379M298 365L304 368M311 371L317 375M335 385L342 388M342 388L348 391M354 260L351 266M351 266L348 272M348 272L344 278M344 278L341 285M378 423L375 429M372 436L368 442M368 442L365 448M362 454L358 460M352 473L349 479M349 479L345 485M345 485L342 491M420 509L417 515M417 515L413 521M413 521L410 527"/><path stroke="#f0f0f0" d="M339 363L345 366M351 369L358 373M358 373L364 376M364 376L370 379M370 379L376 383M376 383L382 386M269 389L276 393M276 393L282 396M288 399L294 402M294 402L300 406M300 406L307 409M307 409L313 412M319 416L325 419M325 419L331 422M331 422L337 425M337 425L344 429M350 432L356 435M356 435L362 439M368 442L375 445M375 445L381 448M381 448L387 452M387 452L393 455M393 455L399 458M405 462L412 465M412 465L418 468M247 417L253 420M253 420L259 423M259 423L265 427M265 427L272 430M272 430L278 433M290 440L296 443"/><path stroke="#c040c0" d="M349 463L355 467M327 460L333 463M333 463L340 466M346 469L352 473M352 473L358 476M358 476L364 479M364 479L370 483M370 483L377 486M377 486L383 489M383 489L389 492M389 492L395 496M395 496L401 499M401 499L408 502M414 506L420 509M420 509L426 512M426 512L432 515M293 465L299 468M299 468L305 472M305 472L311 475M311 475L317 478M317 478L324 481M324 481L330 485M330 485L336 488M336 488L342 491M367 504L373 508M373 508L379 511M379 511L385 514M385 514L392 518M398 521L404 524M330 334L327 341M327 341L324 347M320 353L317 359M314 365L311 371M311 371L307 378M409 336L405 343M405 343L402 349M402 349L399 355M399 355L395 361M395 361L392 367M392 367L389 373M389 373L386 380M386 380L382 386M379 392L376 398M376 398L372 404M369 411L366 417M366 417L363 423M363 423L359 429M356 435L353 441M353 441L349 448M349 448L346 454M346 454L343 460M343 460L340 466M340 466L336 472M336 472L333 479"/><path fill="#ffffff" d="M438 367h2v2h-2zM429 370h2v2h-2zM435 374h2v2h-2zM419 373h2v2h-2zM432 380h2v2h-2zM406 382h2v2h-2zM425 392h2v2h-2zM323 346h2v2h-2zM329 349h2v2h-2zM335 352h2v2h-2zM341 356h2v2h-2zM366 369h2v2h-2zM378 375h2v2h-2zM385 379h2v2h-2zM397 385h2v2h-2zM422 398h2v2h-2zM326 355h2v2h-2zM338 362h2v2h-2zM357 372h2v2h-2zM363 375h2v2h-2zM369 378h2v2h-2zM394 391h2v2h-2zM400 395h2v2h-2zM418 405h2v2h-2zM341 371h2v2h-2zM366 384h2v2h-2zM313 364h2v2h-2zM331 374h2v2h-2zM338 377h2v2h-2zM362 391h2v2h-2zM369 394h2v2h-2zM375 397h2v2h-2zM393 407h2v2h-2zM406 414h2v2h-2zM341 387h2v2h-2zM347 390h2v2h-2zM350 400h2v2h-2zM356 403h2v2h-2zM393 423h2v2h-2zM309 386h2v2h-2zM328 396h2v2h-2zM371 419h2v2h-2zM377 422h2v2h-2zM383 426h2v2h-2zM390 429h2v2h-2zM312 396h2v2h-2zM331 405h2v2h-2zM343 412h2v2h-2zM355 419h2v2h-2zM362 422h2v2h-2zM392 438h2v2h-2zM315 405h2v2h-2zM321 408h2v2h-2zM334 415h2v2h-2zM352 425h2v2h-2zM324 418h2v2h-2zM355 434h2v2h-2zM313 364h2v2h-2zM326 355h2v2h-2zM316 374h2v2h-2zM313 380h2v2h-2zM325 371h2v2h-2zM315 389h2v2h-2zM338 362h2v2h-2zM335 368h2v2h-2zM328 380h2v2h-2zM322 393h2v2h-2zM341 371h2v2h-2zM334 384h2v2h-2zM318 415h2v2h-2zM347 375h2v2h-2zM357 372h2v2h-2zM347 390h2v2h-2zM343 396h2v2h-2zM337 409h2v2h-2zM366 369h2v2h-2zM363 375h2v2h-2zM356 387h2v2h-2zM350 400h2v2h-2zM343 412h2v2h-2zM372 372h2v2h-2zM369 378h2v2h-2zM356 403h2v2h-2zM343 428h2v2h-2zM369 394h2v2h-2zM355 419h2v2h-2zM385 379h2v2h-2zM378 391h2v2h-2zM375 397h2v2h-2zM368 410h2v2h-2zM362 422h2v2h-2zM352 440h2v2h-2zM384 394h2v2h-2zM361 438h2v2h-2zM390 398h2v2h-2zM387 404h2v2h-2zM384 410h2v2h-2zM377 422h2v2h-2zM371 435h2v2h-2zM367 441h2v2h-2zM400 395h2v2h-2zM397 401h2v2h-2zM390 413h2v2h-2zM413 386h2v2h-2zM403 404h2v2h-2zM393 423h2v2h-2zM386 435h2v2h-2zM412 401h2v2h-2zM406 414h2v2h-2zM402 420h2v2h-2zM392 438h2v2h-2zM438 367h2v2h-2zM432 380h2v2h-2zM425 392h2v2h-2zM418 405h2v2h-2zM409 423h2v2h-2z"/></g><g clip-path="url(#c5)" stroke-width="1.3" fill="none"><path stroke="#1a1ab4" d="M352 437L357 440M357 440L363 443M363 443L368 446M355 445L360 448M360 448L365 451M365 451L371 454M371 454L376 457M381 459L386 462M336 442L341 445M341 445L347 448M347 448L352 451M352 451L357 453M357 453L362 456M362 456L368 459M373 462L378 465M378 465L384 468M384 468L389 470M389 470L394 473M394 473L400 476M400 476L405 479M405 479L410 482M410 482L415 484M415 484L421 487M338 450L344 453M344 453L349 456M354 459L360 462M360 462L365 464M365 464L370 467M370 467L376 470M391 478L397 481M397 481L402 484M407 487L413 490M413 490L418 493M325 463L330 466M330 466L335 469M341 472L346 475M356 480L362 483M362 483L367 486M367 486L372 489M372 489L378 492M378 492L383 494M383 494L388 497M388 497L394 500M394 500L399 503M404 506L409 508M348 496L353 499M353 499L359 502M359 502L364 505M364 505L369 507M374 510L380 513M380 513L385 516M385 516L390 519M396 522L401 524M311 490L316 493M316 493L321 495M321 495L326 498M326 498L332 501M332 501L337 504M337 504L342 507M342 507L348 510M348 510L353 512M353 512L358 515M358 515L364 518M364 518L369 521M369 521L374 524M374 524L379 526M379 526L385 529M385 529L390 532M390 532L395 535M350 429L347 434M347 434L344 440M341 445L338 450M336 456L333 461M333 461L330 466M330 466L327 471M327 471L324 477M324 477L322 482M319 487L316 493M363 416L361 421M361 421L358 427M358 427L355 432M355 432L352 437M352 437L349 443M349 443L347 448M347 448L344 453M344 453L341 458M341 458L338 464M335 469L332 474M332 474L330 480M369 419L366 424M366 424L363 429M363 429L360 435M355 445L352 451M349 456L346 461M346 461L343 467M341 472L338 477M335 482L332 488M377 416L374 422M374 422L371 427M371 427L368 432M368 432L366 438M366 438L363 443M360 448L357 453M357 453L354 459M354 459L351 464M349 469L346 475M346 475L343 480M343 480L340 485M340 485L337 491M337 491L335 496M335 496L332 501M377 430L374 435M374 435L371 440M371 440L368 446M368 446L365 451M365 451L362 456M362 456L360 462M360 462L357 467M357 467L354 472M354 472L351 477M387 422L385 427M379 438L376 443M376 443L373 448M373 448L371 454M371 454L368 459M368 459L365 464M365 464L362 470M362 470L359 475M359 475L356 480M354 486L351 491M351 491L348 496M348 496L345 501M345 501L342 507M356 494L353 499M353 499L350 504M392 452L389 457M389 457L386 462M400 463L397 468M397 468L394 473M394 473L391 478M389 484L386 489M377 518L374 524M425 442L422 447M422 447L419 452M419 452L416 458M416 458L413 463M413 463L410 468M410 468L408 473M408 473L405 479M405 479L402 484M385 516L382 521M382 521L379 526M427 450L424 455M424 455L421 460M421 460L419 466M419 466L416 471M416 471L413 476M410 482L407 487M402 497L399 503M399 503L396 508M396 508L393 513M390 519L388 524M388 524L385 529M435 447L432 453M432 453L429 458M429 458L427 463M424 469L421 474M421 474L418 479M418 479L415 484M415 484L413 490M410 495L407 500M407 500L404 506M401 511L398 516M398 516L396 522M396 522L393 527M393 527L390 532"/><path stroke="#40e040" d="M361 408L366 411M366 411L372 414M372 414L377 416M382 419L387 422M387 422L393 425M393 425L398 428M398 428L403 430M403 430L409 433M409 433L414 436M419 439L425 442M425 442L430 445M353 424L358 427M363 429L368 432M368 432L374 435M374 435L379 438M379 438L384 441M384 441L390 444M390 444L395 446M395 446L400 449M424 469L429 471M368 446L373 448M373 448L379 451M379 451L384 454M384 454L389 457M395 460L400 463M410 468L416 471M416 471L421 474M421 474L426 477M339 437L344 440M344 440L349 443M349 443L355 445M333 447L338 450M349 469L354 472M354 472L359 475M359 475L365 478M365 478L370 481M370 481L375 483M375 483L380 486M386 489L391 492M391 492L396 495M396 495L402 497M402 497L407 500M407 500L412 503M316 479L322 482M327 485L332 488M332 488L337 491M337 491L343 493M343 493L348 496M327 458L325 463M325 463L322 469M322 469L319 474M319 474L316 479M316 479L313 485M361 408L358 413M358 413L355 418M355 418L353 424M398 428L395 433M395 433L392 438M384 468L381 473M381 473L378 478M378 478L375 483M375 483L372 489M372 489L370 494M370 494L367 499M367 499L364 505M364 505L361 510M361 510L358 515"/><path stroke="#f0f0f0" d="M353 410L358 413M358 413L363 416M363 416L369 419M369 419L374 422M374 422L379 424M390 430L395 433M395 433L401 436M401 436L406 439M411 441L416 444M416 444L422 447M422 447L427 450M427 450L432 453M350 416L355 418M355 418L361 421M361 421L366 424M366 424L371 427M371 427L377 430M387 435L392 438M392 438L398 441M403 444L408 447M414 449L419 452M424 455L429 458M429 458L435 461M356 405L353 410M353 410L350 416M350 416L347 421M347 421L344 426M344 426L342 432M342 432L339 437M339 437L336 442M336 442L333 447M333 447L330 453M330 453L327 458M353 424L350 429M330 480L327 485M327 485L324 490M382 419L379 424M409 433L406 439M406 439L403 444M403 444L400 449M400 449L397 454M397 454L395 460M395 460L392 465M386 476L383 481M383 481L380 486M380 486L378 492M378 492L375 497M366 513L364 518M397 481L394 487M388 497L385 502M385 502L383 508M383 508L380 513M380 513L377 518"/><path stroke="#40e0e0" d="M400 449L405 452M405 452L411 455M411 455L416 458M416 458L421 460M344 426L350 429M350 429L355 432M355 432L360 435M360 435L366 438M366 438L371 440M371 440L376 443M376 443L381 446M381 446L387 449M392 452L397 454M403 457L408 460M408 460L413 463M342 432L347 434M347 434L352 437M392 465L397 468M397 468L402 471M402 471L408 473M408 473L413 476M413 476L418 479M418 479L424 482M330 453L336 456M336 456L341 458M346 461L351 464M373 475L378 478M378 478L383 481M389 484L394 487M394 487L399 489M399 489L404 492M404 492L410 495M410 495L415 498M327 458L333 461M333 461L338 464M338 464L343 467M343 467L349 469M327 471L332 474M338 477L343 480M343 480L348 483M348 483L354 486M354 486L359 488M359 488L364 491M364 491L370 494M370 494L375 497M375 497L380 500M380 500L385 502M385 502L391 505M396 508L401 511M401 511L407 514M319 474L324 477M335 482L340 485M340 485L346 488M346 488L351 491M351 491L356 494M356 494L361 496M361 496L367 499M367 499L372 502M372 502L377 505M377 505L383 508M388 511L393 513M393 513L398 516M398 516L404 519M313 485L319 487M324 490L329 493M329 493L335 496M335 496L340 499M340 499L345 501M345 501L350 504M350 504L356 507M356 507L361 510M361 510L366 513M366 513L372 516M377 518L382 521M382 521L388 524M388 524L393 527M393 527L398 530M332 488L329 493M329 493L326 498M348 483L346 488M346 488L343 493M340 499L337 504M393 425L390 430M390 430L387 435M387 435L384 441M384 441L381 446M381 446L379 451M379 451L376 457M376 457L373 462M373 462L370 467M370 467L367 472M367 472L365 478M365 478L362 483M362 483L359 488M359 488L356 494M387 449L384 454M378 465L376 470M376 470L373 475M367 486L364 491M364 491L361 496M361 496L359 502M359 502L356 507M356 507L353 512M403 430L401 436M401 436L398 441M398 441L395 446M414 436L411 441M411 441L408 447M408 447L405 452M383 494L380 500M380 500L377 505M374 510L372 516M372 516L369 521M419 439L416 444M416 444L414 449M414 449L411 455M411 455L408 460M408 460L405 465M402 471L400 476M400 476L397 481M399 489L396 495M396 495L394 500M394 500L391 505M388 511L385 516M440 450L438 455M438 455L435 461M435 461L432 466M426 477L424 482M424 482L421 487M421 487L418 493M418 493L415 498M415 498L412 503M407 514L404 519M404 519L401 524"/><path fill="#ffffff" d="M391 451h2v2h-2zM367 445h2v2h-2zM372 447h2v2h-2zM378 450h2v2h-2zM383 453h2v2h-2zM359 447h2v2h-2zM364 450h2v2h-2zM370 453h2v2h-2zM380 458h2v2h-2zM356 452h2v2h-2zM361 455h2v2h-2zM372 461h2v2h-2zM383 467h2v2h-2zM388 469h2v2h-2zM393 472h2v2h-2zM359 461h2v2h-2zM364 463h2v2h-2zM390 477h2v2h-2zM372 474h2v2h-2zM377 477h2v2h-2zM393 486h2v2h-2zM364 477h2v2h-2zM355 479h2v2h-2zM361 482h2v2h-2zM366 485h2v2h-2zM377 491h2v2h-2zM382 493h2v2h-2zM358 487h2v2h-2zM363 490h2v2h-2zM355 493h2v2h-2zM356 452h2v2h-2zM364 450h2v2h-2zM361 455h2v2h-2zM359 461h2v2h-2zM372 447h2v2h-2zM370 453h2v2h-2zM367 458h2v2h-2zM364 463h2v2h-2zM358 474h2v2h-2zM378 450h2v2h-2zM369 466h2v2h-2zM364 477h2v2h-2zM361 482h2v2h-2zM358 487h2v2h-2zM355 493h2v2h-2zM377 464h2v2h-2zM366 485h2v2h-2zM391 451h2v2h-2zM388 456h2v2h-2zM377 477h2v2h-2zM374 482h2v2h-2zM371 488h2v2h-2zM369 493h2v2h-2zM394 459h2v2h-2zM385 475h2v2h-2zM393 472h2v2h-2zM388 483h2v2h-2zM382 493h2v2h-2z"/></g><g clip-path="url(#c6)" stroke-width="1.3" fill="none"><path stroke="#1a1ab4" d="M322 494L329 490M329 490L335 485M335 485L342 481M342 481L348 476M348 476L355 471M355 471L361 467M368 462L374 458M374 458L381 453M381 453L388 448M388 448L394 444M394 444L401 439M401 439L407 435M407 435L414 430M326 500L333 495M333 495L339 491M339 491L346 486M346 486L352 482M352 482L359 477M365 472L372 468M372 468L378 463M378 463L385 459M385 459L392 454M392 454L398 450M398 450L405 445M418 436L424 431M424 431L431 427M356 487L363 483M363 483L369 478M369 478L376 474M376 474L382 469M382 469L389 464M389 464L396 460M396 460L402 455M402 455L409 451M422 442L428 437M327 516L334 511M334 511L341 507M341 507L347 502M347 502L354 498M354 498L360 493M360 493L367 489M367 489L373 484M373 484L380 479M380 479L386 475M386 475L393 470M393 470L400 466M400 466L406 461M406 461L413 456M413 456L419 452M419 452L426 447M426 447L432 443M432 443L439 438M423 458L430 453M430 453L436 448M436 448L443 444M342 523L349 518M349 518L355 514M362 509L368 505M375 500L381 495M381 495L388 491M388 491L394 486M394 486L401 482M401 482L408 477M408 477L414 472M414 472L421 468M421 468L427 463M434 459L440 454M440 454L447 450M333 538L340 533M340 533L346 529M353 524L359 520M372 510L379 506M392 497L398 492M398 492L405 487M405 487L412 483M412 483L418 478M425 474L431 469M438 464L444 460M444 460L451 455M337 544L344 539M344 539L350 534M363 525L370 521M370 521L376 516M376 516L383 511M383 511L389 507M389 507L396 502M396 502L403 498M403 498L409 493M409 493L416 489M416 489L422 484M422 484L429 479M429 479L435 475M435 475L442 470M448 466L455 461M341 549L348 545M348 545L354 540M354 540L361 536M361 536L367 531M367 531L374 526M374 526L380 522M380 522L387 517M393 513L400 508M400 508L407 503M407 503L413 499M420 494L426 490M426 490L433 485M433 485L439 481M439 481L446 476M446 476L452 471M452 471L459 467M365 541L371 537M371 537L378 532M378 532L384 528M384 528L391 523M397 518L404 514M404 514L411 509M411 509L417 505M417 505L424 500M424 500L430 495M437 491L443 486M443 486L450 482M456 477L463 472M349 561L356 556M356 556L362 552M362 552L369 547M382 538L388 533M395 529L401 524M408 520L415 515M415 515L421 510M434 501L441 497M441 497L447 492M454 487L460 483M460 483L467 478M353 567L360 562M366 557L373 553M373 553L379 548M386 544L392 539M405 530L412 525M419 521L425 516M425 516L432 511M368 573L374 569M374 569L381 564M387 560L394 555M394 555L400 550M413 541L420 537M420 537L427 532M440 523L446 518M453 514L459 509M459 509L466 505M466 505L472 500M472 500L479 495M385 570L391 565M391 565L398 561M398 561L404 556M404 556L411 552M411 552L418 547M418 547L424 542M424 542L431 538M431 538L437 533M437 533L444 529M444 529L450 524M450 524L457 519M457 519L463 515M463 515L470 510M476 506L483 501M369 589L376 585M376 585L382 580M382 580L389 576M389 576L395 571M395 571L402 567M402 567L408 562M415 557L422 553M422 553L428 548M428 548L435 544M441 539L448 534M454 530L461 525M461 525L467 521M467 521L474 516M474 516L481 511M481 511L487 507M373 595L380 591M380 591L386 586M386 586L393 581M399 577L406 572M406 572L412 568M412 568L419 563M419 563L426 558M432 554L439 549M439 549L445 545M445 545L452 540M452 540L458 536M458 536L465 531M465 531L471 526M471 526L478 522M485 517L491 513M403 583L410 578M416 573L423 569M423 569L430 564M430 564L436 560M436 560L443 555M443 555L449 550M449 550L456 546M456 546L462 541M462 541L469 537M469 537L475 532M475 532L482 528M482 528L489 523M489 523L495 518M381 607L388 602M388 602L394 597M394 597L401 593M401 593L407 588M414 584L420 579M427 575L434 570M434 570L440 565M440 565L447 561M447 561L453 556M453 556L460 552M460 552L466 547M466 547L473 542M479 538L486 533M486 533L493 529M493 529L499 524M385 612L392 608M392 608L398 603M411 594L418 589M418 589L424 585M424 585L431 580M431 580L438 576M438 576L444 571M444 571L451 567M451 567L457 562M457 562L464 557M464 557L470 553M470 553L477 548M477 548L483 544M497 534L503 530M402 609L409 604M409 604L415 600M415 600L422 595M422 595L428 591M428 591L435 586M448 577L455 572M455 572L461 568M461 568L468 563M468 563L474 558M474 558L481 554M481 554L487 549M487 549L494 545M494 545L501 540M501 540L507 536M349 561L353 567M353 567L357 572M357 572L361 578M361 578L365 584M365 584L369 589M377 601L381 607M315 499L319 505M319 505L323 510M323 510L327 516M327 516L331 522M331 522L335 528M335 528L340 533M340 533L344 539M348 545L352 550M352 550L356 556M356 556L360 562M360 562L364 568M364 568L368 573M368 573L372 579M372 579L376 585M376 585L380 591M388 602L392 608M392 608L396 614M326 500L330 506M330 506L334 511M334 511L338 517M338 517L342 523M346 529L350 534M350 534L354 540M354 540L358 546M358 546L362 552M366 557L370 563M370 563L374 569M374 569L378 575M378 575L382 580M386 586L390 592M390 592L394 597M394 597L398 603M329 490L333 495M333 495L337 501M337 501L341 507M341 507L345 513M353 524L357 530M361 536L365 541M365 541L369 547M369 547L373 553M377 558L381 564M381 564L385 570M385 570L389 576M397 587L401 593M405 599L409 604M339 491L343 497M343 497L347 502M347 502L351 508M351 508L355 514M355 514L359 520M359 520L363 525M363 525L367 531M379 548L383 554M387 560L391 565M399 577L403 583M403 583L407 588M346 486L350 492M354 498L358 503M358 503L362 509M362 509L366 515M366 515L370 521M370 521L374 526M374 526L378 532M382 538L386 544M390 549L394 555M394 555L398 561M398 561L402 567M410 578L414 584M418 589L422 595M348 476L352 482M356 487L360 493M360 493L364 499M364 499L368 505M363 483L367 489M367 489L371 494M371 494L375 500M383 511L387 517M387 517L391 523M391 523L395 529M395 529L399 534M399 534L403 540M403 540L407 546M407 546L411 552M411 552L415 557M415 557L419 563M419 563L423 569M423 569L427 575M431 580L435 586M361 467L365 472M365 472L369 478M369 478L373 484M373 484L377 490M377 490L381 495M381 495L385 501M385 501L389 507M389 507L393 513M393 513L397 518M401 524L405 530M409 536L413 541M418 547L422 553M422 553L426 558M430 564L434 570M438 576L442 581M368 462L372 468M372 468L376 474M380 479L384 485M384 485L388 491M392 497L396 502M400 508L404 514M408 520L412 525M412 525L416 531M416 531L420 537M420 537L424 542M424 542L428 548M432 554L436 560M436 560L440 565M444 571L448 577M378 463L382 469M382 469L386 475M386 475L390 481M394 486L398 492M398 492L403 498M403 498L407 503M407 503L411 509M411 509L415 515M415 515L419 521M423 526L427 532M427 532L431 538M431 538L435 544M435 544L439 549M439 549L443 555M451 567L455 572M385 459L389 464M389 464L393 470M401 482L405 487M405 487L409 493M409 493L413 499M413 499L417 505M417 505L421 510M421 510L425 516M429 522L433 528M433 528L437 533M437 533L441 539M441 539L445 545M449 550L453 556M453 556L457 562M457 562L461 568M388 448L392 454M396 460L400 466M400 466L404 471M404 471L408 477M412 483L416 489M416 489L420 494M420 494L424 500M428 506L432 511M440 523L444 529M444 529L448 534M452 540L456 546M460 552L464 557M464 557L468 563M394 444L398 450M402 455L406 461M406 461L410 467M410 467L414 472M414 472L418 478M418 478L422 484M422 484L426 490M426 490L430 495M438 507L442 513M450 524L454 530M454 530L458 536M458 536L462 541M462 541L466 547M470 553L474 558M401 439L405 445M409 451L413 456M421 468L425 474M429 479L433 485M433 485L437 491M437 491L441 497M445 502L449 508M449 508L453 514M457 519L461 525M461 525L465 531M469 537L473 542M473 542L477 548M407 435L411 440M411 440L415 446M415 446L419 452M419 452L423 458M423 458L427 463M427 463L431 469M431 469L435 475M435 475L439 481M443 486L447 492M447 492L451 498M451 498L455 503M455 503L459 509M459 509L463 515M463 515L467 521M467 521L471 526M471 526L475 532M475 532L479 538M479 538L483 544M483 544L487 549M414 430L418 436M418 436L422 442M422 442L426 447M426 447L430 453M430 453L434 459M434 459L438 464M438 464L442 470M442 470L446 476M450 482L454 487M454 487L458 493M462 499L466 505M466 505L470 510M470 510L474 516M482 528L486 533M486 533L490 539M490 539L494 545M420 425L424 431M424 431L428 437M428 437L432 443M432 443L436 448M436 448L440 454M444 460L448 466M452 471L456 477M456 477L460 483M460 483L464 489M464 489L468 494M472 500L476 506M481 511L485 517M485 517L489 523M497 534L501 540M427 421L431 427M431 427L435 432M435 432L439 438M443 444L447 450M447 450L451 455M455 461L459 467M459 467L463 472M463 472L467 478M467 478L471 484M471 484L475 490"/><path stroke="#40e0e0" d="M317 515L323 510M323 510L330 506M337 501L343 497M343 497L350 492M350 492L356 487M357 572L364 568M364 568L370 563M370 563L377 558M390 549L396 545M403 540L409 536M409 536L416 531M416 531L423 526M429 522L436 517M442 513L449 508M449 508L455 503M455 503L462 499M468 494L475 490M309 503L313 509M313 509L317 515M321 521L325 526M329 532L333 538M333 538L337 544M337 544L341 549M341 549L345 555M345 555L349 561M368 505L372 510M380 522L384 528M384 528L388 533M396 545L400 550M400 550L404 556M404 556L408 562M408 562L412 568M412 568L416 573M420 579L424 585M424 585L428 591"/><path stroke="#e02020" d="M325 526L331 522M338 517L345 513M345 513L351 508M351 508L358 503M358 503L364 499M364 499L371 494M371 494L377 490M384 485L390 481M390 481L397 476M397 476L404 471M417 462L423 458M345 555L352 550M352 550L358 546M358 546L365 541M475 490L479 495M479 495L483 501M483 501L487 507M487 507L491 513M491 513L495 518M495 518L499 524M499 524L503 530"/><path stroke="#40e040" d="M432 511L438 507M438 507L445 502M445 502L451 498M451 498L458 493M458 493L464 489M407 588L411 594"/><path stroke="#c040c0" d="M396 614L402 609"/><path fill="#ffffff" d="M375 515h2v2h-2zM382 510h2v2h-2zM388 506h2v2h-2zM395 501h2v2h-2zM415 488h2v2h-2zM379 521h2v2h-2zM399 507h2v2h-2zM406 502h2v2h-2zM419 493h2v2h-2zM377 531h2v2h-2zM396 517h2v2h-2zM410 508h2v2h-2zM416 504h2v2h-2zM436 490h2v2h-2zM394 528h2v2h-2zM407 518h2v2h-2zM385 543h2v2h-2zM418 520h2v2h-2zM431 510h2v2h-2zM437 506h2v2h-2zM415 530h2v2h-2zM428 521h2v2h-2zM403 555h2v2h-2zM410 551h2v2h-2zM430 537h2v2h-2zM436 532h2v2h-2zM427 547h2v2h-2zM431 553h2v2h-2zM435 559h2v2h-2zM389 548h2v2h-2zM397 560h2v2h-2zM383 527h2v2h-2zM382 510h2v2h-2zM402 539h2v2h-2zM406 545h2v2h-2zM400 523h2v2h-2zM391 496h2v2h-2zM407 518h2v2h-2zM423 541h2v2h-2zM431 553h2v2h-2zM435 559h2v2h-2zM397 491h2v2h-2zM406 502h2v2h-2zM410 508h2v2h-2zM434 543h2v2h-2zM408 492h2v2h-2zM412 498h2v2h-2zM428 521h2v2h-2zM432 527h2v2h-2zM436 532h2v2h-2zM419 493h2v2h-2zM427 505h2v2h-2zM439 522h2v2h-2zM436 490h2v2h-2z"/></g><g clip-path="url(#c7)" stroke-width="1.3" fill="none"><path stroke="#1a1ab4" d="M349 402L357 402M373 400L381 400M389 399L397 398M397 398L405 397M413 397L421 396M421 396L429 395M429 395L437 395M437 395L444 394M444 394L452 393M452 393L460 393M460 393L468 392M468 392L476 391M358 410L365 409M365 409L373 408M373 408L381 407M381 407L389 407M389 407L397 406M405 405L413 405M421 404L429 403M445 402L453 401M350 418L358 418M366 417L374 416M382 415L390 415M406 413L414 413M359 426L367 425M367 425L375 424M383 423L391 423M391 423L399 422M407 421L415 421M415 421L423 420M423 420L431 419M439 419L447 418M447 418L455 417M455 417L463 416M463 416L470 416M470 416L478 415M352 434L360 433M368 433L376 432M376 432L384 431M384 431L391 431M391 431L399 430M399 430L407 429M407 429L415 429M415 429L423 428M423 428L431 427M439 426L447 426M455 425L463 424M471 424L479 423M360 441L368 441M376 440L384 439M392 439L400 438M400 438L408 437M408 437L416 437M424 436L432 435M440 434L448 434M448 434L456 433M456 433L464 432M464 432L472 432M472 432L480 431M353 450L361 449M362 457L370 457M370 457L378 456M378 456L386 455M386 455L394 455M394 455L402 454M402 454L410 453M418 452L425 452M425 452L433 451M433 451L441 450M441 450L449 450M449 450L457 449M473 448L481 447M354 466L362 465M362 465L370 465M378 464L386 463M386 463L394 463M394 463L402 462M410 461L418 460M426 460L434 459M442 458L450 458M450 458L458 457M458 457L466 456M466 456L474 456M474 456L482 455M355 474L363 473M363 473L371 473M371 473L379 472M379 472L387 471M387 471L395 471M395 471L403 470M403 470L411 469M419 468L427 468M427 468L435 467M435 467L443 466M443 466L451 466M451 466L459 465M459 465L467 464M467 464L475 464M428 484L436 483M444 482L452 482M452 482L460 481M460 481L468 480M468 480L476 479M476 479L484 479M365 497L373 497M373 497L381 496M381 496L389 495M397 494L405 494M405 494L413 493M413 493L421 492M421 492L429 492M429 492L437 491M437 491L445 490M445 490L453 490M453 490L461 489M461 489L469 488M358 506L366 505M366 505L374 505M382 504L390 503M390 503L398 502M414 501L422 500M422 500L430 500M430 500L438 499M446 498L454 498M454 498L462 497M470 496L477 495M477 495L485 495M375 512L383 512M391 511L398 510M398 510L406 510M406 510L414 509M414 509L422 508M422 508L430 508M430 508L438 507M438 507L446 506M446 506L454 505M462 505L470 504M470 504L478 503M478 503L486 503M359 522L367 521M367 521L375 520M399 518L407 518M407 518L415 517M423 516L431 516M356 394L357 402M358 410L358 418M358 418L359 426M359 426L360 433M360 433L360 441M360 441L361 449M361 449L362 457M363 473L364 481M365 489L365 497M365 497L366 505M366 505L367 513M367 513L367 521M365 401L365 409M366 417L367 425M368 433L368 441M370 457L370 465M370 465L371 473M371 473L372 481M372 481L372 489M373 497L374 505M374 505L375 512M372 392L373 400M373 400L373 408M381 496L382 504M382 504L383 512M383 512L383 520M380 392L381 400M381 400L381 407M381 407L382 415M383 423L384 431M385 447L386 455M386 455L386 463M386 463L387 471M387 471L388 479M388 479L388 487M388 487L389 495M389 495L390 503M404 389L405 397M406 413L407 421M407 421L407 429M407 429L408 437M408 437L409 445M409 445L410 453M410 453L410 461M410 461L411 469M412 485L413 493M413 493L414 501M414 501L414 509M414 509L415 517M412 389L413 397M413 405L414 413M414 413L415 421M415 429L416 437M416 437L417 445M417 445L418 452M418 452L418 460M418 460L419 468M419 468L420 476M420 476L420 484M421 492L422 500M422 500L422 508M421 396L421 404M422 412L423 420M423 420L423 428M423 428L424 436M424 436L425 444M425 444L425 452M425 452L426 460M437 395L437 403M437 403L438 411M439 419L439 426M439 426L440 434M440 434L441 442M441 442L441 450M441 450L442 458M442 458L443 466M443 466L444 474M445 490L446 498M446 506L447 514M444 394L445 402M446 410L447 418M447 426L448 434M449 442L449 450M449 450L450 458M450 458L451 466M451 466L451 474M451 474L452 482M453 490L454 498M454 505L455 513M452 385L452 393M452 393L453 401M454 409L455 417M455 425L456 433M456 433L457 441M457 449L458 457M458 457L459 465M459 465L459 473M461 489L462 497M462 497L462 505M462 505L463 513M468 384L468 392M470 408L470 416M470 416L471 424M471 424L472 432M472 432L473 440M473 440L473 448M473 448L474 456M474 456L475 464M475 464L475 472M475 472L476 479M476 479L477 487M477 487L477 495M477 495L478 503M478 503L479 511M478 407L478 415M479 423L480 431M480 431L481 439M481 447L482 455M483 463L483 471M484 479L485 487M485 487L485 495M485 495L486 503M486 503L487 511"/><path stroke="#e02020" d="M348 394L356 394M356 394L364 393M389 399L389 407M389 407L390 415M390 415L391 423M391 423L391 431M391 431L392 439M392 439L393 447M394 455L394 463M394 463L395 471M395 471L396 479M396 479L396 486M396 486L397 494M397 494L398 502M398 502L398 510M398 510L399 518M438 507L439 515M467 464L467 472M468 480L469 488M469 488L470 496"/><path stroke="#40e040" d="M364 393L372 392M388 391L396 390M396 390L404 389M404 389L412 389M428 387L436 387M452 385L460 385M460 385L468 384M364 481L372 481M380 480L388 479M388 479L396 479M396 479L404 478M412 477L420 476M420 476L428 476M428 476L436 475M444 474L451 474M467 472L475 472M475 472L483 471M372 489L373 497M426 460L427 468M427 468L428 476M428 476L428 484M428 387L429 395M429 395L429 403M429 403L430 411M430 411L431 419M431 419L431 427M431 427L432 435M432 435L433 443M433 443L433 451M433 451L434 459M434 459L435 467M436 475L436 483M436 483L437 491M437 491L438 499M438 499L438 507"/><path stroke="#c040c0" d="M453 401L461 400M469 400L477 399"/><path stroke="#40e0e0" d="M422 412L430 411M430 411L438 411M438 411L446 410M446 410L454 409M454 409L462 408M462 408L470 408M361 449L369 449M369 449L377 448M377 448L385 447M385 447L393 447M393 447L401 446M425 444L433 443M465 440L473 440M356 482L364 481M372 489L380 488M380 488L388 487M388 487L396 486M396 486L404 486M404 486L412 485M412 485L420 484M420 484L428 484M357 498L358 506M358 506L359 514M373 408L374 416M374 416L375 424M376 432L376 440M376 440L377 448M377 448L378 456M378 456L378 464M379 472L380 480M380 488L381 496"/><path stroke="#e0e040" d="M439 515L447 514M447 514L455 513M463 513L471 512M471 512L479 511M479 511L487 511M348 394L349 402M350 410L350 418M350 418L351 426M351 426L352 434M352 434L352 442M352 442L353 450M354 466L355 474M355 474L356 482M356 482L357 490M357 490L357 498M397 398L397 406M397 406L398 414M398 414L399 422M399 422L399 430M399 430L400 438M400 438L401 446M401 446L402 454M402 462L403 470M403 470L404 478M404 478L404 486M404 486L405 494M405 494L406 502M460 393L461 400M463 424L464 432M464 432L465 440M465 440L465 448M465 448L466 456M466 456L467 464"/><path fill="#ffffff" d="M438 418h2v2h-2zM422 427h2v2h-2zM438 425h2v2h-2zM423 435h2v2h-2zM432 450h2v2h-2zM425 459h2v2h-2zM403 485h2v2h-2zM411 484h2v2h-2zM400 445h2v2h-2zM403 477h2v2h-2zM403 485h2v2h-2zM409 460h2v2h-2zM415 436h2v2h-2zM416 444h2v2h-2zM416 452h2v2h-2zM418 467h2v2h-2zM419 475h2v2h-2zM422 427h2v2h-2zM423 435h2v2h-2zM426 467h2v2h-2zM430 426h2v2h-2zM432 442h2v2h-2zM432 450h2v2h-2zM435 474h2v2h-2zM438 418h2v2h-2z"/></g><g clip-path="url(#c8)" stroke-width="1.3" fill="none"><path stroke="#1a1ab4" d="M457 537L468 536M480 535L492 534M504 533L516 532M516 532L528 531M540 530L552 529M552 529L564 528M564 528L576 527M576 527L588 526M588 526L600 524M386 552L398 551M398 551L409 550M421 549L433 548M433 548L445 547M445 547L457 546M457 546L469 545M505 542L517 541M529 540L541 539M553 538L565 537M565 537L577 536M577 536L589 534M386 561L398 560M410 559L422 558M434 557L446 556M446 556L458 555M458 555L470 554M482 553L494 552M518 550L530 549M530 549L542 548M554 547L566 546M590 543L602 542M387 570L399 569M399 569L411 568M435 566L447 565M447 565L459 564M471 563L483 562M495 561L507 560M507 560L519 559M531 558L543 557M543 557L554 556M578 553L590 552M388 579L400 578M400 578L412 577M412 577L424 576M436 575L448 574M448 574L460 573M484 571L496 570M496 570L507 569M507 569L519 568M519 568L531 567M567 563L579 562M401 587L413 586M413 586L425 585M448 583L460 582M472 581L484 580M508 578L520 577M520 577L532 576M532 576L544 575M556 573L568 572M568 572L580 571M592 570L604 569M389 597L401 596M413 595L425 594M485 589L497 588M521 586L533 585M593 579L605 578M414 604L426 603M450 601L462 600M462 600L474 599M486 598L498 597M546 592L558 591M570 590L582 589M593 588L605 587M392 624L404 623M416 622L428 621M464 618L476 617M499 615L511 614M511 614L523 612M523 612L535 611M535 611L547 610M559 609L571 608M571 608L583 607M595 606L607 605M405 632L417 631M428 630L440 629M440 629L452 628M476 626L488 625M500 624L512 622M548 619L560 618M560 618L572 617M453 637L465 636M477 635L489 634M489 634L501 632M501 632L513 631M513 631L525 630M537 629L549 628M549 628L561 627M561 627L573 626M585 625L597 624M597 624L609 623M394 651L406 650M418 649L430 648M442 647L454 646M502 641L514 640M538 638L550 637M550 637L562 636M585 634L597 633M597 633L609 632M395 660L407 659M407 659L419 658M419 658L431 657M467 654L479 653M526 648L538 647M550 646L562 645M562 645L574 644M574 644L586 643M396 669L408 668M408 668L420 667M456 664L467 663M479 661L491 660M491 660L503 659M527 657L539 656M563 654L575 653M599 651L611 650M397 678L409 677M420 676L432 675M432 675L444 674M444 674L456 673M468 672L480 670M504 668L516 667M540 665L552 664M564 663L576 662M576 662L588 661M588 661L600 660M397 687L409 686M409 686L421 685M421 685L433 684M481 679L493 678M517 676L529 675M529 675L541 674M459 699L471 698M471 698L483 697M506 695L518 694M530 693L542 692M542 692L554 691M554 691L566 690M566 690L578 689M590 688L602 687M602 687L614 686M400 714L412 713M412 713L424 712M424 712L436 711M459 708L471 707M471 707L483 706M507 704L519 703M519 703L531 702M531 702L543 701M555 700L567 699M603 696L615 695M400 723L412 722M436 719L448 718M448 718L460 717M460 717L472 716M496 714L508 713M508 713L520 712M520 712L532 711M532 711L544 710M556 709L568 708M568 708L580 707M604 705L616 704M413 731L425 729M461 726L473 725M485 724L497 723M497 723L509 722M545 719L557 718M581 716L593 715M593 715L604 714M414 739L426 738M426 738L438 737M462 735L474 734M486 733L498 732M498 732L510 731M510 731L522 730M545 728L557 727M557 727L569 726M569 726L581 725M581 725L593 724M397 542L398 551M398 560L399 569M400 578L401 587M401 596L402 605M403 614L404 623M405 641L406 650M409 686L410 695M410 695L411 704M411 704L412 713M412 713L412 722M412 722L413 731M409 541L409 550M409 550L410 559M410 559L411 568M411 568L412 577M413 586L413 595M413 595L414 604M414 604L415 613M419 658L420 667M420 676L421 685M424 712L424 721M425 729L426 738M421 540L421 549M421 549L422 558M422 558L423 567M423 567L424 576M425 585L425 594M428 621L428 630M432 666L432 675M433 548L434 557M440 620L440 629M445 683L446 692M446 692L447 700M447 700L448 709M448 709L448 718M446 556L447 565M448 574L448 583M450 601L451 610M454 646L455 655M456 673L457 682M458 555L459 564M460 573L460 582M464 618L464 627M464 627L465 636M465 636L466 645M468 672L469 680M470 689L471 698M471 698L471 707M471 707L472 716M472 716L473 725M473 725L474 734M468 536L469 545M469 545L470 554M470 554L471 563M472 572L472 581M472 581L473 590M474 599L475 608M477 635L478 644M478 644L479 653M479 661L480 670M481 679L482 688M483 697L483 706M485 724L486 733M482 553L483 562M485 589L486 598M486 598L487 607M487 607L487 616M487 616L488 625M488 625L489 634M492 534L493 543M495 561L496 570M496 570L496 579M499 615L500 624M502 641L503 650M503 650L503 659M504 668L505 677M505 677L506 686M506 686L506 695M508 713L509 722M516 532L517 541M517 541L518 550M520 577L521 586M522 595L523 604M523 604L523 612M523 612L524 621M524 621L525 630M526 639L526 648M527 657L528 666M528 531L529 540M529 540L530 549M530 549L531 558M531 558L531 567M531 567L532 576M532 576L533 585M533 585L534 593M534 593L535 602M535 611L536 620M536 620L537 629M537 629L538 638M538 638L538 647M539 656L540 665M540 665L541 674M541 674L542 683M542 692L543 701M543 701L544 710M544 710L545 719M545 719L545 728M546 601L547 610M549 628L550 637M550 646L551 655M551 655L552 664M555 700L556 709M557 718L557 727M552 529L553 538M553 538L554 547M554 556L555 565M555 565L556 573M558 591L558 600M560 618L561 627M561 627L562 636M562 636L562 645M564 663L565 672M567 699L568 708M569 717L569 726M565 537L566 546M566 546L566 554M572 617L573 626M573 626L574 635M577 671L577 680M577 680L578 689M579 698L580 707M581 716L581 725M590 543L590 552M590 552L591 561M591 561L592 570M593 579L593 588M594 597L595 606M596 615L597 624M597 633L598 642M600 660L601 669M601 669L601 678M601 678L602 687M602 687L603 696M604 705L604 714M602 542L602 551M603 560L604 569M604 569L605 578"/><path stroke="#40e040" d="M403 614L415 613M415 613L427 612M427 612L439 611M439 611L451 610M451 610L463 609M487 607L499 606M511 605L523 604M523 604L535 602M535 602L546 601M546 601L558 600M570 599L582 598M582 598L594 597M385 543L386 552M389 588L389 597M392 624L393 633M394 651L395 660M396 669L397 678M400 723L401 732"/><path stroke="#e0e040" d="M541 674L553 673M553 673L565 672M565 672L577 671M589 670L601 669M601 669L613 668M578 553L579 562M580 571L581 580M582 598L583 607"/><path stroke="#c040c0" d="M422 694L434 693M434 693L446 692M458 690L470 689M470 689L482 688M518 685L530 684M542 683L554 682M565 681L577 680M577 680L589 679M589 679L601 678M601 678L613 677"/><path stroke="#40e0e0" d="M476 626L477 635M504 533L505 542M505 542L506 551M508 578L509 587M509 587L510 596M510 596L511 605M511 605L511 614M511 614L512 622M513 631L514 640M515 649L515 658M515 658L516 667M517 676L518 685M518 685L518 694M520 712L521 721M585 625L585 634M585 634L586 643M587 652L588 661M589 670L589 679M590 688L591 697"/><path stroke="#e02020" d="M540 530L541 539M541 539L542 548M543 557L543 566M544 575L545 583M546 592L546 601M609 623L609 632M609 632L610 641M611 650L612 659M613 668L613 677M613 677L614 686"/><path fill="#ffffff" d="M453 581h2v2h-2zM477 579h2v2h-2zM513 576h2v2h-2zM519 576h2v2h-2zM525 575h2v2h-2zM520 585h2v2h-2zM449 600h2v2h-2zM545 591h2v2h-2zM486 606h2v2h-2zM492 605h2v2h-2zM534 601h2v2h-2zM551 600h2v2h-2zM504 613h2v2h-2zM528 611h2v2h-2zM534 610h2v2h-2zM445 627h2v2h-2zM475 625h2v2h-2zM481 624h2v2h-2zM499 623h2v2h-2zM505 622h2v2h-2zM547 618h2v2h-2zM553 618h2v2h-2zM476 634h2v2h-2zM488 633h2v2h-2zM500 632h2v2h-2zM506 631h2v2h-2zM536 628h2v2h-2zM501 640h2v2h-2zM472 652h2v2h-2zM461 662h2v2h-2zM484 660h2v2h-2zM526 656h2v2h-2zM449 672h2v2h-2zM509 667h2v2h-2zM486 678h2v2h-2zM522 675h2v2h-2zM528 674h2v2h-2zM546 673h2v2h-2zM552 672h2v2h-2zM444 682h2v2h-2zM449 604h2v2h-2zM453 645h2v2h-2zM453 649h2v2h-2zM455 672h2v2h-2zM456 676h2v2h-2zM463 626h2v2h-2zM464 630h2v2h-2zM464 635h2v2h-2zM471 580h2v2h-2zM476 634h2v2h-2zM477 647h2v2h-2zM485 592h2v2h-2zM485 597h2v2h-2zM486 606h2v2h-2zM486 610h2v2h-2zM487 624h2v2h-2zM488 628h2v2h-2zM498 614h2v2h-2zM501 645h2v2h-2zM502 649h2v2h-2zM504 676h2v2h-2zM504 681h2v2h-2zM505 685h2v2h-2zM508 586h2v2h-2zM508 590h2v2h-2zM509 599h2v2h-2zM511 617h2v2h-2zM512 635h2v2h-2zM514 653h2v2h-2zM514 657h2v2h-2zM521 594h2v2h-2zM522 603h2v2h-2zM522 607h2v2h-2zM522 611h2v2h-2zM526 656h2v2h-2zM527 661h2v2h-2zM532 584h2v2h-2zM532 588h2v2h-2zM534 610h2v2h-2zM535 624h2v2h-2zM537 642h2v2h-2zM538 655h2v2h-2zM539 660h2v2h-2zM545 596h2v2h-2zM545 600h2v2h-2zM548 627h2v2h-2z"/></g><g clip-path="url(#c9)" stroke-width="1.3" fill="none"><path stroke="#1a1ab4" d="M410 747L418 747M418 747L426 746M426 746L434 745M434 745L442 745M450 744L458 743M466 742L474 742M482 741L490 740M522 738L530 737M411 754L419 754M435 752L443 752M443 752L451 751M451 751L459 750M475 749L483 748M483 748L491 747M491 747L499 747M506 746L514 745M514 745L522 745M522 745L530 744M530 744L538 743M411 761L419 761M419 761L427 760M427 760L435 759M435 759L443 758M443 758L451 758M451 758L459 757M467 756L475 756M483 755L491 754M499 754L507 753M515 752L523 752M523 752L531 751M412 768L420 768M428 767L436 766M436 766L444 765M444 765L452 765M452 765L460 764M460 764L468 763M468 763L476 763M484 762L492 761M492 761L500 761M516 759L524 758M413 775L421 775M429 774L437 773M445 772L453 772M453 772L461 771M461 771L468 770M468 770L476 770M500 768L508 767M508 767L516 766M421 781L429 781M445 779L453 779M469 777L477 777M477 777L485 776M485 776L493 775M501 775L509 774M414 789L422 788M422 788L430 788M454 786L462 785M462 785L470 784M486 783L494 782M502 781L510 781M518 780L525 779M525 779L533 779M415 796L422 795M454 793L462 792M462 792L470 791M470 791L478 791M478 791L486 790M486 790L494 789M494 789L502 788M502 788L510 788M518 787L526 786M423 802L431 802M447 800L455 800M471 798L479 798M487 797L495 796M503 795L511 795M519 794L527 793M527 793L535 793M535 793L543 792M416 810L424 809M424 809L432 809M440 808L448 807M456 807L464 806M464 806L472 805M472 805L480 804M487 804L495 803M495 803L503 802M511 802L519 801M519 801L527 800M527 800L535 800M416 817L424 816M424 816L432 816M440 815L448 814M448 814L456 814M456 814L464 813M472 812L480 811M480 811L488 811M488 811L496 810M496 810L504 809M512 809L520 808M520 808L528 807M536 807L544 806M417 824L425 823M425 823L433 823M433 823L441 822M441 822L449 821M449 821L457 821M473 819L481 818M481 818L489 818M489 818L497 817M497 817L505 816M505 816L513 816M521 815L529 814M537 814L544 813M418 831L426 830M426 830L434 830M441 829L449 828M449 828L457 828M457 828L465 827M465 827L473 826M473 826L481 825M481 825L489 825M489 825L497 824M497 824L505 823M505 823L513 823M513 823L521 822M529 821L537 821M418 838L426 837M426 837L434 837M434 837L442 836M458 834L466 834M466 834L474 833M474 833L482 832M482 832L490 832M490 832L498 831M498 831L506 830M514 830L522 829M522 829L530 828M530 828L538 828M538 828L546 827M419 845L427 844M427 844L435 844M451 842L459 841M459 841L467 841M467 841L475 840M475 840L483 839M483 839L491 839M491 839L498 838M498 838L506 837M506 837L514 837M514 837L522 836M419 852L427 851M443 850L451 849M459 848L467 848M467 848L475 847M475 847L483 846M491 846L499 845M507 844L515 844M515 844L523 843M539 841L547 841M420 859L428 858M428 858L436 857M436 857L444 857M452 856L460 855M460 855L468 855M476 854L484 853M484 853L492 853M492 853L500 852M500 852L508 851M508 851L516 851M421 866L429 865M429 865L437 864M437 864L445 864M445 864L453 863M453 863L460 862M476 861L484 860M484 860L492 860M500 859L508 858M508 858L516 857M516 857L524 857M540 855L548 855M429 872L437 871M445 871L453 870M453 870L461 869M477 868L485 867M493 867L501 866M517 864L525 864M541 862L549 862M410 747L411 754M411 754L411 761M411 761L412 768M412 768L413 775M414 789L415 796M415 796L415 803M417 824L418 831M418 831L418 838M418 838L419 845M420 859L421 866M421 866L421 873M418 747L419 754M419 754L419 761M419 761L420 768M421 781L422 788M424 809L424 816M424 816L425 823M427 844L427 851M427 851L428 858M428 858L429 865M427 753L427 760M427 760L428 767M428 767L429 774M429 774L429 781M429 781L430 788M430 788L430 795M430 795L431 802M431 802L432 809M432 816L433 823M433 823L434 830M434 830L434 837M434 837L435 844M436 857L437 864M437 864L437 871M434 745L435 752M435 752L435 759M436 766L437 773M437 773L437 780M438 787L438 794M438 794L439 801M439 801L440 808M440 808L440 815M441 822L441 829M442 836L443 843M443 752L443 758M445 779L446 786M446 786L446 793M448 807L448 814M448 814L449 821M449 821L449 828M449 828L450 835M450 835L451 842M451 842L451 849M451 849L452 856M452 856L453 863M453 863L453 870M451 751L451 758M452 765L453 772M453 772L453 779M453 779L454 786M454 786L454 793M456 807L456 814M457 821L457 828M458 834L459 841M459 841L459 848M459 848L460 855M458 743L459 750M459 750L459 757M459 757L460 764M460 764L461 771M462 785L462 792M462 792L463 799M463 799L464 806M464 806L464 813M464 813L465 820M466 834L467 841M467 841L467 848M468 862L469 869M467 756L468 763M468 770L469 777M469 777L470 784M470 784L470 791M472 805L472 812M473 819L473 826M473 826L474 833M474 833L475 840M475 847L476 854M476 854L476 861M476 861L477 868M474 742L475 749M477 777L478 784M478 784L478 791M479 798L480 804M480 804L480 811M480 811L481 818M483 846L484 853M484 853L484 860M482 741L483 748M483 748L483 755M483 755L484 762M484 762L484 769M484 769L485 776M486 783L486 790M486 790L487 797M491 846L492 853M492 860L493 867M490 740L491 747M491 747L491 754M491 754L492 761M492 761L492 768M494 782L494 789M494 789L495 796M495 796L495 803M495 803L496 810M497 817L497 824M497 824L498 831M498 831L498 838M498 838L499 845M499 845L500 852M498 740L499 747M501 775L502 781M503 795L503 802M504 809L505 816M505 823L506 830M506 830L506 837M507 844L508 851M506 739L506 746M506 746L507 753M507 753L508 760M510 781L510 788M511 802L512 809M512 809L513 816M513 823L514 830M514 837L515 844M515 844L516 851M516 857L517 864M514 738L514 745M515 752L516 759M516 759L516 766M516 766L517 773M517 773L518 780M518 780L518 787M518 787L519 794M519 794L519 801M519 801L520 808M520 808L521 815M521 822L522 829M522 829L522 836M522 836L523 843M523 843L524 850M524 850L524 857M531 842L532 849M532 856L533 863M532 758L532 765M533 772L533 779M533 779L534 786M535 793L535 800M536 807L537 814M537 821L538 828M539 841L540 848M540 848L540 855M538 743L539 750M539 750L540 757M540 764L541 771M541 771L541 778M542 785L543 792M543 792L543 799M544 806L544 813M546 827L546 834M546 834L547 841M547 841L548 848"/><path stroke="#40e040" d="M522 738L522 745M522 745L523 752M524 765L525 772M525 779L526 786M526 786L527 793M527 793L527 800M527 800L528 807"/><path fill="#ffffff" d="M444 771h2v2h-2zM468 776h2v2h-2zM476 776h2v2h-2zM500 774h2v2h-2zM461 784h2v2h-2zM485 782h2v2h-2zM501 780h2v2h-2zM477 790h2v2h-2zM485 789h2v2h-2zM493 788h2v2h-2zM446 799h2v2h-2zM486 796h2v2h-2zM502 794h2v2h-2zM455 806h2v2h-2zM471 804h2v2h-2zM494 802h2v2h-2zM510 801h2v2h-2zM455 813h2v2h-2zM479 810h2v2h-2zM487 810h2v2h-2zM495 809h2v2h-2zM448 820h2v2h-2zM480 817h2v2h-2zM488 817h2v2h-2zM448 827h2v2h-2zM456 827h2v2h-2zM464 826h2v2h-2zM472 825h2v2h-2zM504 822h2v2h-2zM457 833h2v2h-2zM465 833h2v2h-2zM481 831h2v2h-2zM489 831h2v2h-2zM497 830h2v2h-2zM513 836h2v2h-2zM447 813h2v2h-2zM448 820h2v2h-2zM448 827h2v2h-2zM449 834h2v2h-2zM452 778h2v2h-2zM453 785h2v2h-2zM455 806h2v2h-2zM457 833h2v2h-2zM461 784h2v2h-2zM461 791h2v2h-2zM468 776h2v2h-2zM469 783h2v2h-2zM472 818h2v2h-2zM472 825h2v2h-2zM478 797h2v2h-2zM478 804h2v2h-2zM493 781h2v2h-2zM496 823h2v2h-2zM503 808h2v2h-2zM509 780h2v2h-2zM510 801h2v2h-2z"/></g><g clip-path="url(#c10)" stroke-width="1.3" fill="none"><path stroke="#1a1ab4" d="M396 167L403 167M417 167L424 167M424 167L431 167M431 167L438 167M459 167L466 167M396 173L403 173M417 173L424 173M424 173L431 173M438 173L445 173M459 173L466 173M396 185L403 185M403 185L410 185M410 185L417 185M431 185L438 185M445 185L452 185M459 185L466 185M396 191L403 191M403 191L410 191M410 191L417 191M417 191L424 191M431 191L438 191M438 191L445 191M417 197L424 197M424 197L431 197M438 197L445 197M452 197L459 197M396 203L403 203M403 203L410 203M417 203L424 203M424 203L431 203M431 203L438 203M438 203L445 203M445 203L452 203M403 209L410 209M417 209L424 209M424 209L431 209M445 209L452 209M452 209L459 209M396 215L403 215M403 215L410 215M410 215L417 215M424 215L431 215M431 215L438 215M438 215L445 215M445 215L452 215M452 215L459 215M396 221L403 221M403 221L410 221M410 221L417 221M417 221L424 221M431 221L438 221M438 221L445 221M445 221L452 221M452 221L459 221M396 173L396 179M396 179L396 185M396 197L396 203M396 203L396 209M396 209L396 215M396 221L396 227M403 167L403 173M403 173L403 179M403 179L403 185M403 185L403 191M403 191L403 197M403 197L403 203M403 203L403 209M410 167L410 173M410 173L410 179M410 179L410 185M410 197L410 203M410 209L410 215M410 215L410 221M410 221L410 227M417 185L417 191M417 197L417 203M417 203L417 209M417 221L417 227M431 167L431 173M431 179L431 185M431 185L431 191M431 209L431 215M431 215L431 221M438 167L438 173M438 179L438 185M438 185L438 191M438 221L438 227M445 173L445 179M445 179L445 185M445 191L445 197M445 197L445 203M445 203L445 209M445 215L445 221M452 167L452 173M452 191L452 197M452 197L452 203M452 203L452 209M452 209L452 215M452 215L452 221M452 221L452 227M459 173L459 179M459 197L459 203M459 209L459 215M459 215L459 221M466 179L466 185M466 215L466 221M466 221L466 227"/><path stroke="#40e0e0" d="M403 179L410 179M417 179L424 179M424 179L431 179M431 179L438 179M438 179L445 179M452 179L459 179M459 179L466 179"/><path stroke="#40e040" d="M396 227L403 227M403 227L410 227M410 227L417 227M417 227L424 227M424 227L431 227M445 227L452 227M452 227L459 227M424 167L424 173M424 185L424 191M424 191L424 197M424 221L424 227"/><path stroke="#e0e040" d="M403 209L403 215"/><path fill="#ffffff" d="M430 190h2v2h-2zM423 196h2v2h-2zM437 196h2v2h-2zM430 202h2v2h-2zM437 202h2v2h-2zM423 190h2v2h-2zM430 184h2v2h-2zM437 184h2v2h-2z"/></g><g clip-path="url(#c11)" stroke-width="1.3" fill="none"><path stroke="#1a1ab4" d="M494 63L500 59M500 59L507 54M507 54L513 50M505 65L511 61M531 47L538 42M544 38L551 33M551 33L557 29M557 29L564 24M570 20L577 15M603 -3L610 -8M610 -8L616 -13M616 -13L623 -17M623 -17L629 -22M629 -22L636 -26M643 -31L649 -36M621 -6L627 -11M627 -11L634 -15M634 -15L641 -20M647 -24L654 -29M654 -29L660 -34M532 76L538 71M551 62L558 58M591 35L597 30M597 30L604 25M604 25L610 21M610 21L617 16M617 16L624 12M624 12L630 7M630 7L637 2M656 -11L663 -16M663 -16L669 -20M543 78L550 73M556 69L563 64M563 64L569 59M569 59L576 55M576 55L582 50M582 50L589 46M589 46L595 41M602 37L608 32M615 27L622 23M622 23L628 18M628 18L635 14M635 14L641 9M648 4L654 -0M667 -9L674 -14M559 86L565 82M565 82L572 77M578 73L585 68M605 54L611 50M637 31L644 27M650 22L657 18M657 18L664 13M677 4L683 -1M629 47L635 42M635 42L642 38M642 38L648 33M655 29L662 24M662 24L668 19M668 19L675 15M675 15L681 10M681 10L688 6M633 54L640 49M647 44L653 40M660 35L666 31M666 31L673 26M673 26L679 21M551 131L557 126M570 117L577 113M584 108L590 103M590 103L597 99M597 99L603 94M610 90L616 85M629 76L636 71M643 67L649 62M656 58L662 53M662 53L669 48M682 39L688 35M695 30L702 25M621 92L628 87M634 82L641 78M647 73L654 69M654 69L660 64M660 64L667 59M667 59L673 55M680 50L686 46M686 46L693 41M700 37L706 32M558 155L565 151M565 151L571 146M571 146L578 141M584 137L591 132M597 128L604 123M604 123L610 118M637 100L643 96M650 91L656 86M656 86L663 82M669 77L676 73M620 132L626 127M639 118L646 113M646 113L652 109M666 99L672 95M672 95L679 90M685 86L692 81M698 77L705 72M705 72L711 67M718 63L724 58M677 101L683 97M690 92L696 88M703 83L709 78M709 78L716 74M723 69L729 65M622 149L629 145M629 145L635 140M635 140L642 135M642 135L648 131M675 113L681 108M701 94L707 90M707 90L714 85M727 76L734 71M581 188L588 183M607 170L614 165M614 165L620 160M627 156L633 151M633 151L640 147M653 137L660 133M666 128L673 124M673 124L679 119M679 119L686 115M686 115L692 110M692 110L699 105M705 101L712 96M712 96L719 92M725 87L732 82M586 194L592 190M605 181L612 176M638 158L645 153M677 130L684 126M601 203L608 198M614 194L621 189M628 185L634 180M634 180L641 175M641 175L647 171M647 171L654 166M654 166L660 162M660 162L667 157M667 157L673 153M693 139L700 134M713 125L719 120M732 111L739 107M745 102L752 97M606 210L612 205M612 205L619 200M619 200L626 196M632 191L639 187M652 177L658 173M691 150L698 145M711 136L717 132M730 122L737 118M737 118L744 113M744 113L750 109M520 45L525 52M533 36L538 42M551 62L556 69M565 82L570 88M570 88L574 95M574 95L579 101M584 108L588 115M597 128L602 134M611 147L616 154M616 154L620 160M620 160L625 167M625 167L629 174M629 174L634 180M634 180L639 187M639 187L643 193M592 92L597 99M615 125L620 132M620 132L624 138M624 138L629 145M557 29L562 35M576 55L580 61M580 61L585 68M585 68L589 75M559 18L564 24M564 24L569 31M573 37L578 44M587 57L591 63M591 63L596 70M605 83L610 90M610 90L614 96M619 103L624 109M633 122L637 129M647 142L651 149M651 149L656 155M665 168L669 175M580 33L584 39M598 59L603 65M607 72L612 78M616 85L621 92M635 111L639 118M648 131L653 137M662 151L667 157M667 157L671 164M582 21L586 28M591 35L595 41M595 41L600 48M600 48L605 54M605 54L609 61M609 61L614 67M614 67L618 74M618 74L623 80M628 87L632 94M632 94L637 100M655 126L660 133M660 133L664 139M586 -1L590 6M590 6L595 12M608 32L613 39M618 45L622 52M622 52L627 58M627 58L631 65M645 84L650 91M654 97L659 104M659 104L664 111M664 111L668 117M668 117L673 124M673 124L677 130M677 130L682 137M682 137L686 143M597 1L601 8M610 21L615 27M620 34L624 40M624 40L629 47M633 54L638 60M638 60L643 67M656 86L661 93M661 93L666 99M666 99L670 106M675 113L679 119M679 119L684 126M684 126L688 132M599 -10L603 -3M603 -3L608 3M608 3L612 10M612 10L617 16M631 36L635 42M605 -15L610 -8M610 -8L614 -1M614 -1L619 5M624 12L628 18M628 18L633 25M633 25L637 31M621 -6L626 0M639 20L644 27M658 46L662 53M667 59L671 66M671 66L676 73M681 79L685 86M690 92L694 99M669 48L673 55M673 55L678 61M678 61L683 68M696 88L701 94M701 94L705 101M705 101L710 107M719 120L724 127M724 127L728 134M726 116L730 122M631 -33L636 -26M641 -20L645 -13M645 -13L650 -7M650 -7L654 -0M659 6L664 13M673 26L677 33M677 33L682 39M682 39L686 46M686 46L691 52M691 52L696 59M700 65L705 72M714 85L719 92M719 92L723 98M728 105L732 111M737 118L742 124M643 -31L647 -24M647 -24L652 -18M666 2L670 8M675 15L679 21M679 21L684 28M684 28L688 35M688 35L693 41M693 41L698 48M698 48L702 54M702 54L707 61M707 61L711 67M725 87L730 94M730 94L734 100M734 100L739 107M695 30L700 37M704 43L709 50M713 56L718 63M718 63L723 69M736 89L741 96M745 102L750 109M750 109L755 115"/><path stroke="#40e0e0" d="M513 50L520 45M527 40L533 36M546 27L553 22M553 22L559 18M559 18L566 13M579 4L586 -1M618 -24L625 -28M638 -38L645 -42M645 -42L651 -47M516 67L523 63M523 63L529 58M536 54L542 49M549 44L555 40M555 40L562 35M562 35L569 31M569 31L575 26M575 26L582 21M582 21L588 17M588 17L595 12M601 8L608 3M608 3L614 -1M614 -1L621 -6M641 9L648 4M534 94L541 89M541 89L548 84M554 80L561 75M561 75L567 71M567 71L574 66M574 66L580 61M593 52L600 48M600 48L607 43M613 39L620 34M620 34L626 29M633 25L639 20M639 20L646 16M646 16L652 11M652 11L659 6M659 6L666 2M666 2L672 -3M608 101L614 96M590 201L597 196M597 196L603 192M603 192L610 187M629 174L636 169M636 169L643 164M643 164L649 160M649 160L656 155M656 155L662 151M662 151L669 146M669 146L675 141M682 137L688 132M688 132L695 128M695 128L702 123M702 123L708 118M708 118L715 114M734 100L741 96M741 96L747 91M494 63L498 70M498 70L503 77M512 90L517 96M517 96L521 103M521 103L526 109M526 109L531 116M531 116L535 122M535 122L540 129M540 129L544 136M500 59L505 65M519 85L523 92M523 92L528 98M528 98L532 105M542 118L546 124M546 124L551 131M551 131L555 137M560 144L565 151M565 151L569 157M574 164L578 170M583 177L588 183M597 196L601 203M606 210L610 216M507 54L511 61M521 74L525 80M530 87L534 94M534 94L539 100M548 113L553 120M553 120L557 126M562 133L567 139M567 139L571 146M571 146L576 153M576 153L580 159M594 179L599 185M603 192L608 198M608 198L612 205M513 50L518 56M518 56L523 63M523 63L527 69M541 89L546 96M546 96L550 102M564 122L569 128M569 128L573 135M591 161L596 168M596 168L601 174M601 174L605 181M605 181L610 187M610 187L614 194M534 65L538 71M548 84L552 91M552 91L557 97M561 104L566 111M566 111L570 117M570 117L575 124M575 124L580 130M545 67L550 73M550 73L554 80M643 164L647 171M594 81L599 88M599 88L603 94M612 107L617 114M617 114L622 120M622 120L626 127M626 127L631 134M645 153L649 160M649 160L654 166M658 173L663 179M649 62L654 69M658 75L663 82M677 101L681 108M681 108L686 115M686 115L690 121M690 121L695 128M695 128L700 134M694 99L699 105M699 105L704 112M708 118L713 125"/><path stroke="#40e040" d="M514 78L521 74M521 74L527 69M534 65L540 60M547 56L553 51M553 51L560 46M560 46L567 42M567 42L573 37M580 33L586 28M586 28L593 23M593 23L599 19M599 19L606 14M606 14L612 10M619 5L626 0M632 -4L639 -9M645 -13L652 -18M652 -18L658 -22M535 122L542 118M548 113L555 109M561 104L568 99M568 99L574 95M574 95L581 90M588 86L594 81M607 72L614 67M627 58L633 54M569 157L576 153M576 153L582 148M615 125L622 120M622 120L628 116M635 111L641 107M641 107L648 102M648 102L654 97M654 97L661 93M661 93L667 88M667 88L674 84M687 75L694 70M694 70L700 65M700 65L707 61M707 61L713 56M630 202L637 198M643 193L650 189M669 175L676 170M676 170L683 166M689 161L696 156M696 156L702 152M702 152L709 147M715 143L722 138M722 138L728 134M735 129L742 124M580 130L584 137M584 137L589 143M593 150L598 156M598 156L603 163M603 163L607 170M612 176L616 183M616 183L621 189M704 141L709 147M713 125L717 132M639 -9L643 -2M643 -2L648 4M648 4L652 11M657 18L662 24M662 24L666 31M675 44L680 50M703 83L707 90M717 103L721 109M721 109L726 116"/><path stroke="#e0e040" d="M537 111L544 107M544 107L550 102M550 102L557 97M576 84L583 79M583 79L589 75M596 70L603 65M603 65L609 61M616 56L622 52M622 52L629 47M553 120L559 115M592 92L599 88M599 88L605 83M605 83L612 78M612 78L618 74M651 51L658 46M658 46L664 42M664 42L671 37M671 37L677 33M677 33L684 28M690 23L697 19M553 149L560 144M567 139L573 135M573 135L580 130M580 130L586 126M586 126L593 121M593 121L599 116M599 116L606 112M606 112L612 107M619 103L626 98M626 98L632 94M632 94L639 89M639 89L645 84M645 84L652 80M652 80L658 75M567 168L574 164M593 150L600 145M600 145L607 141M613 136L620 132M578 170L585 166M585 166L591 161M598 156L605 152M605 152L611 147M631 134L637 129M637 129L644 124M644 124L650 120M657 115L664 111M670 106L677 101M583 177L589 172M609 158L616 154M684 126L690 121M690 121L697 116M697 116L704 112M704 112L710 107M717 103L723 98M723 98L730 94M736 89L743 84M553 149L558 155M558 155L563 162M563 162L567 168M567 168L572 175M581 188L586 194M586 194L590 201M590 201L595 208M554 80L559 86M577 113L582 119M586 126L591 132M605 152L609 158M623 178L628 185M579 4L584 10M588 17L593 23M593 23L597 30M597 30L602 37M602 37L607 43M616 56L620 63M620 63L625 69M634 82L639 89M643 96L648 102M648 102L652 109M652 109L657 115M666 128L671 135M671 135L675 141M680 148L685 154M685 154L689 161M635 42L640 49M640 49L645 56M645 56L649 62M642 38L647 44M647 44L651 51M618 -24L623 -17M646 16L650 22M650 22L655 29M660 -34L665 -27M665 -27L669 -20M692 12L697 19M702 25L706 32M706 32L711 38M715 45L720 52M724 58L729 65M734 71L738 78M738 78L743 84M752 97L757 104"/><path stroke="#f0f0f0" d="M671 66L678 61M685 57L691 52M698 48L704 43M704 43L711 38M689 63L696 59M696 59L702 54M709 50L715 45M544 38L549 44M553 51L558 58M567 71L572 77M572 77L576 84M595 110L599 116M599 116L604 123M604 123L608 130M608 130L613 136M622 149L627 156M627 156L631 162M631 162L636 169M651 51L656 58M656 58L660 64M660 64L665 71M665 71L669 77M669 77L674 84M674 84L679 90M679 90L683 97M697 116L702 123M711 136L715 143M649 -36L654 -29M658 -22L663 -16M667 -9L672 -3M681 10L686 17"/><path fill="#ffffff" d="M568 58h2v2h-2zM575 54h2v2h-2zM581 49h2v2h-2zM588 45h2v2h-2zM566 70h2v2h-2zM599 47h2v2h-2zM564 81h2v2h-2zM577 72h2v2h-2zM604 53h2v2h-2zM582 78h2v2h-2zM595 69h2v2h-2zM615 55h2v2h-2zM628 46h2v2h-2zM567 98h2v2h-2zM587 85h2v2h-2zM632 53h2v2h-2zM591 91h2v2h-2zM611 77h2v2h-2zM583 107h2v2h-2zM589 102h2v2h-2zM596 98h2v2h-2zM609 89h2v2h-2zM642 66h2v2h-2zM661 52h2v2h-2zM607 100h2v2h-2zM620 91h2v2h-2zM653 68h2v2h-2zM666 58h2v2h-2zM605 111h2v2h-2zM618 102h2v2h-2zM638 88h2v2h-2zM644 83h2v2h-2zM651 79h2v2h-2zM670 65h2v2h-2zM655 85h2v2h-2zM668 76h2v2h-2zM688 62h2v2h-2zM614 124h2v2h-2zM640 106h2v2h-2zM653 96h2v2h-2zM666 87h2v2h-2zM686 74h2v2h-2zM638 117h2v2h-2zM665 98h2v2h-2zM671 94h2v2h-2zM684 85h2v2h-2zM636 128h2v2h-2zM643 123h2v2h-2zM672 123h2v2h-2zM685 114h2v2h-2zM564 81h2v2h-2zM573 94h2v2h-2zM583 107h2v2h-2zM566 70h2v2h-2zM571 76h2v2h-2zM594 109h2v2h-2zM591 91h2v2h-2zM575 54h2v2h-2zM611 106h2v2h-2zM616 113h2v2h-2zM621 119h2v2h-2zM586 56h2v2h-2zM590 62h2v2h-2zM604 82h2v2h-2zM609 89h2v2h-2zM618 102h2v2h-2zM632 121h2v2h-2zM597 58h2v2h-2zM606 71h2v2h-2zM599 47h2v2h-2zM604 53h2v2h-2zM613 66h2v2h-2zM617 73h2v2h-2zM633 81h2v2h-2zM621 51h2v2h-2zM626 57h2v2h-2zM644 83h2v2h-2zM658 103h2v2h-2zM667 116h2v2h-2zM632 53h2v2h-2zM637 59h2v2h-2zM655 85h2v2h-2zM660 92h2v2h-2zM678 118h2v2h-2zM644 55h2v2h-2zM648 61h2v2h-2zM657 74h2v2h-2zM650 50h2v2h-2zM655 57h2v2h-2zM670 65h2v2h-2zM680 78h2v2h-2zM689 91h2v2h-2zM672 54h2v2h-2zM677 60h2v2h-2z"/></g><g clip-path="url(#c12)" stroke-width="1.3" fill="none"><path stroke="#1a1ab4" d="M569 6L576 1M613 -25L620 -30M580 6L587 1M610 -14L617 -19M569 23L577 17M584 12L591 7M599 2L606 -3M606 -3L614 -8M581 23L588 18M595 13L603 8M618 -3L625 -8M625 -8L632 -13M599 19L607 13M614 8L622 3M622 3L629 -2M589 35L596 29M596 29L603 24M603 24L611 19M611 19L618 14M633 4L640 -2M571 56L578 51M578 51L585 45M585 45L593 40M593 40L600 35M622 20L630 15M637 9L644 4M608 47L616 41M616 41L623 36M623 36L630 31M630 31L638 26M638 26L645 21M583 73L590 68M590 68L597 63M605 58L612 52M620 47L627 42M634 37L642 32M587 79L594 74M594 74L601 68M609 63L616 58M624 53L631 48M638 43L646 37M653 32L660 27M620 64L628 59M635 54L642 48M657 38L664 33M602 85L609 80M632 64L639 59M639 59L646 54M654 49L661 44M661 44L668 39M554 16L558 22M566 33L570 39M574 45L578 51M582 56L586 62M598 79L602 85M569 23L573 28M573 28L577 34M581 40L585 45M597 63L601 68M601 68L605 74M605 74L609 80M569 6L573 12M577 17L581 23M585 29L589 35M593 40L597 46M609 63L613 69M613 69L617 75M580 6L584 12M596 29L600 35M604 41L608 47M616 58L620 64M591 7L595 13M599 19L603 24M603 24L608 30M608 30L612 36M620 47L624 53M606 -20L610 -14M610 -14L614 -8M614 -8L618 -3M622 3L626 9M630 15L634 20M642 32L646 37M646 37L650 43M641 15L645 21M649 27L653 32M657 38L661 44M624 -24L628 -19"/><path stroke="#e0e040" d="M575 62L582 56M612 36L619 31M619 31L626 25"/><path stroke="#40e0e0" d="M593 57L601 52M601 52L608 47M598 79L605 74M591 -10L595 -4M599 2L603 8M607 13L611 19M615 25L619 31M627 42L631 48M631 48L635 54"/><path stroke="#c040c0" d="M547 21L551 27M551 27L555 33M563 44L567 50M579 67L583 73M587 79L591 84M591 84L595 90M606 -3L610 2M626 25L630 31M634 37L638 43M642 48L646 54"/><path stroke="#e02020" d="M632 -13L636 -7M636 -7L640 -2M652 16L656 21M660 27L664 33M664 33L668 39"/><path fill="#ffffff" d="M594 12h2v2h-2zM598 18h2v2h-2zM602 15h2v2h-2zM591 31h2v2h-2zM595 28h2v2h-2zM599 26h2v2h-2zM606 21h2v2h-2zM610 18h2v2h-2zM618 30h2v2h-2zM618 38h2v2h-2zM622 44h2v2h-2zM592 39h2v2h-2zM595 28h2v2h-2zM603 40h2v2h-2zM598 18h2v2h-2zM602 23h2v2h-2zM614 24h2v2h-2z"/></g><g clip-path="url(#c13)" stroke-width="1.3" fill="none"><path stroke="#1a1ab4" d="M510 228L517 228M517 228L524 228M531 228L538 228M580 228L587 228M587 228L594 228M601 228L608 228M510 234L517 234M524 234L531 234M531 234L538 234M538 234L545 234M573 234L580 234M580 234L587 234M517 240L524 240M524 240L531 240M538 240L545 240M580 240L587 240M601 240L608 240M510 246L517 246M545 246L552 246M552 246L559 246M559 246L566 246M566 246L573 246M531 252L538 252M538 252L545 252M545 252L552 252M559 252L566 252M566 252L573 252M580 252L587 252M594 252L601 252M601 252L608 252M531 258L538 258M538 258L545 258M545 258L552 258M552 258L559 258M559 258L566 258M566 258L573 258M573 258L580 258M580 258L587 258M594 258L601 258M510 264L517 264M531 264L538 264M538 264L545 264M545 264L552 264M580 264L587 264M601 264L608 264M510 270L517 270M517 270L524 270M531 270L538 270M538 270L545 270M545 270L552 270M566 270L573 270M573 270L580 270M580 270L587 270M587 270L594 270M594 270L601 270M510 276L517 276M517 276L524 276M524 276L531 276M545 276L552 276M566 276L573 276M580 276L587 276M587 276L594 276M594 276L601 276M601 276L608 276M517 288L524 288M531 288L538 288M552 288L559 288M566 288L573 288M517 294L524 294M531 294L538 294M538 294L545 294M545 294L552 294M559 294L566 294M566 294L573 294M573 294L580 294M601 294L608 294M517 300L524 300M524 300L531 300M531 300L538 300M538 300L545 300M545 300L552 300M552 300L559 300M559 300L566 300M566 300L573 300M580 300L587 300M587 300L594 300M594 300L601 300M566 306L573 306M580 306L587 306M587 306L594 306M594 306L601 306M601 306L608 306M510 240L510 246M510 246L510 252M510 252L510 258M510 288L510 294M517 228L517 234M517 234L517 240M517 264L517 270M517 270L517 276M517 282L517 288M517 300L517 306M517 306L517 312M524 228L524 234M524 234L524 240M524 252L524 258M524 270L524 276M524 276L524 282M524 288L524 294M524 294L524 300M524 306L524 312M538 228L538 234M538 240L538 246M538 246L538 252M538 264L538 270M538 270L538 276M538 276L538 282M538 282L538 288M538 300L538 306M538 306L538 312M552 228L552 234M552 234L552 240M552 258L552 264M552 264L552 270M552 270L552 276M552 276L552 282M552 294L552 300M552 300L552 306M559 228L559 234M559 240L559 246M559 246L559 252M559 252L559 258M559 258L559 264M559 264L559 270M559 270L559 276M559 276L559 282M559 282L559 288M559 288L559 294M559 294L559 300M559 300L559 306M559 306L559 312M566 234L566 240M566 252L566 258M566 270L566 276M566 282L566 288M566 294L566 300M566 300L566 306M573 228L573 234M573 234L573 240M573 246L573 252M573 252L573 258M573 258L573 264M573 288L573 294M573 294L573 300M573 306L573 312M580 228L580 234M580 240L580 246M580 246L580 252M580 252L580 258M580 276L580 282M580 306L580 312M587 234L587 240M587 240L587 246M587 246L587 252M587 252L587 258M587 258L587 264M587 270L587 276M587 282L587 288M587 294L587 300M587 300L587 306M594 240L594 246M594 246L594 252M594 252L594 258M594 258L594 264M594 270L594 276M594 276L594 282M594 282L594 288M594 288L594 294M594 294L594 300M594 300L594 306M608 300L608 306M608 306L608 312"/><path stroke="#40e040" d="M517 252L524 252M524 252L531 252M524 282L531 282M538 282L545 282M559 282L566 282M573 282L580 282M594 282L601 282M601 282L608 282"/><path stroke="#40e0e0" d="M524 306L531 306M517 312L524 312M524 312L531 312M531 312L538 312M538 312L545 312M559 312L566 312M566 312L573 312M573 312L580 312M580 312L587 312M587 312L594 312M601 312L608 312M531 246L531 252M531 252L531 258M531 258L531 264M531 264L531 270M531 282L531 288M531 288L531 294M531 306L531 312M545 228L545 234M545 234L545 240M545 240L545 246M545 252L545 258M545 276L545 282M545 282L545 288M545 288L545 294M601 228L601 234M601 234L601 240M601 270L601 276M601 288L601 294M601 294L601 300M601 300L601 306M601 306L601 312M608 228L608 234M608 240L608 246M608 258L608 264M608 264L608 270M608 270L608 276"/><path fill="#ffffff" d="M551 244h2v2h-2zM558 244h2v2h-2zM565 250h2v2h-2zM551 256h2v2h-2zM558 256h2v2h-2zM565 274h2v2h-2zM551 262h2v2h-2zM551 268h2v2h-2zM551 292h2v2h-2zM558 250h2v2h-2zM558 256h2v2h-2zM558 262h2v2h-2zM558 268h2v2h-2zM558 280h2v2h-2zM558 292h2v2h-2zM565 250h2v2h-2zM565 292h2v2h-2z"/></g><g clip-path="url(#c14)" stroke-width="1.3" fill="none"><path stroke="#1a1ab4" d="M338 248L345 251M351 254L357 258M357 258L363 261M363 261L369 264M290 235L296 239M314 248L320 252M320 252L327 255M333 258L339 262M345 265L351 268M357 271L364 275M293 244L299 247M299 247L305 250M318 257L324 260M324 260L330 264M330 264L336 267M348 273L355 277M284 246L290 249M290 249L296 252M296 252L302 256M302 256L309 259M315 262L321 266M321 266L327 269M327 269L333 272M339 275L346 279M352 282L358 285M293 258L300 261M324 274L330 277M337 281L343 284M343 284L349 287M349 287L355 291M278 256L284 260M315 276L321 279M275 262L282 265M282 265L288 268M288 268L294 272M300 275L306 278M306 278L312 282M325 288L331 291M331 291L337 295M343 298L350 301M301 289L307 292M313 295L319 299M319 299L325 302M332 305L338 309M273 281L279 284M261 288L268 292M268 292L274 295M280 298L286 301M286 301L292 305M317 318L323 321M323 321L329 324M259 294L265 297M265 297L271 300M271 300L277 303M277 303L283 307M289 310L296 313M296 313L302 317M320 326L327 330M327 330L333 333M256 299L262 302M262 302L268 305M268 305L274 309M274 309L280 312M280 312L287 315M287 315L293 319M295 225L292 230M292 230L290 235M290 235L287 241M284 246L281 251M281 251L278 256M278 256L275 262M270 272L267 278M267 278L264 283M264 283L261 288M261 288L259 294M259 294L256 299M305 237L302 242M296 252L293 258M308 245L305 250M300 261L297 266M297 266L294 272M294 272L291 277M286 288L283 293M280 298L277 303M277 303L274 309M320 238L317 243M317 243L314 248M311 254L309 259M309 259L306 264M306 264L303 270M300 275L297 280M297 280L295 286M295 286L292 291M292 291L289 296M326 241L323 246M323 246L320 252M320 252L318 257M318 257L315 262M315 262L312 268M312 268L309 273M301 303L298 308M296 313L293 319M338 248L336 253M336 253L333 258M330 264L327 269M327 269L324 274M321 279L319 285M345 251L342 256M342 256L339 262M336 267L333 272M330 277L328 283M322 293L319 299M316 304L314 309M314 309L311 315M311 315L308 320M360 266L357 271M357 271L355 277M355 277L352 282M346 293L343 298M341 303L338 309M335 314L332 319M327 330L324 335M369 264L366 269M366 269L364 275M364 275L361 280M358 285L355 291M350 301L347 307M347 307L344 312M338 322L335 328M333 333L330 338"/><path stroke="#c040c0" d="M295 225L301 228M301 228L307 231M332 244L338 248M333 272L339 275M281 251L287 254M321 279L328 283M328 283L334 286M340 289L346 293M346 293L352 296M279 284L286 288M292 291L298 294M304 297L310 301M310 301L316 304M316 304L323 307M329 311L335 314M335 314L341 317M270 286L277 290M277 290L283 293M283 293L289 296M295 299L301 303M301 303L307 306M307 306L314 309M314 309L320 313M326 316L332 319M299 322L305 325M318 332L324 335M324 335L330 338M289 296L286 301M286 301L283 307M283 307L280 312M306 278L304 284M292 305L289 310M327 255L324 260M321 266L318 271M312 282L310 287M310 287L307 292M307 306L305 311M305 311L302 317M351 254L348 260M339 275L337 281M328 297L325 302M325 302L323 307M320 313L317 318M317 318L314 323M314 323L311 328M348 273L346 279M346 279L343 284M340 289L337 295M337 295L334 300M334 300L332 305M326 316L323 321M323 321L320 326M320 326L318 332"/><path stroke="#f0f0f0" d="M311 240L317 243M317 243L323 246M329 250L336 253M348 260L354 263M360 266L366 269"/><path stroke="#40e0e0" d="M273 267L279 270M285 274L291 277M304 284L310 287M310 287L316 290M316 290L322 293M322 293L328 297M328 297L334 300M341 303L347 307M298 233L296 239M296 239L293 244M293 244L290 249M290 249L287 254M287 254L284 260M282 265L279 270M279 270L276 276M276 276L273 281M265 297L262 302M291 263L288 268M288 268L285 274M285 274L282 279M282 279L279 284M277 290L274 295M274 295L271 300"/><path fill="#ffffff" d="M320 265h2v2h-2zM323 273h2v2h-2zM314 275h2v2h-2zM305 277h2v2h-2zM303 283h2v2h-2zM309 286h2v2h-2zM312 294h2v2h-2zM318 298h2v2h-2zM303 296h2v2h-2zM309 300h2v2h-2zM305 263h2v2h-2zM314 261h2v2h-2zM311 267h2v2h-2zM320 265h2v2h-2zM312 280h2v2h-2zM309 286h2v2h-2zM320 278h2v2h-2z"/></g><g clip-path="url(#c15)" stroke-width="1.3" fill="none"><path stroke="#1a1ab4" d="M298 309L306 309M314 309L322 309M322 309L330 309M330 309L338 309M338 309L346 309M346 309L354 309M370 309L378 309M290 315L298 315M322 315L330 315M330 315L338 315M338 315L346 315M346 315L354 315M354 315L362 315M282 321L290 321M290 321L298 321M298 321L306 321M306 321L314 321M314 321L322 321M322 321L330 321M354 321L362 321M362 321L370 321M370 321L378 321M330 327L338 327M338 327L346 327M346 327L354 327M362 327L370 327M370 327L378 327M290 333L298 333M306 333L314 333M314 333L322 333M322 333L330 333M354 333L362 333M362 333L370 333M370 333L378 333M322 339L330 339M346 339L354 339M354 339L362 339M362 339L370 339M306 357L314 357M322 357L330 357M330 357L338 357M338 357L346 357M346 357L354 357M362 357L370 357M370 357L378 357M282 363L290 363M290 363L298 363M298 363L306 363M306 363L314 363M314 363L322 363M322 363L330 363M338 363L346 363M354 363L362 363M362 363L370 363M370 363L378 363M282 369L290 369M314 369L322 369M322 369L330 369M330 369L338 369M338 369L346 369M346 369L354 369M354 369L362 369M370 369L378 369M290 381L298 381M298 381L306 381M306 381L314 381M314 381L322 381M322 381L330 381M338 381L346 381M346 381L354 381M298 387L306 387M282 399L290 399M306 399L314 399M314 399L322 399M322 399L330 399M362 399L370 399M370 399L378 399M290 405L298 405M306 405L314 405M314 405L322 405M330 405L338 405M338 405L346 405M354 405L362 405M282 309L282 315M282 315L282 321M282 321L282 327M282 327L282 333M282 333L282 339M282 339L282 345M282 357L282 363M282 363L282 369M282 369L282 375M282 381L282 387M282 399L282 405M290 309L290 315M290 315L290 321M290 321L290 327M290 327L290 333M290 351L290 357M290 357L290 363M290 399L290 405M298 309L298 315M298 315L298 321M298 327L298 333M298 339L298 345M298 345L298 351M298 351L298 357M298 357L298 363M298 363L298 369M298 369L298 375M298 387L298 393M298 393L298 399M298 399L298 405M306 309L306 315M306 315L306 321M306 327L306 333M306 333L306 339M306 339L306 345M306 345L306 351M306 351L306 357M306 369L306 375M306 375L306 381M306 381L306 387M306 387L306 393M306 393L306 399M306 399L306 405M314 309L314 315M314 315L314 321M314 321L314 327M314 333L314 339M314 339L314 345M314 345L314 351M314 351L314 357M314 357L314 363M314 363L314 369M314 369L314 375M314 375L314 381M314 393L314 399M314 399L314 405M330 327L330 333M330 333L330 339M330 339L330 345M330 345L330 351M330 357L330 363M330 363L330 369M330 369L330 375M330 375L330 381M330 381L330 387M330 399L330 405M338 315L338 321M338 327L338 333M338 333L338 339M338 339L338 345M338 345L338 351M346 339L346 345M346 357L346 363M346 369L346 375M346 375L346 381M346 381L346 387M346 393L346 399M346 399L346 405M362 309L362 315M362 315L362 321M362 321L362 327M362 327L362 333M362 333L362 339M362 339L362 345M362 345L362 351M362 351L362 357M362 363L362 369M362 369L362 375M362 375L362 381M362 387L362 393M362 399L362 405M370 321L370 327M370 327L370 333M370 339L370 345M378 315L378 321M378 321L378 327M378 327L378 333M378 333L378 339M378 339L378 345M378 345L378 351M378 351L378 357M378 357L378 363M378 375L378 381M378 387L378 393M378 393L378 399M378 399L378 405"/><path stroke="#40e040" d="M282 309L290 309M290 309L298 309M282 345L290 345M298 345L306 345M314 345L322 345M330 345L338 345M338 345L346 345M354 345L362 345M282 375L290 375M306 375L314 375M314 375L322 375M322 375L330 375M330 375L338 375M338 375L346 375M354 375L362 375M370 375L378 375M282 405L290 405M322 315L322 321M322 321L322 327M322 327L322 333M322 339L322 345M322 351L322 357M322 357L322 363M322 363L322 369M322 369L322 375M322 375L322 381M322 393L322 399M322 399L322 405M354 309L354 315M354 315L354 321M354 327L354 333M354 333L354 339M354 339L354 345M354 345L354 351M354 351L354 357M354 363L354 369M354 369L354 375M354 375L354 381M354 381L354 387M354 387L354 393M354 393L354 399M354 399L354 405"/><path stroke="#40e0e0" d="M282 327L290 327M290 327L298 327M306 327L314 327M282 339L290 339M290 339L298 339M298 339L306 339M306 339L314 339M314 339L322 339M282 351L290 351M290 351L298 351M306 351L314 351M314 351L322 351M330 351L338 351M338 351L346 351M346 351L354 351M354 351L362 351M370 351L378 351M282 393L290 393M290 393L298 393M306 393L314 393M314 393L322 393M322 393L330 393M330 393L338 393M346 393L354 393M354 393L362 393M370 393L378 393M338 351L338 357M338 363L338 369M338 375L338 381M338 381L338 387M338 387L338 393M338 399L338 405M346 309L346 315M346 315L346 321M346 321L346 327M346 333L346 339M370 345L370 351M370 357L370 363M370 363L370 369M370 369L370 375M370 375L370 381M370 381L370 387M370 387L370 393M370 399L370 405"/><path stroke="#e02020" d="M282 357L290 357M290 357L298 357M298 357L306 357M306 387L314 387M314 387L322 387M322 387L330 387M330 387L338 387M338 387L346 387"/><path fill="#ffffff" d="M328 326h2v2h-2zM336 326h2v2h-2zM328 344h2v2h-2zM328 350h2v2h-2zM336 350h2v2h-2zM320 356h2v2h-2zM336 356h2v2h-2zM336 362h2v2h-2zM320 368h2v2h-2zM328 368h2v2h-2zM336 368h2v2h-2zM328 374h2v2h-2zM320 338h2v2h-2zM320 350h2v2h-2zM320 356h2v2h-2zM320 362h2v2h-2zM320 368h2v2h-2zM320 374h2v2h-2zM328 326h2v2h-2zM328 338h2v2h-2zM328 362h2v2h-2zM328 368h2v2h-2zM336 326h2v2h-2zM336 362h2v2h-2z"/></g><g clip-path="url(#c16)" stroke-width="1.3" fill="none"><path stroke="#1a1ab4" d="M235 472L239 466M239 466L242 460M242 460L246 454M246 454L249 448M256 436L260 430M260 430L263 424M267 417L270 411M270 411L274 405M281 393L284 387M284 387L288 381M247 463L251 457M254 451L258 445M258 445L261 439M261 439L265 433M265 433L268 426M268 426L272 420M275 414L279 408M282 402L286 396M286 396L289 390M293 384L296 378M246 478L249 472M249 472L253 466M253 466L256 460M256 460L260 454M260 454L263 448M267 442L270 436M277 423L281 417M281 417L284 411M291 399L295 393M251 481L254 475M254 475L258 469M258 469L261 463M261 463L265 457M265 457L268 451M268 451L272 445M272 445L275 439M282 426L286 420M289 414L293 408M293 408L296 402M296 402L300 396M300 396L303 390M261 487L265 481M265 481L268 475M272 469L275 463M279 457L282 451M282 451L286 445M289 438L293 432M293 432L296 426M300 420L303 414M303 414L307 408M314 396L317 390M282 475L286 469M289 463L293 457M293 457L296 451M296 451L300 444M300 444L303 438M303 438L307 432M317 414L321 408M277 496L280 490M280 490L284 484M291 472L294 466M298 460L301 454M301 454L305 448M308 441L312 435M319 423L322 417M322 417L326 411M326 411L329 405M324 426L328 420M328 420L331 414M331 414L334 408M334 408L338 402M338 426L341 420M341 420L345 414M303 511L306 505M306 505L310 499M310 499L313 493M313 493L317 487M320 481L324 475M327 469L331 462M331 462L334 456M338 450L341 444M341 444L345 438M348 432L352 426M352 426L355 420M355 420L359 414M308 514L311 508M311 508L315 502M315 502L318 496M318 496L322 490M322 490L325 484M325 484L329 478M332 472L336 466M313 517L317 511M320 505L324 499M327 493L331 487M331 487L334 481M338 475L341 468M345 462L348 456M348 456L352 450M352 450L355 444M355 444L359 438M359 438L362 432M362 432L366 426M339 484L343 478M353 459L357 453M360 447L364 441M364 441L367 435M367 435L371 429M327 517L331 511M331 511L334 505M334 505L338 499M338 499L341 493M341 493L345 487M345 487L348 481M348 481L352 474M355 468L359 462M359 462L362 456M362 456L366 450M369 444L373 438M373 438L376 432M235 472L240 475M240 475L246 478M251 481L256 484M256 484L261 487M261 487L266 490M266 490L272 493M272 493L277 496M277 496L282 499M282 499L287 502M287 502L292 505M292 505L298 508M298 508L303 511M303 511L308 514M308 514L313 517M313 517L318 520M318 520L324 523M239 466L244 469M244 469L249 472M249 472L254 475M260 478L265 481M275 487L280 490M280 490L286 493M296 499L301 502M301 502L306 505M311 508L317 511M317 511L322 514M322 514L327 517M242 460L247 463M253 466L258 469M258 469L263 472M263 472L268 475M268 475L273 478M273 478L279 481M284 484L289 487M310 499L315 502M315 502L320 505M320 505L325 508M331 511L336 514M249 448L254 451M254 451L260 454M260 454L265 457M275 463L280 466M280 466L286 469M286 469L291 472M291 472L296 475M306 481L312 484M312 484L317 487M317 487L322 490M322 490L327 493M327 493L332 496M332 496L338 499M258 445L263 448M268 451L274 454M274 454L279 457M279 457L284 460M284 460L289 463M289 463L294 466M300 469L305 472M315 478L320 481M320 481L325 484M325 484L331 487M341 493L346 496M256 436L261 439M261 439L267 442M267 442L272 445M272 445L277 448M277 448L282 451M287 454L293 457M293 457L298 460M298 460L303 463M313 469L319 472M319 472L324 475M324 475L329 478M329 478L334 481M339 484L345 487M345 487L350 490M260 430L265 433M265 433L270 436M270 436L275 439M275 439L281 442M281 442L286 445M291 448L296 451M296 451L301 454M301 454L306 457M281 417L286 420M286 420L291 423M296 426L301 429M307 432L312 435M317 438L322 441M322 441L327 444M338 450L343 453M343 453L348 456M348 456L353 459M353 459L359 462M359 462L364 465M274 405L279 408M279 408L284 411M289 414L295 417M295 417L300 420M300 420L305 423M315 429L320 432M326 435L331 438M331 438L336 441M336 441L341 444M346 447L352 450M362 456L367 459M303 414L308 417M314 420L319 423M319 423L324 426M329 429L334 432M345 438L350 441M360 447L366 450M281 393L286 396M286 396L291 399M291 399L296 402M302 405L307 408M312 411L317 414M317 414L322 417M322 417L328 420M328 420L333 423M333 423L338 426M338 426L343 429M343 429L348 432M353 435L359 438M359 438L364 441M364 441L369 444M284 387L289 390M289 390L295 393M295 393L300 396M300 396L305 399M305 399L310 402M321 408L326 411M326 411L331 414M331 414L336 417M336 417L341 420M347 423L352 426M352 426L357 429M362 432L367 435M367 435L373 438M373 438L378 441M319 399L324 402M334 408L340 411M340 411L345 414M345 414L350 417M355 420L360 423M360 423L366 426M291 375L296 378M296 378L302 381M302 381L307 384M312 387L317 390M317 390L322 393M322 393L328 396M328 396L333 399M333 399L338 402M338 402L343 405M343 405L348 408M348 408L354 411M359 414L364 417M364 417L369 420M374 423L380 426M380 426L385 429"/><path stroke="#e0e040" d="M256 484L260 478M274 454L277 448M281 442L284 436M284 436L288 429M291 423L295 417M295 417L298 411M298 411L302 405M302 405L305 399M287 502L291 496M298 484L301 478M305 472L308 466M308 466L312 460M336 466L339 459M339 459L343 453M346 447L350 441M353 435L357 429M357 429L360 423M360 423L364 417"/><path stroke="#40e040" d="M266 490L270 484M273 478L277 472M277 472L280 466M280 466L284 460M284 460L287 454M287 454L291 448M294 442L298 435M298 435L301 429M301 429L305 423M305 423L308 417M308 417L312 411M315 454L319 447M319 447L322 441M322 441L326 435M333 423L336 417M336 417L340 411M340 411L343 405M381 435L385 429M282 402L288 405M293 408L298 411M298 411L303 414M288 381L293 384M309 393L314 396M314 396L319 399"/><path stroke="#e02020" d="M282 499L286 493M286 493L289 487M300 469L303 463M303 463L306 457M310 450L314 444M314 444L317 438M320 432L324 426M298 508L301 502M301 502L305 496M308 490L312 484M312 484L315 478M315 478L319 472M319 472L322 466M322 466L326 460M329 453L333 447M336 441L340 435M340 435L343 429M350 417L354 411M246 454L251 457M251 457L256 460M256 460L261 463M261 463L267 466M272 469L277 472M306 457L312 460M327 469L332 472M338 475L343 478M348 481L353 484"/><path stroke="#40e0e0" d="M292 505L296 499M296 499L299 493M299 493L303 487M306 481L310 475M310 475L313 469M313 469L317 463M331 438L334 432M334 432L338 426M329 526L332 520M336 514L339 508M343 502L346 496M350 490L353 484M353 484L357 478M371 453L374 447M374 447L378 441M277 472L282 475M282 475L287 478M292 481L298 484M298 484L303 487M303 487L308 490M313 493L318 496M318 496L324 499M324 499L329 502M329 502L334 505M334 505L339 508M338 499L343 502M376 432L381 435"/><path stroke="#c040c0" d="M318 520L322 514M325 508L329 502M329 502L332 496M332 496L336 490M336 490L339 484M263 424L268 426M268 426L274 430M274 430L279 432M279 432L284 436M289 438L294 442M294 442L300 444M310 450L315 454M315 454L320 456M326 460L331 462M267 417L272 420M277 423L282 426M282 426L288 429M288 429L293 432M303 438L308 441M308 441L314 444M314 444L319 447M319 447L324 450M324 450L329 453M329 453L334 456M339 459L345 462M345 462L350 465"/><path stroke="#f0f0f0" d="M357 478L360 471M364 465L367 459M331 462L336 466M336 466L341 468M341 468L346 472M352 474L357 478"/><path fill="#ffffff" d="M294 416h2v2h-2zM288 438h2v2h-2zM299 419h2v2h-2zM293 440h2v2h-2zM297 434h2v2h-2zM300 428h2v2h-2zM307 416h2v2h-2zM299 444h2v2h-2zM302 437h2v2h-2zM290 471h2v2h-2zM297 459h2v2h-2zM307 440h2v2h-2zM318 422h2v2h-2zM321 416h2v2h-2zM298 468h2v2h-2zM326 419h2v2h-2zM297 483h2v2h-2zM304 471h2v2h-2zM307 465h2v2h-2zM332 422h2v2h-2zM305 480h2v2h-2zM309 474h2v2h-2zM330 437h2v2h-2zM324 483h2v2h-2zM331 471h2v2h-2zM297 483h2v2h-2zM290 471h2v2h-2zM311 483h2v2h-2zM288 462h2v2h-2zM298 468h2v2h-2zM319 480h2v2h-2zM286 453h2v2h-2zM297 459h2v2h-2zM323 474h2v2h-2zM328 477h2v2h-2zM290 447h2v2h-2zM295 450h2v2h-2zM300 453h2v2h-2zM306 456h2v2h-2zM293 440h2v2h-2zM309 450h2v2h-2zM330 462h2v2h-2zM312 443h2v2h-2zM323 449h2v2h-2zM306 431h2v2h-2zM316 437h2v2h-2zM294 416h2v2h-2zM299 419h2v2h-2zM325 434h2v2h-2zM330 437h2v2h-2zM313 419h2v2h-2zM328 428h2v2h-2z"/></g><g clip-path="url(#c17)" stroke-width="1.3" fill="none"><path stroke="#1a1ab4" d="M358 568L365 569M372 570L379 571M379 571L385 573M385 573L392 574M392 574L399 575M399 575L406 576M406 576L413 577M413 577L420 579M420 579L427 580M364 575L371 576M371 576L377 577M404 588L411 589M411 589L418 590M425 592L432 593M432 593L438 594M355 585L362 587M375 589L382 590M382 590L389 591M396 593L403 594M403 594L410 595M431 599L437 600M415 608L422 609M422 609L428 611M428 611L435 612M352 603L358 604M358 604L365 606M372 607L379 608M386 609L393 610M400 612L407 613M407 613L414 614M414 614L421 615M421 615L427 616M427 616L434 618M351 609L357 610M364 611L371 613M371 613L378 614M378 614L385 615M399 618L406 619M406 619L413 620M413 620L419 621M426 622L433 624M350 615L356 616M356 616L363 617M370 619L377 620M377 620L384 621M384 621L391 622M391 622L398 623M412 626L418 627M425 628L432 630M355 622L362 623M362 623L369 624M369 624L376 626M390 628L397 629M417 633L424 634M424 634L431 635M345 639L352 640M366 642L373 643M380 645L387 646M360 556L359 562M359 562L358 568M356 579L355 585M355 585L354 591M354 591L353 597M352 603L351 609M351 609L350 615M350 615L348 621M348 621L347 627M347 627L346 633M346 633L345 639M367 557L366 563M364 575L363 581M363 581L362 587M362 587L361 593M360 598L358 604M357 610L356 616M354 628L353 634M374 558L373 564M373 564L372 570M371 576L370 582M370 582L369 588M369 588L367 594M367 594L366 600M365 606L364 611M362 623L361 629M361 629L360 635M360 635L359 641M381 559L380 565M380 565L379 571M377 577L376 583M376 583L375 589M375 589L374 595M374 595L373 601M370 619L369 624M368 630L367 636M367 636L366 642M406 576L405 582M405 582L404 588M403 594L402 600M402 600L401 606M400 612L399 618M399 618L398 623M398 623L397 629M396 635L395 641M395 641L394 647M415 566L414 571M412 583L411 589M411 589L410 595M410 595L409 601M404 631L403 636M403 636L402 642M402 642L400 648M429 568L428 574M427 580L426 586M426 586L425 592M425 592L424 598M424 598L423 603M423 603L422 609M422 609L421 615M421 615L419 621M419 621L418 627M418 627L417 633M417 633L416 639M416 639L415 645M436 569L435 575M435 575L434 581M433 587L432 593M431 599L430 605M430 605L428 611M443 570L442 576M442 576L441 582M441 582L440 588M440 588L438 594M437 600L436 606M433 624L432 630M432 630L431 635M429 647L428 653"/><path stroke="#40e0e0" d="M360 556L367 557M367 557L374 558M359 562L366 563M366 563L373 564M373 564L380 565M393 568L400 569M400 569L407 570M407 570L414 571M421 573L428 574M428 574L435 575M419 585L426 586M426 586L433 587M433 587L440 588M370 582L376 583M397 587L404 588M400 569L399 575M399 575L398 581M398 581L397 587M396 593L395 599M395 599L394 604M391 622L390 628M390 628L389 634M389 634L388 640"/><path stroke="#f0f0f0" d="M394 562L401 563M401 563L408 564M377 577L384 578M391 580L398 581M398 581L405 582M405 582L412 583M412 583L419 585M354 591L361 593M367 594L374 595M395 599L402 600M409 601L416 602M423 603L430 605M419 585L418 590M418 590L417 596M417 596L416 602M416 602L415 608M414 614L413 620M413 620L412 626M411 632L409 638M408 644L407 650"/><path stroke="#c040c0" d="M436 569L443 570M353 597L360 598M360 598L366 600M366 600L373 601M373 601L380 602M380 602L387 603M394 604L401 606M408 607L415 608M347 627L354 628M368 630L375 632M382 633L389 634M346 633L353 634M353 634L360 635M374 638L381 639M381 639L388 640M388 640L395 641M402 642L408 644M387 646L394 647M394 647L400 648M400 648L407 650M414 651L421 652M421 652L428 653M384 578L383 584M383 584L382 590M382 590L381 596M380 602L379 608M379 608L378 614M378 614L377 620M377 620L376 626M376 626L375 632M374 638L373 643M394 562L393 568M389 591L388 597M388 597L387 603M387 603L386 609M386 609L385 615M385 615L384 621M383 627L382 633M406 619L405 625M405 625L404 631"/><path fill="#ffffff" d="M411 582h2v2h-2zM396 586h2v2h-2zM403 587h2v2h-2zM381 589h2v2h-2zM394 598h2v2h-2zM408 600h2v2h-2zM393 604h2v2h-2zM407 606h2v2h-2zM399 611h2v2h-2zM405 618h2v2h-2zM390 621h2v2h-2zM411 625h2v2h-2zM375 582h2v2h-2zM382 583h2v2h-2zM378 607h2v2h-2zM377 613h2v2h-2zM376 619h2v2h-2zM386 602h2v2h-2zM385 608h2v2h-2zM384 614h2v2h-2zM395 592h2v2h-2zM401 599h2v2h-2zM398 617h2v2h-2zM397 622h2v2h-2zM411 582h2v2h-2zM410 588h2v2h-2zM405 618h2v2h-2zM404 624h2v2h-2z"/></g><g clip-path="url(#c18)" stroke-width="1.3" fill="none"><path stroke="#1a1ab4" d="M294 580L302 580M308 580L316 580M322 580L330 580M344 580L350 580M350 580L358 580M358 580L364 580M302 586L308 586M308 586L316 586M316 586L322 586M322 586L330 586M330 586L336 586M336 586L344 586M344 586L350 586M350 586L358 586M358 586L364 586M294 592L302 592M302 592L308 592M308 592L316 592M316 592L322 592M330 592L336 592M336 592L344 592M344 592L350 592M350 592L358 592M358 592L364 592M294 598L302 598M308 598L316 598M294 610L302 610M316 610L322 610M322 610L330 610M330 610L336 610M358 610L364 610M308 622L316 622M330 622L336 622M344 622L350 622M294 628L302 628M308 628L316 628M322 628L330 628M330 628L336 628M336 628L344 628M344 628L350 628M350 628L358 628M358 628L364 628M294 652L302 652M308 652L316 652M316 652L322 652M322 652L330 652M330 652L336 652M336 652L344 652M358 652L364 652M294 580L294 586M294 586L294 592M294 592L294 598M294 598L294 604M294 604L294 610M294 610L294 616M294 622L294 628M294 628L294 634M302 580L302 586M302 586L302 592M302 598L302 604M302 610L302 616M302 622L302 628M308 586L308 592M308 604L308 610M308 610L308 616M308 628L308 634M308 634L308 640M308 640L308 646M308 646L308 652M330 586L330 592M330 610L330 616M330 616L330 622M330 622L330 628M330 628L330 634M330 634L330 640M330 640L330 646M336 586L336 592M336 598L336 604M336 628L336 634M336 640L336 646M336 646L336 652M344 580L344 586M344 586L344 592M344 592L344 598M344 598L344 604M344 604L344 610M344 616L344 622M344 634L344 640M344 640L344 646M344 646L344 652M350 616L350 622M350 628L350 634M350 634L350 640M358 598L358 604M358 616L358 622M358 622L358 628M358 628L358 634M358 634L358 640M358 646L358 652M364 640L364 646"/><path stroke="#40e0e0" d="M330 598L336 598M336 598L344 598M344 598L350 598M358 598L364 598M308 616L316 616M330 616L336 616M358 616L364 616M302 646L308 646M308 646L316 646M316 646L322 646M322 646L330 646M330 646L336 646M336 646L344 646M344 646L350 646M358 646L364 646M322 598L322 604M322 604L322 610M322 610L322 616M322 616L322 622M322 622L322 628M322 628L322 634M322 634L322 640M322 640L322 646M322 646L322 652"/><path stroke="#c040c0" d="M294 604L302 604M308 604L316 604M316 604L322 604M322 604L330 604M336 604L344 604M344 604L350 604M350 604L358 604M358 604L364 604M294 634L302 634M302 634L308 634M308 634L316 634M316 634L322 634M322 634L330 634M350 634L358 634M308 640L316 640M322 640L330 640M336 640L344 640M316 580L316 586M316 586L316 592M316 592L316 598M316 622L316 628M316 634L316 640M350 586L350 592M350 592L350 598M350 604L350 610M350 610L350 616M364 586L364 592M364 592L364 598M364 604L364 610M364 610L364 616M364 616L364 622M364 634L364 640"/><path stroke="#f0f0f0" d="M358 592L358 598"/><path fill="#ffffff" d="M322 610h2v2h-2zM328 610h2v2h-2zM328 616h2v2h-2zM342 622h2v2h-2zM322 628h2v2h-2zM336 628h2v2h-2zM314 622h2v2h-2zM322 628h2v2h-2zM328 610h2v2h-2zM328 616h2v2h-2zM328 622h2v2h-2z"/></g><g clip-path="url(#c19)" stroke-width="1.3" fill="none"><path stroke="#1a1ab4" d="M277 624L284 624M305 624L312 624M312 624L319 624M319 624L326 624M326 624L333 624M284 630L291 630M291 630L298 630M298 630L305 630M305 630L312 630M319 630L326 630M326 630L333 630M277 636L284 636M284 636L291 636M291 636L298 636M298 636L305 636M312 636L319 636M312 642L319 642M284 648L291 648M291 648L298 648M298 648L305 648M305 648L312 648M312 648L319 648M284 654L291 654M291 654L298 654M298 654L305 654M312 654L319 654M284 660L291 660M298 660L305 660M326 660L333 660M284 666L291 666M291 666L298 666M298 666L305 666M305 666L312 666M312 666L319 666M319 666L326 666M305 672L312 672M312 672L319 672M319 672L326 672M326 672L333 672M277 630L277 636M277 636L277 642M277 642L277 648M277 648L277 654M277 654L277 660M277 666L277 672M291 624L291 630M291 630L291 636M291 642L291 648M291 666L291 672M298 636L298 642M298 648L298 654M298 660L298 666M305 624L305 630M305 630L305 636M305 636L305 642M305 648L305 654M305 654L305 660M305 660L305 666M312 624L312 630M312 630L312 636M312 642L312 648M312 654L312 660M312 660L312 666M319 630L319 636M319 636L319 642M319 642L319 648M319 648L319 654M319 660L319 666M326 624L326 630M326 642L326 648M326 648L326 654M333 630L333 636M333 636L333 642M333 642L333 648M333 648L333 654M333 660L333 666"/><path stroke="#40e0e0" d="M277 642L284 642M284 642L291 642M291 642L298 642M284 624L284 630M284 648L284 654M298 624L298 630M298 630L298 636"/><path fill="#ffffff" d="M297 646h2v2h-2zM304 646h2v2h-2zM297 652h2v2h-2zM311 652h2v2h-2zM304 646h2v2h-2zM311 640h2v2h-2zM311 652h2v2h-2z"/></g><g clip-path="url(#c20)" stroke-width="1.3" fill="none"><path stroke="#1a1ab4" d="M276 708L284 708M308 708L316 708M316 708L324 708M340 708L348 708M260 714L268 714M276 714L284 714M292 714L300 714M332 714L340 714M268 720L276 720M300 720L308 720M332 720L340 720M260 726L268 726M268 726L276 726M284 726L292 726M300 726L308 726M308 726L316 726M316 726L324 726M324 726L332 726M268 738L276 738M276 738L284 738M316 738L324 738M268 750L276 750M276 750L284 750M324 750L332 750M348 750L356 750M260 762L268 762M268 762L276 762M276 762L284 762M292 762L300 762M300 762L308 762M316 762L324 762M324 762L332 762M260 768L268 768M284 768L292 768M308 768L316 768M332 768L340 768M260 774L268 774M276 774L284 774M284 774L292 774M308 774L316 774M332 774L340 774M268 780L276 780M284 780L292 780M292 780L300 780M316 780L324 780M340 780L348 780M268 786L276 786M292 786L300 786M308 786L316 786M348 786L356 786M268 792L276 792M308 792L316 792M316 792L324 792M324 792L332 792M332 792L340 792M340 792L348 792M260 708L260 714M260 726L260 732M260 732L260 738M260 762L260 768M260 774L260 780M260 780L260 786M268 708L268 714M268 720L268 726M268 738L268 744M268 762L268 768M268 774L268 780M268 786L268 792M276 714L276 720M276 720L276 726M276 738L276 744M276 762L276 768M276 768L276 774M276 774L276 780M276 786L276 792M284 726L284 732M284 768L284 774M284 774L284 780M292 732L292 738M292 756L292 762M292 774L292 780M292 786L292 792M300 714L300 720M300 720L300 726M300 732L300 738M300 738L300 744M300 744L300 750M300 750L300 756M300 756L300 762M300 762L300 768M300 780L300 786M300 786L300 792M316 720L316 726M316 726L316 732M316 738L316 744M316 756L316 762M316 762L316 768M316 768L316 774M316 774L316 780M316 780L316 786M324 768L324 774M324 780L324 786M332 708L332 714M332 720L332 726M332 726L332 732M332 738L332 744M332 750L332 756M332 756L332 762M332 762L332 768M340 708L340 714M340 714L340 720M340 720L340 726M340 738L340 744M340 744L340 750M340 750L340 756M340 762L340 768M340 774L340 780M340 780L340 786M348 708L348 714M348 714L348 720M348 726L348 732M348 732L348 738M348 744L348 750M348 756L348 762M348 762L348 768M348 768L348 774M348 774L348 780M356 714L356 720M356 726L356 732M356 732L356 738M356 744L356 750M356 756L356 762M356 762L356 768M356 768L356 774M356 780L356 786M356 786L356 792"/><path stroke="#e0e040" d="M348 726L356 726M268 744L276 744M276 744L284 744M284 744L292 744M300 744L308 744M308 744L316 744"/><path stroke="#40e040" d="M260 732L268 732M284 732L292 732M292 732L300 732M300 732L308 732M316 732L324 732M340 732L348 732M348 732L356 732M308 708L308 714M308 714L308 720M308 726L308 732M308 780L308 786M308 786L308 792M324 708L324 714M324 714L324 720M324 720L324 726M324 732L324 738M324 744L324 750M324 750L324 756M324 756L324 762"/><path stroke="#40e0e0" d="M260 750L268 750M260 756L268 756M316 756L324 756M324 756L332 756M348 756L356 756"/><path stroke="#e02020" d="M292 720L292 726M292 726L292 732"/><path fill="#ffffff" d="M315 738h2v2h-2zM323 750h2v2h-2zM315 756h2v2h-2zM323 756h2v2h-2zM299 762h2v2h-2zM315 762h2v2h-2zM323 762h2v2h-2zM307 768h2v2h-2zM291 756h2v2h-2zM299 738h2v2h-2zM299 750h2v2h-2zM315 768h2v2h-2zM323 744h2v2h-2zM323 750h2v2h-2zM323 768h2v2h-2z"/></g><g clip-path="url(#c21)" stroke-width="1.3" fill="none"><path stroke="#1a1ab4" d="M486 642L492 642M498 642L504 642M510 642L516 642M522 642L528 642M528 642L534 642M534 642L540 642M540 642L546 642M486 648L492 648M492 648L498 648M504 648L510 648M516 648L522 648M528 648L534 648M534 648L540 648M540 648L546 648M498 652L504 652M510 652L516 652M516 652L522 652M522 652L528 652M528 652L534 652M534 652L540 652M540 652L546 652M498 658L504 658M510 658L516 658M516 658L522 658M522 658L528 658M528 658L534 658M534 658L540 658M504 662L510 662M510 662L516 662M516 662L522 662M522 662L528 662M534 662L540 662M540 662L546 662M486 668L492 668M498 668L504 668M504 668L510 668M510 668L516 668M522 668L528 668M528 668L534 668M486 672L492 672M492 672L498 672M498 672L504 672M504 672L510 672M510 672L516 672M516 672L522 672M522 672L528 672M534 672L540 672M486 678L492 678M510 678L516 678M516 678L522 678M522 678L528 678M540 678L546 678M486 682L492 682M492 682L498 682M504 682L510 682M510 682L516 682M516 682L522 682M528 682L534 682M534 682L540 682M498 688L504 688M516 688L522 688M522 688L528 688M528 688L534 688M534 688L540 688M486 692L492 692M492 692L498 692M504 692L510 692M528 692L534 692M486 642L486 648M486 648L486 652M486 652L486 658M486 658L486 662M486 662L486 668M486 668L486 672M486 672L486 678M486 678L486 682M486 688L486 692M492 648L492 652M492 652L492 658M492 658L492 662M492 662L492 668M492 678L492 682M492 682L492 688M492 688L492 692M498 642L498 648M498 648L498 652M498 652L498 658M498 658L498 662M498 662L498 668M498 668L498 672M498 678L498 682M504 642L504 648M504 652L504 658M504 658L504 662M504 662L504 668M504 668L504 672M504 678L504 682M504 682L504 688M516 642L516 648M516 662L516 668M516 668L516 672M516 672L516 678M522 648L522 652M522 658L522 662M522 662L522 668M522 668L522 672M522 672L522 678M522 678L522 682M522 682L522 688M522 688L522 692M528 658L528 662M528 668L528 672M528 672L528 678M528 682L528 688M528 688L528 692M534 642L534 648M534 648L534 652M534 652L534 658M534 658L534 662M534 672L534 678M534 678L534 682M540 642L540 648M540 648L540 652M540 652L540 658M540 658L540 662M540 668L540 672M540 672L540 678M540 678L540 682M540 682L540 688M540 688L540 692M546 642L546 648M546 648L546 652M546 662L546 668M546 668L546 672M546 672L546 678M546 678L546 682M546 682L546 688M546 688L546 692"/><path stroke="#c040c0" d="M534 692L540 692M540 692L546 692M504 688L504 692M510 648L510 652M510 652L510 658M510 662L510 668M510 668L510 672M510 672L510 678M510 682L510 688"/><path fill="#ffffff" d="M510 656h2v2h-2zM516 656h2v2h-2zM516 662h2v2h-2zM522 662h2v2h-2zM510 672h2v2h-2zM516 672h2v2h-2zM510 676h2v2h-2zM516 676h2v2h-2zM510 662h2v2h-2zM510 666h2v2h-2zM510 672h2v2h-2zM516 662h2v2h-2zM522 656h2v2h-2zM522 662h2v2h-2zM522 672h2v2h-2zM522 676h2v2h-2z"/></g><polyline points="456.0,126.0 456.0,176.0" fill="none" stroke="#e0e040" stroke-width="1.3" stroke-opacity="1"/><polyline points="482.0,134.0 482.0,270.0" fill="none" stroke="#f0f0f0" stroke-width="1.1" stroke-opacity="1"/><polyline points="456.0,144.6 511.0,144.6" fill="none" stroke="#1a1ab4" stroke-width="1.1" stroke-opacity="1"/><polyline points="456.0,155.0 511.0,155.0" fill="none" stroke="#1a1ab4" stroke-width="1.1" stroke-opacity="1"/><polyline points="456.0,165.6 511.0,165.6" fill="none" stroke="#1a1ab4" stroke-width="1.1" stroke-opacity="1"/><polyline points="456.0,176.0 511.0,176.0" fill="none" stroke="#1a1ab4" stroke-width="1.1" stroke-opacity="1"/><polyline points="440.0,188.0 532.0,188.0" fill="none" stroke="#1a1ab4" stroke-width="1.1" stroke-opacity="1"/><polyline points="440.0,199.8 532.0,199.8" fill="none" stroke="#1a1ab4" stroke-width="1.1" stroke-opacity="1"/><polyline points="440.0,210.0 532.0,210.0" fill="none" stroke="#1a1ab4" stroke-width="1.1" stroke-opacity="1"/><polyline points="440.0,221.0 532.0,221.0" fill="none" stroke="#1a1ab4" stroke-width="1.1" stroke-opacity="1"/><polyline points="440.0,231.0 532.0,231.0" fill="none" stroke="#1a1ab4" stroke-width="1.1" stroke-opacity="1"/><polyline points="440.0,242.0 532.0,242.0" fill="none" stroke="#1a1ab4" stroke-width="1.1" stroke-opacity="1"/><polyline points="440.0,252.0 532.0,252.0" fill="none" stroke="#1a1ab4" stroke-width="1.1" stroke-opacity="1"/><polyline points="532.0,199.0 532.0,234.0 524.0,270.0" fill="none" stroke="#1a1ab4" stroke-width="1.1" stroke-opacity="1"/><polyline points="440.0,188.0 482.0,188.0" fill="none" stroke="#f0f0f0" stroke-width="1.0" stroke-opacity="1"/><polyline points="381.0,145.0 393.0,151.0 430.0,181.0 440.0,187.0 453.0,176.0 456.0,147.0" fill="none" stroke="#e02020" stroke-width="1.3" stroke-opacity="1"/><polyline points="381.0,145.0 369.0,190.0 349.0,247.0 326.0,296.0 322.0,305.0 326.0,322.0 318.0,324.0 317.0,340.0 305.0,363.0 301.0,370.0 295.0,418.0 290.0,441.0 318.0,448.0 289.0,451.0 272.0,463.0 256.0,483.0 244.0,502.0 217.0,503.0 213.0,506.0 193.0,526.0 191.0,530.0 196.0,537.0 217.0,554.0 222.0,559.0 208.0,571.0 196.0,590.0 193.0,607.0 186.0,630.0 175.0,670.0 169.0,691.0" fill="none" stroke="#e02020" stroke-width="1.4" stroke-opacity="1"/><polyline points="385.0,150.0 373.0,195.0 356.0,240.0" fill="none" stroke="#e02020" stroke-width="1.0" stroke-opacity="1"/><polyline points="440.0,187.0 440.0,218.0 409.0,229.0 385.0,245.0" fill="none" stroke="#e02020" stroke-width="1.0" stroke-opacity="1"/><polyline points="482.0,255.0 540.0,258.0" fill="none" stroke="#e02020" stroke-width="1.3" stroke-opacity="1"/><polyline points="594.0,76.0 583.0,104.0 575.0,124.0 563.0,139.0 561.0,155.0 567.0,179.0 573.0,218.0 569.0,256.0 547.0,256.0 520.0,256.0 500.0,256.0" fill="none" stroke="#e02020" stroke-width="1.4" stroke-opacity="1"/><polyline points="577.0,155.0 591.0,135.0 606.0,132.0 630.0,139.0 650.0,157.0 670.0,149.0" fill="none" stroke="#2424d0" stroke-width="1.2" stroke-opacity="1"/><polyline points="646.0,120.0 648.0,143.0 666.0,137.0" fill="none" stroke="#40e040" stroke-width="1.3" stroke-opacity="1"/><polyline points="573.0,218.0 593.0,242.0 603.0,266.0 614.0,319.0 630.0,337.0 658.0,370.0 689.0,364.0" fill="none" stroke="#2424d0" stroke-width="1.2" stroke-opacity="1"/><polyline points="571.0,258.0 583.0,313.0 585.0,430.0" fill="none" stroke="#40e0e0" stroke-width="1.2" stroke-opacity="1"/><polyline points="578.0,255.0 590.0,320.0 592.0,430.0" fill="none" stroke="#2424d0" stroke-width="1.0" stroke-opacity="1"/><polyline points="530.0,315.0 551.0,321.0 565.0,315.0" fill="none" stroke="#e02020" stroke-width="1.3" stroke-opacity="1"/><polyline points="569.0,289.0 565.0,315.0" fill="none" stroke="#40e040" stroke-width="1.3" stroke-opacity="1"/><polyline points="560.0,350.0 575.0,350.0" fill="none" stroke="#2424d0" stroke-width="1.3" stroke-opacity="1"/><polyline points="585.0,380.0 600.0,380.0" fill="none" stroke="#2424d0" stroke-width="1.3" stroke-opacity="1"/><polyline points="310.0,316.0 380.0,350.0 460.0,400.0 520.0,440.0 558.0,455.0" fill="none" stroke="#e02020" stroke-width="1.1" stroke-opacity="1"/><polyline points="337.0,576.0 440.0,473.0 470.0,445.0" fill="none" stroke="#e02020" stroke-width="1.2" stroke-opacity="1"/><polyline points="420.0,462.0 470.0,440.0 535.0,420.0" fill="none" stroke="#e0e040" stroke-width="1.0" stroke-opacity="1"/><polyline points="462.0,470.0 457.0,547.0 452.0,597.0 444.0,636.0 463.0,639.0" fill="none" stroke="#e02020" stroke-width="1.1" stroke-opacity="1"/><polyline points="492.0,440.0 484.0,540.0 473.0,616.0 467.0,639.0 463.0,658.0 455.0,700.0 449.0,725.0 452.0,837.0" fill="none" stroke="#e02020" stroke-width="1.6" stroke-opacity="1"/><polyline points="520.0,470.0 511.0,540.0 511.0,578.0 507.0,630.0 499.0,700.0 492.0,739.0" fill="none" stroke="#e02020" stroke-width="1.1" stroke-opacity="1"/><polyline points="476.0,593.0 515.0,584.0 538.0,593.0" fill="none" stroke="#e02020" stroke-width="1.3" stroke-opacity="1"/><polyline points="340.0,606.0 411.0,613.0 476.0,593.0" fill="none" stroke="#2424d0" stroke-width="1.3" stroke-opacity="1"/><polyline points="440.0,624.0 507.0,626.0" fill="none" stroke="#40e0e0" stroke-width="1.3" stroke-opacity="1"/><polyline points="440.0,705.0 500.0,700.0" fill="none" stroke="#2424d0" stroke-width="1.3" stroke-opacity="1"/><polyline points="240.0,345.0 257.0,341.0 260.0,357.0 276.0,363.0" fill="none" stroke="#2424d0" stroke-width="1.3" stroke-opacity="1"/><polyline points="276.0,363.0 301.0,363.0 310.0,356.0" fill="none" stroke="#e0e040" stroke-width="1.3" stroke-opacity="1"/><polyline points="386.0,696.0 459.0,692.0" fill="none" stroke="#e0e040" stroke-width="1.1" stroke-opacity="1"/><polyline points="360.0,669.0 389.0,808.0 392.0,837.0" fill="none" stroke="#e02020" stroke-width="1.0" stroke-opacity="1"/><polyline points="310.0,775.0 333.0,837.0" fill="none" stroke="#40e0e0" stroke-width="1.0" stroke-opacity="1"/><polyline points="492.0,765.0 545.0,775.0" fill="none" stroke="#2424d0" stroke-width="1.3" stroke-opacity="1"/><polyline points="532.0,719.0 538.0,765.0" fill="none" stroke="#2424d0" stroke-width="1.3" stroke-opacity="1"/><polyline points="612.0,5.0 600.0,40.0 585.0,60.0" fill="none" stroke="#40e0e0" stroke-width="1.0" stroke-opacity="1"/><polyline points="668.0,12.0 640.0,40.0 620.0,50.0" fill="none" stroke="#e0e040" stroke-width="1.0" stroke-opacity="1"/><polyline points="7.0,798.0 1.0,808.0 7.0,819.0" fill="none" stroke="#f0f0f0" stroke-width="1" stroke-opacity="1"/><g clip-path="url(#c22)" stroke-width="1.3" fill="none"><path stroke="#1a1ab4" d="M188 469L196 471M196 471L204 473M211 475L219 477M219 477L227 480M227 480L234 482M234 482L242 484M250 486L258 488M258 488L265 490M265 490L273 492M273 492L281 494M187 475L194 477M194 477L202 479M217 483L225 485M233 487L241 490M241 490L248 492M256 494L264 496M264 496L272 498M272 498L279 500M200 485L208 487M208 487L216 489M216 489L224 491M224 491L231 493M231 493L239 495M247 497L254 499M183 487L191 489M191 489L199 491M199 491L207 493M207 493L214 495M214 495L222 497M222 497L230 499M230 499L237 501M237 501L245 503M245 503L253 505M253 505L261 507M261 507L268 509M268 509L276 511M205 499L213 501M213 501L220 503M220 503L228 505M228 505L236 507M236 507L244 509M244 509L251 511M180 498L188 500M188 500L196 502M196 502L203 504M211 506L219 509M219 509L227 511M234 513L242 515M242 515L250 517M265 521L273 523M179 504L186 506M186 506L194 508M194 508L202 510M202 510L210 512M210 512L217 514M217 514L225 516M225 516L233 518M248 523L256 525M256 525L264 527M185 512L193 514M193 514L200 516M200 516L208 518M208 518L216 520M216 520L224 522M224 522L231 524M231 524L239 526M247 528L254 530M191 520L199 522M222 528L230 530M230 530L237 532M237 532L245 534M245 534L253 536M261 538L268 540M205 530L213 532M213 532L220 534M220 534L228 536M228 536L236 538M236 538L244 540M251 542L259 544M171 533L179 535M194 539L202 541M202 541L210 543M217 545L225 547M225 547L233 550M233 550L241 552M248 554L256 556M256 556L264 558M169 539L177 541M177 541L185 543M185 543L193 545M193 545L200 547M200 547L208 549M208 549L216 551M231 555L239 557M239 557L247 559M247 559L254 562M168 545L176 547M183 549L191 551M191 551L199 553M199 553L207 555M207 555L214 557M214 557L222 559M222 559L230 561M237 563L245 565M253 567L261 569M174 552L182 554M182 554L190 557M190 557L197 559M197 559L205 561M205 561L213 563M228 567L236 569M236 569L244 571M244 571L251 573M165 556L172 558M172 558L180 560M180 560L188 562M188 562L196 564M196 564L203 566M203 566L211 569M219 571L227 573M227 573L234 575M234 575L242 577M242 577L250 579M250 579L257 581M163 562L171 564M171 564L179 566M194 570L202 572M217 576L225 579M248 585L256 587M187 475L185 481M183 487L182 492M182 492L180 498M180 498L179 504M179 504L177 510M177 510L176 516M176 516L174 521M174 521L173 527M169 539L168 545M168 545L166 550M196 471L194 477M193 483L191 489M191 489L190 494M190 494L188 500M188 500L186 506M186 506L185 512M185 512L183 518M183 518L182 523M182 523L180 529M180 529L179 535M179 535L177 541M177 541L176 547M176 547L174 552M174 552L172 558M172 558L171 564M204 473L202 479M202 479L200 485M200 485L199 491M199 491L197 497M197 497L196 502M196 502L194 508M194 508L193 514M191 520L190 526M190 526L188 531M188 531L186 537M185 543L183 549M183 549L182 554M180 560L179 566M210 481L208 487M208 487L207 493M205 499L203 504M203 504L202 510M202 510L200 516M197 528L196 533M196 533L194 539M194 539L193 545M191 551L190 557M190 557L188 562M188 562L186 568M217 483L216 489M216 489L214 495M214 495L213 501M213 501L211 506M211 506L210 512M208 518L207 524M205 530L203 535M202 541L200 547M197 559L196 564M196 564L194 570M225 485L224 491M222 497L220 503M220 503L219 509M216 520L214 526M214 526L213 532M211 538L210 543M210 543L208 549M207 555L205 561M205 561L203 566M203 566L202 572M211 569L210 574M242 484L241 490M250 486L248 492M247 497L245 503M242 515L241 521M241 521L239 526M239 526L237 532M237 532L236 538M236 538L234 544M234 544L233 550M233 550L231 555M231 555L230 561M230 561L228 567M228 567L227 573M227 573L225 579M256 494L254 499M254 499L253 505M250 517L248 523M248 523L247 528M262 502L261 507M270 504L268 509M268 509L267 515M265 521L264 527M261 538L259 544M256 556L254 562M254 562L253 567M250 579L248 585M281 494L279 500M275 517L273 523M273 523L271 529M271 529L270 535M270 535L268 540M268 540L267 546M262 564L261 569M261 569L259 575M259 575L257 581M257 581L256 587"/><path stroke="#e0e040" d="M174 521L182 523M182 523L190 526"/><path stroke="#e02020" d="M188 531L196 533M196 533L203 535M211 538L219 540M219 540L227 542M227 542L234 544M234 544L242 546M242 546L250 548M250 548L258 550"/><path stroke="#40e0e0" d="M166 550L165 556M241 490L239 495M237 501L236 507M236 507L234 513M234 513L233 518M233 518L231 524M231 524L230 530M230 530L228 536M228 536L227 542M227 542L225 547M224 553L222 559M220 565L219 571M219 571L217 576M244 540L242 546M242 546L241 552M241 552L239 557M237 563L236 569M236 569L234 575"/><path stroke="#40e040" d="M165 556L163 562M259 513L258 519M254 530L253 536M248 554L247 559M245 565L244 571M244 571L242 577M242 577L240 583"/><path stroke="#c040c0" d="M234 482L233 487M233 487L231 493M231 493L230 499M230 499L228 505M228 505L227 511M227 511L225 516M224 522L222 528M222 528L220 534M219 540L217 545"/><path fill="#ffffff" d="M227 504h2v2h-2zM235 506h2v2h-2zM218 508h2v2h-2zM224 515h2v2h-2zM207 517h2v2h-2zM221 527h2v2h-2zM204 529h2v2h-2zM212 531h2v2h-2zM210 537h2v2h-2zM218 539h2v2h-2zM226 541h2v2h-2zM216 544h2v2h-2zM210 505h2v2h-2zM207 517h2v2h-2zM204 529h2v2h-2zM215 519h2v2h-2zM213 525h2v2h-2zM210 537h2v2h-2zM227 504h2v2h-2zM221 527h2v2h-2zM218 539h2v2h-2zM235 506h2v2h-2zM233 512h2v2h-2zM230 523h2v2h-2zM238 525h2v2h-2zM236 531h2v2h-2zM235 537h2v2h-2z"/></g><g clip-path="url(#c23)" stroke-width="1.3" fill="none"><path stroke="#1a1ab4" d="M279 484L282 489M282 489L285 494M285 494L288 499M288 499L291 505M300 528L303 533M303 533L306 538M268 491L271 496M274 501L277 506M277 506L280 511M280 511L283 516M283 516L286 522M286 522L289 527M289 527L292 532M292 532L295 537M295 537L298 542M274 528L277 534M277 534L280 539M285 494L282 496M282 496L278 499M278 499L274 501M274 501L270 503M281 504L277 506M273 508L269 511M265 513L261 515M261 515L257 517M257 517L253 520M280 511L276 514M276 514L272 516M272 516L268 518M268 518L264 520M260 523L256 525M256 525L253 527M253 527L249 529M301 513L297 515M297 515L294 517M294 517L290 519M282 524L278 526M270 531L266 533M266 533L262 535M262 535L259 537M259 537L255 540M307 523L303 525M303 525L300 528M296 530L292 532M292 532L288 534M288 534L284 537M284 537L280 539M280 539L276 541M276 541L272 543M268 546L265 548M309 536L306 538M306 538L302 540"/><path stroke="#c040c0" d="M286 487L289 492M289 492L292 497M292 497L295 502M295 502L298 508M298 508L301 513M307 523L310 528M310 528L313 533M291 505L294 510M294 510L297 515M297 515L300 520M300 520L303 525M303 525L306 531M306 531L309 536M291 512L294 517M294 517L297 522M297 522L300 528M275 493L278 499M278 499L281 504M281 504L284 509M284 509L287 514M287 514L290 519M290 519L293 525M296 530L299 535M299 535L302 540M264 493L267 498M267 498L270 503M270 503L273 508M273 508L276 514M279 519L282 524M282 524L285 529M283 544L286 549M252 500L255 505M261 515L264 520M264 520L267 526M267 526L270 531M270 531L273 536M273 536L276 541M276 541L279 546M279 546L282 551M248 502L251 507M254 512L257 517M257 517L260 523M260 523L263 528M269 538L272 543M275 549L278 554M244 504L247 509M247 509L250 514M253 520L256 525M256 525L259 530M259 530L262 535M262 535L265 540M265 540L268 546M268 546L271 551M268 553L271 558M237 509L240 514M240 514L243 519M243 519L246 524M249 529L252 534M252 534L255 540M261 550L264 555M264 555L267 560M283 482L279 484M279 484L276 486M272 488L268 491M268 491L264 493M260 495L256 497M256 497L252 500M252 500L248 502M248 502L244 504M244 504L241 506M241 506L237 509M286 487L282 489M282 489L279 491M279 491L275 493M275 493L271 496M271 496L267 498M267 498L263 500M289 492L285 494M266 505L262 508M262 508L258 510M258 510L254 512M254 512L250 514M250 514L247 517M288 499L285 502M250 522L246 524M291 505L288 507M298 508L294 510M291 512L287 514M283 516L279 519M279 519L275 521M271 523L267 526M267 526L263 528M263 528L259 530M259 530L256 532M256 532L252 534M304 518L300 520M300 520L297 522M297 522L293 525M293 525L289 527M281 531L277 534M277 534L273 536M273 536L269 538M269 538L265 540M265 540L262 543M262 543L258 545M310 528L306 531M303 533L299 535M299 535L295 537M295 537L291 540M291 540L287 542M283 544L279 546M279 546L275 549M275 549L271 551M271 551L268 553M268 553L264 555M313 533L309 536M302 540L298 542M298 542L294 545M294 545L290 547M290 547L286 549M282 551L278 554M274 556L271 558M271 558L267 560"/><path stroke="#f0f0f0" d="M276 486L279 491M279 491L282 496M285 502L288 507M288 507L291 512M260 495L263 500M266 505L269 511M269 511L272 516M275 521L278 526M278 526L281 531M281 531L284 537M284 537L287 542M287 542L290 547M256 497L259 502M259 502L262 508M268 518L271 523M271 523L274 528M241 506L244 511M247 517L250 522M250 522L253 527M253 527L256 532M256 532L259 537M259 537L262 543M262 543L265 548M265 548L268 553M263 500L259 502M255 505L251 507M251 507L247 509M247 509L244 511M244 511L240 514M288 507L284 509"/><path fill="#ffffff" d="M283 508h2v2h-2zM286 513h2v2h-2zM282 516h2v2h-2zM285 521h2v2h-2zM268 510h2v2h-2zM274 520h2v2h-2zM280 530h2v2h-2zM263 519h2v2h-2zM266 524h2v2h-2zM269 530h2v2h-2zM264 512h2v2h-2zM275 513h2v2h-2zM267 517h2v2h-2zM282 516h2v2h-2zM278 518h2v2h-2zM270 522h2v2h-2zM266 524h2v2h-2zM281 523h2v2h-2z"/></g><g clip-path="url(#c24)" stroke-width="1.3" fill="none"><path stroke="#1a1ab4" d="M268 451L274 453M300 463L307 465M307 465L314 467M283 469L290 471M290 471L296 474M294 480L301 482M238 491L245 493M245 493L251 496M277 505L284 508M284 508L291 510M291 510L297 512M297 512L304 515M236 497L242 499M242 499L249 501M249 501L256 504M275 511L282 513M289 516L295 518M261 448L259 454M255 465L253 471M253 471L251 476M251 476L249 482M265 456L263 462M255 484L253 490M251 496L249 501M249 501L247 507M270 464L268 470M268 470L266 476M266 476L264 481M264 481L262 487M262 487L260 492M256 504L254 509M285 463L283 469M283 469L281 475M281 475L279 480M273 497L271 503M294 460L292 466M290 471L288 477M288 477L286 483M284 488L282 494M275 511L273 517M298 468L296 474M294 480L292 485M288 496L286 502M282 513L280 519M312 492L310 498M306 509L304 515M304 515L302 521M302 521L300 526"/><path stroke="#f0f0f0" d="M252 451L259 454M265 456L272 459M292 466L298 468M277 486L284 488M290 491L297 493M297 493L303 496M281 455L279 461M279 461L277 467M277 467L275 472M272 478L270 484M270 484L268 489M268 489L266 495M266 495L264 501"/><path stroke="#e0e040" d="M248 463L255 465M261 468L268 470M242 480L249 482M255 484L262 487M247 488L253 490M260 492L266 495M266 495L273 497M279 500L286 502M252 451L250 457M250 457L248 463M272 459L270 464M262 506L260 512"/><path stroke="#e02020" d="M246 468L253 471M253 471L259 473M259 473L266 476M279 480L286 483M286 483L292 485M305 490L312 492M275 492L282 494M295 499L301 501M240 505L247 507M247 507L254 509M254 509L260 512M280 519L286 521M244 474L242 480M242 480L240 485M249 482L247 488M247 488L245 493M242 499L240 505M274 453L272 459M307 465L305 471M305 471L303 476M301 482L299 488M293 504L291 510M291 510L289 516M289 516L286 521M314 467L312 473M312 473L309 479M309 479L307 484M307 484L305 490M303 496L301 501M301 501L299 507M297 512L295 518"/><path fill="#ffffff" d="M285 482h2v2h-2zM265 494h2v2h-2zM265 475h2v2h-2zM269 483h2v2h-2zM267 488h2v2h-2zM265 494h2v2h-2zM287 476h2v2h-2zM283 487h2v2h-2z"/></g><g clip-path="url(#c25)" stroke-width="1.3" fill="none"><path stroke="#1a1ab4" d="M280 486L286 486M286 486L292 486M292 486L298 486M304 486L310 486M310 486L316 486M316 486L322 486M280 496L286 496M286 496L292 496M304 496L310 496M310 506L316 506M274 512L280 512M280 512L286 512M286 512L292 512M292 512L298 512M304 512L310 512M310 512L316 512M280 522L286 522M286 522L292 522M292 522L298 522M304 522L310 522M310 522L316 522M280 526L286 526M286 526L292 526M292 526L298 526M316 526L322 526M274 536L280 536M286 536L292 536M292 536L298 536M304 536L310 536M310 536L316 536M316 536L322 536M310 486L310 492M310 496L310 502M310 506L310 512M316 486L316 492M316 502L316 506M316 506L316 512M316 516L316 522"/><path stroke="#40e0e0" d="M274 492L280 492M280 492L286 492M286 492L292 492M292 492L298 492M298 492L304 492M310 492L316 492M274 502L280 502M280 502L286 502M304 502L310 502M310 502L316 502M274 516L280 516M310 516L316 516M316 516L322 516M298 532L304 532M304 532L310 532M274 486L274 492M274 492L274 496M274 496L274 502M274 506L274 512M274 516L274 522M274 526L274 532M274 532L274 536M280 486L280 492M280 492L280 496M280 502L280 506M280 512L280 516M280 522L280 526M280 532L280 536M286 486L286 492M286 496L286 502M286 512L286 516M286 532L286 536M292 492L292 496M292 496L292 502M292 502L292 506M292 506L292 512M292 512L292 516M292 516L292 522M298 492L298 496M298 496L298 502M298 502L298 506M298 516L298 522M298 522L298 526M304 492L304 496M304 496L304 502M304 502L304 506M304 512L304 516M304 532L304 536M310 516L310 522M310 532L310 536M322 492L322 496M322 502L322 506M322 512L322 516M322 516L322 522M322 522L322 526M322 526L322 532M322 532L322 536"/><path stroke="#f0f0f0" d="M274 506L280 506M286 506L292 506M292 506L298 506M298 506L304 506M316 512L322 512M298 532L298 536"/><path fill="#ffffff" d="M292 506h2v2h-2zM298 506h2v2h-2zM292 510h2v2h-2zM292 506h2v2h-2zM292 516h2v2h-2zM304 510h2v2h-2z"/></g><g clip-path="url(#c26)" stroke-width="1.3" fill="none"><path stroke="#1a1ab4" d="M271 543L275 539M275 539L280 535M279 543L283 539M283 539L288 535M245 578L250 574M259 566L263 562M253 578L257 574M267 566L271 562M271 562L276 558M276 558L280 554M280 554L285 551M285 551L290 547M290 547L294 543M255 589L259 585M259 585L264 581M264 581L269 578M269 578L273 574M273 574L278 570M282 566L287 562M287 562L292 558M292 558L296 554M264 601L269 597M269 597L274 593M274 593L278 589M283 585L287 581M287 581L292 577M292 577L297 574M297 574L301 570M301 570L306 566M306 566L310 562M304 574L309 570M309 570L314 566M294 589L298 585M303 581L308 577M308 577L312 574M237 558L240 562M243 566L246 570M246 570L250 574M253 578L256 581M256 581L259 585M263 589L266 593M266 593L269 597M269 597L272 601M272 601L275 604M270 589L274 593M274 593L277 597M277 597L280 601M251 547L254 551M254 551L257 555M263 562L267 566M267 566L270 570M258 547L262 551M262 551L265 555M268 558L271 562M271 562L274 566M274 566L278 570M278 570L281 574M284 577L287 581M287 581L291 585M291 585L294 589M271 543L274 547"/><path stroke="#f0f0f0" d="M232 562L237 558M237 558L241 555M241 555L246 551M246 551L251 547M260 539L264 535M264 535L269 531M274 528L278 524M250 574L254 570M254 570L259 566M258 593L263 589M272 581L276 578M276 578L281 574M281 574L286 570M286 570L290 566M290 566L295 562M272 535L275 539M275 539L279 543M279 543L282 547M285 551L288 554M288 554L292 558M292 558L295 562M295 562L298 566M298 566L301 570M301 570L304 574M304 574L308 577M281 528L285 531M285 531L288 535M288 535L291 539M291 539L294 543M294 543L297 547M297 547L301 551M301 551L304 554M304 554L307 558M307 558L310 562"/><path stroke="#40e0e0" d="M235 566L240 562M240 562L245 558M245 558L249 555M249 555L254 551M254 551L258 547M263 543L268 539M268 539L272 535M277 531L281 528M239 570L243 566M243 566L248 562M248 562L252 558M252 558L257 555M257 555L262 551M262 551L266 547M242 574L246 570M251 566L256 562M256 562L260 558M260 558L265 555M265 555L269 551M269 551L274 547M274 547L279 543M263 562L268 558M268 558L273 554M277 551L282 547M252 585L256 581M261 578L265 574M265 574L270 570M274 566L279 562M279 562L284 558M288 554L293 551M293 551L297 547M266 593L270 589M275 585L280 581M280 581L284 577M284 577L289 574M298 566L303 562M303 562L307 558M272 601L277 597M286 589L291 585M291 585L295 581M295 581L300 577M300 577L304 574M232 562L235 566M235 566L239 570M239 570L242 574M242 574L245 578M245 578L248 581M255 589L258 593M258 593L261 597M261 597L264 601M268 604L271 608M241 555L245 558M245 558L248 562M248 562L251 566M251 566L254 570M254 570L257 574M257 574L261 578M261 578L264 581M252 558L256 562M259 566L262 570M265 574L269 578M278 589L281 593M281 593L285 597M270 570L273 574M273 574L276 578M276 578L280 581M280 581L283 585M283 585L286 589M260 539L263 543M263 543L266 547M269 551L273 554M273 554L276 558M276 558L279 562M279 562L282 566M282 566L286 570M286 570L289 574M292 577L295 581M295 581L298 585M264 535L268 539M268 539L271 543M280 554L284 558M284 558L287 562M293 570L297 574M297 574L300 577M300 577L303 581M274 528L277 531M277 531L280 535M280 535L283 539M283 539L286 543M286 543L290 547M290 547L293 551M293 551L296 554M299 558L303 562M306 566L309 570M314 566L317 570"/><path fill="#ffffff" d="M270 561h2v2h-2zM275 557h2v2h-2zM264 573h2v2h-2zM274 565h2v2h-2zM278 561h2v2h-2zM268 577h2v2h-2zM281 565h2v2h-2zM264 573h2v2h-2zM266 565h2v2h-2zM269 569h2v2h-2zM275 577h2v2h-2zM274 565h2v2h-2zM277 569h2v2h-2zM272 553h2v2h-2zM275 557h2v2h-2zM279 553h2v2h-2z"/></g><g clip-path="url(#c27)" stroke-width="1.3" fill="none"><path stroke="#1a1ab4" d="M298 581L304 581M316 581L322 581M322 581L328 581M328 581L334 581M334 581L340 581M352 581L358 581M358 581L364 581M298 586L304 586M304 586L310 586M316 586L322 586M322 586L328 586M352 586L358 586M364 586L370 586M304 596L310 596M316 596L322 596M322 596L328 596M328 596L334 596M346 596L352 596M352 596L358 596M364 596L370 596M364 601L370 601M304 611L310 611M310 611L316 611M316 611L322 611M322 611L328 611M340 611L346 611M346 611L352 611M298 616L304 616M310 616L316 616M316 616L322 616M322 616L328 616M328 616L334 616M334 616L340 616M340 616L346 616M346 616L352 616M358 616L364 616M304 621L310 621M322 621L328 621M328 621L334 621M334 621L340 621M340 621L346 621M352 621L358 621M304 631L310 631M310 631L316 631M316 631L322 631M322 631L328 631M328 631L334 631M340 631L346 631M352 631L358 631M298 636L304 636M322 636L328 636M328 636L334 636M334 636L340 636M340 636L346 636M346 636L352 636M358 636L364 636M298 646L304 646M304 646L310 646M328 646L334 646M340 646L346 646M346 646L352 646M352 646L358 646M364 646L370 646M304 651L310 651M310 651L316 651M322 651L328 651M334 651L340 651M340 651L346 651M346 651L352 651M358 651L364 651M364 651L370 651M298 586L298 591M298 596L298 601M298 611L298 616M298 616L298 621M298 621L298 626M298 631L298 636M298 636L298 641M298 641L298 646M298 646L298 651M304 581L304 586M304 586L304 591M304 591L304 596M304 596L304 601M304 601L304 606M310 581L310 586M310 586L310 591M310 591L310 596M310 596L310 601M310 606L310 611M310 611L310 616M310 616L310 621M310 646L310 651M316 581L316 586M316 586L316 591M316 596L316 601M316 616L316 621M316 621L316 626M316 626L316 631M316 631L316 636M316 636L316 641M316 641L316 646M322 591L322 596M322 606L322 611M322 616L322 621M322 621L322 626M322 631L322 636M322 636L322 641M328 586L328 591M328 606L328 611M328 611L328 616M328 616L328 621M328 621L328 626M328 631L328 636M328 636L328 641M328 641L328 646M334 581L334 586M334 586L334 591M334 596L334 601M334 601L334 606M334 606L334 611M334 611L334 616M334 616L334 621M334 621L334 626M334 626L334 631M334 631L334 636M334 636L334 641M334 641L334 646M340 586L340 591M340 591L340 596M340 596L340 601M340 601L340 606M340 606L340 611M340 611L340 616M340 616L340 621M340 626L340 631M340 631L340 636M340 636L340 641M340 641L340 646M340 646L340 651M346 581L346 586M346 586L346 591M346 591L346 596M346 601L346 606M346 606L346 611M346 611L346 616M346 616L346 621M346 621L346 626M346 626L346 631M346 631L346 636M346 646L346 651M352 586L352 591M352 596L352 601M352 606L352 611M352 611L352 616M352 641L352 646M352 646L352 651M358 596L358 601M358 601L358 606M358 606L358 611M358 616L358 621M358 626L358 631M370 581L370 586"/><path stroke="#f0f0f0" d="M328 586L334 586M334 586L340 586M340 586L346 586M298 606L304 606M310 606L316 606M316 606L322 606M358 606L364 606M364 606L370 606M364 581L364 586M364 591L364 596M364 601L364 606M364 606L364 611M364 616L364 621M364 626L364 631M364 631L364 636M364 641L364 646M364 646L364 651"/><path stroke="#c040c0" d="M304 591L310 591M310 591L316 591M322 591L328 591M334 591L340 591M346 591L352 591M364 591L370 591M298 601L304 601M316 601L322 601M328 601L334 601M334 601L340 601M340 601L346 601M346 601L352 601M352 601L358 601M358 601L364 601M298 626L304 626M334 626L340 626M352 626L358 626M358 626L364 626M364 626L370 626M298 641L304 641M316 641L322 641M328 641L334 641M340 641L346 641M346 641L352 641M358 641L364 641M304 626L304 631M304 636L304 641M304 646L304 651M358 591L358 596M358 631L358 636M358 636L358 641M358 641L358 646M370 591L370 596M370 596L370 601M370 601L370 606M370 606L370 611M370 611L370 616M370 626L370 631M370 641L370 646M370 646L370 651"/><path fill="#ffffff" d="M320 610h2v2h-2zM338 610h2v2h-2zM320 615h2v2h-2zM332 615h2v2h-2zM338 615h2v2h-2zM344 615h2v2h-2zM320 620h2v2h-2zM332 620h2v2h-2zM338 620h2v2h-2zM320 605h2v2h-2zM320 615h2v2h-2zM320 620h2v2h-2zM326 605h2v2h-2zM326 610h2v2h-2zM326 620h2v2h-2zM332 605h2v2h-2zM332 610h2v2h-2zM332 615h2v2h-2zM332 620h2v2h-2zM332 625h2v2h-2zM338 610h2v2h-2zM338 615h2v2h-2zM338 625h2v2h-2zM344 605h2v2h-2zM344 610h2v2h-2zM344 615h2v2h-2z"/></g><g clip-path="url(#c28)" stroke-width="1.3" fill="none"><path stroke="#1a1ab4" d="M302 525L307 522M307 522L312 519M312 519L317 516M317 516L323 513M323 513L328 510M333 507L338 504M338 504L343 501M354 495L359 492M304 530L310 527M310 527L315 524M320 521L325 518M336 512L341 509M341 509L346 506M351 503L356 500M361 497L367 494M307 534L312 531M317 528L322 525M322 525L328 522M328 522L333 519M333 519L338 516M338 516L343 513M348 510L354 507M314 547L320 544M325 541L330 538M330 538L335 535M340 532L346 529M346 529L351 526M322 548L327 545M319 556L325 552M325 552L330 550M335 546L340 544M340 544L345 540M345 540L350 538M350 538L356 534M356 534L361 532M361 532L366 528M371 526L376 522M376 522L382 520M322 560L327 557M327 557L332 554M332 554L337 551M337 551L343 548M343 548L348 545M353 542L358 539M363 536L369 533M374 530L379 527M379 527L384 524M324 564L330 561M340 555L345 552M345 552L350 549M356 546L361 543M361 543L366 540M371 537L376 534M376 534L381 531M381 531L387 528M327 568L332 565M337 562L342 559M348 556L353 553M358 550L363 547M363 547L368 544M368 544L374 541M374 541L379 538M379 538L384 535M329 573L335 570M335 570L340 567M340 567L345 564M345 564L350 561M350 561L355 558M337 586L342 583M347 580L352 577M363 571L368 568M368 568L373 565M373 565L378 562M378 562L384 559M384 559L389 556M394 553L399 550M302 525L304 530M304 530L307 534M307 534L309 538M314 547L317 551M317 551L319 556M319 556L322 560M322 560L324 564M324 564L327 568M327 568L329 573M332 577L334 581M334 581L337 586M312 519L315 524M315 524L317 528M317 528L320 532M322 537L325 541M325 541L327 545M327 545L330 550M330 550L332 554M332 554L335 558M340 567L342 571M345 575L347 580M317 516L320 521M320 521L322 525M322 525L325 529M325 529L327 534M327 534L330 538M337 551L340 555M340 555L342 559M345 564L347 568M347 568L350 572M323 513L325 518M325 518L328 522M328 522L330 526M330 526L333 531M333 531L335 535M335 535L338 539M343 548L345 552M345 552L348 556M350 561L353 565M343 536L345 540M345 540L348 545M348 545L350 549M350 549L353 553M353 553L355 558M360 566L363 571M333 507L336 512M341 509L343 513M346 517L348 522M348 522L351 526M353 530L356 534M356 534L358 539M361 543L363 547M363 547L366 552M368 556L371 560M343 501L346 506M346 506L348 510M348 510L351 514M353 519L356 523M358 527L361 532M361 532L363 536M366 540L368 544M368 544L371 549M371 549L373 553M351 503L354 507M359 516L361 520M361 520L364 524M364 524L366 528M369 533L371 537M371 537L374 541M374 541L376 546M379 550L381 554M354 495L356 500M356 500L359 504M359 504L361 508M361 508L364 513M364 513L366 517M369 521L371 526M371 526L374 530M374 530L376 534M376 534L379 538M379 538L381 543M384 547L386 551M359 492L361 497M364 501L366 505M366 505L369 510M369 510L371 514M371 514L374 518M374 518L376 522M379 527L381 531M384 535L386 540M386 540L389 544M389 544L391 548M367 494L369 498M369 498L372 502M372 502L374 507M377 511L379 515M384 524L387 528M389 532L392 537M394 541L397 545M397 545L399 550"/><path stroke="#40e0e0" d="M359 504L364 501M315 535L320 532M325 529L330 526M330 526L335 523M340 520L346 517M346 517L351 514M351 514L356 511M356 511L361 508M361 508L366 505M366 505L372 502M355 558L360 555M360 555L366 552M366 552L371 549M371 549L376 546M376 546L381 543M386 540L392 537M337 574L342 571M347 568L353 565M353 565L358 562M363 559L368 556M368 556L373 553M373 553L379 550M379 550L384 547M384 547L389 544M334 581L340 578M340 578L345 575M345 575L350 572M360 566L366 563M366 563L371 560M371 560L376 557M376 557L381 554M381 554L386 551M386 551L391 548M391 548L397 545M328 510L330 515M330 515L333 519M333 519L335 523M335 523L338 528M338 528L340 532M373 553L376 557M376 557L378 562"/><path stroke="#f0f0f0" d="M317 540L322 537M322 537L327 534M338 528L343 525M343 525L348 522M348 522L353 519M353 519L359 516M359 516L364 513M364 513L369 510M369 510L374 507M366 517L371 514M371 514L377 511M327 545L332 542M332 542L338 539M338 539L343 536M348 533L353 530M353 530L358 527M358 527L364 524M364 524L369 521M369 521L374 518M307 522L310 527M312 531L315 535M317 540L320 544M320 544L322 548M325 552L327 557M327 557L330 561M330 561L332 565M332 565L335 570M335 570L337 574M337 574L340 578M340 578L342 583M336 512L338 516M338 516L340 520M340 520L343 525M348 533L350 538M353 542L356 546M360 555L363 559M363 559L366 563M366 563L368 568"/><path fill="#ffffff" d="M342 524h2v2h-2zM339 531h2v2h-2zM344 528h2v2h-2zM352 529h2v2h-2zM344 540h2v2h-2zM350 536h2v2h-2zM360 530h2v2h-2zM344 551h2v2h-2zM354 545h2v2h-2zM360 542h2v2h-2zM357 549h2v2h-2zM342 547h2v2h-2zM344 551h2v2h-2zM347 544h2v2h-2zM349 548h2v2h-2zM352 552h2v2h-2zM347 532h2v2h-2zM352 541h2v2h-2zM352 529h2v2h-2zM360 542h2v2h-2zM357 526h2v2h-2z"/></g><g clip-path="url(#c29)" stroke-width="1.3" fill="none"><path stroke="#1a1ab4" d="M247 410L255 408M255 408L263 407M263 407L271 405M271 405L279 404M279 404L287 403M287 403L294 401M294 401L302 400M302 400L310 398M326 396L334 394M334 394L342 393M342 393L350 392M350 392L357 390M250 423L257 422M257 422L265 421M265 421L273 419M281 418L289 416M289 416L297 415M297 415L305 414M305 414L313 412M313 412L320 411M336 408L344 407M344 407L352 405M352 405L360 404M251 430L259 429M274 426L282 425M282 425L290 423M290 423L298 422M306 421L314 419M314 419L322 418M322 418L330 416M337 415L345 414M353 412L361 411M252 437L260 436M268 434L276 433M276 433L284 432M284 432L291 430M291 430L299 429M299 429L307 427M307 427L315 426M315 426L323 425M323 425L331 423M347 420L354 419M354 419L362 418M269 441L277 440M277 440L285 438M293 437L300 436M300 436L308 434M316 433L324 432M324 432L332 430M332 430L340 429M340 429L348 427M348 427L356 426M356 426L364 425M254 451L262 450M262 450L270 448M294 444L302 443M302 443L310 441M310 441L317 440M325 438L333 437M333 437L341 436M341 436L349 434M349 434L357 433M357 433L365 431M256 458L264 456M264 456L271 455M271 455L279 454M279 454L287 452M295 451L303 449M303 449L311 448M358 440L366 438M265 463L273 462M273 462L280 461M288 459L296 458M296 458L304 456M304 456L312 455M320 454L328 452M328 452L336 451M336 451L344 449M344 449L351 448M351 448L359 447M359 447L367 445M258 472L266 470M297 465L305 463M305 463L313 462M313 462L321 461M329 459L337 458M337 458L345 456M345 456L353 455M353 455L360 454M360 454L368 452M259 479L267 477M267 477L275 476M275 476L283 474M291 473L299 472M307 470L314 469M314 469L322 467M322 467L330 466M330 466L338 465M354 462L362 460M362 460L370 459M260 485L268 484M268 484L276 483M300 478L308 477M308 477L316 476M324 474L331 473M331 473L339 472M339 472L347 470M347 470L355 469M355 469L363 467M363 467L371 466M262 492L270 491M270 491L277 490M277 490L285 488M285 488L293 487M293 487L301 485M301 485L309 484M309 484L317 483M317 483L325 481M325 481L333 480M340 478L348 477M348 477L356 476M263 499L271 498M271 498L279 496M279 496L287 495M287 495L294 494M294 494L302 492M302 492L310 491M310 491L318 489M318 489L326 488M326 488L334 487M334 487L342 485M350 484L357 483M357 483L365 481M264 506L272 505M272 505L280 503M280 503L288 502M288 502L296 501M304 499L311 498M311 498L319 496M319 496L327 495M335 494L343 492M351 491L359 489M359 489L367 488M367 488L374 487M267 520L274 518M274 518L282 517M290 516L298 514M298 514L306 513M306 513L314 512M314 512L322 510M322 510L330 509M330 509L337 507M345 506L353 505M353 505L361 503M369 502L377 500M253 444L254 451M254 451L256 458M257 465L258 472M259 479L260 485M260 485L262 492M264 506L265 513M265 513L267 520M255 408L256 415M256 415L257 422M259 429L260 436M260 436L261 443M261 443L262 450M265 463L266 470M266 470L267 477M267 477L268 484M268 484L270 491M271 498L272 505M273 512L274 518M263 407L264 414M265 421L267 427M267 427L268 434M268 434L269 441M270 448L271 455M273 462L274 469M274 469L275 476M275 476L276 483M276 483L277 490M277 490L279 496M280 503L281 510M271 405L272 412M272 412L273 419M274 426L276 433M276 433L277 440M277 440L278 447M278 447L279 454M279 454L280 461M280 461L282 467M282 467L283 474M284 481L285 488M285 488L287 495M287 495L288 502M289 509L290 516M296 501L297 507M297 507L298 514M287 403L288 410M288 410L289 416M290 423L291 430M291 430L293 437M293 437L294 444M295 451L296 458M296 458L297 465M299 472L300 478M300 478L301 485M301 485L302 492M294 401L296 408M297 415L298 422M298 422L299 429M302 443L303 449M303 449L304 456M304 456L305 463M305 463L307 470M307 470L308 477M308 477L309 484M309 484L310 491M311 498L313 505M303 407L305 414M305 414L306 421M307 427L308 434M308 434L310 441M313 462L314 469M314 469L316 476M316 476L317 483M318 489L319 496M319 496L321 503M321 503L322 510M311 405L313 412M313 412L314 419M314 419L315 426M315 426L316 433M316 433L317 440M317 440L319 447M319 447L320 454M321 461L322 467M322 467L324 474M324 474L325 481M325 481L326 488M326 488L327 495M327 495L328 502M328 502L330 509M318 397L319 404M320 411L322 418M322 418L323 425M325 438L327 445M328 452L329 459M329 459L330 466M330 466L331 473M331 473L333 480M333 480L334 487M334 487L335 494M335 494L336 500M336 500L337 507M326 396L327 403M328 409L330 416M331 423L332 430M333 437L334 444M334 444L336 451M336 451L337 458M337 458L338 465M338 465L339 472M339 472L340 478M340 478L342 485M342 485L343 492M343 492L344 499M344 499L345 506M335 401L336 408M336 408L337 415M339 422L340 429M340 429L341 436M341 436L342 443M344 449L345 456M346 463L347 470M347 470L348 477M348 477L350 484M352 498L353 505M343 400L344 407M344 407L345 414M345 414L347 420M347 420L348 427M349 434L350 441M350 441L351 448M351 448L353 455M353 455L354 462M354 462L355 469M356 476L357 483M360 496L361 503M350 392L351 398M351 398L352 405M352 405L353 412M353 412L354 419M354 419L356 426M357 433L358 440M358 440L359 447M360 454L362 460M362 460L363 467M363 467L364 474M364 474L365 481M365 481L367 488M367 488L368 495M357 390L359 397M360 404L361 411M362 418L364 425M364 425L365 431M365 431L366 438M366 438L367 445M367 445L368 452M371 466L372 473M373 480L374 487M374 487L376 494M376 494L377 500"/><path stroke="#40e0e0" d="M256 415L264 414M264 414L272 412M272 412L280 411M280 411L288 410M288 410L296 408M296 408L303 407M311 405L319 404M327 403L335 401M335 401L343 400M351 398L359 397M302 492L304 499M304 499L305 506"/><path stroke="#e02020" d="M265 513L273 512M273 512L281 510M289 509L297 507M297 507L305 506M313 505L321 503M321 503L328 502M336 500L344 499M352 498L360 496M360 496L368 495M368 495L376 494"/><path stroke="#c040c0" d="M280 411L281 418M282 425L284 432M284 432L285 438M285 438L286 445M286 445L287 452M287 452L288 459M288 459L290 466M290 466L291 473M291 473L292 480M293 487L294 494"/><path fill="#ffffff" d="M309 440h2v2h-2zM294 450h2v2h-2zM302 448h2v2h-2zM287 458h2v2h-2zM303 455h2v2h-2zM296 464h2v2h-2zM328 458h2v2h-2zM290 472h2v2h-2zM313 468h2v2h-2zM321 466h2v2h-2zM329 465h2v2h-2zM286 451h2v2h-2zM287 458h2v2h-2zM290 429h2v2h-2zM294 450h2v2h-2zM306 469h2v2h-2zM312 461h2v2h-2zM315 432h2v2h-2zM316 439h2v2h-2zM320 460h2v2h-2zM323 473h2v2h-2zM324 437h2v2h-2zM327 451h2v2h-2zM328 458h2v2h-2zM330 472h2v2h-2z"/></g><polyline points="318.0,448.0 290.0,465.0 265.0,478.0" fill="none" stroke="#e02020" stroke-width="1.1" stroke-opacity="1"/><polyline points="222.0,559.0 224.0,573.0 232.0,588.0 251.0,597.0 265.0,601.0" fill="none" stroke="#e0e040" stroke-width="1.2" stroke-opacity="1"/><polyline points="265.0,601.0 275.0,592.0 282.0,573.0 289.0,549.0 299.0,526.0 303.0,497.0 308.0,463.0 327.0,442.0" fill="none" stroke="#40e040" stroke-width="1.1" stroke-opacity="1"/><polyline points="196.0,494.0 208.0,487.0 215.0,487.0 239.0,478.0 248.0,468.0 260.0,454.0 265.0,444.0" fill="none" stroke="#2424d0" stroke-width="1.1" stroke-opacity="1"/><polyline points="239.0,478.0 236.0,459.0 244.0,444.0 270.0,449.0" fill="none" stroke="#40e040" stroke-width="1.0" stroke-opacity="1"/><polyline points="244.0,444.0 270.0,449.0" fill="none" stroke="#e0e040" stroke-width="1.0" stroke-opacity="1"/><polyline points="284.0,485.0 334.0,487.0" fill="none" stroke="#2424d0" stroke-width="1.1" stroke-opacity="1"/><polyline points="303.0,490.0 334.0,487.0" fill="none" stroke="#2424d0" stroke-width="1.0" stroke-opacity="1"/><polyline points="294.0,538.0 305.0,550.0 311.0,554.0" fill="none" stroke="#2424d0" stroke-width="1.0" stroke-opacity="1"/><polyline points="346.0,571.0 344.0,602.0" fill="none" stroke="#2424d0" stroke-width="1.0" stroke-opacity="1"/><polyline points="299.0,526.0 289.0,549.0" fill="none" stroke="#2424d0" stroke-width="1.0" stroke-opacity="1"/><polyline points="196.0,494.0 190.0,488.0 196.0,482.0" fill="none" stroke="#2424d0" stroke-width="1.0" stroke-opacity="1"/><path fill="#fff" d="M484 144h2v2h-2zM455 144h2v2h-2zM469 144h2v2h-2zM468 144h2v2h-2z"/><path fill="#fff" d="M489 154h2v2h-2zM490 154h2v2h-2zM508 154h2v2h-2zM503 154h2v2h-2z"/><path fill="#fff" d="M508 165h2v2h-2zM467 165h2v2h-2zM462 165h2v2h-2zM461 165h2v2h-2z"/><path fill="#fff" d="M491 175h2v2h-2zM491 175h2v2h-2zM507 175h2v2h-2zM488 175h2v2h-2z"/><path fill="#fff" d="M527 187h2v2h-2zM529 187h2v2h-2zM467 187h2v2h-2zM503 187h2v2h-2zM521 187h2v2h-2z"/><path fill="#fff" d="M452 199h2v2h-2zM513 199h2v2h-2zM511 199h2v2h-2zM456 199h2v2h-2zM485 199h2v2h-2z"/><path fill="#fff" d="M516 209h2v2h-2zM474 209h2v2h-2zM516 209h2v2h-2zM455 209h2v2h-2zM472 209h2v2h-2z"/><path fill="#fff" d="M476 220h2v2h-2zM442 220h2v2h-2zM499 220h2v2h-2zM492 220h2v2h-2zM477 220h2v2h-2z"/><path fill="#fff" d="M503 230h2v2h-2zM505 230h2v2h-2zM502 230h2v2h-2zM442 230h2v2h-2zM489 230h2v2h-2z"/><path fill="#fff" d="M499 241h2v2h-2zM468 241h2v2h-2zM464 241h2v2h-2zM456 241h2v2h-2zM462 241h2v2h-2z"/><path fill="#fff" d="M494 251h2v2h-2zM510 251h2v2h-2zM501 251h2v2h-2zM444 251h2v2h-2zM492 251h2v2h-2z"/><path fill="#fff" d="M481 246h2v2h-2zM481 176h2v2h-2zM481 214h2v2h-2zM481 151h2v2h-2zM481 199h2v2h-2zM481 182h2v2h-2zM481 217h2v2h-2zM481 243h2v2h-2zM481 263h2v2h-2zM481 162h2v2h-2z"/><path fill="#fff" d="M586 234h2v2h-2zM651 362h2v2h-2zM656 368h2v2h-2zM639 348h2v2h-2zM597 252h2v2h-2zM625 332h2v2h-2zM573 218h2v2h-2zM607 291h2v2h-2zM615 320h2v2h-2zM590 239h2v2h-2z"/><path fill="#fff" d="M582 146h2v2h-2zM583 144h2v2h-2zM649 156h2v2h-2zM638 146h2v2h-2zM629 138h2v2h-2zM593 133h2v2h-2z"/><path fill="#fff" d="M583 369h2v2h-2zM583 352h2v2h-2zM572 267h2v2h-2zM576 286h2v2h-2zM575 279h2v2h-2zM582 329h2v2h-2zM583 375h2v2h-2zM583 343h2v2h-2zM572 268h2v2h-2zM578 295h2v2h-2z"/><path fill="#fff" d="M378 153h2v2h-2zM377 154h2v2h-2zM343 256h2v2h-2zM375 162h2v2h-2zM379 149h2v2h-2zM377 157h2v2h-2z"/><polyline points="274.6,361.7 279.0,361.7 272.5,376.8 266.0,383.0 249.0,418.0" fill="none" stroke="#e0e040" stroke-width="1.1" stroke-opacity="1"/><polyline points="266.0,383.0 249.0,418.0" fill="none" stroke="#2424d0" stroke-width="1.1" stroke-opacity="1"/><polyline points="263.4,388.2 285.4,397.2" fill="none" stroke="#2424d0" stroke-width="1.1" stroke-opacity="1"/><path fill="#fff" d="M273 392h2v2h-2zM265 388h2v2h-2zM267 389h2v2h-2z"/><polyline points="260.1,395.2 282.1,404.2" fill="none" stroke="#2424d0" stroke-width="1.1" stroke-opacity="1"/><path fill="#fff" d="M274 400h2v2h-2zM261 395h2v2h-2zM277 402h2v2h-2z"/><polyline points="256.6,402.2 278.6,411.2" fill="none" stroke="#2424d0" stroke-width="1.1" stroke-opacity="1"/><path fill="#fff" d="M257 402h2v2h-2zM267 406h2v2h-2zM259 403h2v2h-2z"/><polyline points="253.2,409.2 275.2,418.2" fill="none" stroke="#2424d0" stroke-width="1.1" stroke-opacity="1"/><path fill="#fff" d="M264 413h2v2h-2zM260 412h2v2h-2zM273 417h2v2h-2z"/><polyline points="249.8,416.2 271.9,425.2" fill="none" stroke="#2424d0" stroke-width="1.1" stroke-opacity="1"/><path fill="#fff" d="M257 418h2v2h-2zM257 419h2v2h-2zM268 423h2v2h-2z"/><polyline points="257.0,371.0 262.0,378.0" fill="none" stroke="#2424d0" stroke-width="1.0" stroke-opacity="1"/><polyline points="279.0,361.7 294.0,365.0 304.7,362.8" fill="none" stroke="#e0e040" stroke-width="1.1" stroke-opacity="1"/><g clip-path="url(#c30)" stroke-width="1.3" fill="none"><path stroke="#1a1ab4" d="M321 349L327 352M332 354L337 357M348 362L354 364M354 364L359 367M359 367L365 369M381 377L386 379M324 356L330 359M335 361L341 364M352 369L357 371M357 371L363 374M363 374L368 376M368 376L373 379M373 379L379 381M379 381L384 384M317 358L322 361M328 363L333 366M333 366L339 368M344 371L350 373M350 373L355 376M366 381L371 383M377 386L382 389M313 367L318 370M356 387L362 390M367 393L373 395M373 395L378 398M316 374L321 377M327 379L332 382M349 389L354 392M360 395L365 397M314 379L319 381M330 386L336 389M336 389L341 391M347 394L352 397M357 399L363 402M363 402L368 404M368 404L374 407M306 381L312 383M312 383L317 386M323 388L328 391M344 399L350 401M361 406L366 409M310 388L315 390M315 390L321 393M321 393L326 395M326 395L331 398M331 398L337 401M337 401L342 403M342 403L348 406M353 408L359 411M364 413L370 416M302 390L308 392M308 392L313 395M313 395L318 397M318 397L324 400M324 400L329 403M329 403L335 405M340 408L346 410M351 413L357 415M357 415L362 418M362 418L367 420M305 397L311 399M311 399L316 402M316 402L322 405M338 412L344 415M349 417L354 420M354 420L360 422M360 422L365 425M301 406L307 409M307 409L312 411M318 414L323 416M323 416L328 419M328 419L334 421M339 424L345 426M350 429L356 431M356 431L361 434M321 349L319 354M319 354L317 358M313 367L311 372M311 372L308 376M306 381L304 385M304 385L302 390M302 390L300 394M298 399L296 403M327 352L324 356M324 356L322 361M320 365L318 370M316 374L314 379M332 354L330 359M330 359L328 363M326 368L324 372M324 372L321 377M321 377L319 381M319 381L317 386M317 386L315 390M313 395L311 399M311 399L309 404M309 404L307 409M307 409L305 413M305 413L302 418M335 361L333 366M333 366L331 370M331 370L329 375M327 379L325 384M325 384L323 388M323 388L321 393M321 393L318 397M318 397L316 402M316 402L314 407M314 407L312 411M312 411L310 416M326 395L324 400M324 400L322 405M322 405L320 409M320 409L318 414M315 418L313 423M346 366L344 371M344 371L342 375M342 375L340 380M340 380L338 384M338 384L336 389M336 389L334 393M334 393L331 398M331 398L329 403M325 412L323 416M323 416L321 421M354 364L352 369M352 369L350 373M347 378L345 382M343 387L341 391M341 391L339 396M337 401L335 405M333 410L331 414M331 414L328 419M328 419L326 423M326 423L324 428M359 367L357 371M355 376L353 380M351 385L349 389M337 428L335 433M371 383L369 388M369 388L367 393M367 393L365 397M365 397L363 402M363 402L361 406M361 406L359 411M354 420L352 424M352 424L350 429M348 433L346 438M381 377L379 381M379 381L377 386M377 386L375 391M375 391L373 395M373 395L370 400M370 400L368 404M366 409L364 413M360 422L358 427M358 427L356 431M382 389L380 393M380 393L378 398M378 398L376 402M376 402L374 407M372 411L370 416M365 425L363 429M363 429L361 434M361 434L359 438"/><path stroke="#c040c0" d="M315 363L320 365M326 368L331 370M342 375L347 378M358 383L364 385M322 405L327 407M298 399L303 401M309 404L314 407M314 407L320 409M331 414L336 417M336 417L341 419M341 419L347 422M347 422L352 424M358 427L363 429M294 408L299 411M310 416L315 418M315 418L321 421M337 428L343 431M348 433L354 436M354 436L359 438M312 383L310 388M310 388L308 392M303 401L301 406M301 406L299 411M299 411L297 415M339 368L337 373M337 373L334 377M332 382L330 386M330 386L328 391M349 389L347 394M347 394L344 399M340 408L338 412M338 412L336 417M336 417L334 421M332 426L330 430M370 372L368 376M368 376L366 381M366 381L364 385M364 385L362 390M362 390L360 395M360 395L357 399M357 399L355 404M351 413L349 417M349 417L347 422M347 422L345 426M343 431L341 435M354 436L351 440"/><path stroke="#f0f0f0" d="M324 372L329 375M329 375L334 377M334 377L340 380M345 382L351 385M292 413L297 415M302 418L308 420M308 420L313 423M313 423L319 425M324 428L330 430M346 438L351 440M365 369L363 374M363 374L360 378M356 387L354 392M354 392L352 397M352 397L350 401M344 415L341 419M341 419L339 424M339 424L337 428"/><path fill="#ffffff" d="M348 388h2v2h-2zM329 385h2v2h-2zM335 388h2v2h-2zM346 393h2v2h-2zM322 387h2v2h-2zM320 392h2v2h-2zM336 400h2v2h-2zM341 402h2v2h-2zM317 396h2v2h-2zM339 407h2v2h-2zM321 404h2v2h-2zM322 387h2v2h-2zM317 396h2v2h-2zM323 399h2v2h-2zM321 404h2v2h-2zM337 383h2v2h-2zM335 388h2v2h-2zM333 392h2v2h-2zM330 397h2v2h-2zM342 386h2v2h-2zM340 390h2v2h-2zM350 384h2v2h-2zM348 388h2v2h-2zM346 393h2v2h-2zM339 407h2v2h-2zM355 386h2v2h-2zM351 396h2v2h-2zM359 394h2v2h-2z"/></g><polyline points="266.7,601.5 266.7,626.0 258.0,660.0 254.0,700.0 256.0,720.0" fill="none" stroke="#2424d0" stroke-width="1.1" stroke-opacity="1"/><polyline points="266.7,626.0 285.0,635.0" fill="none" stroke="#2424d0" stroke-width="1.0" stroke-opacity="1"/><path fill="#fff" d="M261 643h2v2h-2zM264 633h2v2h-2zM266 624h2v2h-2zM266 613h2v2h-2zM262 639h2v2h-2zM266 611h2v2h-2z"/><g clip-path="url(#c31)" stroke-width="1.3" fill="none"><path stroke="#1a1ab4" d="M235 615L247 617M247 617L258 619M258 619L270 621M282 623L294 625M294 625L306 627M234 620L246 622M246 622L258 624M258 624L269 626M269 626L281 628M281 628L293 630M293 630L305 632M233 625L245 627M245 627L257 629M257 629L268 631M268 631L280 633M280 633L292 635M292 635L304 637M231 634L243 636M243 636L255 639M255 639L267 641M267 641L279 643M279 643L290 645M290 645L302 647M230 639L242 641M254 643L266 646M266 646L278 648M290 650L301 652M230 644L241 646M277 653L289 655M289 655L300 657M229 649L240 651M240 651L252 653M252 653L264 655M264 655L276 658M276 658L288 660M288 660L300 662M228 654L240 656M240 656L251 658M251 658L263 660M263 660L275 662M287 665L299 667M227 659L239 661M239 661L251 663M251 663L262 665M274 667L286 669M286 669L298 672M226 664L238 666M250 668L262 670M262 670L273 672M273 672L285 674M285 674L297 676M225 669L237 671M237 671L249 673M249 673L261 675M272 677L284 679M224 674L236 676M260 680L272 682M272 682L283 684M235 615L234 620M234 620L233 625M233 625L232 629M232 629L231 634M231 634L230 639M230 644L229 649M229 649L228 654M228 654L227 659M227 659L226 664M226 664L225 669M225 669L224 674M247 617L246 622M246 622L245 627M244 632L243 636M242 641L241 646M241 646L240 651M240 651L240 656M240 656L239 661M239 661L238 666M238 666L237 671M258 619L258 624M258 624L257 629M257 629L256 634M256 634L255 639M254 643L253 648M253 648L252 653M252 653L251 658M251 658L251 663M251 663L250 668M250 668L249 673M270 621L269 626M268 631L268 636M268 636L267 641M267 641L266 646M266 646L265 650M263 660L262 665M262 670L261 675M261 675L260 680M293 630L292 635M292 635L291 640M290 645L290 650M290 650L289 655M288 660L287 665M287 665L286 669M286 669L285 674M285 674L284 679M306 627L305 632M305 632L304 637M304 637L303 642M303 642L302 647M302 647L301 652M301 652L300 657M300 662L299 667M299 667L298 672M298 672L297 676"/><path stroke="#40e0e0" d="M232 629L244 632M268 636L279 638M284 679L296 681M297 676L296 681"/><path stroke="#40e040" d="M281 628L280 633M279 638L279 643M278 648L277 653M277 653L276 658M275 662L274 667M274 667L273 672M272 677L272 682"/><path fill="#ffffff" d="M267 635h2v2h-2zM266 640h2v2h-2zM265 645h2v2h-2zM257 653h2v2h-2zM268 660h2v2h-2zM267 635h2v2h-2zM262 659h2v2h-2z"/></g><polyline points="242.0,718.0 300.0,716.0" fill="none" stroke="#2424d0" stroke-width="1.1" stroke-opacity="1"/><polyline points="300.0,721.0 371.0,721.0" fill="none" stroke="#80ff80" stroke-width="1.1" stroke-opacity="1"/><polyline points="300.0,660.0 307.0,681.0 310.0,700.0" fill="none" stroke="#2424d0" stroke-width="1.0" stroke-opacity="1"/><polyline points="310.0,700.0 365.0,672.0 426.0,669.0 450.0,666.0" fill="none" stroke="#2424d0" stroke-width="1.2" stroke-opacity="1"/><polyline points="402.0,629.0 359.0,678.0 340.0,694.0 322.0,706.0" fill="none" stroke="#80ff80" stroke-width="1.1" stroke-opacity="1"/><polyline points="343.0,632.0 359.0,672.0 365.0,684.0" fill="none" stroke="#40e040" stroke-width="1.0" stroke-opacity="1"/><polyline points="343.0,580.0 343.0,632.0" fill="none" stroke="#2424d0" stroke-width="1.0" stroke-opacity="1"/><polyline points="337.0,626.0 402.0,626.0 450.0,598.0" fill="none" stroke="#2424d0" stroke-width="1.1" stroke-opacity="1"/><polyline points="346.0,727.0 370.0,770.0 390.0,801.0 396.0,810.0" fill="none" stroke="#2424d0" stroke-width="1.0" stroke-opacity="1"/><g clip-path="url(#c32)" stroke-width="1.3" fill="none"><path stroke="#1a1ab4" d="M257 798L264 798M271 798L278 798M278 798L285 798M285 798L292 798M292 798L299 798M271 808L278 808M278 808L285 808M285 808L292 808M306 808L313 808M257 818L264 818M264 818L271 818M278 818L285 818M285 818L292 818M299 818L306 818M257 823L264 823M264 823L271 823M271 823L278 823M278 823L285 823M292 823L299 823M299 823L306 823M299 833L306 833M257 838L264 838M257 843L264 843M264 843L271 843M271 843L278 843M292 843L299 843M299 843L306 843M264 848L271 848M271 848L278 848M278 848L285 848M285 848L292 848M292 848L299 848M271 853L278 853M278 853L285 853M299 853L306 853M257 798L257 803M257 803L257 808M257 808L257 813M257 813L257 818M257 818L257 823M257 823L257 828M257 828L257 833M257 833L257 838M257 838L257 843M257 843L257 848M257 848L257 853M264 798L264 803M264 808L264 813M264 813L264 818M264 818L264 823M264 823L264 828M264 828L264 833M264 833L264 838M264 838L264 843M264 843L264 848M264 848L264 853M285 803L285 808M285 808L285 813M285 813L285 818M285 818L285 823M285 823L285 828M285 828L285 833M285 833L285 838M285 843L285 848M285 848L285 853M285 853L285 858M292 803L292 808M292 813L292 818M292 823L292 828M292 828L292 833M292 833L292 838M292 838L292 843M292 848L292 853M306 803L306 808M306 808L306 813M306 838L306 843M306 843L306 848M306 848L306 853M306 853L306 858M313 798L313 803M313 803L313 808M313 813L313 818M313 823L313 828M313 828L313 833M313 838L313 843M313 843L313 848M313 848L313 853M313 853L313 858"/><path stroke="#c040c0" d="M257 803L264 803M264 803L271 803M285 803L292 803M292 803L299 803"/><path stroke="#40e0e0" d="M264 813L271 813M271 813L278 813M278 813L285 813M257 828L264 828M264 828L271 828M271 828L278 828M292 828L299 828M278 803L278 808M278 828L278 833M278 838L278 843M278 848L278 853M278 853L278 858M299 838L299 843M299 843L299 848M299 848L299 853"/><path stroke="#40e040" d="M271 833L278 833M278 833L285 833M292 833L299 833M285 838L292 838M292 838L299 838M299 838L306 838M306 838L313 838M264 858L271 858M278 858L285 858M285 858L292 858M299 858L306 858M306 858L313 858M271 803L271 808M271 813L271 818M271 823L271 828M271 828L271 833M271 838L271 843M271 843L271 848M271 848L271 853M271 853L271 858"/><path fill="#ffffff" d="M277 822h2v2h-2zM291 822h2v2h-2zM291 827h2v2h-2zM284 822h2v2h-2zM284 827h2v2h-2zM284 832h2v2h-2zM291 822h2v2h-2zM291 827h2v2h-2zM291 832h2v2h-2z"/></g><g clip-path="url(#c33)" stroke-width="1.3" fill="none"><path stroke="#1a1ab4" d="M402 795L408 795M430 795L436 795M436 795L444 795M450 795L458 795M458 795L464 795M464 795L472 795M402 800L408 800M408 800L416 800M430 800L436 800M436 800L444 800M402 805L408 805M422 805L430 805M444 805L450 805M464 805L472 805M436 810L444 810M444 810L450 810M450 810L458 810M458 810L464 810M402 815L408 815M408 815L416 815M422 815L430 815M436 815L444 815M464 815L472 815M408 820L416 820M416 820L422 820M422 820L430 820M430 820L436 820M444 820L450 820M450 820L458 820M464 820L472 820M402 825L408 825M416 825L422 825M422 825L430 825M436 825L444 825M458 825L464 825M464 825L472 825M402 830L408 830M416 830L422 830M430 830L436 830M436 830L444 830M444 830L450 830M450 830L458 830M458 830L464 830M464 830L472 830M402 835L408 835M408 835L416 835M416 835L422 835M422 835L430 835M436 835L444 835M450 835L458 835M458 835L464 835M464 835L472 835M408 845L416 845M416 845L422 845M422 845L430 845M430 845L436 845M402 850L408 850M408 850L416 850M430 850L436 850M436 850L444 850M444 850L450 850M402 855L408 855M408 855L416 855M416 855L422 855M422 855L430 855M436 855L444 855M444 855L450 855M464 855L472 855M402 800L402 805M402 805L402 810M402 815L402 820M402 825L402 830M402 830L402 835M402 840L402 845M402 845L402 850M402 850L402 855M408 795L408 800M408 805L408 810M408 810L408 815M408 815L408 820M408 835L408 840M408 840L408 845M408 850L408 855M416 795L416 800M416 810L416 815M416 830L416 835M416 835L416 840M416 840L416 845M416 845L416 850M416 850L416 855M422 800L422 805M422 810L422 815M422 815L422 820M422 825L422 830M422 830L422 835M422 840L422 845M422 850L422 855M430 795L430 800M430 800L430 805M430 815L430 820M430 825L430 830M430 835L430 840M430 840L430 845M430 845L430 850M430 850L430 855M436 800L436 805M436 805L436 810M436 810L436 815M436 820L436 825M436 830L436 835M436 835L436 840M436 840L436 845M436 845L436 850M444 795L444 800M444 800L444 805M444 805L444 810M444 810L444 815M444 825L444 830M444 835L444 840M444 840L444 845M444 850L444 855M450 795L450 800M450 800L450 805M450 805L450 810M450 815L450 820M450 825L450 830M450 830L450 835M450 835L450 840M450 840L450 845M450 845L450 850M458 805L458 810M458 810L458 815M458 815L458 820M458 825L458 830M458 830L458 835M458 835L458 840M458 850L458 855M464 800L464 805M464 805L464 810M464 815L464 820M464 820L464 825M464 825L464 830M464 830L464 835M464 835L464 840M464 845L464 850M464 850L464 855M472 795L472 800M472 815L472 820M472 820L472 825M472 835L472 840M472 840L472 845"/><path stroke="#e0e040" d="M444 800L450 800M464 800L472 800"/><path stroke="#40e040" d="M422 810L430 810M430 810L436 810M402 840L408 840M408 840L416 840M430 840L436 840M436 840L444 840M458 840L464 840M464 840L472 840"/><path stroke="#40e0e0" d="M402 820L408 820"/><path fill="#ffffff" d="M436 824h2v2h-2zM428 829h2v2h-2zM442 829h2v2h-2zM436 834h2v2h-2zM442 834h2v2h-2z"/></g><path fill="#fff" d="M346 680h2v2h-2zM406 669h2v2h-2zM392 670h2v2h-2zM368 671h2v2h-2zM311 698h2v2h-2zM357 675h2v2h-2z"/><path fill="#fff" d="M404 623h2v2h-2zM387 625h2v2h-2zM358 625h2v2h-2zM440 602h2v2h-2zM418 615h2v2h-2zM400 625h2v2h-2z"/><g clip-path="url(#c34)" stroke-width="1.3" fill="none"><path stroke="#1a1ab4" d="M409 23L414 26M414 26L419 30M423 33L428 37M428 37L433 40M433 40L438 44M448 50L453 54M453 54L458 57M408 35L413 38M418 41L423 45M428 48L432 52M432 52L437 55M437 55L442 59M447 62L452 65M452 65L457 69M457 69L462 72M405 39L410 42M410 42L415 45M415 45L420 49M420 49L425 52M425 52L430 56M430 56L434 59M444 66L449 70M449 70L454 73M454 73L459 76M397 39L402 43M402 43L407 46M407 46L412 50M417 53L422 56M427 60L432 63M432 63L437 67M437 67L441 70M446 74L451 77M391 47L396 51M401 54L406 58M416 65L421 68M421 68L426 72M436 78L441 82M441 82L446 85M446 85L450 89M389 52L394 55M394 55L398 58M403 62L408 65M418 72L423 76M428 79L433 83M433 83L438 86M443 89L448 93M383 60L388 63M388 63L393 67M398 70L403 74M407 77L412 80M412 80L417 84M422 87L427 91M427 91L432 94M432 94L437 98M437 98L442 101M385 67L390 71M409 84L414 88M434 102L439 105M377 68L382 71M387 75L392 78M392 78L397 82M397 82L402 85M402 85L407 89M407 89L412 92M421 99L426 102M426 102L431 106M431 106L436 109M371 76L376 80M381 83L386 86M386 86L391 90M391 90L396 93M396 93L401 97M401 97L406 100M416 107L421 111M425 114L430 117M369 80L373 84M373 84L378 87M383 91L388 94M393 97L398 101M398 101L403 104M403 104L408 108M413 111L418 115M418 115L423 118M423 118L428 122M399 47L396 51M394 55L391 59M391 59L388 63M388 63L385 67M385 67L382 71M382 71L379 75M379 75L376 80M376 80L373 84M410 42L407 46M407 46L404 50M398 58L396 63M396 63L393 67M393 67L390 71M387 75L384 79M384 79L381 83M423 33L421 37M421 37L418 41M430 44L428 48M428 48L425 52M422 56L419 61M410 73L407 77M407 77L405 81M399 89L396 93M406 100L403 104"/><path stroke="#f0f0f0" d="M411 30L416 34M416 34L421 37M421 37L425 41M430 44L435 48M440 51L445 55M445 55L450 58M450 58L455 61M455 61L460 65M374 72L379 75M389 82L394 86M394 86L399 89M399 89L404 93M404 93L409 96M409 96L414 100M414 100L419 103M419 103L423 106M423 106L428 110M428 110L433 113M428 37L425 41M423 45L420 49M417 53L414 57M411 61L408 65M408 65L405 69M400 78L397 82M397 82L394 86M391 90L388 94M440 51L437 55M434 59L432 63M432 63L429 67M426 72L423 76M423 76L420 80M414 88L412 92M412 92L409 96M454 73L451 77M443 89L440 94M437 98L434 102M434 102L431 106M425 114L423 118M462 72L459 76"/><path stroke="#40e040" d="M394 43L399 47M399 47L404 50M404 50L409 54M424 64L429 67M429 67L434 71M434 71L439 74M443 78L448 81M439 63L437 67M434 71L431 75M428 79L425 83M419 91L416 95M414 100L411 104M450 58L447 62M447 62L444 66M444 66L441 70M439 74L436 78M436 78L433 83M424 95L421 99M453 85L450 89M450 89L448 93M445 97L442 101M442 101L439 105M439 105L436 109"/><path stroke="#40e0e0" d="M400 66L405 69M410 73L415 76M415 76L420 80M425 83L430 87M430 87L435 90M435 90L440 94M440 94L445 97M409 23L406 27M406 27L403 31M403 31L400 35M397 39L394 43M394 43L391 47M391 47L389 52M389 52L386 56M377 68L374 72M374 72L371 76M371 76L369 80M418 41L415 45M409 54L406 58M400 66L398 70M398 70L395 74M392 78L389 82M389 82L386 86M386 86L383 91M438 44L435 48M435 48L432 52M432 52L430 56M430 56L427 60M415 76L412 80M412 80L409 84M407 89L404 93M404 93L401 97M401 97L398 101M458 57L455 61M452 65L449 70M449 70L446 74M435 90L432 94M432 94L429 98M429 98L426 102M426 102L423 106M423 106L421 111M421 111L418 115"/><path fill="#ffffff" d="M426 59h2v2h-2zM431 62h2v2h-2zM423 63h2v2h-2zM428 66h2v2h-2zM433 70h2v2h-2zM415 64h2v2h-2zM420 67h2v2h-2zM417 71h2v2h-2zM427 78h2v2h-2zM414 75h2v2h-2zM406 76h2v2h-2zM411 79h2v2h-2zM408 83h2v2h-2zM409 72h2v2h-2zM406 76h2v2h-2zM414 75h2v2h-2zM431 62h2v2h-2zM422 75h2v2h-2zM433 70h2v2h-2zM427 78h2v2h-2z"/></g><polyline points="401.0,84.7 437.8,134.7" fill="none" stroke="#1a1ab4" stroke-width="1.3" stroke-opacity="1"/><path fill="#fff" d="M413 102h2v2h-2zM400 84h2v2h-2zM405 91h2v2h-2zM421 112h2v2h-2z"/><polyline points="409.0,83.4 443.0,137.3" fill="none" stroke="#1a1ab4" stroke-width="1.3" stroke-opacity="1"/><path fill="#fff" d="M410 85h2v2h-2zM428 114h2v2h-2zM426 111h2v2h-2zM415 94h2v2h-2z"/><polyline points="415.5,79.4 448.4,134.7" fill="none" stroke="#1a1ab4" stroke-width="1.3" stroke-opacity="1"/><path fill="#fff" d="M422 92h2v2h-2zM437 116h2v2h-2zM443 126h2v2h-2zM438 118h2v2h-2z"/><polyline points="430.0,74.0 453.6,121.5" fill="none" stroke="#1a1ab4" stroke-width="1.3" stroke-opacity="1"/><path fill="#fff" d="M436 87h2v2h-2zM435 86h2v2h-2zM433 81h2v2h-2zM439 92h2v2h-2z"/><polyline points="437.8,70.2 456.2,124.0" fill="none" stroke="#1a1ab4" stroke-width="1.3" stroke-opacity="1"/><path fill="#fff" d="M439 77h2v2h-2zM439 75h2v2h-2zM438 74h2v2h-2zM446 96h2v2h-2z"/><polyline points="405.0,86.0 440.0,136.0" fill="none" stroke="#1a1ab4" stroke-width="1.3" stroke-opacity="1"/><path fill="#fff" d="M413 99h2v2h-2zM437 132h2v2h-2zM429 121h2v2h-2zM411 95h2v2h-2z"/><polyline points="423.4,75.5 453.6,125.4 455.6,125.4 455.6,145.0" fill="none" stroke="#e0e040" stroke-width="1.2" stroke-opacity="1"/><polyline points="445.7,65.0 465.4,100.5" fill="none" stroke="#2424d0" stroke-width="1.2" stroke-opacity="1"/><polyline points="465.4,100.5 482.5,133.3 483.0,145.0" fill="none" stroke="#40e0e0" stroke-width="1.2" stroke-opacity="1"/><polyline points="456.0,80.8 465.4,77.5" fill="none" stroke="#2424d0" stroke-width="1.1" stroke-opacity="1"/><path fill="#fff" d="M463 77h2v2h-2zM463 77h2v2h-2z"/><polyline points="457.6,104.4 478.0,95.9" fill="none" stroke="#2424d0" stroke-width="1.1" stroke-opacity="1"/><path fill="#fff" d="M476 95h2v2h-2zM468 98h2v2h-2z"/><polyline points="474.6,117.6 498.3,107.0" fill="none" stroke="#2424d0" stroke-width="1.1" stroke-opacity="1"/><path fill="#fff" d="M496 106h2v2h-2zM491 109h2v2h-2z"/><polyline points="483.9,133.3 503.6,126.8 503.6,138.6" fill="none" stroke="#2424d0" stroke-width="1.1" stroke-opacity="1"/><path fill="#fff" d="M488 131h2v2h-2zM494 129h2v2h-2z"/><path d="M439 132L451 130L453 139L441 137Z" fill="#14148a"/></g></svg>

<div class="title" style="top:699px;word-spacing:6px">MODELACIÓN HIDRÁULICA</div>
<div class="title" style="top:741px">IBARRA-ECUADOR</div>

<!-- REPORTES window -->
<div class="frame" style="left:693px;top:95px;width:410px;height:324px;background:linear-gradient(90deg,#1c1c1c 0%,#2c2c2c 30%,#303030 50%,#222 80%,#1a1a1a 100%)">
</div>
<div class="a" style="left:694px;top:96px;width:408px;height:25px;border-radius:6px 6px 0 0;background:linear-gradient(90deg,rgba(0,0,0,.55) 0%,rgba(0,0,0,0) 12%,rgba(0,0,0,0) 88%,rgba(0,0,0,.4) 100%),linear-gradient(#1e1e1e 0%,#3a3a3a 25%,#5e5e5e 50%,#3a3a3a 75%,#181818 100%)"></div>
<div class="t" style="left:721px;top:102px;font-size:12.5px;color:#000;transform:scaleX(0.85);transform-origin:0 0">REPORTES</div>
<div class="a" style="left:703px;top:104px;width:11px;height:9px;background:#fff;border:1px solid #000;border-radius:2px;box-shadow:-1px -2px 0 #8cc"></div>
<div class="t" style="left:987px;top:104px;color:#222;font-size:9px">...</div>
<!-- caption buttons -->
<div class="a" style="left:994px;top:94px;width:103px;height:19px;border:1px solid #8a8a8a;border-radius:0 0 4px 4px;background:linear-gradient(#3a3a3a,#262626)"></div>
<div class="a" style="left:1022px;top:95px;width:1px;height:18px;background:#6a6a6a"></div>
<div class="a" style="left:1050px;top:95px;width:1px;height:18px;background:#6a6a6a"></div>
<div class="a" style="left:1004px;top:103px;width:10px;height:4px;background:#eee"></div>
<div class="a" style="left:1031px;top:98px;width:11px;height:10px;border:2px solid #888;background:#444"></div>
<svg class="a" style="left:1068px;top:99px" width="12" height="10"><path d="M1.5 1.5L10.5 8.5M10.5 1.5L1.5 8.5" stroke="#f4f4f4" stroke-width="2.6"/></svg>

<div class="client" style="left:698px;top:121px;width:399px;height:291px"></div>

<!-- tabs -->
<div class="a" style="left:703px;top:126px;width:68px;height:21px;background:#80f8f8;border:1px solid #999;border-bottom:none"></div>
<div class="t" style="left:706px;top:130px;font-weight:bold;font-size:11.5px;color:#000">A Pantalla</div>
<div class="a" style="left:773px;top:126px;width:60px;height:21px;background:#f0f0f0;border:1px solid #999;border-bottom:none"></div>
<div class="t" style="left:783px;top:129px;color:#b0b0b0;font-size:11px">Tablas</div>
<div class="t" style="left:979px;top:129px;font-size:11px">Acelerador gráfico</div>
<div class="chk" style="left:1076px;top:128px"></div>
<div class="t" style="left:1078px;top:126px;font-size:13px;color:#3a4ea0;font-weight:bold">&#10003;</div>
<div class="a" style="left:703px;top:146px;width:393px;height:1px;background:#8a8a8a"></div>
<div class="a" style="left:703px;top:147px;width:393px;height:1px;background:#fff"></div>
<!-- time combo -->
<div class="combo" style="left:711px;top:154px;width:110px;height:23px"></div>
<div class="a" style="left:714px;top:157px;width:87px;height:18px;background:#c0ffc0"></div>
<div class="t" style="left:722px;top:159px;font-weight:bold;font-size:12.5px">12:00HH</div>
<div class="arr" style="left:807px;top:165px"></div>
<div class="a" style="left:824px;top:153px;width:22px;height:23px;background:#00ff00;border:1px solid #3a6a3a"></div>
<!-- scrollbar -->
<div class="a" style="left:851px;top:154px;width:147px;height:22px;background:#fff"></div>
<div class="a" style="left:851px;top:154px;width:17px;height:22px;background:#ececec"></div>
<div class="a" style="left:982px;top:154px;width:16px;height:22px;background:#ececec"></div>
<div class="a" style="left:857px;top:161px;width:0;height:0;border-top:4px solid transparent;border-bottom:4px solid transparent;border-right:4px solid #333"></div>
<div class="a" style="left:989px;top:161px;width:0;height:0;border-top:4px solid transparent;border-bottom:4px solid transparent;border-left:4px solid #333"></div>
<div class="a" style="left:869px;top:155px;width:15px;height:21px;border:1px solid #999;border-radius:2px;background:linear-gradient(#f4f4f4 0%,#e6e6e6 45%,#d4d4d4 50%,#c8c8c8 100%)"></div>
<div class="t" style="left:1006px;top:153px;line-height:12px;font-size:11px">Presentación<br>Inmediata</div>
<div class="chk" style="left:1076px;top:157px"></div>
<div class="a" style="left:703px;top:182px;width:393px;height:1px;background:#8a8a8a"></div>
<div class="a" style="left:703px;top:183px;width:393px;height:1px;background:#fff"></div>
<!-- system row -->
<div class="t" style="left:716px;top:201px">En el Sistema de</div>
<div class="combo" style="left:799px;top:196px;width:111px;height:20px"></div>
<div class="a" style="left:802px;top:198px;width:88px;height:15px;background:#80ffff"></div>
<div class="t" style="left:805px;top:199px">Agua Potable</div>
<div class="arr" style="left:897px;top:203px"></div>
<div class="t" style="left:917px;top:201px">Denominado</div>
<div class="combo" style="left:979px;top:196px;width:111px;height:20px"></div>
<div class="a" style="left:982px;top:198px;width:89px;height:15px;background:#80ffff"></div>
<div class="t" style="left:984px;top:199px">i</div>
<div class="arr" style="left:1076px;top:203px"></div>
<!-- group -->
<div class="a" style="left:712px;top:234px;width:367px;height:97px;border:1px solid #d5dfe5;border-radius:3px"></div>
<div class="a" style="left:725px;top:228px;width:146px;height:12px;background:#f0f0f0"></div>
<div class="t" style="left:728px;top:229px">Dibujar los siguientes Textos:</div>
<div class="t" style="left:733px;top:249px">en Nudos:</div>
<div class="combo" style="left:813px;top:243px;width:208px;height:21px"></div>
<div class="a" style="left:816px;top:246px;width:185px;height:15px;background:#80ffff"></div>
<div class="t" style="left:818px;top:247px">Presión [m]</div>
<div class="arr" style="left:1007px;top:252px"></div>
<div class="t" style="left:733px;top:273px">en Tuberías:</div>
<div class="combo" style="left:813px;top:270px;width:208px;height:21px"></div>
<div class="a" style="left:816px;top:273px;width:185px;height:15px;background:#80ffff"></div>
<div class="t" style="left:818px;top:274px">Caudal [lt/s]</div>
<div class="arr" style="left:1007px;top:279px"></div>
<div class="t" style="left:733px;top:300px">en Cuencas</div>
<div class="combo" style="left:813px;top:299px;width:208px;height:21px"></div>
<div class="a" style="left:816px;top:302px;width:185px;height:15px;background:#80ffff"></div>
<div class="arr" style="left:1007px;top:308px"></div>
<!-- color buttons -->
<div class="a" style="left:1025px;top:238px;width:33px;height:29px;border:2px solid #222;border-right-color:#444;border-bottom-color:#444;background:#e4e4e4;box-shadow:inset 1px 1px 0 #999"></div>
<div class="a" style="left:1025px;top:268px;width:33px;height:29px;border:1px solid #ccc;border-right:2px solid #777;border-bottom:2px solid #777;background:#f0f0f0;box-shadow:inset 1px 1px 0 #fff"></div>
<div class="a" style="left:1029px;top:242px;width:24px;height:21px;border:2px solid #111;background:#fff"></div><div class="a" style="left:1031px;top:244px;width:6px;height:5px;background:#0000c0"></div><div class="a" style="left:1038px;top:244px;width:6px;height:5px;background:#40d8e0"></div><div class="a" style="left:1045px;top:244px;width:6px;height:5px;background:#40c840"></div><div class="a" style="left:1031px;top:250px;width:6px;height:5px;background:#ffff30"></div><div class="a" style="left:1038px;top:250px;width:6px;height:5px;background:#d01818"></div><div class="a" style="left:1045px;top:250px;width:6px;height:5px;background:#e030e0"></div><div class="a" style="left:1031px;top:256px;width:6px;height:5px;background:#888888"></div><div class="a" style="left:1038px;top:256px;width:6px;height:5px;background:#c4c4c4"></div><div class="a" style="left:1045px;top:256px;width:6px;height:5px;background:#ffffff"></div><div class="a" style="left:1029px;top:271px;width:24px;height:21px;border:2px solid #111;background:#fff"></div><div class="a" style="left:1031px;top:273px;width:6px;height:5px;background:#0000c0"></div><div class="a" style="left:1038px;top:273px;width:6px;height:5px;background:#40d8e0"></div><div class="a" style="left:1045px;top:273px;width:6px;height:5px;background:#40c840"></div><div class="a" style="left:1031px;top:279px;width:6px;height:5px;background:#ffff30"></div><div class="a" style="left:1038px;top:279px;width:6px;height:5px;background:#d01818"></div><div class="a" style="left:1045px;top:279px;width:6px;height:5px;background:#e030e0"></div><div class="a" style="left:1031px;top:285px;width:6px;height:5px;background:#888888"></div><div class="a" style="left:1038px;top:285px;width:6px;height:5px;background:#c4c4c4"></div><div class="a" style="left:1045px;top:285px;width:6px;height:5px;background:#ffffff"></div>
<!-- layer row -->
<div class="chk" style="left:711px;top:342px"></div>
<div class="t" style="left:730px;top:344px">en la Layer</div>
<div class="combo" style="left:792px;top:340px;width:147px;height:21px;border-color:#dcdcdc"></div>
<div class="a" style="left:795px;top:342px;width:124px;height:16px;background:#80ffff"></div>
<div class="t" style="left:797px;top:344px;color:#6aa">$AGP-i-Val</div>
<div class="arr" style="left:925px;top:348px;border-top-color:#aaa"></div>
<div class="t" style="left:947px;top:345px">Con:</div>
<div class="combo" style="left:976px;top:339px;width:55px;height:20px"></div>
<div class="t" style="left:982px;top:344px">2</div>
<div class="arr" style="left:1018px;top:347px"></div>
<div class="t" style="left:1035px;top:345px">Decimales</div>
<!-- help -->
<div class="a" style="left:711px;top:364px;width:33px;height:39px;border:1px solid #ccc;border-right:2px solid #666;border-bottom:2px solid #666;background:#f0f0f0"></div>
<div class="a" style="left:716px;top:370px;width:22px;height:22px;border-radius:50%;background:radial-gradient(circle at 40% 35%,#6ab0ff,#1a5fc0 60%,#0a3a8a);box-shadow:0 0 0 1px #dde"></div>
<div class="t" style="left:722px;top:372px;color:#fff;font-weight:bold;font-size:16px">?</div>
<!-- buttons -->
<div class="btn" style="left:876px;top:372px;width:98px;height:30px;border-radius:3px"></div>
<div class="t" style="left:882px;top:381px;font-family:'Liberation Serif',serif;font-style:italic;font-size:14px;color:#222;letter-spacing:0.3px;-webkit-text-stroke:0">Estilo de Texto</div>
<div class="a" style="left:975px;top:371px;width:113px;height:31px;border:1px solid #ccc;border-right:2px solid #777;border-bottom:2px solid #777;background:#f0f0f0"></div>
<div class="t" style="left:975px;top:375px;width:113px;text-align:center;line-height:13px">Reportar desde Base<br>de datos Interna</div>

<!-- back small window -->
<div class="frame" style="left:1000px;top:430px;width:104px;height:105px;background:linear-gradient(90deg,#2a2a2a,#1c1c1c)"></div>
<div class="a" style="left:1051px;top:430px;width:47px;height:19px;border:1px solid #777;border-top:none;border-radius:0 0 4px 4px;background:linear-gradient(#3a3a3a,#202020)"></div>
<svg class="a" style="left:1069px;top:434px" width="12" height="10"><path d="M1.5 1.5L10.5 8.5M10.5 1.5L1.5 8.5" stroke="#fff" stroke-width="2.4"/></svg>
<div class="a" style="left:1000px;top:458px;width:98px;height:71px;background:#f0f0f0;border:1px solid #888"></div>
<div class="a" style="left:1000px;top:467px;width:70px;height:20px;background:#fff;border:1px solid #777;border-left:none"></div>
<div class="t" style="left:1028px;top:471px;font-size:11px">40.00</div>
<div class="a" style="left:1069px;top:467px;width:24px;height:20px;background:#ff0000;border:1px solid #888"></div>

<!-- Color dialog -->
<div class="frame" style="left:564px;top:424px;width:461px;height:335px;border-color:#9a9a9a;background:linear-gradient(90deg,#9a9a9a 0%,#5a5a5a 1.5%,#3a3a3a 60%,#2a2a2a 99%,#bbb 100%)"></div>
<div class="a" style="left:565px;top:425px;width:459px;height:27px;border-radius:6px 6px 0 0;background:radial-gradient(ellipse 50px 18px at 50px 22px,rgba(180,195,215,.45),rgba(0,0,0,0) 100%),radial-gradient(ellipse 40px 14px at 590px 22px,rgba(120,150,170,.0),rgba(0,0,0,0) 100%),linear-gradient(90deg,#8a8a8a 0%,#767d86 5%,#5c636b 14%,#575757 22%,#4a4a4a 30%,#222 38%,#161616 42%,#2c3238 50%,#39414a 62%,#2c3238 75%,#202326 86%,#3a3a3a 100%),linear-gradient(rgba(255,255,255,.08),rgba(0,0,0,.15))"></div>
<div class="a" style="left:565px;top:452px;width:5px;height:306px;background:linear-gradient(90deg,#aaa,#777 40%,#444)"></div>
<div class="a" style="left:1019px;top:452px;width:5px;height:306px;background:linear-gradient(90deg,#444,#9ab 50%,#ddd)"></div>
<div class="a" style="left:565px;top:752px;width:459px;height:6px;background:#2a2a2a"></div>
<div class="t" style="left:572px;top:432px;font-size:12.5px;color:#111;transform:scaleX(0.9);transform-origin:0 0">Color</div>
<div class="a" style="left:972px;top:424px;width:48px;height:19px;border:1px solid #8a5a50;border-top:none;border-radius:0 0 5px 5px;background:linear-gradient(#e8a090 0%,#d07060 45%,#b83020 55%,#c04030 100%)"></div>
<svg class="a" style="left:990px;top:428px" width="12" height="10"><path d="M1.5 1.5L10.5 8.5M10.5 1.5L1.5 8.5" stroke="#fff" stroke-width="2.4"/></svg>
<div class="client" style="left:569px;top:452px;width:451px;height:301px;border-color:#777"></div>
<div class="t" style="left:577px;top:461px">Colores básicos:</div>
<div class="sw" style="left:581px;top:479px;background:#FF8080"></div><div class="sw" style="left:607px;top:479px;background:#FFFF80"></div><div class="sw" style="left:633px;top:479px;background:#80FF80"></div><div class="sw" style="left:659px;top:479px;background:#00FF80"></div><div class="sw" style="left:685px;top:479px;background:#80FFFF"></div><div class="sw" style="left:711px;top:479px;background:#0080FF"></div><div class="sw" style="left:737px;top:479px;background:#FF80C0"></div><div class="sw" style="left:763px;top:479px;background:#FF80FF"></div><div class="sw" style="left:581px;top:501px;background:#FF0000"></div><div class="sw" style="left:607px;top:501px;background:#FFFF00"></div><div class="sw" style="left:633px;top:501px;background:#80FF00"></div><div class="sw" style="left:659px;top:501px;background:#00FF40"></div><div class="sw" style="left:685px;top:501px;background:#00FFFF"></div><div class="sw" style="left:711px;top:501px;background:#0080C0"></div><div class="sw" style="left:737px;top:501px;background:#8080C0"></div><div class="sw" style="left:763px;top:501px;background:#FF00FF"></div><div class="sw" style="left:581px;top:523px;background:#804040"></div><div class="sw" style="left:607px;top:523px;background:#FF8040"></div><div class="sw" style="left:633px;top:523px;background:#00FF00"></div><div class="sw" style="left:659px;top:523px;background:#008080"></div><div class="sw" style="left:685px;top:523px;background:#004080"></div><div class="sw" style="left:711px;top:523px;background:#8080FF"></div><div class="sw" style="left:737px;top:523px;background:#800040"></div><div class="sw" style="left:763px;top:523px;background:#FF0080"></div><div class="sw" style="left:581px;top:545px;background:#800000"></div><div class="sw" style="left:607px;top:545px;background:#FF8000"></div><div class="sw" style="left:633px;top:545px;background:#008000"></div><div class="sw" style="left:659px;top:545px;background:#008040"></div><div class="sw" style="left:685px;top:545px;background:#0000FF"></div><div class="sw" style="left:711px;top:545px;background:#0000A0"></div><div class="sw" style="left:737px;top:545px;background:#800080"></div><div class="sw" style="left:763px;top:545px;background:#8000FF"></div><div class="sw" style="left:581px;top:567px;background:#400000"></div><div class="sw" style="left:607px;top:567px;background:#804000"></div><div class="sw" style="left:633px;top:567px;background:#004000"></div><div class="sw" style="left:659px;top:567px;background:#004040"></div><div class="sw" style="left:685px;top:567px;background:#000080"></div><div class="sw" style="left:711px;top:567px;background:#000040"></div><div class="sw" style="left:737px;top:567px;background:#400040"></div><div class="sw" style="left:763px;top:567px;background:#400080"></div><div class="sw" style="left:581px;top:589px;background:#000000"></div><div class="sw" style="left:607px;top:589px;background:#808000"></div><div class="sw" style="left:633px;top:589px;background:#808040"></div><div class="sw" style="left:659px;top:589px;background:#808080"></div><div class="sw" style="left:685px;top:589px;background:#408080"></div><div class="sw" style="left:711px;top:589px;background:#C0C0C0"></div><div class="sw" style="left:737px;top:589px;background:#400040"></div><div class="sw" style="left:763px;top:589px;background:#FFFFFF"></div><div class="sw" style="left:581px;top:645px;background:#ffffff"></div><div class="sw" style="left:607px;top:645px;background:#f0f0f0"></div><div class="sw" style="left:633px;top:645px;background:#e0e0e0"></div><div class="sw" style="left:659px;top:645px;background:#d0d0d0"></div><div class="sw" style="left:685px;top:645px;background:#c0c0c0"></div><div class="sw" style="left:711px;top:645px;background:#b0b0b0"></div><div class="sw" style="left:737px;top:645px;background:#a0a0a0"></div><div class="sw" style="left:763px;top:645px;background:#909090"></div><div class="sw" style="left:581px;top:667px;background:#808080"></div><div class="sw" style="left:607px;top:667px;background:#707070"></div><div class="sw" style="left:633px;top:667px;background:#606060"></div><div class="sw" style="left:659px;top:667px;background:#505050"></div><div class="sw" style="left:685px;top:667px;background:#404040"></div><div class="sw" style="left:711px;top:667px;background:#303030"></div><div class="sw" style="left:737px;top:667px;background:#202020"></div><div class="sw" style="left:763px;top:667px;background:#101010"></div>
<div class="a" style="left:630px;top:520px;width:25px;height:24px;border:1px dotted #000"></div>
<div class="a" style="left:632px;top:522px;width:21px;height:20px;border:2px solid #000"></div>
<div class="a" style="left:634px;top:524px;width:17px;height:16px;background:#00ff00"></div>
<div class="t" style="left:577px;top:626px">Colores personalizados:</div>
<div class="a" style="left:578px;top:698px;width:205px;height:21px;border:1px solid #adb2b5;border-radius:3px;background:#f4f4f4"></div>
<div class="t" style="left:578px;top:703px;width:205px;text-align:center;color:#9a9a9a">Definir colores personalizados &gt;&gt;</div>
<div class="btn" style="left:578px;top:724px;width:64px;height:21px;border-color:#3c7fb1;border-radius:3px;background:linear-gradient(#eaf6fd 0%,#d9f0fc 50%,#bee6fd 51%,#a7d9f5 100%);box-shadow:inset 0 0 0 1px #48d0ff"></div>
<div class="t" style="left:578px;top:729px;width:64px;text-align:center">Aceptar</div>
<div class="btn" style="left:650px;top:724px;width:64px;height:21px;border-radius:3px"></div>
<div class="t" style="left:650px;top:729px;width:64px;text-align:center">Cancelar</div>
<!-- spectrum -->
<div class="a" style="left:800px;top:461px;width:175px;height:186px;background:linear-gradient(rgba(128,128,128,0),#808080),linear-gradient(90deg,#f00 0%,#ff0 16.67%,#0f0 33.33%,#0ff 50%,#00f 66.67%,#f0f 83.33%,#f00 100%)"></div>
<div class="a" style="left:849px;top:461px;width:5px;height:2px;background:#000"></div>
<div class="a" style="left:862px;top:461px;width:5px;height:2px;background:#000"></div>
<div class="a" style="left:857px;top:464px;width:2px;height:5px;background:#000"></div>
<div class="a" style="left:991px;top:461px;width:11px;height:186px;border:1px solid #ccc;background:linear-gradient(#fff 0%,#00ff00 50%,#000 100%)"></div>
<div class="a" style="left:1004px;top:548px;width:0;height:0;border-top:6px solid transparent;border-bottom:6px solid transparent;border-right:6px solid #000"></div>
<div class="a" style="left:800px;top:655px;width:58px;height:40px;background:#00ff00"></div>
<div class="t" style="left:804px;top:700px;letter-spacing:-0.4px">Color|Sólido</div>
<div class="t" style="left:845px;top:660px;width:46px;text-align:right">Matiz:</div>
<div class="t" style="left:845px;top:682px;width:46px;text-align:right">Sat.:</div>
<div class="t" style="left:845px;top:705px;width:46px;text-align:right">Lum.:</div>
<div class="inp" style="left:895px;top:655px;width:26px;height:19px"></div>
<div class="inp" style="left:895px;top:677px;width:26px;height:19px"></div>
<div class="inp" style="left:895px;top:700px;width:26px;height:19px"></div>
<div class="t" style="left:898px;top:659px">80</div>
<div class="t" style="left:898px;top:681px">240</div>
<div class="t" style="left:898px;top:704px">120</div>
<div class="t" style="left:925px;top:660px;width:46px;text-align:right">Rojo:</div>
<div class="t" style="left:925px;top:682px;width:46px;text-align:right">Verde:</div>
<div class="t" style="left:925px;top:705px;width:46px;text-align:right">Azul:</div>
<div class="inp" style="left:975px;top:655px;width:27px;height:19px"></div>
<div class="inp" style="left:975px;top:677px;width:27px;height:19px"></div>
<div class="inp" style="left:975px;top:700px;width:27px;height:19px"></div>
<div class="t" style="left:978px;top:659px">0</div>
<div class="t" style="left:978px;top:681px">255</div>
<div class="t" style="left:978px;top:704px">0</div>
<div class="btn" style="left:800px;top:724px;width:211px;height:21px;border-radius:3px"></div>
<div class="t" style="left:800px;top:729px;width:211px;text-align:center">Agregar a los colores personalizados</div>

<div class="a" style="left:0;top:836px;width:1345px;height:1px;background:#ececec"></div><div class="a" style="left:18px;top:836px;width:1px;height:1px;background:#444"></div><div class="a" style="left:73px;top:836px;width:1px;height:1px;background:#444"></div>

</body></html>
